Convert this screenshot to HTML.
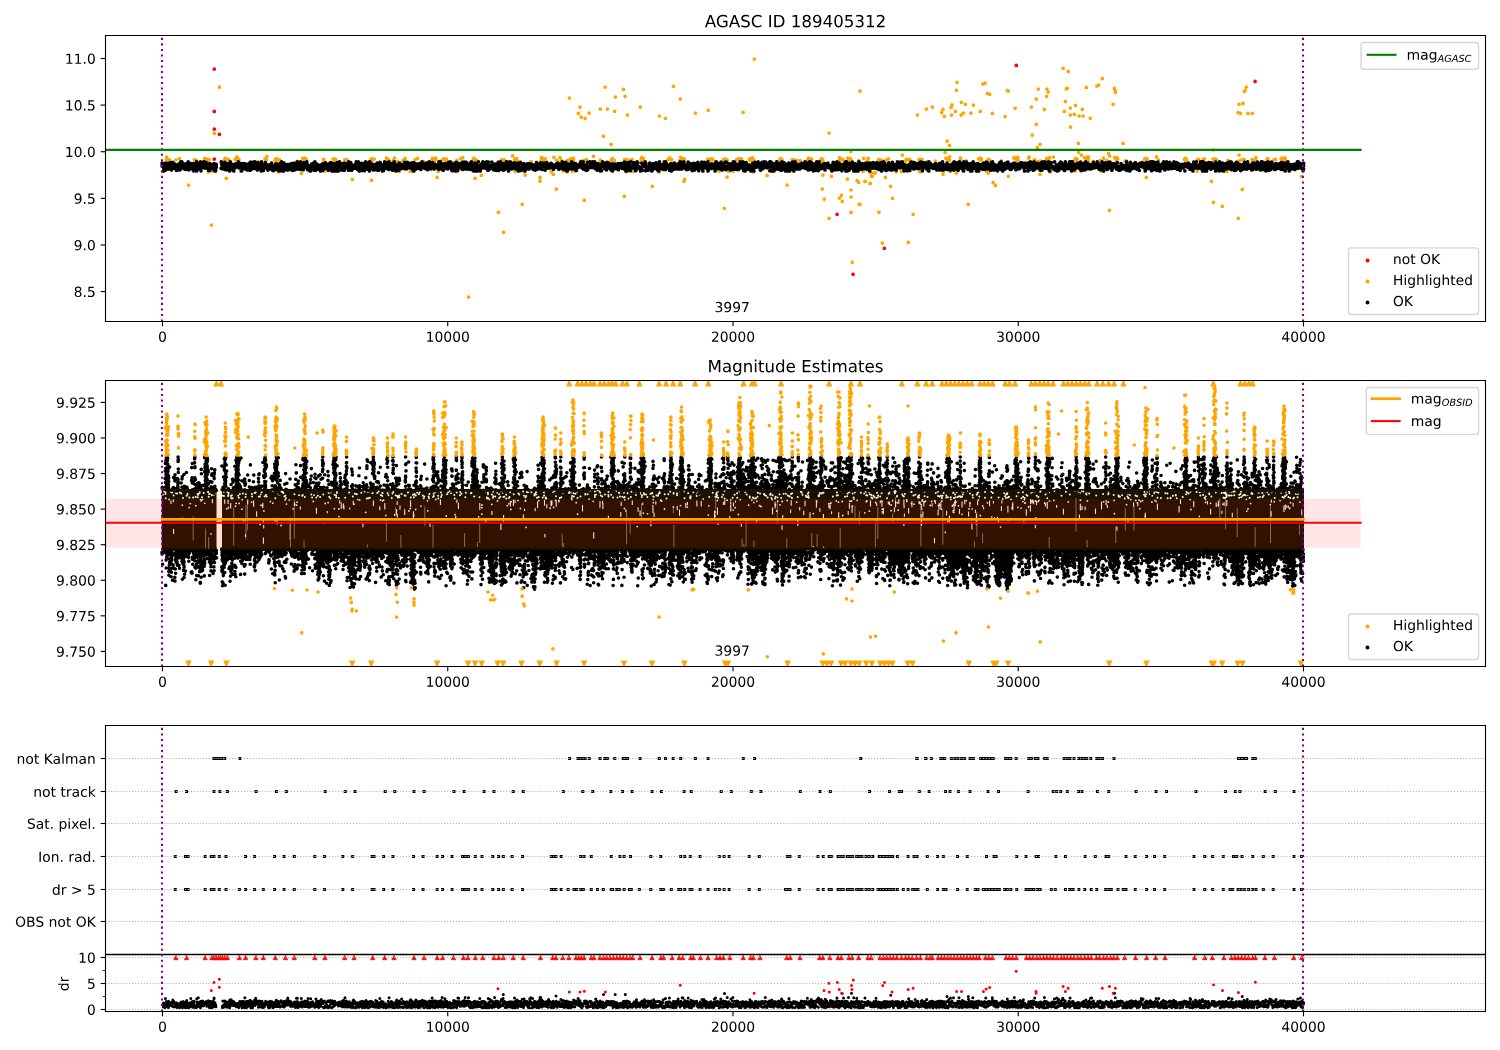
<!DOCTYPE html><html><head><meta charset="utf-8"><style>html,body{margin:0;padding:0;background:#fff}#w{position:relative;width:1500px;height:1050px;overflow:hidden;background:#fff}#w>svg{position:absolute;left:0;top:0}</style></head><body><div id="w"><svg width="1500" height="1050" viewBox="0 0 1500 1050"><path d="M163.2 171.4h0m3.2-11.9h0m0.1 0h0m0.1-2.4h0m0 1.3h0m0.1 1.1h0m0.1-0.4h0m1 0.3h0m1.4 2h0m0.5-1.2h0m6.2-0.2h0m3.5-1.5h0m9.2 26.6h0m5.8-25.3h0m1.8 0.2h0m8.5-1.3h0m0.5 1.1h0m0.3-0.1h0m0.2-0.8h0m1.2 0.8h0m0 0.4h0m1.3 11.8h0m0.4-11.7h0m0.5-0.6h0m2.3 65.5h0m1.8-53.9h0m1 0.3h0m0.1-38.1h0m5.1-46.3h0m4.8 73.1h0m1-1.9h0m0.3 1.2h0m0.3-0.6h0m0.5 19.4h0m2.4-18.8h0m6.5-0.1h0m1.5-2.4h0m0.3 1.9h0m0.1-1.9h0m0.2 2.6h0m0.2 0.5h0m1-0.9h0m0.4 0.1h0m19.3 2.6h0m6.8-2.9h0m0.8-0.2h0m0.3 1.4h0m0.2 0h0m0.5-3.5h0m8.3 3.9h0m0.5-0.5h0m0.2 0.1h0m0.3-1.6h0m0.5 1.6h0m0.1-0.6h0m0.4-0.6h0m1.1 13h0m1.4-12.1h0m17.6 1.4h0m4.2 12.1h0m1.3-14.8h0m0.8-0.3h0m0.3 0.7h0m0.7-0.2h0m0.9-0.5h0m0.3 2.1h0m0.2-1.2h0m0.3 0.5h0m4 11.4h0m13.2-11.8h0m0.3 0.1h0m0.5 2h0m0 9.8h0m8.9-12.1h0m0.7-0.2h0m0.4 1h0m0.6-0.1h0m0.2-0.2h0m0.5 0.7h0m0.2-1h0m0 0.8h0m9.1-0.4h0m2.2 0.2h0m5.3 19.5h0m18.7-20.3h0m0.4 21.2h0m0.8-21.5h0m0.4 1.7h0m0.2-1.2h0m1.4-0.3h0m12.2-0.8h0m1.9 1.2h0m4.8 1.1h0m1.4-2.5h0m2.7 3.3h0m2 10.1h0m3.7-10.9h0m2.2-2.1h0m0.1 3.6h0m5 9.2h0m2 0h0m3.1-11.6h0m2.3-1.2h0m5.6 3h0m8.7-1.2h0m0.6-1.8h0m0.4 2h0m1.3 1.4h0m1.4-3.7h0m0.1 1.5h0m1.4 17.8h0m1.1-6h0m4.1-11.4h0m0.5-0.4h0m0.8-0.7h0m0.4 0.7h0m0.9 0.2h0m0.2 0.2h0m1.4-0.8h0m0.1 0.9h0m10 0.5h0m0.3-0.1h0m0.3 11.1h0m3.4-12.8h0m2.1-1.1h0m5.9 139.4h0m4.6-137.9h0m0.2 1.3h0m0 0.1h0m0.5-2.3h0m0.1 1.2h0m0.4 0.2h0m0.5 0.4h0m0.2 18.2h0m1.2-18.2h0m5.1 15.3h0m16.8-13.4h0m0.1 50.3h0m0.3 0h0m3-52.4h0m1 0.6h0m0.3-0.1h0m0.5 71.9h0m0.6-72.7h0m0.1 0.6h0m4.1 1.6h0m4.3-5.9h0m2.2 4.2h0m0.3-1.2h0m0.1 0.1h0m0.1 12.4h0m1.6-12.7h0m0.4 2.2h0m3 0.7h0m2.1 42.7h0m1.9-32.8h0m0.9 3.6h0m6.1-13.5h0m8.8 15.8h0m0 3.7h0m1.3-20.5h0m0.1-2.9h0m0.2 1.2h0m0.9 1.2h0m0.2-1.8h0m0 1.6h0m1.9 0h0m0.6-1h0m1 2.8h0m5 10.2h0m2.2 2.4h0m0.5-16.9h0m2.4 31.7h0m0.5-28.8h0m3.2-2.8h0m1.2 2.9h0m2 10.6h0m4-10.4h0m0 11.4h0m2.2-74h0m0.1 61.9h0m1.2-0.8h0m0.6 1.2h0m0.9-0.2h0m0 11.1h0m0.3-12.8h0m0.2 1.4h0m0.5 1.6h0m0.2-1.8h0m0.2-1.3h0m4.7-44.9h0m1.7-6.3h0m1.1 10h0m0.1 44.1h0m2.7-0.7h0m0.4 39.8h0m0.8-82h0m0.1 42.5h0m1.2-1.3h0m2.7-46.4h0m4.3 43.2h0m6.9-47.2h0m0.1 51.1h0m0 0.2h0m3-24.1h0m1.7-49.2h0m2.3 22h0m3.7 35.2h0m0.2 16h0m0.4-0.4h0m0.2-0.8h0m0.2-0.6h0m0.3 0.2h0m0.7 1.5h0m0.7-0.1h0m0.4 0.3h0m0.4-49h0m0.8-14.3h0m8-7.7h0m0.9 106.9h0m0.3-36.6h0m0.5-63.4h0m1.1 75.5h0m0.5-12.2h0m0.7-44.5h0m2.6 45.4h0m2-1.2h0m1.2 11.9h0m7.1-64.1h0m0.8 52.5h0m0.4-1.4h0m0 1.4h0m0.2-0.9h0m0.3-1.1h0m1 1.4h0m0.1 0.5h0m0.2-1.1h0m9 27.9h0m6.8-14.3h0m0.3-56h0m6 2.3h0m2.6 41.3h0m1.1-0.4h0m0.5-1.3h0m2 2.1h0m0.2-0.2h0m1.6-73.5h0m6.7 74h0m0.1 0.7h0m0.1-61.9h0m0.2 61.3h0m0.1-3.1h0m1 2.6h0m1.1-0.6h0m0.2 0.1h0m0.5-0.5h0m0.6 22.5h0m0.2-22.2h0m0.4 20.2h0m10.8-66.3h0m12.5 46h0m0.4-48.8h0m0 49.8h0m0.5 0.2h0m1.3 0h0m0.2-0.5h0m0.8-0.5h0m0.2-0.4h0m1.5 0.3h0m2.4 2.6h0m4 9.4h0m4.2-11.6h0m0.9 48.7h0m0.6-49.2h0m0.4-0.2h0m1.8 18.2h0m0.1-16.8h0m1 10.7h0m1 0.2h0m4 0.1h0m3.5-11.8h0m1.8-0.5h0m0.1-0.1h0m1.1 0.1h0m0.3 0.1h0m0.1 1.2h0m0.6-0.5h0m0.7-1h0m1.7-46.5h0m6.2 47h0m0.8 1.2h0m0.7-1.9h0m0.4 0.5h0m0.4-1.1h0m0.2 2.3h0m0.9-2.4h0m0.5 14h0m0.6-11.8h0m0.5-101h0m12.8 116.3h0m7.1-4.3h0m5.6-11.3h0m0.3 0.4h0m0.2 0h0m0.2-1.5h0m0.1 1.4h0m0.4-0.7h0m0.2 1.2h0m0.1-0.3h0m0.7-0.8h0m5.1 25.6h0m5.1-25.2h0m1.4-0.1h0m3.1 0.5h0m3.4 0.3h0m7.7-0.8h0m0.8-0.3h0m0 0.4h0m0.1-1.7h0m1 1.3h0m1.2 0.9h0m0.2 0h0m0.5-1.2h0m9 0.8h0m0.5-0.6h0m0.8-0.7h0m0 1.6h0m0.4 28.8h0m0.3-29.6h0m0.3 15.6h0m0.3-13.1h0m1.1 37.1h0m4.8-66h0m0 85.2h0m2.3-42h0m8-16.5h0m0 38.2h0m0.1-40.5h0m0.4 0.4h0m0.3 2.3h0m0.4-0.6h0m0.2 0.2h0m0.1-0.6h0m0.5 36.2h0m0.9 6h0m0.5-41.7h0m2.4 2h0m2.2 17.4h0m0.5-20.9h0m0.6 2.2h0m0.3-1.4h0m0.3 0.4h0m0.5 0.6h0m0.6-1.5h0m0.3 1.3h0m0.4-8.4h0m0.1 8.4h0m0.1 30.2h0m0 7.1h0m0 15.2h0m1.2 50h0m4.8-81.7h0m1.5 1.7h0m0.1-21.8h0m0.4 43.8h0m0.9-113.2h0m0 113.2h0m3.2-32.9h0m0.4-13h0m1.3 23h0m0.5 0h0m1.8-20.4h0m0.7-2h0m0.3-0.8h0m1.8 25.2h0m0.3 0h0m0.6-10.5h0m0.5 3.4h0m0.9 0h0m2-3.4h0m1.1 0h0m3.1-13.3h0m0.4 52.7h0m0.2 0h0m0.7-52.3h0m0.1 0.3h0m0.1-0.2h0m1.4 0h0m0.9 83h0m3.1-65.7h0m0.4-17.2h0m2.6-1.3h0m2.2 27.4h0m2 12h0m3.6-26.5h0m5-0.5h0m1.1-16.2h0m2.9 6.5h0m1.1-2.2h0m0.5 0.8h0m0.5-0.2h0m1 82.3h0m0.6-83.2h0m1.5 1.4h0m2.7 53.8h0m4.3-99.2h0m1.7 44.5h0m0.1 11.4h0m0.8-12h0m0.2 12.8h0m0.2-11.3h0m0.2-0.1h0m1.3-0.7h0m4.4-50.6h0m0.9 52.4h0m5.1-54.4h0m2.9 54h0m6.5-48.5h0m1.2-3.2h0m0.2 64.9h0m0.1-3.2h0m1.1-54.8h0m0.8 36h0m0.9 5.9h0m1.1-17.1h0m0.4 18h0m0.7 0.9h0m0.3-1h0m0.5 1.2h0m0.4-14.8h0m0.2 14.7h0m0.1-3.3h0m0 3.5h0m0.5 11.1h0m0.9-64h0m0.3 7.7h0m0.6-10.2h0m3.4 6.5h0m0.9-21.1h0m0 82.8h0m0.8-90.8h0m3.3 75.7h0m0.3 1.5h0m0.4-44.4h0m0.3-12.8h0m2 10.8h0m2-8.8h0m0.8 56.6h0m2.1 43.4h0m2.6-91.2h0m2.5-8h0m5.1 53.7h0m1.1-0.3h0m0.7-47.1h0m0.2 48.5h0m0.4-1.9h0m0.5 1.2h0m1.5-75.2h0m2.2-0.9h0m1.1 88.1h0m1.2-77.8h0m0.6 66h0m0.3 13.7h0m1.1-13.5h0m0.3-65.3h0m2.6 19.1h0m0.8 69.2h0m2.3 2.8h0m5.8-24.5h0m3.9-44.3h0m2.3-26h0m0.9 0.5h0m0 85.2h0m5.4-18.4h0m1.4-49.6h0m0.3 49.5h0m0.5 0.7h0m0 0.5h0m1.1 1.5h0m0.2-1.2h0m0.6-2h0m0.3 2.5h0m10.6-1.7h0m0.5-0.9h0m2.2-50.1h0m0.9 28h0m2.1 24.5h0m0.5 1h0m1.4-61.5h0m0 25.2h0m0.9 37.2h0m0.2-13.8h0m0.9-58.6h0m1.7 55.2h0m0 30h0m0.2-13.2h0m4.1-51.7h0m2.3-13.1h0m0 62.5h0m0.3-69.7h0m0.5 69.2h0m0 2.2h0m0.5-0.8h0m0.3-0.4h0m0.1-67.3h0m0.3 68.5h0m0.3-0.9h0m0.5-1.9h0m0.8 4.3h0m0 9.9h0m3.2-14.8h0m9.7-88.8h0m1.2 43.1h0m1.1-10h0m0.9-12.5h0m1.1-0.6h0m0.9-16.9h0m2 36.6h0m0 7.1h0m0.3 12h0m0.6 44.4h0m3.1-57.2h0m0.7 45.5h0m0.2 11.3h0m0.1-12.4h0m0.1-53.3h0m0 53.3h0m0.6 1.9h0m1.2-1.6h0m1.1-15.6h0m0.3 8.9h0m0.5-36.3h0m2.3 39.1h0m0.9-45.7h0m0.8 6.6h0m1.5 41.6h0m1.7-70.2h0m0.1 71.8h0m0.1 0.4h0m0.2-2.5h0m0 3.3h0m0.5-0.8h0m1-0.4h0m0 2h0m0.5-4.1h0m1.6-38.8h0m2.9 43.1h0m3.7-75.4h0m1.7-0.9h0m1.6 75.6h0m1 10.3h0m1.1-92.4h0m1.2 79.6h0m3.1 2.3h0m2-7.1h0m0.8 56.9h0m0.3-54.3h0m3.4-51.7h0m1.2-16h0m0.4 69.4h0m0.4-67.1h0m0.3 1.7h0m0.2 66.1h0m0.6 1.6h0m0 0.2h0m0.5-2.6h0m0.9 1.3h0m0.1 0h0m0.1 0h0m5.3-15.5h0m2.1 17.6h0m1-0.1h0m18.4-1.7h0m0.9 0.1h0m0.3-0.9h0m0.2 2.1h0m0.2-0.5h0m0.1 17.4h0m0.4-17h0m0.2-1.5h0m0.7 1.6h0m2.6 1.4h0m6.3-5h0m2 3.1h0m25.8-0.4h0m0.5 0h0m0.7-1.6h0m0.3 2.5h0m0.2-1.3h0m0 0.5h0m0 0.9h0m0.3-1.2h0m10.9 0.5h0m0 11.2h0m1.4-11.8h0m4.7 0h0m1.1-0.4h0m7 22.5h0m1.8-22.4h0m0.2-9h0m0 52.3h0m0.3-42.6h0m0 0.2h0m0.1 0.3h0m0.3-0.3h0m1-0.3h0m0.7-0.4h0m0.5 0.8h0m6 46.3h0m2.9-35.1h0m2-0.1h0m0.8-10.5h0m0.3-0.1h0m9.7-47.9h0m0.2 48.6h0m0.1 57.1h0m0.8-114h0m0 50.8h0m1.5-41.7h0m0.7 46.6h0m1 29.4h0m0.8-86h0m0.9 56h0m0.3-68h0m0.8-0.8h0m1.2-3.5h0m1.7 26.3h0m4.1 46.1h0m0.1 0.9h0m0.1-47h0m3.1 46.6h0m0.1 0.2h0m0.4-2.7h0m11.1 1.5h0m0.8-0.5h0m6.2 1.3h0m1.6-0.5h0m5.5-0.5h0m0.7-0.7h0m2.9 2.2h0m0.1-0.2h0m0.1-2.2h0m0 1.8h0m0.1 0.5h0m0.2-1.2h0m16.2 17.3h0" stroke="#ffa500" stroke-width="3.7" style="stroke-linecap:round" fill="none"/><path d="M162.1 163.2h0m0 2.9h0m0.2-1.7h0m0.4-1.1h0m0.7 3.8h0m0 3.8h0m0.1-6.3h0m0.2 3.4h0m0.4-2.7h0m0.2 3.9h0m0.1-1.6h0m0.2 0.7h0m0.5-5h0m0.4 6.8h0m0.2-4.1h0m0.6 2h0m0.1-3.8h0m0.1-1h0m0.3 0.4h0m0.3 3.4h0m0.3 1h0m0.3-1.8h0m0 0.4h0m0.4 2.5h0m0.2-1.8h0m0 0.2h0m0.4-1.1h0m0.5 0.6h0m0.2-0.1h0m0 0.8h0m0.6-5h0m0 2.7h0m0 0.7h0m0.7-1.8h0m0 3.4h0m0.1 0.1h0m0.7 2.1h0m0.4-3.6h0m0.1-2.3h0m0.3 1.8h0m0.3-1.3h0m0.1-2.2h0m0.4 5.6h0m0.4-3.9h0m0.2 1h0m0.3 1.1h0m0.1 0.9h0m0.5 1.3h0m0.2-2.5h0m0.1-1.6h0m0.5 1.3h0m0.2 0.5h0m0.1-0.3h0m0 0.3h0m0.7 0.7h0m0.2 3.7h0m0.4-4.3h0m0.1 0.4h0m0.5 3h0m0.1-2.3h0m0.4-2.7h0m0 1.9h0m0.1 2.4h0m0.5-2.4h0m0.3-2.6h0m0.4 1.6h0m0.2 4.5h0m0.1-4.2h0m0.2 1.2h0m0.5-2.3h0m0.3-2.7h0m0.2 6.9h0m0.1-2.1h0m0 2.3h0m0.8-5.8h0m0.1-1.3h0m0.2 5.7h0m0.4-0.8h0m0.2-2.4h0m0.5-0.8h0m0.2 2.8h0m0.1-0.3h0m0.5-1.9h0m0.1 2h0m0.5 2.6h0m0.1-2.7h0m0.2-1.3h0m0.4 4.2h0m0.1-2.1h0m0.3 0.3h0m0.2 2.2h0m0.2-0.1h0m0.4-1.6h0m0.2-4h0m0.2 3.4h0m0.4-1.1h0m0.4-2.1h0m0 2.9h0m0 0h0m0.5-4.9h0m0 7.1h0m0.2-4.8h0m0.6 3.7h0m0 1.9h0m0.5-3.7h0m0.4 2.2h0m0.2-3.5h0m0.4-1.2h0m0.2 1.5h0m0.3 0.3h0m0 3.1h0m0.7-4.8h0m0.4 0.7h0m0.1 2.7h0m0.1-2.7h0m0.3-0.4h0m0.3 0.3h0m0.3 5.7h0m0.3-6.3h0m0 7.1h0m0.5-2.6h0m0.5-2.8h0m0 2.3h0m0.5-3.2h0m0.1 3.5h0m0.2-1.3h0m0.4 2.1h0m0.1-3.2h0m0.1 1.9h0m0.6 3.4h0m0.1-9h0m0.2 1.9h0m0.6 2.5h0m0.2-2.3h0m0.2 0.6h0m0.1 2.1h0m0.2-1.2h0m0.3 0h0m0.5 3.5h0m0.2-3.9h0m0.3 3.9h0m0.1-5.6h0m0.1 5h0m0.5-0.6h0m0.3-5.9h0m0.6 6.2h0m0 2.7h0m0.2-6.7h0m0.4 0.8h0m0.2 1.7h0m0.3-1.4h0m0.4-2.5h0m0.1 3.3h0m0.3 0.7h0m0.3 0.4h0m0.1-0.3h0m0.4-4.9h0m0 3.2h0m0.1-0.3h0m0.4-2.3h0m0.2 5.4h0m0.1-3.1h0m0.7 2.2h0m0.1-3.3h0m0 0.7h0m0.7-2h0m0 4.9h0m0.4-0.8h0m0.3 1.6h0m0.3-3.2h0m0.2 1.5h0m0.3-1.3h0m0.3-0.8h0m0.4 3.3h0m0 0.1h0m0.1-0.5h0m0.5 3.3h0m0.8-6.9h0m0 2h0m0.1 2.9h0m0.1 1.2h0m0.1 0.8h0m0.2-1.6h0m0.8-3.1h0m0.3 1.6h0m0.1-0.3h0m0.2-0.8h0m0.1-1.6h0m0.6 2.1h0m0.1 1.1h0m0.2-2.6h0m0.5-0.6h0m0.2-0.6h0m0.1 2.4h0m0.1-2.5h0m0.7 6.1h0m0.1-6.5h0m0.2 1.5h0m0.3 2.4h0m0.3-2h0m0.1 2.1h0m0.4 3.3h0m0.2-0.7h0m0.2-4.4h0m0.4-1.5h0m0 0.9h0m0 2h0m4.8 1.1h0m0.1-6.4h0m0.5 2h0m0.3 1.4h0m0.3 1.9h0m0.2-3.4h0m0.8 2.5h0m0 0.2h0m0 2.5h0m0.4-3.5h0m0.1 1.8h0m0.1 0.1h0m0.6-1.7h0m0.3-3.4h0m0.1 6.8h0m0.4-2.6h0m0.3 2.8h0m0 0.3h0m0.5-0.1h0m0.4-2.7h0m0.1 1.5h0m0.1 0.7h0m0.1-2.4h0m0.5-2.9h0m0.3 5h0m0 1h0m0.2-5.2h0m0.7 1h0m0.1 1h0m0.3 2.2h0m0.5-2.1h0m0.1 3.1h0m0.1 1.2h0m0.6-8.7h0m0.1-0.3h0m0.2 4.8h0m0.1-1h0m0.5-0.2h0m0.1 2h0m0.3-3.3h0m0.1 5.3h0m0.4-1.6h0m0.7 1.3h0m0.2-4.7h0m0 2.4h0m0.2-0.8h0m0.4 0.2h0m0.3 1h0m0 3.6h0m0.3-5.5h0m0.1 3.4h0m0.7-2.3h0m0.3 0.2h0m0 0.8h0m0.3-3.7h0m0.2 1.7h0m0.3-1.5h0m0.6 1h0m0.1 0.7h0m0.1 1h0m0.4 0.1h0m0.1-1.3h0m0.1-1.1h0m0.8 0.7h0m0.1-3.2h0m0 2.8h0m0.5 3.1h0m0.4-1.5h0m0.1-0.4h0m0.5 1.1h0m0.1-1.2h0m0.3-2.5h0m0.2 1.6h0m0.2 1.5h0m0.2-1.1h0m0.3 0.3h0m0.1 5.3h0m0.4 0h0m0.2-3.4h0m0.1-2.4h0m0.5 0.3h0m0.2-0.6h0m0.3-0.9h0m0.3-0.4h0m0.4 2.3h0m0 0.7h0m0 2.1h0m0.8-1.8h0m0.2-3h0m0.3 4.5h0m0.2-0.8h0m0.4-0.4h0m0.2 1.9h0m0.5-4.7h0m0 3.7h0m0.1 1h0m0.3-2.9h0m0.1 1.4h0m0.3 2.3h0m0.9-4.3h0m0.1 0.4h0m0 4.1h0m0.4-1.7h0m0.3-2.7h0m0.3 3.5h0m0.1-5.8h0m0.2 5.7h0m0.4-5h0m0.2 2.3h0m0.1 0.1h0m0.1 3.8h0m0.6-4.2h0m0.1-3.8h0m0.5 3.1h0m0.6 3.8h0m0.1-3.1h0m0.1 0.6h0m0.3 0.4h0m0.3-4.1h0m0.3 2.5h0m0.1 0.1h0m0.1 1.7h0m0.2 0.9h0m0.7-6.2h0m0.4 3.1h0m0 0.7h0m0.3-3.8h0m0.2 6.5h0m0.3-3.3h0m0.2 0h0m0.3 1h0m0.1-0.2h0m0.4 1.8h0m0.2 1h0m0.5 0.7h0m0.3 0.7h0m0.4-7.5h0m0 2.3h0m0.2 1.2h0m0.1-0.3h0m0.3-0.8h0m0.4-1.3h0m0.3 4.8h0m0.3-1.3h0m0.3-1.3h0m0.4-0.5h0m0 2.3h0m0.3-0.3h0m0.3-1.9h0m0 3.6h0m0.6-5.1h0m0 6.9h0m0.3-9h0m0.3 3h0m0.1 3.1h0m0.7-1.4h0m0.2-1h0m0.5 0.6h0m0 4.2h0m0.6-5.5h0m0.2 0.6h0m0 0.2h0m0.2-0.8h0m0 3.2h0m0.4-0.3h0m0.4-4.5h0m0.3-0.6h0m0 4h0m0.4-2.4h0m0.5 0.5h0m0 3.1h0m0.7-0.8h0m0.1-2.3h0m0.1 3.5h0m0.3-0.5h0m0.4 2.3h0m0.3-2.1h0m0.3 1.3h0m0.2-2.1h0m0.1-0.8h0m0.5-0.5h0m0.1 0.6h0m0.2-0.5h0m0.2 0.7h0m0.2-2h0m0.6 0.7h0m0.3 2.3h0m0.1-1.7h0m0.4 2.2h0m0.1 1h0m0.1-6.1h0m0.3 2.6h0m0.5 4.3h0m0.2-3.9h0m0.4 0.3h0m0.3-0.3h0m0.2 0.4h0m0 4.1h0m0.8-3.7h0m0 0.4h0m0.2-1.8h0m0.1 0h0m0.1 1.4h0m0.4 0.1h0m0.5 0.9h0m0.1-3.9h0m0 2.6h0m0.6 0.6h0m0.2 2.1h0m0.2-5.5h0m0.7 0.9h0m0.2 0.1h0m0.2 4.1h0m0.2-3.6h0m0 4.7h0m0.4-4.5h0m0.3 1.7h0m0.6-1.7h0m0.1 5.4h0m0.2-7.1h0m0.1 4h0m0.2-1h0m0.3 1h0m0.3-1.6h0m0.4-0.3h0m0.4 2h0m0.3-6h0m0.1 5.1h0m0.3-3.9h0m0 4.2h0m0.2 3.6h0m0.5-6.5h0m0.3-0.1h0m0.1 2.2h0m0.7 2h0m0 2.4h0m0.2-7.7h0m0.3 3.5h0m0 0.7h0m0.1 0.2h0m0.6 0h0m0.5-1.6h0m0.3 1.1h0m0.1 1.9h0m0.2-2.8h0m0.5-1.1h0m0 1.9h0m0.1-2.1h0m0.5 1h0m0.2-1.3h0m0.3 4.9h0m0 0.6h0m0.6-4.7h0m0.4 1.2h0m0.2 2.3h0m0.2-1.6h0m0.2-2.9h0m0.3 0.5h0m0.3 1.3h0m0.3 0.3h0m0.1-0.8h0m0.5 3.9h0m0.1-2.4h0m0.3-2.1h0m0.5-1.5h0m0 4.9h0m0.1-0.6h0m0.4-1.7h0m0.5 4.2h0m0.2-4.6h0m0.4-1.5h0m0.1 0.9h0m0.2-1.9h0m0.6 0.1h0m0.2 3.1h0m0.2 1.1h0m0 2.2h0m0.2-5.2h0m0.2 0h0m0.6 2.3h0m0.2-1.7h0m0.3-1.9h0m0.2 2.2h0m0.6 2.3h0m0 1.3h0m0.4-7.2h0m0 4.6h0m0.1 1h0m0.5-0.8h0m0.1-1.6h0m0.6 2.5h0m0.3 0.4h0m0 0.1h0m0.4 1h0m0.1-2.2h0m0.3-1.1h0m0.2-0.9h0m0.6-3h0m0.2 3.9h0m0.3 3.2h0m0 0.3h0m0.3-1.7h0m0.1 1.4h0m0.5-1.3h0m0 1.8h0m0.1-1.4h0m1.2-4.3h0m0 1.5h0m0 4.4h0m0.5-7h0m0.2 2.3h0m0.1 0.2h0m0.2 2.8h0m0.2-3.9h0m0.3 1.7h0m0.4 1.6h0m0.1-0.1h0m0.3-1.9h0m0.3 0.9h0m0.6-2h0m0 0.8h0m0.4 1.6h0m0.1-4.8h0m0.4 2.8h0m0.4 3.5h0m0 1.4h0m0.1-2.8h0m0.5 3h0m0.2-1.3h0m0.4-0.4h0m0.3 0.2h0m0.1-2.2h0m0.4-0.2h0m0.4 3.1h0m0.1-3h0m0.2 4.9h0m0.4-1.8h0m0.1-2.4h0m0.4 1.8h0m0.3-4.3h0m0.2 1.9h0m0.1 1.2h0m0.8-2.7h0m0 2h0m0.1-2.3h0m0.2-1h0m0.4 3h0m0.3-0.2h0m0.2 0.3h0m0.1 3.8h0m0.6-0.9h0m0.3-7.4h0m0.2 4.1h0m0.2 0.8h0m0.3 0.9h0m0 2.6h0m0.4-1.9h0m0.4 0.8h0m0.3-5h0m0.3 3.1h0m0.3-2.5h0m0 3.3h0m0.1 0.7h0m0.4-2.2h0m0.6 0.9h0m0 1.6h0m0.5-3.4h0m0.2 0.3h0m0.3 1.8h0m0.2-1.6h0m0 1.2h0m0.2-2h0m0.7 5.5h0m0.3-4.4h0m0.2-1.6h0m0 0.2h0m0.1 2.3h0m0.3-0.7h0m0.6 0h0m0.4-0.3h0m0 4h0m0.5-4.6h0m0.1-2.2h0m0.1 4.1h0m0.4-0.5h0m0 1.3h0m0.7-4.1h0m0.1 4.6h0m0.3-4.3h0m0.1 1.7h0m0.7 1h0m0.2-4.5h0m0.1 2h0m0.2 1.1h0m0.1-1.8h0m0.3 3.5h0m0.3 0.2h0m0.1 0.4h0m0.2-3.1h0m0.7 0.9h0m0.3 1.8h0m0.2-2.4h0m0.1 4.8h0m0.2-1.9h0m0.4-4.3h0m0.5 0.6h0m0 2.1h0m0.3-1.5h0m0.4 2.6h0m0.3 1.3h0m0.2-6.5h0m0.2 3.8h0m0.1-1.2h0m0.2-0.7h0m0.8 2.5h0m0.1 3.8h0m0.2-6.5h0m0.5 5.2h0m0.3-6.2h0m0.1 3.1h0m0.1 1.6h0m0.3-2.1h0m0.3 2.3h0m0.3-2.2h0m0 0.7h0m0.3 4.1h0m0.4-5.8h0m0.4-1.2h0m0.2 2.2h0m0.1-1.2h0m0.4 6h0m0.3-2.8h0m0.1-2.3h0m0.4 4h0m0.2-3.1h0m0.4-4h0m0.5 2.2h0m0 1.1h0m0.2 0.9h0m0.3 4h0m0.1-7.9h0m0.4 4.1h0m0.1 0.5h0m0.4-2.8h0m0.2 2.5h0m0.1-5.4h0m0.3 3.2h0m0.6 0.7h0m0.3 1h0m0.3-0.8h0m0.3-1.5h0m0.3 5.6h0m0.1-6.2h0m0.3 3h0m0.4 2.2h0m0.1-4.3h0m0.1 4.3h0m0.3-4h0m0 3.9h0m0.6-2.4h0m0.3-2.1h0m0.3 2.5h0m0.1-3.8h0m0 7.1h0m0.2-4.4h0m1 1.7h0m0.1-3.2h0m0.2 1.7h0m0.2 1.5h0m0.5-3.7h0m0.1 3.9h0m0.1-0.9h0m0.2 0.8h0m0.5-0.2h0m0.2-0.3h0m0.1-2.3h0m0.4-0.2h0m0.3-0.2h0m0.1 5.7h0m0.3-8.3h0m0.5 0.9h0m0.2 4.7h0m0.3-1.5h0m0.3-1.2h0m0.4 3.6h0m0.2-5.9h0m0.1 7.5h0m0.2-5.2h0m0.3-0.7h0m0.4 6.1h0m0.3-5.4h0m0.1 0.8h0m0.4 1.3h0m0.1-0.4h0m0.1 0.3h0m0.6 1.9h0m0.2-1.5h0m0.2-1.4h0m0.2 1.2h0m0.7 0.6h0m0.1-2h0m0.1-0.1h0m0.4 1.4h0m0.1-2.2h0m0.3 1.1h0m0.3 2.4h0m0.3-1h0m0.1-5.3h0m0.1 6.1h0m0.5-4.9h0m0.7-0.2h0m0.1-0.6h0m0.1 7.2h0m0.3-0.4h0m0.2-0.2h0m0.1-7h0m0.4 6.8h0m0.3-2.6h0m0.3 4.8h0m0.3-5.7h0m0.2 4.2h0m0.2 0.8h0m0.4-4.2h0m0.1 3.7h0m0.4-4.6h0m0.3 0.9h0m0.2-2.7h0m0.3 3h0m0.4 0.2h0m0 3.9h0m0.2-2.5h0m0.7-1.2h0m0.2-2.3h0m0 1.2h0m0.5 4h0m0.2-4h0m0 1.3h0m0.4-3.6h0m0.1 2h0m0.1 5.3h0m0.8-3.4h0m0.3-5.3h0m0 7.2h0m0.4-2.6h0m0.5 0h0m0.1-2.4h0m0.4 2.1h0m0.1 0.7h0m0.3 0.2h0m0.3-1.3h0m0.4 1.2h0m0 2.3h0m0.5-3h0m0.1-2.4h0m0 1.2h0m0.4-2.9h0m0.4 8.7h0m0.1-0.1h0m0.3-8.9h0m0 5.3h0m0.1 1.9h0m0.6-5h0m0.6 2h0m0.2 0h0m0.2 1h0m0.5-2.9h0m0 4.2h0m0.1-0.3h0m0.4-0.4h0m0.3-1.8h0m0.2-0.7h0m0.1 0.2h0m0.3 4.6h0m0.5-3.5h0m0.4 0.9h0m0.2 0.4h0m0.1-1.3h0m0 3.2h0m0.1-5.1h0m0.6 4.4h0m0.3-1.7h0m0.5 1.8h0m0.4-1.6h0m0.1 2.2h0m0.1-2.7h0m0.3-3.8h0m0.2 1.6h0m0.2 5.3h0m0.9-4.9h0m0 5.1h0m0.2-3.3h0m0.3-2.2h0m0.3 1.2h0m0.1 2.4h0m0.5 0.6h0m0.1-6.7h0m0.1 5.1h0m0.5-4h0m0 1.3h0m0.3 2.4h0m0.4-0.8h0m0.1-0.8h0m0.5 1.6h0m0.1-2.4h0m0.4 1.7h0m0.2 4.5h0m0.5-4.9h0m0.2 2.5h0m0.2 2.2h0m0.1-3h0m0.3-2h0m0 0h0m0.8-3.8h0m0 3.1h0m0.2 3.3h0m0.7-3.8h0m0 3.8h0m0.1-1.7h0m0.2 1.4h0m0.2-2h0m0.1-3h0m0.9-0.4h0m0.1 3.7h0m0.2-2.1h0m0.6 3.1h0m0.1 0h0m0.2 1.9h0m0.3-0.6h0m0.2-1.2h0m0.2-0.9h0m0.2-4.6h0m0.1 7.6h0m0.5-4.8h0m0.2 0h0m0.5-0.5h0m0.1 2.6h0m0.2-1h0m0.2 0.1h0m0 0.7h0m0.8-2.2h0m0.1 2.6h0m0.3-3.4h0m0.5 6.6h0m0.3-3.3h0m0.1 2.5h0m0.2-2h0m0.2-1.7h0m0 1h0m0.6-2.5h0m0.3-2.3h0m0.2 6h0m0.5-3.2h0m0.2 0.2h0m0.1-0.5h0m0.4 4.9h0m0.2 1.6h0m0.2-3.7h0m0.2 1.6h0m0.3-0.6h0m0.2 0.2h0m0.2 0.9h0m0.5-1h0m0.1-1.3h0m0.7-2.3h0m0 1.3h0m0.2 1.7h0m0.2 2.6h0m0.4-3.2h0m0.1-3.9h0m0.4 2.4h0m0.2-2.6h0m0.3 2.5h0m0.2-0.4h0m0.2 2.1h0m0.3 1.5h0m0.6-2.8h0m0.1-0.8h0m0.2 0.8h0m0.4-1.1h0m0.3 2.1h0m0.2-0.7h0m0.2 1h0m0.1-2h0m0.4-0.4h0m0.1 3.1h0m0.4-0.7h0m0.4-0.9h0m0.1 0.5h0m0.2-4.5h0m0 6.3h0m0.7-1.5h0m0.5-2.9h0m0.1-0.6h0m0.3 3.3h0m0.1-0.8h0m0.3 2.7h0m0.5-5.9h0m0 3.1h0m0.2-3.6h0m0.4 4.6h0m0.2-0.2h0m0.4-2.1h0m0.6 0.2h0m0.1 0.1h0m0 0.6h0m0.2-2.3h0m0.3 3.3h0m0.2-0.2h0m0.3 1.5h0m0.1-0.7h0m0.3-2.6h0m0.7-0.8h0m0.1 0.4h0m0.3-1h0m0.2 2.2h0m0.1 2.8h0m0 0.1h0m0.6-3.1h0m0 2h0m0.5-1.5h0m0.3 4.5h0m0.2-7.5h0m0.5 8.2h0m0.3-1.1h0m0.1-5.4h0m0.4 0.5h0m0.1 0.7h0m0.1-2.2h0m0.1 2.2h0m0.6 1.3h0m0 2.4h0m0.6-3.5h0m0.2 2.1h0m0.1-0.6h0m0.3-3.2h0m0.3 1.7h0m0.6 1.8h0m0.1 0.5h0m0.2-2.8h0m0.1 0.5h0m0.6 1.3h0m0.5-0.1h0m0.2-2.4h0m0 3.9h0m0.1-5h0m0.5 3.7h0m0.3 1.7h0m0.5-1.7h0m0.1 1.6h0m0.2 0.5h0m0.2-5.3h0m0.1 2.4h0m0.1 1h0m0.6-5.5h0m0.3 5.3h0m0.2-0.8h0m0.3-1.1h0m0.1 1h0m0.5-0.3h0m0 0.5h0m0.1 0.4h0m0.1-2.5h0m1 0.1h0m0.2 1.1h0m0.1 2.8h0m0.5-5h0m0.1 3.9h0m0.1-0.1h0m0.7-3.2h0m0 0.8h0m0 0h0m0.7 3.6h0m0.3-5.5h0m0 6.2h0m0.2 0.6h0m0.1-4.4h0m0.5 3h0m0.3-2.9h0m0.1 0.9h0m0.5-2.2h0m0.3-2.2h0m0.2 3.7h0m0.2-0.9h0m0.2 0.3h0m0.5 3.6h0m0.2-3.8h0m0.1 3.7h0m0 0.5h0m0.2-2.3h0m0.7-2.9h0m0.1 2.5h0m0.4-0.5h0m0.5-3.3h0m0.2 4.9h0m0.1 0.5h0m0.3-4.3h0m0.2 0.9h0m0.2 1.7h0m0.5 1h0m0.1 1.7h0m0.2-4.8h0m0.4 0.3h0m0.2 2.6h0m0.2-1.3h0m0.4 1.9h0m0.4-0.1h0m0.1-0.9h0m0.1-0.1h0m0.2-1.3h0m0.5 0.3h0m0.2 1.3h0m0 0.1h0m0 0.4h0m0.9-2.7h0m0.1 3.8h0m0.4 0.9h0m0.4-7.4h0m0.1 0.4h0m0.1 3.3h0m0.3 3.3h0m0.2-6h0m0.3 5.3h0m0.4-6.3h0m0.1 0.5h0m0.1 4.5h0m0.6 1h0m0.1-3.7h0m0 1.7h0m0.9 1.5h0m0.4-2h0m0 4.4h0m0.6-3.3h0m0.1-2.4h0m0.2 6.1h0m0.3-6.4h0m0.3 1h0m0 1.2h0m0.5-0.3h0m0.3-0.2h0m0.2-0.1h0m0.1 0.2h0m0.5 0.5h0m0.1-2.4h0m0.2 3.4h0m0.2 0.8h0m0.3-1.9h0m0.4-0.2h0m0.5-0.5h0m0 3.4h0m0.6 0.1h0m0.1-2.8h0m0.1 0.2h0m0.2-2.2h0m0.2 0.7h0m0.1-2.3h0m0.6 4.6h0m0.2-3h0m0.3 2h0m0.6-4.1h0m0.1 0.7h0m0 5.2h0m0.5-2.2h0m0.1-3.2h0m0.3 4.9h0m0.4 2.7h0m0.4-5.9h0m0 6.6h0m0.3-3.9h0m0.2-0.1h0m0.4-2h0m0 1.8h0m0.5-1.9h0m0 2.5h0m0.4-1.5h0m0.2 3h0m0.5-3.5h0m0.3-2.1h0m0.1 7.7h0m0.2 0.2h0m0.3-3.6h0m0.1-1.2h0m0.3 2.3h0m0.5-1.1h0m0.1-4.9h0m0.2 2.7h0m0.6 2.4h0m0.4 3h0m0.1-3.3h0m0 0h0m0.2-0.2h0m0.4-0.8h0m0.4 1.1h0m0.1-3.6h0m0.3 1.8h0m0.4 1.3h0m0.4-0.5h0m0.1 0h0m0.4-1.9h0m0.2 3.5h0m0.2-1.2h0m0.2-1.2h0m0.4-2.4h0m0.2 3.3h0m0.4-3h0m0.3 6.1h0m0.2-5.1h0m0.2-2.3h0m0.1 5h0m0.2-3.9h0m1 2.6h0m0 0.6h0m0.1 0.8h0m0.1 0.7h0m0.5-2.4h0m0 0.5h0m0.2-3.9h0m0.4 6.8h0m0.2-3.9h0m0.6-2.7h0m0 6h0m0.2-1.3h0m0.3-3.5h0m0 2.5h0m0.2-1.4h0m0.7 4.4h0m0.3-4.1h0m0 0h0m0.3 0h0m0.1 2.3h0m0.1-0.5h0m1.1-2.8h0m0 5.3h0m0.2-3.6h0m0.2 0.3h0m0.3-2.8h0m0.1 5.1h0m0.6 0h0m0.4-6.3h0m0.1 2.9h0m0 2.9h0m0.1 0.6h0m0.6-2.1h0m0.1 2.5h0m0 1h0m0.3-3.4h0m0.8 1.9h0m0.4-3.2h0m0.1 5.9h0m0.1-2.5h0m0.2-0.6h0m0.3 1.5h0m0.4-6.1h0m0.2 5.7h0m0.3 2h0m0.4-5.4h0m0 2.2h0m0.4-1.2h0m0.5-3h0m0.3 6.7h0m0.1-4.1h0m0.2 4.8h0m0.1-3.2h0m0.2-0.5h0m0.6-0.6h0m0.3-4.7h0m0.2 4.1h0m0 1.4h0m0.6 2.2h0m0.1-2.6h0m0.6-1.4h0m0.2 4.1h0m0.1-4h0m0 5.2h0m0.2-5.4h0m0 2h0m0.8-2.1h0m0.4 2.5h0m0.2-4.1h0m0.1 1.8h0m0.3 0h0m0.4 2.2h0m0.2-5.9h0m0.5 0.3h0m0 5.3h0m0.2-3.8h0m0.1 4.2h0m0.3-2.2h0m0.8 1.1h0m0.1 0.4h0m0.1-4h0m0.7 1.4h0m0.1 0.9h0m0 1.6h0m0.5-0.7h0m0.4-0.2h0m0 2.2h0m0.2-6.5h0m0.3 6.4h0m0.3-4.3h0m0.2 2.4h0m0.3-1.8h0m0 5.6h0m0.5-8.2h0m0.1 4.3h0m0.2 0.6h0m0.7 0.1h0m0 2.3h0m0.1-0.5h0m0.4-3.1h0m0.1 2.9h0m0.3-1.2h0m0.7-0.4h0m0.1-0.9h0m0.1 1h0m0.4-1.5h0m0.2-3.5h0m0.3 0.8h0m0.5 4.1h0m0.2-3.2h0m0 2.3h0m0.2 2.5h0m0.6 1.1h0m0.2-3.1h0m0.6-0.4h0m0 2.3h0m0.1-1.7h0m0.2-0.7h0m0 0.3h0m0 1.5h0m0.7-3.9h0m0.2 6.2h0m0.3 0h0m0.5-3.4h0m0.1-2.2h0m0.3-0.7h0m0.6 3.7h0m0.1 2.9h0m0.1-4.6h0m0.7 1.1h0m0.1-4.6h0m0.1 0.1h0m0.1 3.6h0m0.2 4.4h0m0.5-5.2h0m0.2-0.7h0m0.2 1.3h0m0.2-1.8h0m0.4 1.5h0m0.2-3.7h0m0.4 7.2h0m0.6-0.7h0m0.1-4.9h0m0.1 0.6h0m0.1 4.6h0m0.1-5.1h0m0.3 2.3h0m0.9-2.2h0m0.2 1.8h0m0.1 4.7h0m0.2-5.7h0m0.2 4.3h0m0.2-4.1h0m0.6 4.2h0m0.1-3.7h0m0.2 4h0m0.1-5.1h0m0.3 3.6h0m0.4-2.1h0m0.1 0.5h0m0.3-0.1h0m0.2-4.1h0m0.4 0h0m0.1 3.8h0m0.3 2.9h0m0.8-3.9h0m0.1 3.3h0m0.1 0.9h0m0.4-4.5h0m0 6.5h0m0.2-5.4h0m0.3-0.6h0m0.6 3.1h0m0.1-2.6h0m0.4 2.3h0m0.1-5.8h0m0.3 3.7h0m0.2 1.4h0m0.3-3.4h0m0.1-1.1h0m0.6 6.4h0m0.1-2.6h0m0.1 0.5h0m0.3-3.1h0m0.3 1.5h0m0.4 1.7h0m0.3-2.8h0m0 0.5h0m0.2 2.6h0m0.4 0.8h0m0.7-3.4h0m0.1-1.7h0m0.1 2.4h0m0.3 3.1h0m0.3-2.5h0m0.2-1.2h0m0.5 0h0m0.1 4.2h0m0.2-3.6h0m0.1 0.6h0m0.1 3.2h0m0.7-3.3h0m0.4-1.2h0m0.1 2.2h0m0.2-3.8h0m0.6 7.9h0m0.1-4.3h0m0.1 1h0m0.3-3.8h0m0.4 1.8h0m0.2 3.7h0m0.3-1.9h0m0.1 1.4h0m0.3-0.6h0m0.2-5.5h0m0.1 2.7h0m0.5 2.7h0m0 2.4h0m0.6-6.3h0m0.3 0.9h0m0 0.6h0m0 1.9h0m0.7-3.1h0m0.1 1.8h0m0.1-1.3h0m0.6 1.3h0m0.4-2.8h0m0.1 5.4h0m0.4-4.2h0m0.1 0.1h0m0.5 6.1h0m0.1-4.1h0m0 3.6h0m0.7-2.8h0m0.6-2.6h0m0 1.1h0m0.1 2.6h0m0.4-4.2h0m0.1 3.7h0m0.1-1h0m0.3 0.4h0m0.1-3.7h0m0.3 2.4h0m0.4 2.4h0m0.3-0.8h0m0.3-0.7h0m0.3 1.8h0m0.1-5.3h0m0.1 2.5h0m0.6-0.8h0m0.3 1.6h0m0.4 0.7h0m0.2-3h0m0.1 0.8h0m0.2-1.4h0m0.4 2h0m0.1-0.5h0m0.2 2h0m1-2.4h0m0 2.4h0m0.2-1.7h0m0.1-1.1h0m0.2 4.7h0m0.4-2.8h0m0.2 0.2h0m0.1-0.8h0m0.5 0.5h0m0.3 0.3h0m0.5 0.6h0m0 2.6h0m0.5-5.3h0m0 3.4h0m0.2-1.5h0m0.5-4h0m0.2 0.2h0m0.2 5.4h0m0.4-2h0m0.2-0.5h0m0 1.6h0m0.6 0.1h0m0.2 1.4h0m0.3-4.5h0m0.1 1.6h0m0.1-1.8h0m0.4 4.2h0m0.3-3.2h0m0.2-0.8h0m0.1 4.1h0m0.8-5.7h0m0.2 2.3h0m0.2 1.8h0m0.1-0.2h0m0.1 0.1h0m0.1-1.5h0m0.5 2.3h0m0.3 1.9h0m0.2-3.1h0m0.9 0.2h0m0.1-3.4h0m0 0.3h0m0.4 2.2h0m0.5-0.2h0m0 0.9h0m0.2-3.4h0m0.4 1.7h0m0 0.5h0m0.4 4.9h0m0.2-5.4h0m0.2 1.5h0m0.4 2.4h0m0.1-4.8h0m0.2 2.4h0m0.3-3.3h0m0 5.1h0m0.4-5.2h0m0.6 4.7h0m0.1-0.1h0m0.3-3.2h0m0.6 0.7h0m0 1.7h0m0.1-1.1h0m0.6 2.6h0m0.1-2.5h0m0.4-0.5h0m0.2 0.6h0m0.2 1.3h0m0.1 0.6h0m0.5-4.1h0m0.4-0.2h0m0.1 1.9h0m0.2-1.1h0m0.2 0.7h0m0.4-0.4h0m0.6 1.7h0m0.1 0.7h0m0 0.1h0m0.4 1.3h0m0.2 1.1h0m0.3-3.5h0m0.2-0.5h0m0 0.3h0m0.2 2.3h0m0.6-0.9h0m0.5-1.4h0m0.2 1.5h0m0.7-3.1h0m0 1.2h0m0 0h0m0.3 1.7h0m0.1-0.1h0m0.1 0.3h0m1-1.7h0m0.2-2.4h0m0 4.2h0m0.2-1.5h0m0.1-0.6h0m0.2 1.7h0m0.5 2.4h0m0.2-2.9h0m0.1-1.7h0m0.4 2h0m0.2-2.5h0m0.5 2h0m0 0.9h0m0 1h0m0.4-1.2h0m0.5-1.1h0m0.2 2.1h0m0.3-2.5h0m0.6 1h0m0.1-4.4h0m0.3 3.8h0m0.1 3.1h0m0.2-2.5h0m0.1-0.9h0m0.7 3.9h0m0.2-4.8h0m0.3-1.4h0m0 5.1h0m0.2-3.8h0m0.6-1h0m0.1 1.7h0m0.1 0h0m0.4 1.9h0m0.2-4.7h0m0.4 8.1h0m0.3-0.4h0m0.5-0.2h0m0.1 1.1h0m0.2-2.1h0m0.2-1.1h0m0.3-2.3h0m0.3-0.2h0m0.1-0.7h0m0.7-0.3h0m0.1 4.9h0m0.1-2.2h0m0 1.3h0m0.2-0.3h0m0.8-2.5h0m0 2h0m0.4-2.6h0m0.1 1.1h0m0.3 1.4h0m0.4 1.3h0m0.4-6.7h0m0.1 5.2h0m0.3 1.9h0m0.3-5.1h0m0.3 0.5h0m0 0.6h0m0.5 2.5h0m0 0.5h0m0.4-4.7h0m0.6 5.1h0m0.2-3.8h0m0.2 2.5h0m0.3 1.6h0m0.2-0.7h0m0.3-2.4h0m0.1-2h0m0.4 7h0m0.2-3.8h0m0.3 3.5h0m0.4-1.9h0m0.1-2.6h0m0.4 1.1h0m0.1-1.4h0m0.2 1.4h0m0.4-1.6h0m0.3-0.5h0m0 2h0m0.4-2h0m0.4 0.7h0m0.2 0.8h0m0.3-2.2h0m0.1 2.1h0m0.4 0.8h0m0.6-5.1h0m0 2.7h0m0.3 1.5h0m0.2 0.2h0m0.2-1.5h0m0 0.1h0m0.5-0.7h0m0 1.8h0m0.3 2.1h0m0.6-3.4h0m0.4-2.8h0m0 2.5h0m0.3 4.5h0m0.2-1.2h0m0.2 0.5h0m0.4-2.6h0m0.2-0.2h0m0.1-0.5h0m0.6 4.7h0m0.2-2.9h0m0.3 3.3h0m0.4-5h0m0.1 2.3h0m0.3 3h0m0.3-5.1h0m0 2.3h0m0.5 0.6h0m0.4-5.7h0m0 7.3h0m0.4-3h0m0.4-4.2h0m0.2 4.2h0m0.3 0.9h0m0.3-5.4h0m0 5h0m0.5-5.3h0m0.2 0h0m0.2 5.6h0m0.3-1.1h0m0.3-1.4h0m0 1h0m0.4 1h0m0.3-4h0m0.2 4.1h0m0.4-2.4h0m0.2 1.6h0m0 1.1h0m0.3-5.5h0m0.4 2.8h0m0.1 2.4h0m0.3-1.7h0m0.5-0.9h0m0.5 1.6h0m0.1 1.4h0m0.2-5.6h0m0.5 3.1h0m0.1-0.8h0m0.1 4.5h0m0.1-1.3h0m0.1-3.6h0m1.2 1.2h0m0 2.2h0m0.1 1.3h0m0.2-4.1h0m0.2 5.8h0m0.4-6.6h0m0.4 4.7h0m0.3-0.6h0m0.1-0.2h0m0.1-3.1h0m0.3 1.3h0m0.4 1.7h0m0.1-2.4h0m0.7-0.6h0m0.1 5.1h0m0.2-0.4h0m0.1 1.8h0m0.1-0.7h0m0.7-4.7h0m0.3 5.1h0m0.1-3.8h0m0.3-0.5h0m0.2-2.3h0m0.2 1.6h0m0.2-3.7h0m0.3 3.2h0m0.4 0.8h0m0.5-2.2h0m0 2.6h0m0.1-1h0m0.4-2h0m0.3 4.9h0m0.2-1.6h0m0.4-1.6h0m0 2.5h0m0 0.3h0m0.9 1.2h0m0.1-1.8h0m0.2 2.7h0m0.5-7.5h0m0.2 3.6h0m0.2-2.1h0m0.5 1.2h0m0.1-0.5h0m0.2-2.1h0m0.3 3.6h0m0.1-2.6h0m0 3.1h0m0.5 1.5h0m0.3-3.5h0m0.2-0.1h0m0.4 3.4h0m0.2-1.8h0m0.4-0.1h0m0.4 3.8h0m0.3 0.3h0m0.2-6.1h0m0.1-0.2h0m0.4 1.9h0m0.1-0.1h0m0.5 5.3h0m0.2-3h0m0.3 0.5h0m0.1-1.5h0m0 1.7h0m0.7-4.4h0m0 0.8h0m0.7 3h0m0.1-3.3h0m0.3 1.4h0m0.3-2h0m0 1.4h0m0.2-1.1h0m0.3 4.3h0m0.3-3.7h0m0.3-0.6h0m0 3.5h0m0.4-2.6h0m0.6 3.4h0m0.3-2.9h0m0.1 1.5h0m0.3-3.5h0m0.2 0.7h0m0.2 5.2h0m0.3-5.7h0m0.3 1.9h0m0.3 1.1h0m0.6-1.7h0m0.2 0h0m0.1-1.2h0m0.1-0.4h0m0.2 2.7h0m0.2-1.3h0m0.8-1.4h0m0 0.2h0m0.3 0.8h0m0.1-1h0m0.1 4.6h0m0.6-2.7h0m0 2.7h0m0.2-2.6h0m0.4-1.6h0m0.5-0.6h0m0 5h0m0.3 0.3h0m0.4-6.8h0m0.5 0.5h0m0 3.8h0m0.4-0.7h0m0 2.9h0m0.5-2.2h0m0 2.5h0m0.2 2.1h0m0.3-5.3h0m0.6 5.3h0m0.2-4.8h0m0 3.2h0m0.6-3.3h0m0 1.7h0m0.3-5.1h0m0.3 3.1h0m0.2-2.1h0m0.5 2.2h0m0 0.5h0m0.1-2.3h0m0.3 3.9h0m0.5-1.2h0m0.4 1.3h0m0.1 2.7h0m0.4-8.8h0m0.1 4.8h0m0 0.7h0m0.9 0.6h0m0.2-2.1h0m0.1 0.8h0m0.1-0.7h0m0.3-0.4h0m0.5 2.1h0m0.2-2.2h0m0.1 0.1h0m0.3-2.9h0m0.2 5.1h0m0.3-4.8h0m0.2 2.3h0m0.5 2.9h0m0.5 1.2h0m0.1-1h0m0.2 2.3h0m0.2-5.8h0m0.1 5.4h0m0.7-1.2h0m0.1-1.2h0m0.1-2.3h0m0.3-3.7h0m0 5.7h0m0.5 0.1h0m0.3-4.8h0m0.4 4.7h0m0.2-1.1h0m0.8 1.3h0m0.1-1h0m0 0h0m0.4 1.4h0m0.1-0.3h0m0.1 0.2h0m0.4 0.8h0m0.1 2h0m0.4-3.1h0m0.5 1.3h0m0.3-6h0m0 5h0m0.3-1h0m0.4 3.2h0m0.1-6.2h0m0.3-0.4h0m0.2 1.7h0m0.1 0h0m0.4-1.8h0m0.3 2.4h0m0.1-0.2h0m0.7-2h0m0.2-0.3h0m0.2 0.5h0m0.2-2.1h0m0.3 4.9h0m0.2 3.9h0m0.2-7.1h0m0.4 5.1h0m0.1-1.4h0m0.3 1.6h0m0.5-2.2h0m0 1.4h0m0.3 0.3h0m0.3 1.8h0m0.1-2h0m0.3 0.7h0m0.5-2.4h0m0.1-0.3h0m0.4-0.1h0m0 0.8h0m0.5-3.7h0m0.5 3.1h0m0.1-1.5h0m0.2 2h0m0.1-0.5h0m0 3.5h0m0.3-3.7h0m0.9 4.8h0m0.2-2.6h0m0.1 0h0m0.3-4.5h0m0 3.2h0m0 3.1h0m0.9-2.5h0m0.1 1.1h0m0.3-3.8h0m0.4 0.5h0m0.1-0.4h0m0.1-1.2h0m0.5 4.6h0m0.1-1.4h0m0.3-3h0m0.4 1.4h0m0.4 3.2h0m0.1-5.7h0m0.1 3h0m0 0.4h0m0.2-0.5h0m0.7 0.1h0m0 0.7h0m0.5 3.4h0m0.3-2.1h0m0.3-0.3h0m0.1 0.2h0m0.4-3.6h0m0 6.7h0m0.3-1.9h0m0.5-7.1h0m0 4.8h0m0.1-2.1h0m0.6 4.2h0m0.4-2.3h0m0.3 0.5h0m0.2-1.3h0m0.2 1.4h0m0.5-1.5h0m0.4 0.4h0m0.3-1.4h0m0 2.2h0m0.4 2.2h0m0.1-4.4h0m0.4 0.4h0m0.1 4.4h0m0.1-2.7h0m0.2-2.5h0m0.5-2.3h0m0.3 4.6h0m0.3 0.6h0m0.7-5.2h0m0 7.5h0m0.1-4.9h0m0.3 3.1h0m0.1-1.1h0m0.2-0.6h0m0.4 0.4h0m0.1-2.1h0m0.2 3.9h0m0.5-0.2h0m0.1-1.6h0m0.5-0.1h0m0.2 1.2h0m0.1-1.8h0m0.3 0.1h0m0.6 2h0m0.4-1.9h0m0 4.5h0m0.3-3.1h0m0.4 0.3h0m0.1-3.7h0m0.5 2.8h0m0.2-0.2h0m0.2 4.5h0m0.1-3.4h0m0.4-3.6h0m0.2 0.9h0m0.6 0.5h0m0 4.1h0m0.1-3.9h0m0.4 1.9h0m0.1 2h0m0.2-3h0m0.7-0.3h0m0.3-3h0m0.1 2.3h0m0.3 1.8h0m0.1 1.4h0m0.1-1.4h0m0.4-2.2h0m0 1h0m0.2 0.8h0m0.9-1.3h0m0.1 2.6h0m0.1 0.7h0m0.3-4.4h0m0 3.8h0m0.1-0.6h0m0.7 1.3h0m0.1-3.6h0m0.2-1h0m0.7 2.5h0m0.3 2.1h0m0.1-5.5h0m0.6 4.5h0m0.1 0.7h0m0.1-6.7h0m0.4 4.7h0m0.2-0.8h0m0.2-3.4h0m0.1 5.1h0m0.2 1.1h0m0.6 0.3h0m0.2-6.3h0m0.3 0.3h0m0.3 1.8h0m0 3h0m0.2 0h0m0.6-2h0m0.1 0.2h0m0.3-3.2h0m0.1-0.8h0m0.4 5.6h0m0.5-2.4h0m0 2.2h0m0.7-1.7h0m0.2 0.6h0m0.1 0.1h0m0 2.1h0m0.5-0.4h0m0 1.6h0m0.4-3h0m0.6-1.5h0m0 0.6h0m0.3 3.8h0m0.2-6h0m0.3-1.4h0m0.3 2.1h0m0.1 1.4h0m0.3 1.7h0m0.4-2.6h0m0.1-0.9h0m0.3 2.5h0m0.6 2h0m0.1-4.7h0m0.2 1.8h0m0.4-0.8h0m0.2 0.9h0m0 3.8h0m0.4-4.8h0m0.1 0.2h0m0.1 2.5h0m0.6 3.4h0m0.2-3.5h0m0.1 1.8h0m0.8-5.6h0m0.2 4.1h0m0 1.9h0m0.6-2.9h0m0.2-0.6h0m0.1 4.1h0m0.2-3.7h0m0.3 1.3h0m0.4-3.8h0m0.4 0.5h0m0.1 2.9h0m0.1 1.7h0m0.2-1.9h0m0.3 0.4h0m0.5-2.2h0m0.1 0.8h0m0.3-0.9h0m0.3 0.5h0m0.2-3.1h0m0.1 4.2h0m0.5-1.2h0m0.2-1.1h0m0.1 6.4h0m0.5-3.5h0m0.2-1.8h0m0 3.1h0m0.6-2h0m0.4-1h0m0.2-0.8h0m0 3.2h0m0.5-3h0m0.4 3.2h0m0.1-5.9h0m0.6 5h0m0.1-3.2h0m0 4.8h0m0.4-3.6h0m0.1 5.7h0m0.3-4.3h0m0.3 1.1h0m0.2-2.7h0m0.5 0.5h0m0.2-3.1h0m0 2.7h0m0.5-1.2h0m0.4 3.8h0m0.3-2.1h0m0.1-0.8h0m0.2 1h0m0.1 1.6h0m0.1 0.4h0m0.5 0.3h0m0.1-1.9h0m0.5 1.9h0m0.7-6.2h0m0 4h0m0.1 5h0m0.4-4h0m0.1-1.4h0m0.4 0.4h0m0.3 2.8h0m0.1-3.8h0m0.2 1.7h0m0.8-2h0m0.1 3h0m0.1-2.4h0m0.1 2.7h0m0.1 0.6h0m0.6 0h0m0.4-4.7h0m0.1 1.8h0m0.1 1h0m0.3-1.5h0m0.4-0.8h0m0 3.6h0m0.5-3.3h0m0.1 2.7h0m0.2-0.2h0m0.4-1.2h0m0.2 2.1h0m0.6-1.4h0m0.1-2.5h0m0.4 6.8h0m0.2-7.3h0m0.6 3.9h0m0.2-2.2h0m0.1-3.4h0m0.1 0.8h0m0.1 3.7h0m0.5-1h0m0.1 2.8h0m0.1 0.4h0m0.3-3.7h0m0.6 1.7h0m0.5-2.3h0m0.1-0.8h0m0.2 2.8h0m0.1-1h0m0 1.4h0m0.6-0.5h0m0.1 2.5h0m0.6-2.7h0m0 0.6h0m0.5-3.7h0m0 4.2h0m0.3-5h0m0.5 4.3h0m0.1 2.9h0m0.4-0.2h0m0.2 0.8h0m0.1-2.1h0m0.7-2h0m0.1 0.3h0m0 0.3h0m0.4 0.1h0m0 1.1h0m0.6-3.6h0m0.5 4.2h0m0.1-5.6h0m0.2 4.4h0m0.1 0.1h0m0.6-4.9h0m0.1 7.4h0m0.6-7.4h0m0 4.4h0m0.2 2.3h0m0.3-0.8h0m0.1-0.6h0m0.4-1.5h0m0.4 0.7h0m0 0.5h0m0.4-0.9h0m0.2-2.8h0m0 1.8h0m0 0.4h0m1 2.8h0m0.3-4.4h0m0 3.6h0m0.5-2.6h0m0 3.5h0m0.1 1.1h0m0.6-5.5h0m0.1 0h0m0.3 2.2h0m0.2 2.7h0m0.1 0.5h0m0.3-4.8h0m0.5 0.2h0m0.5 1.4h0m0.1 1.5h0m0.1-2.2h0m0.3-3.8h0m0.5 5.1h0m0.5-3h0m0 5.2h0m0.2-5.1h0m0.2-1.9h0m0.4 1.6h0m0.1 1.8h0m0.5 1.6h0m0.3-1h0m0.1 0.8h0m0.6-0.3h0m0.1 2.7h0m0.2-3.5h0m0.5-1.5h0m0.1 1.4h0m0.2-0.7h0m0 3.9h0m0.3-0.9h0m0.2-2.7h0m0.3 4.2h0m0.2-1.9h0m0.3-2.2h0m0.7-0.5h0m0.2 0.2h0m0.1-3.3h0m0.2 3.6h0m0 1.6h0m0.1-2.4h0m0.9 3.2h0m0.1-1.5h0m0.2-0.9h0m0.6 0h0m0.1-0.9h0m0.3-0.2h0m0.2-2.5h0m0 3.5h0m0.5 2.6h0m0.4 2.7h0m0.1-2.3h0m0.1-1.9h0m0.6 0.4h0m0.1-0.9h0m0.2-2.8h0m0.2 1.8h0m0.1 5.9h0m0.4-3.3h0m0.6 1.2h0m0.1-6.1h0m0.4 4.2h0m0.5-2h0m0 3.3h0m0.3-1.4h0m0.3-0.5h0m0.1 1.8h0m0.2-3.3h0m0.4 2.6h0m0.4 1.5h0m0 0.5h0m0.2-1.1h0m0.4-3.2h0m0.1-0.1h0m0.6 2.5h0m0.1-1.2h0m0 1.4h0m0.5-0.4h0m0.3 3.6h0m0.3-3.5h0m0.3-1.8h0m0.1-0.4h0m0.5 0.6h0m0 3.2h0m0.5-5.6h0m0 3.5h0m0.4 1.5h0m0.4-1.9h0m0.1-2h0m0.3 6.4h0m0.5-5.1h0m0.1 1.8h0m0.3-5.2h0m0.4 4.3h0m0.1 0.1h0m0.3-1.5h0m0.1 2.2h0m0.1-2.6h0m0.7 2.1h0m0.1-1.6h0m0.4-0.6h0m0.2-1.9h0m0 1.6h0m0.2 2h0m0.7-4.6h0m0.1 2.9h0m0.1 1.2h0m0.7-1.6h0m0.1 1.2h0m0 1.1h0m0.5-3.2h0m0.2 4.2h0m0.3-2.4h0m0.2 4.4h0m0.3-5.8h0m0 6.3h0m0.4-5.2h0m0.2 0.7h0m0 1.9h0m0.8-5.2h0m0.1 5.4h0m0.2-0.8h0m0.4 1.7h0m0.3-3.4h0m0.2 2.9h0m0.4-2.9h0m0.1 2.3h0m0.2-3.5h0m0.3-2.2h0m0 1.8h0m0.8 2.2h0m0 0.6h0m0.4-1.8h0m0.2 0.9h0m0.2-3.6h0m0.4 4h0m0.3-2.2h0m0.5 4h0m0.1-1.5h0m0.1 0.5h0m0.3-3h0m0.1 2.5h0m0.3-0.6h0m0.4-0.9h0m0.2 2.1h0m0.1-1h0m0.7-1.4h0m0.5-2.6h0m0 3.3h0m0 5.5h0m0.1-6.6h0m0.3 0.5h0m0.7-2.7h0m0 5.2h0m0.3 3.8h0m0.2-2.1h0m0.3 0h0m0.3-0.2h0m0.7-0.9h0m0.2-1.1h0m0 3.1h0m0.4-3.6h0m0.1 4.8h0m0.3-7.3h0m0.3 1h0m0 2.6h0m0 0.9h0m0.6-1.5h0m0.5 3.1h0m0.2-1.4h0m0.4-1.5h0m0.3 0.6h0m0.2 1.2h0m0.2-2.9h0m0.3-3.8h0m0.1 0h0m0.5 5.2h0m0.2 1.5h0m0.1-3.1h0m0.3 0h0m0.4 1.5h0m0.1-2.7h0m0.8 3.4h0m0.1 1.8h0m0.1-1.8h0m0.1 1h0m0.5-3.8h0m0.1-1.5h0m0.3 2.4h0m0.4-1.1h0m0.1 3.5h0m0.3 2.1h0m0.3-2.2h0m0.1-4.1h0m0.2 1.7h0m0 1.1h0m0.3-4.9h0m0.8 7.5h0m0.1-4.1h0m0.3 1.5h0m0.3-4h0m0.1 4.6h0m0.3-0.5h0m0.4 2h0m0.1-5.7h0m0.2 1.3h0m0.3 2.9h0m0 2.7h0m0.6 0.8h0m0.3-4.8h0m0 3.3h0m0.5-3.6h0m0.5 3.9h0m0.2-3.8h0m0.1 5h0m0.2-6.8h0m0.7 0.3h0m0.1 1.9h0m0.1 1.2h0m0.1 0.7h0m0.3-5.2h0m0.3 3.1h0m0.6 0.8h0m0.1 4h0m0.3-4.1h0m0.4 2.3h0m0.2-3.7h0m0.2-0.8h0m0.2 1.7h0m0 0h0m0.4-3.2h0m0.2 4.4h0m0.5-0.2h0m0.1 0h0m0.4-5.3h0m0.2 5h0m0.4 2.6h0m0.2-5.1h0m0.4 6.4h0m0.1-2.1h0m0 0.4h0m0.3-0.8h0m0.5-5h0m0.3-1.5h0m0.1 2.5h0m0.8 2.8h0m0.1-1.4h0m0.1-1.1h0m0.2-0.5h0m0 2.2h0m0.4-0.6h0m0.3 3.1h0m0.3-0.5h0m0.2-0.5h0m0.4-0.3h0m0.3-1.6h0m0.2 1.8h0m0.3-3.4h0m0.2 0.3h0m0.1 0.5h0m0.6 3.1h0m0.1 0.7h0m0.3-2.5h0m0.4 1h0m0.1-3.3h0m0.1 3.9h0m0.9-1.2h0m0.2-3.6h0m0 1.9h0m0.2-1.9h0m0.1 4.2h0m0.6-1.9h0m0.2 0.9h0m0 0.5h0m0.1-2.4h0m0.5 0h0m0.2-0.9h0m0.5-0.1h0m0.2 2.4h0m0.3 2h0m0.4-6.1h0m0.1 4.3h0m0.1-3.6h0m0.3 2.4h0m0.5-2.6h0m0.5 6.2h0m0.1-0.6h0m0.2-2.6h0m0.1 2.6h0m0.3-4.1h0m0.4 2.5h0m0.5-1.6h0m0 1.7h0m0.3-0.3h0m0 3.7h0m0.2-2.6h0m1.1-5.4h0m0 4.9h0m0.1-4.2h0m0.1 3.3h0m0.4-4h0m0.2 4.3h0m0.2-1.4h0m0.3 0h0m0.1-2.2h0m0.4 2.8h0m0 4.1h0m0.5-4.8h0m0.4 1.4h0m0 1h0m0.3-3.5h0m0.4 6.5h0m0.3 0.7h0m0.2-4.8h0m0.3 3.5h0m0.3-5h0m0.1 1.8h0m0.6-1.9h0m0 2.6h0m0.1-2h0m0.5-1.1h0m0.3-0.2h0m0.2 6.6h0m0.5-3.8h0m0.2-4.6h0m0 5.4h0m0.7 2.6h0m0 0.4h0m0.1-3.9h0m0.5 1.2h0m0.4 3h0m0.2-3h0m0.2 2h0m0.3-7.7h0m0.2 2.1h0m0.3 2.3h0m0.1-0.4h0m0.3 3.1h0m0.5-3h0m0.3 0.1h0m0 0.1h0m0.5 1.1h0m0.4-0.4h0m0 1.2h0m0.1 0.2h0m0.2-2.5h0m0.1-0.7h0m0.8 1h0m0.1 0.7h0m0.2-2.7h0m0.3 2h0m0.3 1.5h0m0.2-1.1h0m0.5-3h0m0.2 0.8h0m0 2h0m0.3 3.6h0m0.3-3.2h0m0.3-1.7h0m0.5-0.7h0m0.3 2.6h0m0.1-0.5h0m0.4-0.9h0m0.2-0.3h0m0.2 1.6h0m0.2 0.3h0m0.1-2.2h0m0.4-1.8h0m0.4 2.1h0m0.1 1.1h0m0.3 0.8h0m0.3 0.7h0m0.5-1.6h0m0.1 0h0m0.2 1.8h0m0.2-2.2h0m0.2 0.9h0m0.4 0.1h0m0.5 1.5h0m0.2 1.3h0m0.4-1.3h0m0.1-3.3h0m0 5.9h0m0.7-3.2h0m0.1-1.6h0m0.2-2h0m0.2 4.6h0m0.1-6.4h0m0.5 2h0m0.2 1.7h0m0.1 0h0m0 1.2h0m0.7 2.1h0m0.1-3.4h0m0.4 3.9h0m0.6-3.3h0m0 1.8h0m0.1-5.5h0m0.3 2.7h0m0.3 1.5h0m0.3 1.2h0m0.2-6.3h0m0.2 5.8h0m0.5 1.9h0m0.1-3.4h0m0.4-0.4h0m0.2 0h0m0.2-1.4h0m0.4-0.6h0m0.1-0.6h0m0.4 3.2h0m0.1-0.1h0m0 2.4h0m0.8-3.6h0m0.2 4.5h0m0.2-0.7h0m0.3-1.8h0m0.4-1h0m0.1 3.7h0m0.3-3.3h0m0 4.2h0m0.5-6.1h0m0.4 2.7h0m0.5-2.4h0m0 0.5h0m0.2-1.2h0m0 0.4h0m0.6 2.1h0m0.3 1.5h0m0.1-1.6h0m0.5 1.2h0m0.3-5.6h0m0 1.6h0m0.4-1.8h0m0.2 8.9h0m0.2-6.9h0m0.3-2.1h0m0.5 4.3h0m0.1 0.7h0m0.3 4h0m0.1-4.9h0m0.4-1.3h0m0.2-0.7h0m0.3 2.1h0m0.5 1h0m0.1-2.1h0m0.1 1h0m0.1 4.1h0m0.1-6.7h0m0.7 0.6h0m0.4-0.3h0m0 1.2h0m0.4 0.9h0m0.7 0h0m0 1.4h0m0.1-1.6h0m0 2.6h0m0.2-1h0m0.5-1h0m0.2-4h0m0.4 4h0m0.6-2h0m0 1.2h0m0.4 5.5h0m0.2-3.5h0m0.2-1.9h0m0.4 2h0m0 0.3h0m0.6-3.9h0m0.1 1.7h0m0.1 5.3h0m0.6-6.9h0m0 0.6h0m0.5 1.9h0m0.1 2.5h0m0.2-0.4h0m0.3 0.7h0m0.3-2.8h0m0.1-0.6h0m0.6 5h0m0.1-0.5h0m0.2-1.8h0m0.5-6.7h0m0.1 6.1h0m0.1 0.7h0m0.3-4.6h0m0.2 5h0m0.4-4.5h0m0.6 3.4h0m0.3 0.9h0m0.1-4.8h0m0.2 0.7h0m0 1.8h0m0.6-0.1h0m0 2.8h0m0.1-3.2h0m0.1-2.5h0m0.7 2.5h0m0.3-0.8h0m0.4 0.7h0m0.1 0.8h0m0.1 1.5h0m0.2-1.1h0m0.6-0.6h0m0.2-3.1h0m0 5.1h0m0.7-3.5h0m0.2 1h0m0.2-1.7h0m0.2 2.7h0m0 0.7h0m0.6-4.8h0m0.3 6.1h0m0.2 0.2h0m0.2-1.7h0m0.4 1h0m0.1-4.1h0m0.4-0.7h0m0.2 2.7h0m0.5-0.8h0m0.1 1.7h0m0.2-4.4h0m0.2 3.6h0m0.4 4.3h0m0.7-7.7h0m0 1.5h0m0.2 1h0m0.2-1.4h0m0.3 1.3h0m0.2 0.8h0m0.4-1.8h0m0.2 0.7h0m0.2-0.9h0m0.2 3.8h0m0.1-3.3h0m0 2.5h0m0.8-4.7h0m0.2 4.9h0m0.1-2.8h0m0.9 1.1h0m0.1-1.2h0m0.1-0.3h0m0.4 0.9h0m0.3 2.9h0m0.1-0.7h0m0.1-0.6h0m0.3-2.6h0m0.1 1.7h0m0.5 1.3h0m0.3 1.1h0m0.1-5.8h0m0.2 3.3h0m0.1-0.2h0m0.2 2.8h0m0.8-2.7h0m0.1 3h0m0.4 0.5h0m0.1-0.3h0m0.2-5.6h0m0.2 0.9h0m0.5 1.8h0m0.1 3.3h0m0.5-6.2h0m0 3.5h0m0.1 1.6h0m0.3-1.6h0m0.7-4.2h0m0.1 2.3h0m0.3 6.1h0m0.1-6.7h0m0.2 4.4h0m0.2-1.9h0m0.6 0.4h0m0.2 1.7h0m0.2-4.3h0m0.3-2.6h0m0.1 3.4h0m0.1 0.1h0m0.6 1.1h0m0 2h0m0.4-4.9h0m0.4 3.4h0m0.3-2.4h0m0.3 1.3h0m0.1-1h0m0.2 5.6h0m0.4-4.2h0m0.4 2h0m0 0.3h0m0.3-0.2h0m0.6-0.4h0m0.1-1.4h0m0 0.2h0m0.5 2.4h0m0.1 0.2h0m0.3-6.6h0m0.4 2.7h0m0.3-0.3h0m0.4-0.6h0m0.4 1.5h0m0 1.1h0m0 2.4h0m0.5-3.2h0m0.3 1.6h0m0.2 1.9h0m0.6-3.5h0m0.1 3.5h0m0.1 0h0m0.3-7.6h0m0.4 3.6h0m0.1-1.4h0m0.4-0.2h0m0 2.6h0m0.4 2.1h0m0.4-3.9h0m0.4-0.6h0m0.2 2h0m0 0.3h0m0.4-1.5h0m0.2 4.2h0m0.3-2.8h0m0.2 2.2h0m0.3-1.6h0m0.2 2.8h0m0.3-3h0m0.3-2.1h0m0.3-1.4h0m0 3.5h0m0.3-5.2h0m0.7 3.3h0m0.2-0.7h0m0.1-0.3h0m0.3 0.7h0m0.1 2.6h0m0.6-0.7h0m0.1-1.8h0m0.5-0.7h0m0.1 3.5h0m0.3-5.7h0m0 3.6h0m0.4-0.3h0m0.7 0.3h0m0 1.2h0m0.1-0.7h0m0.5 0.5h0m0.2-4.8h0m0.1 3.1h0m0.3 2h0m0.1-3h0m0.6 3.9h0m0.2-1.3h0m0.2-0.2h0m0.3 4.4h0m0.1-3.4h0m0.4-0.6h0m0.1-2h0m0.4 2.1h0m0.2-1.9h0m0 2.5h0m0.6-1h0m0.3 0.8h0m0.1 0.4h0m0.8 0.7h0m0 2.4h0m0.2-0.3h0m0.4-2.7h0m0.1-2.2h0m0.2 1.4h0m0.2-0.7h0m0.2 0.1h0m0.6-1.8h0m0.3 3.6h0m0.3-3.4h0m0.2 5.6h0m0.1-4.3h0m0.3 1.7h0m0.3-1.9h0m0.1-1.2h0m0.3-2.4h0m0.1-0.1h0m0.4 4.7h0m0 0.2h0m0.5-1.2h0m0.9-0.1h0m0.1 2.4h0m0.1-0.3h0m0.2-5.5h0m0.1 1.1h0m0.2 3.1h0m0.4 2.3h0m0.2-5.5h0m0.2 3.4h0m0.3-3.9h0m0.2-0.1h0m0.2 0.8h0m0.6 4.1h0m0.3-1.4h0m0.1-2.1h0m0.2 2.9h0m0.1-0.7h0m0 1.9h0m1.1-0.8h0m0.2-2.4h0m0 1.9h0m0.3-2.4h0m0.2 2.2h0m0.2-3.4h0m0.8 5.1h0m0.1-4.5h0m0 2.6h0m0.5 0.6h0m0.1-0.1h0m0.4-4.8h0m0.5-0.2h0m0.2-0.1h0m0 3.7h0m0.1-1.8h0m0.4 3h0m0.4-1h0m0 1.7h0m0.6 3.2h0m0.1-2.3h0m0.5-3.7h0m0.1-2.1h0m0 2.3h0m0.6 3h0m0.4-2.8h0m0 1.7h0m0.2-3.5h0m0.1 1.5h0m0.2 0.1h0m0.6 2.1h0m0.2-0.9h0m0.3-3.4h0m0.4 4.9h0m0.2-1.7h0m0.3-0.2h0m0.2-0.5h0m0.1 2.4h0m0.2 1.5h0m0.4-3h0m0.3 3.8h0m0.4-1.1h0m0.7-7h0m0 3h0m0 6h0m0.3-5.1h0m0.2-0.9h0m0.1 1.2h0m0.5-2.9h0m0.2 4.2h0m0.3-3.9h0m0.5 2.3h0m0.1-0.5h0m0.1 0.9h0m0.4 0.1h0m0.2-1.2h0m0.3 0.3h0m0.2 2.1h0m0.4-2h0m0 1.9h0m0.6 1h0m0.4-2.1h0m0.1-1.5h0m0.2 1.6h0m0.1 1.2h0m0.4 0.4h0m0.3-2.2h0m0.5-0.9h0m0 1h0m0.2 0.2h0m0.1-2.4h0m0.1 1.5h0m0.8 3.3h0m0.4-0.2h0m0 1.6h0m0.2-3.8h0m0.2 1.6h0m0.4-2.5h0m0.2 0.8h0m0.1 0.3h0m0.4 1.8h0m0.6-0.3h0m0.2-2.9h0m0.1 3.1h0m0.1-4.5h0m0.3 6.3h0m0.1-0.2h0m0.8-1.9h0m0.1-1.6h0m0 3.5h0m0.4-1.4h0m0.3-5.1h0m0.1 6.7h0m0.9-2.9h0m0.1-5h0m0 5.1h0m0.5-0.6h0m0.1 3.5h0m0.1-1.1h0m0.2-0.6h0m0.1-3.7h0m0.5 2.9h0m0.5 0.9h0m0 0.1h0m0.3-2.7h0m0.5 0.2h0m0 1.4h0m0.2-0.2h0m0.4 2h0m0.4-4.1h0m0.2 3.3h0m0.4-1.7h0m0 2.8h0m0.1-6.4h0m0.5 5.9h0m0.2-4.6h0m0 5.1h0m0.8-3.6h0m0.3 1.4h0m0 0.2h0m0.3-0.9h0m0.1 1.4h0m0.3 0.8h0m0.5-2.3h0m0.4-1.2h0m0 4.9h0m0.4-1.4h0m0.1-3h0m0.2 3.6h0m0.7-1.7h0m0.3-3.5h0m0.1 4h0m0.4-3.2h0m0 2.7h0m0.2-0.9h0m0.4 1.8h0m0.4-3.9h0m0.1 5.5h0m0.4-8.2h0m0.1 3.7h0m0.2 1.8h0m0.4-3.9h0m0.2-1h0m0.4 0.2h0m0.1 4.8h0m0 0.3h0m0.2-2.2h0m0.8 1.1h0m0.3 2.6h0m0.1-6.4h0m0.3 3.9h0m0.2-2.4h0m0.2 1.5h0m0.4-3h0m0.1 7.4h0m0.2-3.5h0m0.3-1.4h0m0.4 0.9h0m0.4-4.4h0m0.2 4.6h0m0.1-2.7h0m0.1 4.1h0m0.6-1.2h0m0.2-1.2h0m0 2h0m0.5-3.4h0m0.5-0.4h0m0.2 2.6h0m0.1-0.5h0m0.1-2.3h0m0.6 5.7h0m0.3-6.3h0m0.2 4.3h0m0.1-0.3h0m0.4 4h0m0.3-9h0m0 5.1h0m0.5-0.7h0m0.3-1.7h0m0.2 0h0m0.2 2.2h0m0.3 0.6h0m0.2-1.5h0m0.3 1.9h0m0.2-3.8h0m0.4-1.8h0m0.1 2.4h0m0.3-0.1h0m0 0.3h0m1-1.2h0m0 4.9h0m0.1 0.8h0m0.6-3.8h0m0 0.1h0m0.1 2.6h0m0.8-3.9h0m0 4.2h0m0.2-0.7h0m0.4-0.2h0m0.5 0.1h0m0 3.2h0m0.3-7.3h0m0.2 3.1h0m0.2 0.8h0m0.5 3.4h0m0.1 0h0m0.1-2h0m0.6-3.1h0m0.4-0.7h0m0 2.5h0m0.2-5.7h0m0.1 2.2h0m0.2 0h0m0.9 1.5h0m0.1 1.2h0m0 1.4h0m0.7-1.7h0m0.2 1.3h0m0 0.2h0m0.1-3.7h0m0.1 0.8h0m0.5 2.8h0m0.3-3.7h0m0 6.7h0m0.1-5.2h0m0.5-1h0m0.3 1.6h0m0.1 1.7h0m0.5-4.4h0m0.2 6h0m0.1-1h0m0.6 2.3h0m0.4-5h0m0 1.3h0m0.5-0.4h0m0.3-0.3h0m0.1 0.4h0m0.7 1.2h0m0.1-3.6h0m0 1.7h0m0.3 0.5h0m0.1-0.7h0m0.4 0.9h0m0.2 1.2h0m0.3-3.3h0m0.2-0.3h0m0.3 4.8h0m0.5-0.1h0m0.2-6.2h0m0 3.8h0m0.1-0.8h0m0.5-0.8h0m0.3 0.5h0m0.3 3.5h0m0.2-3.4h0m0.5 0.5h0m0.2-0.6h0m0.2 0.3h0m0.1 2.8h0m0.2-5h0m0.2-1.7h0m0.7 4.7h0m0 0.2h0m0.3-4.4h0m0.4 6.2h0m0.3-2.8h0m0.3 2.8h0m0.1-1.8h0m0.1 0.6h0m0.1-0.4h0m0.6-2.3h0m0 2.6h0m0.5 1.3h0m0.7-2.6h0m0.1 0.2h0m0.1 3.8h0m0.4-6.7h0m0.3 1.5h0m0.1 0.3h0m0.2-3h0m0.1 3.5h0m0 3.5h0m0.9-7.4h0m0.1 0.2h0m0.3 3.1h0m0.2 4.6h0m0.2-2.1h0m0.3-0.9h0m0.6 3.2h0m0.1-5.4h0m0 3.2h0m0.4 0.5h0m0.6-2.9h0m0 2.4h0m0.6-1.6h0m0.3-0.9h0m0 0.2h0m0 3.6h0m0.2-2.1h0m0.3-0.6h0m0.4-0.9h0m0.4 5.3h0m0.2-1.2h0m0.7-3.3h0m0.1 1.5h0m0 1.5h0m0.8-5.9h0m0 3.5h0m0.1-0.4h0m0.1-1.7h0m0 1.5h0m0.4-3.7h0m0.8 6.5h0m0.1-2.8h0m0.1-2.8h0m0.2-1.6h0m0.4 4.9h0m0.3 1.8h0m0.2-4.8h0m0 2.2h0m0.1 0.7h0m0.6 1.2h0m0 3h0m0.6-4.4h0m0.3-1.3h0m0.3 1.5h0m0.2-1h0m0.1 3.6h0m0.5-5.8h0m0 2.9h0m0.5 0.7h0m0.2-2.3h0m0 3.9h0m0.6-4.9h0m0 4.1h0m0.3-4.8h0m0.6 3.1h0m0.1-1.3h0m0.3 1.8h0m0.6-4.6h0m0 1.9h0m0.2 2.9h0m0.2-0.9h0m0.7 0.3h0m0 1.9h0m0.2-3.9h0m0.1 4.1h0m0.4-2h0m0.3 1.4h0m0.2-3.2h0m0.2 4.8h0m0.3-4.9h0m0.2 2.3h0m0.2 2h0m0.4 0.1h0m0.4-2.4h0m0.2 1.2h0m0.2-2.9h0m0.3 1h0m0.2-2h0m0.4 2.5h0m0.4-0.8h0m0.2 1.8h0m0.3-2.7h0m0.1-1.6h0m0.2 2.5h0m0.5 1.9h0m0.3-3.4h0m0.1 3.7h0m0.2-1.2h0m0.4 0.4h0m0 2.8h0m0.6-5.4h0m0.3 1.6h0m0.2-1.8h0m0.6 4.8h0m0.1-1.4h0m0 1.3h0m0.3-1h0m0.1 0.1h0m0.1-3.6h0m0.8 2.2h0m0.1 1.7h0m0.3-3.8h0m0.2 1.8h0m0.1 2.4h0m0.5-5.1h0m0 3.7h0m0.3-3.8h0m0.1 3.5h0m0.4-4.3h0m0.5 3.8h0m0.3-0.7h0m0.2-1h0m0.2 2.3h0m0.3-2.4h0m0.2-1.4h0m0.2 1.1h0m0.2 1.8h0m0.6-1.7h0m0.1 3.5h0m0.4-3.1h0m0.1 1.6h0m0 1.3h0m0.2 3.2h0m0.7-4h0m0.1-3.7h0m0.4 0.8h0m0.2 1.3h0m0.1 2h0m0.3 0h0m1-1.2h0m0 0.1h0m0 1.6h0m0.5-0.7h0m0.2 0h0m0 3.8h0m0.4-1.7h0m0.1-6.3h0m0.2 5.6h0m0.3-2.3h0m0.4-2.2h0m0.3 4.2h0m0.2 1.1h0m0.5-7.4h0m0.2 6.7h0m0.1-1h0m0.4 0.5h0m0.1-2.7h0m0.7 0.8h0m0.1 0.7h0m0.1 0.8h0m0.5-3.7h0m0.1 4.7h0m0.3-2.6h0m0.3 4.1h0m0.2-3.2h0m0.3-0.7h0m0.1-4.4h0m0.1 4.3h0m0.2-2.2h0m0.6 0.4h0m0.1 2.8h0m0 1.9h0m1.1-4.2h0m0.1-1.5h0m0.1 4.5h0m0.3-2h0m0 0.7h0m0.3-3.3h0m0.2 2.3h0m0 0.5h0m0.2 1.8h0m0.7-1.9h0m0.3-2.5h0m0 0.9h0m1.1 3.8h0m0.1-4.1h0m0 0.9h0m0.3 2.5h0m0.3-3.4h0m0.1 6h0m0.4-3.1h0m0 2.6h0m0.1-5.4h0m0.6 2.7h0m0.2-4.2h0m0.4 7.5h0m0.1-7.7h0m0.2 4.9h0m0.3-0.7h0m0.3-4.8h0m0.5 5.6h0m0.2-0.2h0m0.1-3.6h0m0.5 2.8h0m0 0.3h0m0.6 0.1h0m0.2-5h0m0 3.3h0m0.2 2.7h0m0 0.4h0m0.5-4.7h0m0.4 3.2h0m0.4-0.5h0m0 1.9h0m0.7-2.1h0m0 1.1h0m0.2-1.3h0m0.4-0.1h0m0.4 0.4h0m0 0.3h0m0.4-4.6h0m0 5.4h0m0.3 1.9h0m0.4 0.9h0m0.6-4.8h0m0 5.6h0m0.1-5.9h0m0.1-0.9h0m0.2-0.3h0m1.1 1.6h0m0.1-2.9h0m0 3.6h0m0.1 0.3h0m0.2 0.6h0m0.2-0.1h0m0.5-0.6h0m0.3 0.1h0m0.1 1.2h0m0.4 1.2h0m0.2-1.1h0m0.4 0.8h0m0.2-1.2h0m0.6 0.8h0m0.1-6.2h0m0.5 8.1h0m0.2-3h0m0 0.2h0m0.1 0.7h0m0.6-0.8h0m0.2-2.3h0m0.1 2.1h0m0.2-1.2h0m0 1.9h0m0.7 3.3h0m0.3-1.8h0m0.2-2.5h0m0.8 2.6h0m0.1-3.6h0m0 4.9h0m0.3-3h0m0.2 1.1h0m0.2-3.9h0m0.1-1.1h0m0.2 3.8h0m0.3-3.3h0m0.5 3.6h0m0.2-5.5h0m0.3 4.7h0m0.3 1.5h0m0.4-2.7h0m0.1-2.9h0m0.3 3.6h0m0.1-1.2h0m0.4 2.7h0m0.1-0.8h0m0.3 0.1h0m0.2-0.1h0m0.5 1h0m0.3 1.7h0m0.3-5.3h0m0.4 6h0m0.4-5.1h0m0 0.9h0m0.1 1.1h0m0.3-5.5h0m0.4 2.9h0m0.2 0.9h0m0.4 2.4h0m0.1 0.1h0m0.4-0.4h0m0.1-0.4h0m0.1 1.2h0m0.5-4.1h0m0.1 2.1h0m0.2 0.3h0m0.3-0.3h0m0 0.3h0m0.6-2.8h0m0.3 4.3h0m0.1 0.2h0m0.5-6.7h0m0.3 4h0m0.3-2.6h0m0 0.1h0m0.7-1.5h0m0 6.6h0m0.2-1.7h0m0.3 2.2h0m0.3 1.7h0m0.3-5.9h0m0.2 1.7h0m0.1-4.6h0m0.6 5.4h0m0.1-0.6h0m0 0.4h0m0.1 2.1h0m0.8-5h0m0 5.5h0m0.1-3.5h0m0.7 2.3h0m0.2-0.8h0m0.2 1h0m0.8-4.4h0m0.2 1.7h0m0 1.3h0m0.4-0.9h0m0.2-1.7h0m0.1 2.9h0m0.2-2.4h0m0.1-1.4h0m0.5 3.2h0m0.4-3.9h0m0.2 3.5h0m0.2-1.7h0m0.2-1h0m0.1 0.3h0m0.1 2.4h0m0.6 1.9h0m0.3-3.6h0m0 1.9h0m0.8-4.6h0m0.1 2h0m0.3 6.4h0m0.1-0.3h0m0.1-3.6h0m0.4 2.5h0m0.3-1.8h0m0.1-2.1h0m0.5 4.8h0m0.4-4.6h0m0.3 3h0m0.1-1.9h0m0.4 1.1h0m0.1 0.9h0m0.1-5.2h0m0.7 3.2h0m0.1 0.4h0m0.3 2.8h0m0.2-1.6h0m0.4-2.7h0m0.1-3.6h0m0.3 2.5h0m0 4.1h0m0.5-4.1h0m0.2 2.1h0m0 0.2h0m0.3-1.8h0m0.7 2.1h0m0.1-3.7h0m0 5.4h0m0.8-3h0m0.1-1.4h0m0 2.8h0m0.4-1.2h0m0.3 1.6h0m0.2 0.2h0m0.9-0.2h0m0 0.8h0m0.1 0.6h0m0.1-2.6h0m0.1-1.7h0m0.2 3.2h0m1.1-2.4h0m0 1.8h0m0 1.1h0m0.4-1.7h0m0.3-1.7h0m0 2.7h0m0.3-2h0m0.2 1.2h0m0.1-4.5h0m0.4 2.1h0m0.5 2.8h0m0 0.6h0m0.5-0.7h0m0.2-1.5h0m0.1 0.7h0m0.3-1.7h0m0.4 1h0m0.3-0.6h0m0.1 2.3h0m0.4-0.6h0m0 0.4h0m0.6-5.2h0m0 4.5h0m0.3-0.2h0m0.6-2.9h0m0.3 2.4h0m0.1 1.6h0m0.6-1.7h0m0 2.4h0m0 1.1h0m0.5 0.4h0m0.3-2.6h0m0.3-1h0m0.4 3.8h0m0.2-4.2h0m0.1 1.4h0m0.2 0.4h0m0.4-1.3h0m0.2 0.2h0m0.1-3.6h0m0.3-0.7h0m0.5 4.5h0m0.1 2.4h0m0.3-2.2h0m0.2 1h0m0.4 3.3h0m0.2-6.1h0m0.4 2.1h0m0.1-1.7h0m0.3 0.5h0m0.1-0.8h0m0.4 2.4h0m0.2-4.4h0m0 0h0m0.6 2.6h0m0.5 0.4h0m0.1 1.3h0m0.4-3.1h0m0.1 5.4h0m0.4-5.5h0m0.4 1.5h0m0 3.6h0m0.2-2.6h0m0.2-0.1h0m0.1-2.4h0m0.2-1.7h0m0.5 4.9h0m0 0.3h0m0.1-1.9h0m0.9-3.4h0m0.2 2.2h0m0.2 2.9h0m0.3 0.5h0m0.6-0.9h0m0.1 1h0m0.2-0.7h0m0.3 3h0m0.2-2h0m0.1-4.4h0m0.2 4.9h0m0.3-2.9h0m0.5-1.8h0m0.3 1.7h0m0.3 0.4h0m0.1-0.3h0m0.1 1.1h0m0.2-3h0m1 1.5h0m0 1.5h0m0.1-1.2h0m0.1-1.2h0m0 0.6h0m0.2-0.1h0m0.9 1.9h0m0.1-2.4h0m0 4.6h0m0.7-6.6h0m0 3.9h0m0.3 2h0m0.8 0h0m0.1 1.3h0m0.1 0.4h0m0.3-2.5h0m0.4 0.2h0m0.1-1.2h0m0.3-0.2h0m0 3.8h0m0.3-3.2h0m0.5 0.7h0m0 1.3h0m0.4-0.4h0m0.1-5h0m0.2 5.8h0m0.4-3.1h0m0.3-1.3h0m0 2.1h0m0.4 0.1h0m0.3-0.7h0m0.3 0.1h0m0.1 1.7h0m0.4-3h0m0.2 2.6h0m0.6-2.1h0m0.2 0.5h0m0.2 1.5h0m0.2 1.3h0m0.5-1.8h0m0.1-1.5h0m0.3-0.1h0m0.1 0.7h0m0.1 0h0m0.6 3h0m0.1-7.5h0m0.2 8.5h0m0.1-6.8h0m0.6 1.7h0m0 0.4h0m0.6 3.1h0m0.2-2.8h0m0 0.8h0m0 2.2h0m0.9 0h0m0.4 1.2h0m0.2 0.7h0m0.6-8.6h0m0 0.3h0m0 3.3h0m0.2 3.6h0m0.2-2h0m0.5-3h0m0.3 1.1h0m0.5-0.1h0m0.1 0.8h0m0.3-1.3h0m0.3 1.8h0m0.1-0.9h0m0.1 2.5h0m0.4-3.6h0m0.1-0.7h0m0.5 2.6h0m0.1-1.8h0m0.4 2.9h0m0.4-2.1h0m0.1 2.3h0m0.1-1.9h0m0.3-3.4h0m0.1 5.2h0m0.1-2.2h0m0.6 2.3h0m0.5-0.5h0m0.1-1.6h0m0.2 3.4h0m0.2-3.5h0m0.4-1h0m0.3 1.4h0m0.4 1.5h0m0.1-3.3h0m0.4 1.1h0m0.1-1.2h0m0.1 0.3h0m0.4 5.9h0m0.5-7.2h0m0.3 1.1h0m0.1-0.4h0m0 2.5h0m0 0h0m0.8-0.4h0m0.2 0.5h0m0.4-0.5h0m0.5-3.5h0m0.2 2.8h0m0 1.2h0m0.3-3.5h0m0 1.7h0m0.4-0.2h0m0.9 3.1h0m0.2-1.4h0m0 1.7h0m0.4-2.5h0m0.1-1.8h0m0.1 0.4h0m0.3 4.5h0m0.1 2.3h0m0.2-7.2h0m0.4 5.7h0m0.4-2.2h0m0.3 1.1h0m0.2-5.6h0m0.4 0.4h0m0.2 3.6h0m0.2-3.5h0m0.3 3.7h0m0.3-2.4h0m0.8-1.5h0m0 5.5h0m0.1-0.4h0m0.4-3.8h0m0.3 2.3h0m0 0.2h0m0.1-2.6h0m0.3 1.7h0m0.2 1.6h0m0.3-5.6h0m0.2 5.8h0m0.4-3.1h0m0.3 6.1h0m0.2-6.8h0m0.2-2h0m0.7 5.3h0m0.1-5.3h0m0 4.5h0m0.7-0.1h0m0.1-0.5h0m0.1-3.5h0m0.3 7.3h0m0.1-2.9h0m0.2-4.4h0m0.4 0.9h0m0 4h0m0.7 0.1h0m0.1-4.8h0m0.5 6.5h0m0.3-3.3h0m0.2-0.5h0m0 4.6h0m0.5 0.5h0m0.3-0.3h0m0.2-4.5h0m0 0.2h0m0.5-3.7h0m0.5 2.6h0m0 4.4h0m0.5-2.8h0m0.3 2.9h0m0.2-2.4h0m0.4-1.5h0m0.1 5.7h0m0.1-6.1h0m0.7 2.2h0m0 1.8h0m0.2-3.3h0m0.1 1.3h0m0.4-0.2h0m0.4-0.4h0m0.5-2.3h0m0.1 3.9h0m0.1-1.1h0m0.2-1.4h0m0 0.8h0m0.4-0.6h0m0.5-3.6h0m0.4 2h0m0 4.6h0m0.3-3.4h0m0.4-1.8h0m0.1 6.6h0m0.3-6.9h0m0.2 3.4h0m0.2-2.1h0m0.8 2.8h0m0.1-0.8h0m0 2.4h0m0.2-6.8h0m0 3.7h0m0.2 0.7h0m1 0h0m0.1-0.5h0m0 0.9h0m0.7-2.8h0m0 5.1h0m0.3-3.3h0m0.4-1.4h0m0.3 2.2h0m0.2-4.2h0m0.1 2.9h0m0.4-1h0m0 1.4h0m0.3 0.2h0m0.6 1.2h0m0.1-1.6h0m0.1 1.9h0m0.4-2.1h0m0 3.4h0m0.5-1.3h0m0.3-1.6h0m0.1-1.1h0m0.5 2.5h0m0.1-1.2h0m0.4-2.9h0m0.3-1.1h0m0.3 4.4h0m0.2-2.1h0m0.2 2.4h0m0 1.6h0m0.6-4.6h0m0.1 1.4h0m0.3 1.2h0m0.2-1.4h0m0.6 1.8h0m0.1-4.1h0m0 4.1h0m0.7 2.6h0m0.2-2.1h0m0.1 1h0m0.2-2.1h0m0.4-2.5h0m0 3.4h0m0.7-0.4h0m0.1-0.5h0m0.2-1.5h0m0.6 3.7h0m0.1-2.6h0m0.2 4.7h0m0.4-4.9h0m0 3.3h0m0.2 0.4h0m0.5-2h0m0.2-1.7h0m0.3-1.1h0m0.1 1.7h0m0 0.2h0m0.5 1.2h0m0.4-0.2h0m0.3-0.9h0m0 1.4h0m0.5-0.6h0m0.1 0.1h0m0.1-2.5h0m0.7 2.1h0m0.4-2.9h0m0.1 6.9h0m0.1-4.6h0m0.3-0.6h0m0.5-0.2h0m0.6-1h0m0.2-0.2h0m0 1.3h0m0.1-0.5h0m0 0.3h0m0.7 1.7h0m0.1-1h0m0.6 0.4h0m0 0.9h0m0.2-2.9h0m0.1-1.4h0m0.2 0.6h0m0.4 3h0m0.2-0.5h0m0.4-1.3h0m0.2 4.3h0m0.2 0h0m0.2-3.7h0m0.6 1.5h0m0.2-2h0m0.4 4.6h0m0.1-3h0m0.1-0.3h0m0.4-0.5h0m0.4 2.2h0m0.4-0.5h0m0.1 3.5h0m0.5-4.5h0m0.3-4.3h0m0.1 5.9h0m0.2-3.7h0m0.3 3.1h0m0.1-1.1h0m0.3 0.8h0m0.2 0h0m0.2 0h0m0.4-0.5h0m0 1.2h0m0.7-2.7h0m0 1.2h0m0.1-4.4h0m0.3 4.4h0m0.8-0.1h0m0.1 0.2h0m0.2-0.1h0m0.2-0.3h0m0.1 1.5h0m0.2 0.7h0m0.6-2.1h0m0.2 1.9h0m0.3-1.2h0m0.1 0.5h0m0.1-2.5h0m0.3-0.4h0m0.7-2.5h0m0.1 4.7h0m0 1.1h0m0.6-1.2h0m0.2 2.1h0m0.4-6.7h0m0.1 6.2h0m0.1-5.1h0m0.5 7.9h0m0.3-9h0m0.3 0h0m0.1 6.7h0m0.5-2.5h0m0.1 0.1h0m0 2.6h0m0.5-4h0m0.5 4.1h0m0.2 2h0m0.3-7.9h0m0.2 1.9h0m0 4.6h0m0.5-0.8h0m0.2-3.8h0m0.4 3.8h0m0 2.2h0m0.4-5.1h0m0.2-2.3h0m0.2 3h0m0.4-0.3h0m0.1-1.1h0m0.3 1.4h0m0.1 1.5h0m0.1-5.3h0m0.7 4.4h0m0.4-4.4h0m0.1 3.9h0m0.2-2.1h0m0.1-1.1h0m0 2.3h0m0.9 1.1h0m0.1-0.1h0m0 2.5h0m0.6-5h0m0.1 0.5h0m0.3-1.5h0m0.5 0.7h0m0.1 2.6h0m0.1-1.9h0m0.8 2.5h0m0.2 0.8h0m0.1 0h0m0.4-1.7h0m0.4 0.3h0m0.1-1.3h0m0.2 2.2h0m0.2-0.3h0m0.2 0.5h0m0.4 3.3h0m0.1-8.7h0m0.4 7.8h0m0.4-4.3h0m0 1.2h0m0.4-2.3h0m0.2-0.7h0m0.3 4.4h0m0.3-1.6h0m0.5 0.7h0m0.1-3.4h0m0.3 0.6h0m0.5 1.9h0m0 4.3h0m0.2-5h0m0.2 0.3h0m0.1-4.2h0m0.1 7.2h0m0.6 1.5h0m0.3-5.6h0m0.3-1.3h0m0.1 0.9h0m0.3 2.9h0m0.1-2.8h0m0.6 0.6h0m0.2-2.1h0m0.3 6.2h0m0.8-1h0m0 2.5h0m0.1-2.7h0m0.2-1.2h0m0.2-1.3h0m0.2-1.9h0m0.3 0.3h0m0.1 1.4h0m0.3-0.3h0m0.4-0.6h0m0.1-0.7h0m0.4 2.5h0m0.3-1.4h0m0.1 2h0m0.3 1.9h0m0.5-2.8h0m0.2-1.7h0m0.1 0.8h0m0.5 3h0m0.1-3.3h0m0.2-2.4h0m0.5 2.4h0m0 1.6h0m0.2 1.5h0m0.5-1.4h0m0.5-2.8h0m0 1.5h0m0.3-3.4h0m0.4 6.8h0m0.1-3.8h0m0.7 0h0m0 3.6h0m0.2-6.4h0m0.2 7.5h0m0.3-2h0m0 0.9h0m0.5 0.1h0m0.1-4.6h0m0.6 0.9h0m0.1 0.8h0m0.5-0.7h0m0.1 1.1h0m0.2-1.5h0m0.5-0.4h0m0.1 6.3h0m0.2-1.9h0m0.2-4.6h0m0.5 2.4h0m0.1-1.3h0m0.3-1.6h0m0.3 6.4h0m0.2-7.5h0m0.1 3.7h0m0.2 1.1h0m0.6-2.4h0m0.5-1.8h0m0 5.4h0m0.2-4.3h0m0.2 4.5h0m0.4-1.2h0m0.5 0h0m0.1-1.7h0m0.1 1.4h0m0.3-0.3h0m0.5-1.2h0m0.1-1h0m0.2 1.4h0m0.4 1.7h0m0 2.9h0m0.5-1.7h0m0.1-1.5h0m0.4-2.1h0m0.3-0.1h0m0.2 4.3h0m0.2-1.6h0m0.5-1.7h0m0 2.1h0m0.1-3.5h0m0.6-0.5h0m0.3 4h0m0.1-0.4h0m0.5-5.5h0m0.1 3.6h0m0.2 2.7h0m0.2-2.3h0m0.3 2.4h0m0.2-2h0m0.5-1.4h0m0.1 3.5h0m0.2-4.9h0m0.3 3.6h0m0.4-2h0m0 3.5h0m0.6-7.2h0m0 6.5h0m0.2-1.6h0m0.5-1.9h0m0.2 2.3h0m0.3-1.2h0m0.8-0.4h0m0.1 2h0m0.1 0.5h0m0.1-1.5h0m0.3-1.6h0m0.2 1.1h0m0.4 0.4h0m0.5-1h0m0 0.7h0m0.3 0.3h0m0 3.5h0m0.2-4.3h0m0.7-2h0m0.3 3.8h0m0 2.1h0m0.3-6.4h0m0.2 3.5h0m0.3-1.5h0m0.5-2.2h0m0.1 1h0m0.3 4.1h0m0.6-1h0m0.1-0.5h0m0.1 1.9h0m0.6-3.2h0m0.2-0.4h0m0.1-0.9h0m0 2.8h0m0.1-2.6h0m0.2 5h0m0.5-2.6h0m0.3-0.5h0m0.2-4h0m0.4 3.6h0m0.1 2.3h0m0.6-2.5h0m0.4 1.4h0m0.2 0.9h0m0.1-1.4h0m0.6 0.4h0m0.1-3h0m0.1-0.2h0m0.1 6.2h0m0.6-4.8h0m0.1 3.1h0m0.3-0.2h0m0.2-0.6h0m0.1-5.4h0m0.4 7.8h0m0.2-3.7h0m0.1-4.1h0m0.8 6.1h0m0.1-3.8h0m0 1.5h0m0.7-2.2h0m0 1.8h0m0 3.2h0m0.5-1.8h0m0.7-2.4h0m0 2.2h0m0 3.3h0m0.6-7.1h0m0 3.8h0m0.3 4.3h0m0.1-2.3h0m0.2-1.7h0m0.4 0.6h0m0.1-0.3h0m0.5 1.7h0m0.3-2.6h0m0.2-3.1h0m0.1 5.1h0m0.4-6.3h0m0.5 8.4h0m0.2-7h0m0.2 1.5h0m0 3.7h0m0.3 0.5h0m0.5-2.6h0m0.1-1.6h0m0.6 4.8h0m0.5-6.6h0m0.2 4.2h0m0 0.2h0m0.3-5.4h0m0.2 4.8h0m0.4-2.3h0m0 0.2h0m0 0.8h0m0 0.4h0m1-0.8h0m0.4 1.3h0m0.1-2h0m0.3 3.6h0m0.3 1.3h0m0.2-1.7h0m0.5-2.8h0m0.3 0.7h0m0.1 4h0m0.4-5.9h0m0.1 3.7h0m0.1-1.8h0m0.3 1.1h0m0.1-1.6h0m0.4 0.9h0m0.3-0.2h0m0.6 2.5h0m0.1-0.5h0m0.4-1.5h0m0.4-0.8h0m0 1.7h0m0.4-3.3h0m0 1.6h0m0.2 1.9h0m0.2-3.4h0m0.1 4.3h0m0.6 0.5h0m0.7-1.2h0m0.1-4.3h0m0 1.7h0m0.6 4.5h0m0.2-7.1h0m0.1 4.7h0m0.3-3.5h0m0.3 4.5h0m0.2 0.6h0m0.3 0.8h0m0.3-3.4h0m0.1-1.8h0m0.2 2.7h0m0.1-1.8h0m0.1-1.1h0m0.8-1h0m0 1.9h0m0.1 2.1h0m0.6 3.9h0m0.2-4.9h0m0.3-1.3h0m0.6 1.1h0m0.1 0.7h0m0.1 0.1h0m0.6-1.4h0m0 2.8h0m0.1-3.2h0m0.3-2.2h0m0.4-0.7h0m0.2 1.9h0m0.2 0.3h0m0.3 1.9h0m0.1 3h0m0.4-4.3h0m0.1 6.2h0m0.6-4.5h0m0.2 0.3h0m0.5-1.4h0m0 3.9h0m0.4-2.7h0m0 0.2h0m0.2-1.7h0m0.4-0.3h0m0.3 0.7h0m0.2 0.6h0m0.6-0.6h0m0 3.1h0m0.4 0.2h0m0.3-0.8h0m0.4-3.3h0m0 4h0m0.5-0.3h0m0.2-3.1h0m0.1-0.6h0m0.1-0.4h0m0.1 0.5h0m0.3 4.7h0m0.6-1.9h0m0.1-1.7h0m0.4 0.6h0m0.1-0.1h0m0.6-0.1h0m0.1 1h0m0.5-5.3h0m0 5.9h0m0.4-3.6h0m0 0.1h0m0.5-2.4h0m0.1 6.3h0m0.2-3.3h0m0.3 1.9h0m0.2-4.1h0m0.3 4.7h0m0.3-0.2h0m0.1-2.2h0m0.4 0.7h0m0.2-2.1h0m0 4h0m0.8-1.3h0m0.1-0.1h0m0 1.6h0m0.8-1.3h0m0.2 2.1h0m0.3-0.1h0m0.2-4.6h0m0.3 6.8h0m0.2-4.5h0m0.3-0.5h0m0 2.8h0m0.1-5.1h0" stroke="#000" stroke-width="3.7" style="stroke-linecap:round" fill="none"/><path d="M214.3 69.1h0m0 42.3h0m0 17.7h0m0 30h0m5.1-24.8h0m617.7 80h0m16 60h0m31.2-26h0m132-182.9h0m238.8 16h0" stroke="#f00" stroke-width="3.7" style="stroke-linecap:round" fill="none"/><rect x="161.7" y="489" width="1142.3" height="61.5" fill="#000"/><path d="M169.2 499.5h0m13.1 5.6h0m0.2 13.2h0m6.6-10.7h0m1.2-4h0m5.5 2.1h0m4.6-6.1h0m0.7 1.2h0m1.3-1.1h0m2.3 3.6h0m6.3 30.5h0m15.8-25h0m1.6-1.1h0m7.1-1.5h0m0.7-2.9h0m3 0.1h0m2.7 5.8h0m0.4-9.5h0m1.4 20.8h0m7.9-18.3h0m8.5 22.3h0m0.8-19.2h0m1.5 0h0m1.5 5.6h0m6.5-9.2h0m2.4 1.5h0m2.5 17.5h0m5.8 4.8h0m4-25.6h0m1.4 4.2h0m2.8-4h0m3.8 8.7h0m1.5-4h0m1.9 0.4h0m0.5-3h0m16.3-0.8h0m10.6 21.6h0m1.3-19.5h0m2.9-0.8h0m6.3 6.1h0m4.4 0.2h0m0.1 7.6h0m15.1-12.4h0m3.9-4.6h0m1.8 0.5h0m6 12.3h0m14.8-12.4h0m2 0.8h0m1.1-0.6h0m2.2 15.2h0m23.1-4.4h0m1.3-2.3h0m3.7 6.6h0m1.8-5.8h0m5.3-3.4h0m6.5-5.3h0m0.3 10h0m8.1-11.4h0m10.4 16.6h0m8.8-1.3h0m0.6 2.3h0m23-0.2h0m3.1-9.1h0m0 6.5h0m0.2-9.2h0m7.4-5.6h0m2.4 5h0m5.7-3.4h0m9.8 4.7h0m1.6-1.9h0m2 5.6h0m0.2-7.7h0m6.9-1.1h0m2.4 7.9h0m4.9-7.5h0m0.3-0.3h0m0.4 26.7h0m12.9-26.8h0m11.2 7.6h0m3.5-0.8h0m1.9-7h0m3.3 0h0m0.1 1.2h0m13-2.1h0m4.3 3.2h0m1.4 11.5h0m11.5-15.1h0m4.1 2.2h0m31.2 7.2h0m0.4-8.7h0m12.5 26.8h0m6.1-13.4h0m4.2 0.6h0m5.7-14.2h0m0 3.2h0m7.3-2.7h0m1 1.1h0m2.9 7.8h0m8.9-2h0m7-1.4h0m7 1.5h0m15.8-8h0m5.1 16h0m0.5-9.3h0m6.3 10.2h0m2.3-15.5h0m0.6 23.4h0m9.1-23.7h0m3.7-0.4h0m2.3 10.3h0m2.1-2.4h0m3.2 6.8h0m1.9-14.8h0m8.3 5.5h0m3.3-5.2h0m2 2.6h0m3-1.5h0m2.6 4.6h0m0.5 0.1h0m1.2 0.8h0m10.9-6.9h0m3.3 5.3h0m1.4 6h0m1-9.8h0m2.2 3.6h0m2.1-3.3h0m5.1-1h0m9.4 1.7h0m16.7 11.4h0m3.1-12.8h0m0.3 1.1h0m6.7 45.4h0m5.6-43.7h0m1.8-0.2h0m0.1-0.5h0m5.4-2h0m2.2 1.3h0m3.7-0.7h0m0.5 14h0m7.1-14.3h0m1.7-0.2h0m0.9 4.9h0m1.6-6.7h0m3.1 1.1h0m7.7 12.5h0m1.4-11.1h0m0.7-0.7h0m2.5 10.2h0m6.2-8.7h0m6-1.4h0m0.5 0.5h0m0.2 7.6h0m8.8 1.5h0m0.1-5.7h0m5.9-2.3h0m1 7.5h0m5.8 14.9h0m2.7-25.1h0m0.3 1.3h0m4.5 2.3h0m2.6 0.6h0m7.8 4.9h0m0.3-8.1h0m0.4-1.2h0m1.9 2.2h0m1-0.8h0m4.8 4.2h0m1.4-3.9h0m3-0.5h0m3.8 4.6h0m1.6-0.5h0m1.4 4.1h0m0.5-8.2h0m3.4 31.3h0m2.6-10.9h0m2.9-21.9h0m1.6 6.5h0m1-1.4h0m0.4 7.8h0m2.2-10.4h0m2.4 3.8h0m3.6 8.5h0m4.2-13.6h0m2.9 8.2h0m0.9-6h0m8.4-3h0m1.9 15.6h0m2.4-9.6h0m4.7-3.1h0m7.3 15.4h0m5.8 8.9h0m2.3-28.1h0m5.6 20.8h0m2.6-20.5h0m6.9 8h0m3.2 0.8h0m1.9-6.5h0m1.5-2.1h0m0.5 3.6h0m3.5 3.9h0m3.5-5.6h0m0.3-1.1h0m3.2 0.5h0m0.3 0.4h0m0 16.7h0m2.4-16.3h0m0.7-1.3h0m10.6 0.8h0m4.4-0.7h0m14.4 1.5h0m12.1-1.7h0m7 0.7h0m16.2 0.9h0m4.7 0.2h0m5.8-1.6h0m0.3 13.3h0m12.2-9h0m1.5 17.1h0m2.8-22.2h0m4.9 0.8h0m1.5 2.4h0m1.7-2.6h0m0.8 8.5h0m0.9-7.2h0m1.8-0.9h0m2.7 15.5h0m6.7-14.1h0m4.2-0.7h0m31.7 17.8h0m2.4-19.5h0m0.7 9.9h0m8.4 6.8h0m6.2-14h0m0.1-2.9h0m4.9 3.9h0m7.8 1.8h0m4.6-0.9h0m23.5-4.9h0m0.4 11.8h0m1.2-2.2h0m2.6-5.3h0m19.7 1h0m3.9-2.9h0m5.9-1.1h0m5.4 4.8h0m1.2 1.3h0m2.9 1.9h0m0.1-0.5h0m0.8-5.3h0m9.4-0.7h0" stroke="#fff" stroke-width="1.8" style="stroke-linecap:round" fill="none"/><path d="M162.9 494.7h0m1.4-3.1h0m1.2 2.4h0m0.1-1.8h0m0.1 6h0m2.6-4.6h0m2.5-1.5h0m1.3 0.4h0m1.5 2.9h0m2.5-2.2h0m1.1 0.3h0m2.7-1.1h0m1.4 1.1h0m1.7 4.4h0m3.6-2.1h0m0.8-1.5h0m0.1-0.3h0m1.9 3.6h0m3.7-0.2h0m2.5-0.4h0m2-2.9h0m0.1 0.2h0m0 3h0m0.3-2.2h0m1.4-1.9h0m0.4-1.9h0m0.5 0.2h0m1.7 5.7h0m1.7-4.2h0m4.3-1h0m0.2 0.1h0m0.5 4.7h0m0.4-2.8h0m1.8-0.5h0m0.9 1.8h0m1.8-0.5h0m0.3-1.9h0m0.9 0.7h0m8 2.1h0m1.2-3.8h0m0 4.1h0m3.1-3.7h0m1 3.7h0m0.3-1.1h0m0.3-2h0m2.2 3.1h0m0.4 2.1h0m0.4 0.3h0m0.2-3.1h0m0.8 3h0m5.6-2.5h0m0.5 2h0m1.1-3.8h0m3-0.6h0m2.7 3.5h0m0.2-2.7h0m6.1-0.2h0m0.2 2.6h0m2.6-3.6h0m1-0.6h0m3 4.2h0m1.1 0.1h0m0.7-2.2h0m1.1-2.3h0m3 4.2h0m1.3-1.3h0m0.8 1.5h0m6-5.5h0m2.6 7.2h0m3.2-4.2h0m0.4 0.4h0m0.7 0.2h0m1.4-2.9h0m1.5 0.2h0m0.8 0.9h0m0.3-1.6h0m0.8 5.3h0m1-0.8h0m0.5 2.5h0m8.5-4.1h0m4.7 1h0m3 0.6h0m0.7-0.8h0m1.9 2h0m6.6-2.4h0m0.8 3h0m2-2.5h0m2.1 2.3h0m0.5-4.1h0m1.2 2.4h0m2.2 1.4h0m3.2-2.6h0m5.3-1.6h0m0.6 3.9h0m1.2 1.4h0m0.5-5.7h0m3.7 2.2h0m1.5 0.7h0m0.1 1.8h0m0.7-4.1h0m0.1-1.5h0m1.7 6.5h0m6.5-0.4h0m3.9-5.1h0m3.7 4h0m2.1-2.8h0m1.6 0.2h0m0.3 0.3h0m4.5-1.6h0m3.3-1.2h0m2.1 6.9h0m1-6.3h0m0.6 6.1h0m0.5-6.3h0m1 5.8h0m2.6-4.4h0m0.3-1.2h0m4.5 0.9h0m1.5-1.4h0m2.1 3.5h0m1.4 0.9h0m0.1-3.3h0m0.3 0.3h0m4.9 0.2h0m1 2h0m1-4h0m0.4 0.4h0m0.2-0.4h0m1.7 6.9h0m0.7-4.6h0m0.8-1.5h0m2.4 3.2h0m1.1-2.9h0m0.2 3.7h0m0.9 1.4h0m0.5-0.7h0m0.7-1.3h0m0.3 1.9h0m2.1-3.4h0m3.1 1.6h0m0.9 0.3h0m2.5-3.4h0m2.8 5h0m2.1-2.6h0m0.7-3.5h0m0.2 5.9h0m0.7-2.5h0m0.1-0.6h0m1.2 1.3h0m1.4-2.7h0m1.7 1.5h0m0.7-1.6h0m3.2 2.9h0m0.9 2.8h0m0.6-1.8h0m4.3-0.1h0m0.4 1.9h0m0.4-4.4h0m3.7 3h0m0.6-3.1h0m0.1 2.2h0m1.5-3.7h0m2.8 3.5h0m0.2 2.7h0m2.7-6.1h0m0.1 4.7h0m0.6-2.1h0m5.3-0.7h0m1.1-1.8h0m1.7-1.3h0m1.3 2.1h0m0.7-1.3h0m2.5 3h0m0.4 3.4h0m2-5.8h0m3.3 2.6h0m0.2-3.2h0m1.3 1.8h0m3.8 3.5h0m0.6-4.5h0m5 0.4h0m0.5-0.2h0m2.8 3.6h0m2.5-2.1h0m2.8 2.7h0m5.9-5.5h0m1.4 5.9h0m0.3 0.9h0m0.8-6.1h0m0.1 1.8h0m0.2 4.1h0m3.7-3.9h0m1.1-2.6h0m0 5.9h0m0.3-1.4h0m1.9 0.2h0m2-3.7h0m1.9 5.5h0m0.1-4h0m1.2 2.4h0m0.4-5.5h0m2 1.5h0m0.7 4.4h0m0.8-0.4h0m1.9-1.9h0m0.1 3.6h0m2.6-0.3h0m0.6-1.1h0m0.5-4.8h0m3.7 2.1h0m4.8-1h0m0.7 1.2h0m3.9-2.9h0m0.9 4.2h0m1.4 1.7h0m0.8-1.5h0m0.6-4h0m1.1 0.2h0m3.5 0h0m3 3.2h0m0.1-1.1h0m0.8-0.2h0m0.7-1.9h0m0 2.2h0m1 3.4h0m1.7-0.8h0m4.1 0.5h0m0.8-5.5h0m0.4 0.4h0m0.1 3.2h0m1.5 2.8h0m0.2-0.9h0m0.5 1h0m7-6.6h0m1.3-0.8h0m1.4 5.2h0m3.7 1.7h0m1.6-0.7h0m1.6-4.3h0m6.1 0h0m0.4-1h0m1.7 0.4h0m0.5 5.7h0m0.5-2.2h0m0.1-4.1h0m1.5 1.5h0m0.2 3.1h0m1.6-2.7h0m1.5-1.9h0m0.5 6.1h0m3-1.4h0m4.8-2.4h0m0 0.5h0m2.3-0.3h0m2.1-3.2h0m5.2 0.4h0m0 3.6h0m0 2h0m1.4-2.5h0m0.9-3.3h0m0.6-0.2h0m1.2 0.3h0m1.2 1.2h0m0.6 2.8h0m1.4 1.2h0m2-5.5h0m0.7 3.5h0m3.4 0.5h0m0.1-3h0m0.1 4.5h0m2.7-1.9h0m1.8 2.8h0m3.3-6.4h0m1.2 6.3h0m1.4-4.9h0m0.3 0.5h0m0.7 3.5h0m2.4 0.2h0m1.6-4h0m0.2 4.7h0m0.6-0.3h0m2.9-3.9h0m0.9 5.2h0m2.4-1.3h0m0.6-5.3h0m1.9-0.5h0m2.5 3.6h0m1.3-2.8h0m2.9 1.7h0m0.3-1.3h0m1.4 4.6h0m0.2-1.9h0m1.9-1.9h0m0.3 1.2h0m1.9-0.1h0m1.3 2.7h0m3.1-3.3h0m1.3-0.2h0m0.5-0.7h0m1 3.7h0m0.4 0.1h0m2.7-1.2h0m1.6 0.3h0m0.5-1.9h0m0.9-1.9h0m0.4 1.1h0m4.9 1.2h0m1.8 4.1h0m1.8-4.2h0m1.9-2.4h0m3.4 1.3h0m0 0.6h0m3.4-0.1h0m0.1 1.7h0m3.5-3.9h0m0.7 2.7h0m3-2.7h0m0.3 6.8h0m3.6-5h0m1.8 4.5h0m0.3-0.6h0m0.2 1.1h0m0.2-2h0m2.6-3.9h0m3.3 3.8h0m0.7-2.5h0m0.8-1.3h0m1.2 2.4h0m10 2.4h0m3.4-4.4h0m2.8 4h0m0.6-2.2h0m0.4 2.5h0m0.1-4h0m0.6 2.5h0m0.5-3.9h0m0.5 6.2h0m3.7-0.7h0m1.2-2.4h0m1.5 3.7h0m0.1-7.1h0m7.9 6.5h0m2-3h0m2.5-1.5h0m0.1 4.4h0m2.2-6.3h0m5.8 0.9h0m1.5 2.1h0m3 2.1h0m0.1 1.2h0m3.1-0.3h0m1.5 1h0m1.6-0.2h0m1.5-1.4h0m0.3-4h0m1.8-0.3h0m0.5 1h0m3.8 0.7h0m0.3-0.2h0m0.9 1.3h0m0.9 0.4h0m1.6 1.8h0m2.4-2.9h0m0.5 0.1h0m0.2-1.1h0m0.8 4.5h0m1.1-2.9h0m2.4 3.2h0m0.5-1.6h0m2 0.7h0m2.1-3.3h0m1.6 3.7h0m1.1-5.1h0m1.2 0.9h0m2.3 0h0m2 1.8h0m1.1 0.4h0m0.8 0.6h0m1.3-2.5h0m0.7 3.8h0m0.3 0.3h0m0.1-4.8h0m5.6 3.6h0m3-5.2h0m1 0.7h0m0.8 2.4h0m3.4 0.9h0m0.3 1h0m1.4 0.3h0m0.3-3.3h0m0.5 2.3h0m0.1-3.6h0m0.3 5.3h0m9.7-1.9h0m0.4 0.5h0m0.6-2.1h0m0.5-1.7h0m1.5 0.5h0m0.2 0.4h0m0.9-1.3h0m0.9 0.6h0m9.4 3.9h0m3.8-1.2h0m0.3-2.9h0m0.9 2.8h0m2.8-2.7h0m1.2 0.4h0m3.2 3.8h0m2.1-0.5h0m0.4-2.8h0m1.6-1.2h0m0.2 0h0m3.3 1.2h0m0.9 4.1h0m1.2-5h0m6.1 0.1h0m3.4 0.7h0m1.5-1.6h0m0.5-0.2h0m0 3.7h0m1 0.1h0m1.8-3.6h0m0.3 0.2h0m0.4 2.2h0m1.6 0.7h0m0 2.6h0m1 1h0m1.1-2.8h0m0.9 1.4h0m2 0.9h0m0.6-5.2h0m0.7 4.5h0m0.4-1.7h0m2.1 0.9h0m1.5-3.2h0m5.4 5h0m1.6-4.6h0m0.7-1.1h0m5-0.9h0m0.5 1.6h0m0.4-2.2h0m0.5 0.3h0m1.2 5.2h0m0.1-0.6h0m5.1-1.4h0m1.1 1.5h0m0.6 0.3h0m1-2.4h0m6.3-1.9h0m0.4-0.2h0m1.8 3.6h0m1.9-0.8h0m2.7 1.9h0m0 1h0m1.1-2.3h0m0 2.3h0m3.5-6h0m2 0.1h0m0 4.5h0m3 0.7h0m8.2-3.9h0m2-1.3h0m0.2 4.3h0m1.5 0.5h0m1.5-0.7h0m0.7 1.9h0m0.2 0.5h0m0.7-2.5h0m1.1-2.6h0m2.6 2.3h0m0 2h0m1.7-0.2h0m2.8 0h0m2.4-4.2h0m0.6-1.2h0m0.2 6.3h0m1-3.7h0m0.6 2.8h0m1.2-5h0m1 4.9h0m1.3-0.8h0m1.1 0h0m0.6 0.6h0m1.1-5.5h0m0.2 5.3h0m0.7-2.3h0m1-2.3h0m4.1-1h0m2 2.5h0m2.7 1.3h0m0.2 2.7h0m3.9-2.8h0m0.7-1.5h0m1.1-1.1h0m0.8 4.2h0m5.7 1.4h0m0.1-5.9h0m6.3-0.1h0m0 5.8h0m1.4-4.6h0m0.3-0.3h0m1.3-1.5h0m4.2 6.3h0m5.7-4.2h0m0.8 3h0m0.9 1.6h0m0.2-3.5h0m1-0.9h0m0 0.5h0m0.2-1.9h0m0.1-0.1h0m0.4 5.5h0m1.1-0.8h0m7.6-0.4h0m1.9-3.9h0m0.4-0.8h0m2.5 6.6h0m1.5-5.9h0m0.2 4.4h0m1.5 1.4h0m1.8-3.4h0m1.1 1h0m0.9-2.6h0m2.5-0.1h0m1-0.7h0m2.2-0.9h0m2.6 4.4h0m1.7 1.1h0m1.7-5.2h0m0.4-0.2h0m5 2.9h0m1.7-1.8h0m0.1 5.6h0m2.2-5.9h0m5.1-1.2h0m6.9 4.7h0m4.3-4h0m4-0.7h0m0 3.4h0m5-3.4h0m3.8 0.6h0m1.6 0.8h0m1.1-1.4h0m2 0.4h0m2.8 1.9h0m0.4 1.2h0m0.4-2.5h0m2.3 1.5h0m7 1.8h0m6.9-1.3h0m5.1-2.1h0m0 2.2h0m0.5-0.7h0m5 1.6h0m4.9 0.3h0m0.1 1.1h0m1.2 0.2h0m2.2-1.4h0m2.6 3.1h0m2.7-2h0m0.9 1.5h0m0.1-3.8h0m0.2 4.1h0m1.3-3.3h0m5.6 0.6h0m1.7 0.8h0m6.9-1.5h0m0.4-2.9h0m0.7 4.5h0m0.4-0.1h0m0.3-2h0m1.4-2.6h0m2.4 2.3h0m0.1-2.8h0m2.4 4.5h0m1.7-3.1h0m0 0.7h0m1.7-1.9h0m1.2 0.5h0m0.7 5.9h0m0.9-5.1h0m2.5 5.3h0m4.5-4.8h0m2 0.2h0m0.2 4.9h0m2.9-0.1h0m0.1-0.4h0m2.3-2h0m2-4.7h0m0.8 4.5h0m0.1-0.7h0m0.9 3.4h0m6-1.2h0m3.5-2.8h0m0.4-2.6h0m1.3 0.7h0m0.6 1h0m1.8-1.3h0m6.3-0.1h0m3.1 0.3h0m0.6 3.1h0m2.8-0.3h0m0.4-3.7h0m1.1 6.5h0m1-1.4h0m3.5-3.4h0m0.2 1.1h0m2.1 2.4h0m4.6-4h0m2.5 1h0m3.2-0.5h0m1.8 4.7h0m0.3-5h0m0 5h0m1 0.3h0m0.3-4.7h0m0.4-0.8h0m0.8 2.9h0m0.1 1.5h0m0.1-2.8h0m1.9 1.2h0m1.4 0.2h0m0.1-4.4h0m1.6 0.5h0m0.2 3.8h0m1.9-3.8h0m0.7 3.6h0m0.5-4h0m4.3 6.4h0m0.2-2.9h0m1.2-0.8h0m0.6-2.2h0m0.1 5.4h0m1.5-1.4h0m1.4-1.1h0m1.2 0.6h0m1.7-3.8h0m0.7 3.4h0m0.1-3.1h0m1.8 6.3h0m1.8-4.5h0m0.3-1.8h0m0.7 2.3h0m5.5 3.4h0m0.7-4.7h0m1.4 4.1h0m2.3-4h0m0.4 4.2h0m1-1.5h0m1.7-4.1h0m1.9 0.7h0m1.5 2.3h0m3.4-2.1h0m2.5 5.7h0m0.2-5h0m6.4-0.2h0m1.2 4.1h0m1.3 0.7h0m1-1.5h0m0.5 0.1h0m0.4-4.1h0m0.9 2.6h0m1.9 2.3h0m0.6-5.4h0m0.3 1.5h0m0.8 4.7h0m3.1 0.5h0m0.7-0.7h0m2-3.8h0m1.5 3.3h0m0.5-3.1h0" stroke="#fff" stroke-width="2.0" style="stroke-linecap:round" fill="none"/><path d="M171 500.6v3.5M173.3 499.2v3M173.6 528.9v5.1M212.4 499.1v4.1M224.7 499.4v4.4M228.1 499.7v4.3M230.7 502.9v5.5M245.5 534.1v3M247.7 499.6v4.9M253.6 500.4v6.3M256.6 511.2v5.5M263.4 519v4.2M262.8 502.8v5.1M263.4 537.4v6.4M263.7 525v3.6M277.1 517.8v6.8M294.6 502.2v3.3M300.3 506.6v3M316.4 507.7v6.1M327.3 510.9v2.4M339.7 500.2v3.3M341.2 502.5v6.4M343.3 503.5v4.5M343.9 505.2v4.4M349.7 507.4v2.2M353.3 500.7v4.1M362.9 522.3v4.9M373.4 500.6v5.5M379.8 506.2v4.1M384.8 503.1v6.5M394.5 514v2.1M396.6 509.1v6M397.2 501.2v3.8M397.3 514.1v3.3M400 505.5v4.3M404.7 509.2v5.9M410.6 500.3v6.9M413.4 511.3v7M430 522v5M440.4 499.3v5.8M456.9 499.5v3.5M458.4 502.8v6.3M479.8 503.1v6.9M485.7 519.8v3M491.9 511v4M500.9 523.6v6.3M503.6 515v6.8M510.4 500.9v5.7M513.4 499.6v6.3M515 499.7v3.6M523.4 514.5v5.8M524.5 508.6v2.4M535.2 508.1v3.2M537.6 501.3v6.8M544.5 499.9v5.8M544.9 534v3.4M546.8 504.3v3.9M551 500.5v5.7M551.9 500.5v5.1M556.2 500.2v6.5M582.5 504.9v6.6M593.7 532.2v6.2M600 501.2v4.3M599.9 505.6v2.2M602.5 501v2.4M602.9 503v6M608.4 515.7v3.5M621.2 501.7v4.3M620.8 511.9v4.8M625.7 509.4v2.3M632.3 500.5v4.5M638.1 507.2v4.5M640.1 510.4v5.6M642.7 502.4v2.5M650.9 520.8v5.8M652.9 505v4.7M653 509v3.9M654.1 512.8v4.3M655.8 501.6v2.9M677.2 506.1v4.1M679.5 509.6v6.1M685.8 503.1v4.9M687.4 502.1v3.2M696.9 500.4v6M701.2 500.9v5.5M714.6 510.6v6.1M714.7 515.6v3.3M715.2 511.1v2.1M717.4 507.6v4.5M717.4 508.2v6.8M723.4 501.8v3.1M724.8 499.8v5.2M729.8 516v2.1M730.7 501.4v2.9M730.8 504.5v6.9M733.5 502.4v4M735.5 500.4v2.2M741.3 523.8v2.9M756.7 518.9v3M772.5 507.5v6.9M775.1 501.7v6.9M782 525.5v4.2M782.7 515.1v5.1M790.6 509.4v3.7M791.2 500.3v5.5M797.8 519.4v6.7M799.7 507v3.5M803.7 510.8v4.4M805 500.8v5.4M805 501.8v3.7M810 512.2v6.9M813.3 546v4.7M816.4 502.4v5.3M819.8 508.1v3.7M823.4 514.1v5.4M828.9 503.5v4.4M830.1 504.8v4.8M831.6 511.3v3M838.7 512.2v7M848.2 510.9v4M849.4 503.1v5.6M852.1 506v5.3M852.1 509.5v3.5M870.5 500.3v6.2M876.7 503v2.9M880.3 500.6v2.7M881.9 502.4v4.3M882.2 511.1v2.5M883.4 507.9v6.4M888.3 501.6v2.6M889.5 501.6v3.6M892.7 499.6v2.4M894.4 507.6v4.7M895.6 500.8v6.8M898.8 499.3v4.8M904.4 513.5v3.2M904.1 504.9v3.4M903.9 499.4v6M908.6 507.9v5.5M911.9 501.2v6M919.1 501v3M920.2 501.8v2.9M921.5 519.6v6.2M921.1 514v3.8M921.3 503.7v4.3M922.9 511.5v6M923.8 501.1v5.5M932.1 503.2v3.4M934.5 538v5.3M935.4 500.6v3.3M938.1 510v5.5M939 503.7v6.3M939.2 502.9v3.2M940.9 501.5v2M940.9 503.8v5.4M946.6 510.7v4.9M949.4 515.7v7M953 510.1v2.6M954.4 501.7v2.4M954.1 504.3v6.9M955.3 499.8v6.2M959.5 509.1v4.8M962 501.5v6M964.7 499.7v4.6M968.6 511.5v5M969.9 502.6v4.5M971.9 523.2v6.3M972.1 507.9v2.1M975.5 509.8v3.2M976.4 513.8v6.6M976.2 518.1v6.7M977.6 500.6v4.7M983.6 506.9v2.4M989.6 500.4v3.5M989.6 500.8v5.4M991.8 516.1v3.3M993.4 501v2.6M997.5 517v2.8M998.4 518.9v4M1001.4 506.1v4.9M1001.9 500.2v3.4M1007.9 506.1v6.4M1012.5 503.9v3.3M1011.9 506.9v2.4M1012.8 504.5v5.8M1012.8 502.3v6.7M1023.9 521.1v2.2M1025.1 501.9v2.2M1026.3 509.2v6.5M1030.4 504.9v6.5M1030.6 499v5.1M1032.1 500.6v2.9M1033.6 500.6v3.7M1035.4 525.1v3.2M1036.5 500.9v4M1044.5 502.1v2.2M1045.5 503v3.6M1047.3 502v6.7M1056.6 505.1v2.6M1063.4 508.7v5.8M1079.5 514.5v5.6M1080.3 503.8v6.8M1082 506v4M1085.1 506.5v3.8M1095.5 508.4v5.5M1101.5 503.2v6.3M1101.5 501.5v6.7M1106.1 500v5.2M1107.4 504.7v3.2M1116.9 526.5v4.3M1133.6 502.2v4.5M1137.8 502.7v3.6M1145.3 512.8v7M1154.9 499.4v2.2M1157.4 503.5v6.3M1179.1 506.1v6.3M1180.5 499.2v4.7M1193.7 500.9v6.3M1207.4 500.9v3.5M1210.6 508.8v5.8M1216.2 502.4v4.7M1218.4 500.4v6.3M1221.9 510.7v3.1M1224.1 502.2v3.5M1226.8 499.9v6.2M1232.3 512.8v4.5M1271.3 499.4v3.4M1271.1 511.3v5.1M1283.9 507.3v4.7M1284 505.4v2.9M1285.4 506.7v3.1M1288.3 505.4v2.7M1293.1 502.7v3.8M1301.8 509.2v6.1" stroke="#fff" stroke-width="1.1"/><path d="M400.9 534.9v14.1M743.9 544.1v4.9M942.8 509.4v35.2M1225.6 497.2v32.2M673.9 525v24M245.9 505v34.7M742.1 538.6v8.2M895.4 497.1v7.1M1087.1 540v9M811.8 533.2v15.8M786.8 538.4v10.6M220.8 533.4v9.6M753.9 540.6v8.4M892.7 513.3v8.5M976.9 512.2v24.6M367.4 544.4v4.6M424.8 506.4v19.5M1237.2 507.8v29.4M294.3 499.5v39.3M859.4 511.3v13.7M1133.9 506.2v24.4M855 505.8v11.9M817.1 534v15M193.2 516.4v24M982.6 533.4v9.7M479.7 521.9v21M641.6 503.6v16M840.2 527.9v21.1M920.9 506.6v39.7M626.6 509.7v34.5M974.4 541.5v7.5M1125.3 508v22.4M746.1 517.8v28.7M673.3 507.8v5.6M630.2 517.6v16.2M715.7 497.7v11.5M386.4 520.2v21.7M1270.5 504.2v38.8M205.6 528.5v20.5M290.5 517.6v31.4M1219.9 497.8v21.3M477.4 541.8v7.2M877.8 507v32.2M233.7 507.4v38.1M563.6 542.9v6.1M777.3 500.6v23.7M247.4 500.5v30.1M1049.2 536.9v12.1M1299.4 524.6v10.4M289.8 522v17.8M464.6 533.1v15.9M208.7 537.2v11.8M562.2 533.8v15.2M433 524.7v24.3M1076 498.2v33.3M1255.1 527.2v21.8M1115.8 526.3v16.8M875.4 520.1v28.9M304 540.5v8.5M395.7 507.2v8.9" stroke="#fff" stroke-width="0.9" stroke-opacity="0.5"/><rect x="216.5" y="486" width="5.5" height="66" fill="#fff"/><path d="M162 552.4h0m0.1 1.5h0m0.1-65.6h0m0.1-0.9h0m0.4 76.8h0m0.4-15.1h0m0.6 3.4h0m1.2-0.7h0m0.2-73.3h0m0.1-7.4h0m0.2-7.6h0m0.1 18.8h0m0.1 0.5h0m0.1 4.1h0m0 98.5h0m0.1-117.1h0m0 20.9h0m0 60.5h0m0 3h0m0.1-92.2h0m0 1.4h0m0.1 12.7h0m0.1 85.5h0m0.1-90h0m0 97.9h0m0.1-110.4h0m0 17.7h0m0 0.8h0m0 0.4h0m0 13.5h0m0 60.7h0m0.1-89.8h0m0 9.7h0m0 15.6h0m0.1-26.9h0m0 99.3h0m0.1-7.9h0m0 0.5h0m0 2.4h0m0.1-93h0m0.1 3.5h0m0 6.7h0m0 2.4h0m0 0.7h0m0 1h0m0 9.9h0m0.1-27.8h0m0 15.1h0m0 4h0m0 2.9h0m0 1.6h0m0 5.4h0m0 63.5h0m0 7h0m0.1-75.3h0m0 5.1h0m0.1-28.4h0m0 2.1h0m0 22.2h0m0.1-24.9h0m0 10.4h0m0 0.9h0m0 4.8h0m0 4.4h0m0 10.6h0m0 60.2h0m0 5.6h0m0 0.4h0m0.1-93.5h0m0 13.2h0m0 10.2h0m0 4.7h0m0 0.8h0m0 60.2h0m0.1-75.9h0m0 9.2h0m0 4.5h0m0.1-7.7h0m0 75.1h0m0.1-2.4h0m0.1-94.4h0m0.1 5.7h0m0 10.6h0m0 3.4h0m0 10.2h0m0.2-17h0m0 3.7h0m0 2.3h0m0 2.1h0m0 3.1h0m0 4.9h0m0.1-4.6h0m0.2 2.5h0m0.1-9.7h0m0 11.7h0m0.1-2.9h0m0 6.1h0m0 2.4h0m0.1-24.9h0m0.1 9.7h0m0 3.7h0m0.1 73.1h0m0 16.9h0m0.1 3.6h0m0.2-24.3h0m0.1-2h0m0 1.7h0m0 17.4h0m0.1-19.3h0m0 16.2h0m0.1-74.6h0m0 68.7h0m0.1 11.3h0m0.1-103.3h0m0 95.2h0m0.1-13.3h0m0.2 1.4h0m0.2 20h0m0.2-17.3h0m0.4 8.1h0m0.1 0.9h0m0.3 1.6h0m0 13.2h0m0.2-86.6h0m0 59.3h0m0.1 1.5h0m0 7.5h0m0 13.8h0m0.1-15.3h0m0 0.3h0m0 2h0m0.1-9.9h0m0 4.9h0m0 3.8h0m0 1.2h0m0 1h0m0.2-0.6h0m0 8.5h0m0.1-12.3h0m0.3-66.9h0m0.1 60.5h0m0 3.4h0m0.1 1.9h0m0.1 25.5h0m0.6-15.3h0m0.3-77.4h0m0.1-10h0m0.2 90.5h0m1-13.1h0m0.1 22.4h0m0.1-97h0m0.1-5.7h0m0 6.3h0m0 100.1h0m0.2-90.8h0m0.1 58.5h0m0 20.2h0m0.1-90.7h0m0.1 70.2h0m0 0.7h0m0.1-60.3h0m0 71.2h0m0 13.1h0m0.1-24.6h0m0 4.6h0m0.1 6.2h0m0.1-7.2h0m0 4.8h0m0.3-66.2h0m0 71.4h0m0.4-9.8h0m0 4.7h0m0 1.9h0m0.1-70.5h0m0 62.3h0m0 9h0m0.2-78.8h0m0.1 80.8h0m0.1 1.8h0m0.1-9.2h0m0.1-75.8h0m0.1 11.6h0m0 63.6h0m0 11.5h0m0.2-10.6h0m0.2-68.6h0m0 2.7h0m0.1-5.3h0m0 2.5h0m0 64.1h0m0.1-70.4h0m0 69.9h0m0.1-92.6h0m0 4.4h0m0 26.9h0m0 1.6h0m0.1-30.3h0m0 22.7h0m0.1-22.2h0m0 9h0m0 3.4h0m0.3 76.6h0m0.1 2h0m0.1-0.5h0m0.2 15h0m0.1-14.8h0m0.1 3h0m0 4h0m0.3 10.4h0m0.8-16.4h0m0.4 4.1h0m0.1-6h0m0.1 0.9h0m0.2-1.7h0m0.1-66.1h0m0 70.2h0m0.1 1.1h0m0.3-2.2h0m0.1-2.6h0m0 0.5h0m0 0.7h0m0.1-1.7h0m0.1-61.7h0m0.1-8.3h0m0 70.6h0m0 4.7h0m0 7.3h0m0.1-4.8h0m0.1-80.1h0m0 72.1h0m0 1.7h0m0 9.3h0m0.1-8.5h0m0 0.1h0m0 0.1h0m0.1 1.4h0m0 5.6h0m0 20.8h0m0.1-24.9h0m0.1 8.8h0m0.1-14.3h0m0 7.6h0m0.1 3.4h0m0.2 1.8h0m0.2-10.3h0m0 4.6h0m0.2 3.8h0m0.2-71.6h0m0 1h0m0 60.8h0m0 20.4h0m0.1-12.4h0m0.1 3.1h0m0.1-11.9h0m0 16h0m0.1-90.7h0m0.1 77.5h0m0 10.3h0m0 4.9h0m0 10.3h0m0.1-91.3h0m0 70.7h0m0.3-8h0m0 7.9h0m0.1-2.6h0m0 20h0m0.3-18.5h0m0.2-65.9h0m0.2 62.6h0m0.2-62.5h0m0 81.2h0m0.5-81.9h0m0.1 60.8h0m0.3-77.5h0m0 80.6h0m0.1-66h0m0.1 2.9h0m0.1 59.3h0m0 4h0m0 3.1h0m0.1-6.6h0m0.2-62.4h0m0.1 67.1h0m0.1-65.6h0m0.3 62.4h0m0.3-0.3h0m0.2 1.7h0m0.1-2.5h0m0.3 6.8h0m0.1-2.8h0m0.1 3.2h0m0.2 3.8h0m0.5-11.9h0m0.1 3.6h0m0.1-1.6h0m0.6-2.5h0m0.8 0.5h0m0.1 0.9h0m0.3 21.8h0m0.1 0.8h0m0.2-92.4h0m0.1-12.8h0m0.1 104.1h0m0 1h0m0.2-94.9h0m0 95.5h0m0.1-91.5h0m0.2-18.3h0m0 19.5h0m0 67.4h0m0.1-0.1h0m0 6.9h0m0 2h0m0.1-69.5h0m0 61.2h0m0.2-1.9h0m0 15.3h0m0.3-14.5h0m0 9.6h0m0.1-76.3h0m0.5 69.4h0m0 1h0m0.1-4.4h0m0.2-0.2h0m0.4 5.9h0m0.1 0.9h0m0 2.3h0m0.1-95.1h0m0 17.7h0m0.1-21.6h0m0 3.8h0m0 86.2h0m0.1-90.9h0m0.1 9.7h0m0 10h0m0 10.9h0m0 62.9h0m0.1-94.6h0m0 93h0m0 3.3h0m0 13.8h0m0.1-100.4h0m0 0.3h0m0 17.5h0m0 64.1h0m0 12.4h0m0.2-10.6h0m0 1.1h0m0.1-0.3h0m0.1-71.5h0m0.2 68.9h0m0.1 2.9h0m0 0.8h0m0.1-1.8h0m0 17.7h0m0 11.5h0m0.1-27.8h0m0 4.2h0m0.1-66.8h0m0.3 61.5h0m0 14.2h0m0.2-0.6h0m0.1 11.2h0m0.3-91.2h0m0 2.1h0m0.4 70.9h0m0.3-73.8h0m0.1 71.4h0m0.1-2.4h0m0 0.7h0m0.1 9.4h0m0.1-12.1h0m0 3.8h0m0.2-66.7h0m0 2.5h0m0.1 70.6h0m0.1 0.6h0m0 14.3h0m0.1-23.9h0m0 15.3h0m0.1-84.3h0m0 5.2h0m0 69h0m0.3-4.2h0m0.2-69.8h0m0 68.1h0m0.2-1.2h0m0.1 1.2h0m0.2-2h0m0 22.6h0m0.2-82.5h0m0 67.6h0m0.1-71.8h0m0 64.3h0m0.1 21.8h0m0.1-22.2h0m0 5.8h0m0.1-5.7h0m0 19.7h0m0 13.6h0m0.1 0.9h0m0.1-32.6h0m0.1 15h0m0 17.4h0m0.1-34h0m0.1 10.7h0m0.1-72h0m0 0.1h0m0.2 70.4h0m0.1-69h0m0 68h0m0 4.6h0m0 1.2h0m0 14.3h0m0.1-107.9h0m0 101.9h0m0.1-20.6h0m0.1-76.9h0m0 76h0m0.1-59.7h0m0 71.7h0m0.1-10.6h0m0.2-60.6h0m0 63.1h0m0.1-2.6h0m0 14.2h0m0 0.1h0m0.2-4.4h0m0.1 5.7h0m0.1-17.7h0m0 19.4h0m0.1-4.2h0m0.1 0.7h0m0 4.7h0m0 0.9h0m0.4-85.2h0m0 64.7h0m0.3-0.6h0m0.3-63.9h0m0.2 63.1h0m0 7.4h0m0.6 10.3h0m0 9.6h0m0.1-90.6h0m0.1 75.6h0m0 2.1h0m0.1-73.3h0m0 64.9h0m0 4.4h0m0 1.3h0m0.1-102.5h0m0 105.7h0m0.1-106.4h0m0 14h0m0 81.6h0m0.1-85.1h0m0 4.7h0m0.2-7.9h0m0 86.1h0m0 3.3h0m0.2-76.6h0m0 78.1h0m0.1-75h0m0 0.7h0m0.1-12.1h0m0 6.8h0m0 8.6h0m0.1-27.1h0m0.1 16.7h0m0 6.8h0m0.1-13.7h0m0 7.4h0m0 13.6h0m0.1-2.6h0m0 66h0m0.1-75h0m0.1-19.3h0m0 4.3h0m0 11.5h0m0 13.9h0m0.1-29.8h0m0 3.8h0m0 24.1h0m0.1-22.3h0m0 20.5h0m0 0.9h0m0 3.5h0m0 62.9h0m0.1-72.7h0m0 1.8h0m0.1-14.7h0m0 5.6h0m0 81.4h0m0.1-87.6h0m0 16h0m0.1 6.5h0m0 0.3h0m0.1-20.7h0m0 19h0m0.1-17h0m0 11.7h0m0 4h0m0.1-13.6h0m0.1-11.7h0m0 3.2h0m0 88.8h0m0.1-90.9h0m0 6.3h0m0 1.6h0m0 7h0m0 4.9h0m0 0.4h0m0 70.1h0m0.1-92.1h0m0 25.2h0m0 4.9h0m0 63h0m0 3.1h0m0.1-65.1h0m0 69.3h0m0.1-98h0m0.2 9.5h0m0.3 0.3h0m0.1 13.6h0m0 70.6h0m0.2-82.3h0m0 82.4h0m0.2-70.5h0m0.7 67.3h0m0 3.9h0m0.1 3.6h0m0.1 3.3h0m0.1-73h0m0.1 86.4h0m0.2-23h0m0 2.5h0m0.1 6.5h0m0.1-8.6h0m0.3-71.4h0m0.1 9h0m0 70.8h0m0.1-5.6h0m0.2-0.2h0m0 2.3h0m0 6.2h0m0.2-74.3h0m0 77.1h0m0.1-16.6h0m0 12.9h0m0 7.8h0m0.1-17.7h0m0.1 2.9h0m0.1-69.3h0m0.1 67.6h0m0 2.5h0m0.2-88.1h0m0 22.4h0m0 71.7h0m0.1-87.8h0m0 0.1h0m0 15.4h0m0.1-8.4h0m0 10.1h0m0.1-10.3h0m0 6.2h0m0.1 65.9h0m0.1-80.2h0m0 84.9h0m0.1-7.2h0m0.1-60.8h0m0.1 65.1h0m0 2h0m0.6-6.6h0m0.1 22.1h0m0.2-83.4h0m0.2 59.6h0m0.1 6.1h0m0.2 6.2h0m0.1-85.3h0m0 16.6h0m0 55.9h0m0 17.8h0m0.2-8.3h0m0 12.2h0m0.1-92.2h0m0.1-5.8h0m0 1h0m0.1 76.8h0m0 0.4h0m0.1 11.6h0m0.1-74.9h0m0.1 69.3h0m0 1.6h0m0.1-88.7h0m0 16.5h0m0 68.5h0m0.1-5.7h0m0.4-0.3h0m0.2 3.5h0m0.2-62.9h0m0.2 64.1h0m0.2-63.2h0m0.1 63.2h0m0.1-1.2h0m0.1-61.9h0m0.1 60.1h0m0 7.3h0m5.2-8.8h0m0 17.8h0m0.1 3.9h0m0.1-104.8h0m0 83.3h0m0 1.3h0m0 20h0m0.1-15.4h0m0 11.9h0m0 0.7h0m0.1-78h0m0 62.9h0m0 2.3h0m0.1 4.6h0m0 12.1h0m0 10.1h0m0.1-27.9h0m0.1 2h0m0 4.8h0m0 7.2h0m0.1-17.6h0m0 0.6h0m0 18.9h0m0 15.9h0m0.2-28.1h0m0.1-9h0m0 17.6h0m0.2-79h0m0 66.5h0m0 29.4h0m0.2-33.8h0m0 2.7h0m0 0.8h0m0 14.2h0m0 6.1h0m0.1 2.5h0m0.1-25.3h0m0 2.6h0m0 13.1h0m0.1-15.3h0m0 3h0m0.1-76.7h0m0 75.4h0m0.1-62.3h0m0 58.9h0m0 0.1h0m0.1 10.1h0m0 3.7h0m0.1-3.8h0m0.2 8.3h0m0.1-99.3h0m0 81.4h0m0 7.5h0m0.1-98.3h0m0 93h0m0 8.7h0m0 1.1h0m0.1-91.2h0m0 80.2h0m0.1-0.1h0m0 14.3h0m0.1-81.1h0m0.1-3.5h0m0.1 69.7h0m0 10.5h0m0 12.3h0m0.1-112.3h0m0 2.8h0m0 1.8h0m0 24.8h0m0 62.9h0m0.1-72.3h0m0 5h0m0 63.8h0m0.1-71.2h0m0 75.8h0m0.1-95.5h0m0 0.5h0m0 17.5h0m0 109.1h0m0.1-128.3h0m0 2.2h0m0 12.3h0m0 6.8h0m0 70.5h0m0.1-67.6h0m0 70.7h0m0 2.3h0m0 8.7h0m0.1-105.4h0m0 21.1h0m0 3.4h0m0 1.7h0m0.1-2.7h0m0 1.3h0m0 8.7h0m0 57.9h0m0 9.6h0m0.2-100.9h0m0 7.1h0m0 9.3h0m0 12.3h0m0.4-21.4h0m0.1 12.1h0m0 76.3h0m0.4-82.2h0m0 87h0m0.4-9.4h0m0 11.5h0m0.2-9.3h0m0.1-2.4h0m0 2.7h0m0.1-2.7h0m0.2 8h0m0.7-67.8h0m0.1 65.5h0m0 4.1h0m0.1-8.9h0m0 8.2h0m0.1-8.2h0m0.3 19.1h0m0.2-17.6h0m0.1 1.4h0m0.3-1.7h0m0.1 0.7h0m0.1 15.6h0m0.1-9.2h0m0.1 23.5h0m0.1-29.7h0m0 6.4h0m0.1-1.7h0m0.2-1h0m0 1.2h0m0.1 2h0m0 17.7h0m0.4-23.3h0m0 18.6h0m0.1-20.2h0m0.1-66.7h0m0 65.4h0m0.1 2.3h0m0 20.1h0m0.5-15.3h0m0.1 6.4h0m0 4.2h0m0.1-10h0m0 11.8h0m0.1-2.8h0m0 1.5h0m0.3-8.2h0m0.2-80.5h0m0 70.1h0m0 25h0m0.3-95.2h0m0 75.1h0m0.1-3.3h0m0.1-69.3h0m0 67.3h0m0.1-67.1h0m0 70.5h0m0.3-64.7h0m1.4-21.6h0m0 84.1h0m0.1 7.9h0m0 7.2h0m0 1.3h0m0 4.9h0m0.2-84.6h0m0 68.1h0m0 19.3h0m0.3-24.9h0m0 1.7h0m0.1 5.6h0m0.3 20h0m0.1-96.9h0m0 87.5h0m0.1-107.2h0m0 96.4h0m0.1-87h0m0 4.8h0m0 2.3h0m0.1 77.4h0m0.1-93.3h0m0 9.4h0m0 15.2h0m0.2-15.8h0m0 5.4h0m0 4.9h0m0 3.8h0m0 70.1h0m0.1-96.6h0m0 5.5h0m0 9.4h0m0 17.6h0m0.1 58.8h0m0.1-85.7h0m0 18.6h0m0 2.1h0m0.1 66.9h0m0.1-83.2h0m0 1.8h0m0 15.2h0m0.1-23.5h0m0 5.3h0m0.1-2.8h0m0 10.8h0m0.1-15h0m0 17.2h0m0 10.3h0m0.1-28.9h0m0 3.5h0m0 6.5h0m0 1.4h0m0 8h0m0.1-11.9h0m0 12.1h0m0 0.3h0m0 6.8h0m0 72.2h0m0.1-99.5h0m0 14.7h0m0.1-13.6h0m0.1 15.3h0m0 9h0m0 0.4h0m0 1.9h0m0.1-23.1h0m0 6.8h0m0 4.6h0m0 81.6h0m0.1-95.7h0m0 5.1h0m0 16.6h0m0 77.5h0m0.1-82.5h0m0 9.6h0m0.1-19.3h0m0 3.5h0m0 3.1h0m0.1-11.3h0m0 1.4h0m0 17.3h0m0 5h0m0 66.3h0m0.1-90.8h0m0 96.5h0m0.1-82.8h0m0 79.5h0m0.1-90.3h0m0.1 88.3h0m0.1-61.9h0m0.2-2.5h0m0.1-12.2h0m0 9.2h0m0 66.3h0m0.1-89.8h0m0 87.9h0m0.3-59h0m0.2 61.8h0m0.3-65.4h0m0.2 4.3h0m0.1-3.7h0m0 68.8h0m0.1-3.8h0m0.1-2.4h0m0 8.1h0m0.1-68.2h0m0 85.3h0m0.1-85.9h0m0 72.7h0m0.3-103.1h0m0.4 31.7h0m0 65.7h0m0.2-5.1h0m0 3.2h0m0.1-3.5h0m0 4.1h0m0.1-73.5h0m0.1 82.8h0m0.4-12.3h0m0 9.2h0m0.5-1.9h0m0.7-6.5h0m0.3 2.6h0m0.1 1.6h0m0.3-73.6h0m0 72.6h0m0.1 11h0m0.2-16.4h0m0.1 3.9h0m0.1-74.7h0m0 95.1h0m0.1-84.2h0m0 65.4h0m0 10.1h0m0.1-15.1h0m0.1-68.6h0m0 3.5h0m0.1 79.4h0m0.2-15.5h0m0.2-65.3h0m0.2 70.6h0m0 4.8h0m0.1 0.2h0m0.1-5.6h0m0.1-2.2h0m0.1-1h0m0.1 0.2h0m0 7.6h0m1-7.5h0m0.1-59.9h0m0.1 60.5h0m0.3-76.5h0m0.4 84.4h0m0.1-10.8h0m0 7.9h0m0.8-65.9h0m0 60.9h0m0 1.1h0m0.3-72.1h0m0 75.6h0m0.1-69h0m0.2 3.7h0m0.2 63h0m0 5.6h0m0.1-2.1h0m0.1-5.9h0m0 0.1h0m0.2-0.1h0m0 0.8h0m0 12.1h0m0.1-14.9h0m0 0.5h0m0.1-85h0m0 91h0m0.2-6h0m0.1 4.5h0m0.7-64.7h0m0.2-2.2h0m0.3 61.7h0m0.1-0.7h0m0.1 1.9h0m0.1-62.5h0m0.1 66.4h0m0.9-1.4h0m0.1-3.8h0m0.1-67.3h0m0.2 68.4h0m0.2-75.1h0m0 77.3h0m0.4 13.8h0m0.2-15.6h0m0 9.6h0m0 6.8h0m0.3-1.2h0m0.1-7h0m0.1 5h0m0.1-76.4h0m0 62.4h0m0.2 1.2h0m0 2.2h0m0 2.7h0m0 14.7h0m0.2-20.3h0m0.2 12h0m0.6-9.7h0m0.4 1.3h0m0.2-64.2h0m0.3 72.3h0m0.3-74.9h0m0.2 61.5h0m0 2.1h0m0 6.6h0m0.6-67.3h0m0 60.4h0m0.3-72h0m0 70.6h0m0.1-67.1h0m0 11.9h0m0.1-6.3h0m0.2-13.1h0m0.1 11.3h0m0 73.9h0m0.2-85.7h0m0 15.7h0m0 1.2h0m0 60.3h0m0 1h0m0.2 4.3h0m0.2-7.1h0m0.1-0.7h0m0 1.8h0m0.1 0.9h0m0.2 6.3h0m0.2-3.8h0m0 1h0m0.3-65.1h0m0.1 66.6h0m0.5-69.6h0m0.1 65.8h0m0.1-66.3h0m0.2 63.9h0m0.2 4.6h0m0.3-68.3h0m0.9-23.9h0m0.7 13.2h0m0.4-13.8h0m0.1 15.5h0m0.1-6h0m0 77.9h0m0.3-90.1h0m0 10.1h0m0 19.9h0m0.1 0.3h0m0.1-7.9h0m0.1 4.4h0m0.1-24.3h0m0 22.4h0m0.1-26.3h0m0 5.1h0m0 2.9h0m0 10.6h0m0.1-1.1h0m0 6.5h0m0.1-24.8h0m0.1 3.9h0m0 12.9h0m0 16h0m0 63.8h0m0.1-88.4h0m0.1 3.3h0m0 0.5h0m0 6.7h0m0 6.4h0m0 3.1h0m0 2.4h0m0.1-27.5h0m0 93.2h0m0.1-71.7h0m0.2-15.2h0m0 82.2h0m0.4 3.4h0m0.1-87.1h0m0 1.9h0m0.1 84.8h0m0.6-3h0m0.3-58h0m1.4 72.3h0m0.2-3h0m0.1 1.2h0m0.1-8.8h0m0.4-1.7h0m0 0.7h0m1 4h0m0.4-77.2h0m0.2 77.8h0m0.2 13.1h0m0.3-20.4h0m0.2-72.2h0m0.2 9.4h0m0 3.9h0m0.5-8.9h0m0.1-4.2h0m0 97.2h0m0.6-20h0m0.4-3.8h0m0.1 8.8h0m0.2-72.7h0m0.1-7.7h0m0 73.7h0m0.1-62.4h0m0.2-16.5h0m0 85h0m0.1 5.2h0m0 9.3h0m0.1-10.8h0m0.1-97.8h0m0 22.8h0m0.1-20h0m0 108h0m0.1-99.1h0m0 11.2h0m0 66.7h0m0 1.1h0m0.1-0.2h0m0 2.7h0m0.1-82.1h0m0 10.9h0m0 64h0m0 20.3h0m0.1-101.6h0m0 93.5h0m0 3.8h0m0 16.7h0m0.2-105.4h0m0 8.6h0m0 66.6h0m0 5h0m0.1-93.4h0m0 13h0m0 72.1h0m0.1 4.6h0m0 3.9h0m0.1-89.1h0m0 5.8h0m0.1-5.9h0m0 1.4h0m0 0.8h0m0 2.7h0m0 5.8h0m0 7.6h0m0 62.8h0m0.1-88.7h0m0 16.6h0m0 10.1h0m0 0.2h0m0 61.2h0m0.2-83h0m0 21h0m0 1.3h0m0 64.3h0m0.1-82.5h0m0 79.7h0m0.1-80.1h0m0 9h0m0 1.2h0m0.1-23h0m0 4.6h0m0 1.8h0m0 8h0m0 2.8h0m0 4.3h0m0.1-9.3h0m0.1-1.7h0m0 4.5h0m0.1-10.3h0m0 1.4h0m0 10.2h0m0 3.6h0m0 72.5h0m0.1-90.7h0m0 12.6h0m0 8.3h0m0 8.1h0m0.1-12.8h0m0 2.4h0m0 10.6h0m0 2.5h0m0.1-29.2h0m0.1 1h0m0 1.2h0m0.1 14.6h0m0.1-3.8h0m0 14.5h0m0.1-31.3h0m0 7.2h0m0.1 87.8h0m0 9.9h0m0.1-79.4h0m0.1 6.7h0m0.3 1.3h0m0.1 66.2h0m0.1-6.9h0m0 1.7h0m0 2.4h0m0.1-96.5h0m0 15.2h0m0 0h0m0.2 3h0m0.4 78.1h0m0.1 7.3h0m0.2 1.7h0m0.1 16.9h0m0.2-89.7h0m0.1-5.3h0m0 8.6h0m0.1 62.3h0m0.1 9.7h0m0.2-78.2h0m0.2-7h0m0 71.6h0m0.5-3h0m0 3.2h0m0.2-1.8h0m0.1-62.1h0m0 63.3h0m0.2 1h0m0.2 1.5h0m0.4 12.1h0m0.1-15.2h0m0 2h0m0 3.5h0m0.9-1.5h0m0 13.8h0m0.2-17.7h0m0.1 1.3h0m0.1-3.6h0m0 4.1h0m0.2-0.4h0m0.4-2.3h0m0.2 21h0m0.3-8.9h0m0.2-10.5h0m0.1 0.7h0m0.1-68.2h0m0 67.3h0m0.1-61.1h0m0 58.1h0m0.2 12.6h0m0.1-6.5h0m0 7.3h0m0.1 14.6h0m0.4-103h0m0 75.5h0m0 1.7h0m0 27.3h0m0.1-25.1h0m0.1 9.4h0m0.2-73h0m0 59.2h0m0 3.8h0m0.1-3.2h0m0.1 3.9h0m0.3-63.5h0m0.4-6.4h0m0 76h0m0.1-69.1h0m0.2 59.4h0m0.9-58.6h0m1.1 57.8h0m0 0.3h0m0.5 1.6h0m0.3-71.6h0m0 69.9h0m0.8-58.2h0m0 61.9h0m0.5-1.2h0m0 12.6h0m0.3-9.3h0m0.1 0.7h0m0.2 0.7h0m0.6-4.6h0m0.2-1.5h0m1.1 1.9h0m0 0.3h0m0.1-0.2h0m0 4.4h0m0 10.1h0m0.2 4.7h0m0.1-17.8h0m0 3.8h0m0.4-2h0m0 14.8h0m0.1-79.9h0m0.2 74.5h0m0.1 4.7h0m0.3-84.4h0m0 72.4h0m0 8h0m0.1-12.9h0m0.1 0.4h0m0.2-73.6h0m0 70.2h0m0.1-0.7h0m0.1-83.9h0m0 85.4h0m0.3 2h0m0.1-79.3h0m0 82.2h0m0.1-69.9h0m0.1 5.4h0m0.2 58.2h0m0 0.6h0m0.2-61.1h0m0 80.7h0m0.2-1h0m0.2-14.4h0m0 0.6h0m0.1-65.8h0m0 67.9h0m0.1-2.9h0m0.6-70.1h0m0.2-2.3h0m0.1 84h0m0.1-77.1h0m0.2 71.2h0m0.5-9.4h0m0 3.8h0m0.9-63.6h0m0.1-0.7h0m0.3-23.6h0m0.1 11.6h0m0 77.2h0m0.2-0.9h0m0 3.7h0m0.4-8.2h0m0.1 9.6h0m0.1-5.8h0m0.1-2.1h0m0 6.7h0m0 16.2h0m0.2-20.7h0m0 12.7h0m0.2-16h0m0.1 20.6h0m0.1-21.7h0m0.1-59.7h0m0 60.4h0m0 5.5h0m0.1 11.9h0m0.1-15.3h0m0 6.1h0m0.3-70h0m0 72.7h0m0.1-74.3h0m0.1-26.2h0m0 18.8h0m0 83.2h0m0.1-72h0m0 73.4h0m0.1-79h0m0 4h0m0 68.3h0m0 0h0m0.1-98.3h0m0 21.9h0m0.1-4.7h0m0 3.1h0m0 79.9h0m0.1-71.7h0m0 65.7h0m0.1-76.3h0m0.1 79.4h0m0 1.4h0m0 7.3h0m0.1-86.1h0m0.1-8.1h0m0.1-5.3h0m0 18.4h0m0 3.6h0m0 74.9h0m0.2-11.5h0m0 1.4h0m0 15.1h0m0.1-106.3h0m0 6.7h0m0 87.4h0m0 2.1h0m0 13.4h0m0 3.8h0m0.1-113h0m0 4.3h0m0 4.9h0m0 16.3h0m0.1-14h0m0 7h0m0 73.2h0m0 7.4h0m0 8.3h0m0.1-110.9h0m0 11.5h0m0 18.6h0m0 70.5h0m0.1-99.8h0m0 6.5h0m0.1-4.3h0m0.1-1h0m0 0.8h0m0 5h0m0 13.8h0m0 7.9h0m0 3.5h0m0 62h0m0.1-88.1h0m0 8.7h0m0 8.8h0m0 69.1h0m0.1-76.6h0m0 3.3h0m0 5.9h0m0 3h0m0 66.6h0m0.1-91.9h0m0 94.3h0m0.1-84.8h0m0 7.3h0m0 2.6h0m0 2.9h0m0.1 7.1h0m0.1-20.4h0m0 10.7h0m0 71.5h0m0.1-94.5h0m0 5.7h0m0 88.3h0m0.1 0.5h0m0.1-85.5h0m0 93.9h0m0.1-96.2h0m0 18.3h0m0 4h0m0.1 67h0m0.1-93.2h0m0 12.8h0m0 7.2h0m0 7.2h0m0 76h0m0.1-96.4h0m0 0.6h0m0.1 5.3h0m0.1 7.5h0m0.1 76.1h0m0.1-73.7h0m0 3.9h0m0.1 72.4h0m0.2-97.6h0m0.1 28.8h0m0 58.3h0m0.2 1.8h0m0.4-0.4h0m0.2-1.5h0m0.1 0.1h0m0.1 0.7h0m0.5-63.9h0m0.1 63.6h0m0 10h0m0.4-10.4h0m0 0.8h0m0.2-63h0m0.2 62.4h0m0.3 18.8h0m0.7-79.9h0m0.1-4.9h0m0.2-3.4h0m0.7-3.5h0m0.1-7.4h0m0.4 80.1h0m0.1 5.5h0m0.1-1.2h0m0.1-4.3h0m0.4 0.4h0m0 0.8h0m0 20.8h0m0.7-20.6h0m0.1-0.9h0m0.1-66.6h0m0 67.7h0m0.6 4.3h0m0.7 4h0m0.1-80.8h0m0 10.7h0m0 60.1h0m0.2-74.3h0m0.1 90.6h0m0.2 3.3h0m0.1-81.8h0m0.5 79.8h0m0.1-87.6h0m0 9.2h0m0 5.9h0m0.3 55.4h0m0.1 6.4h0m0.1-0.7h0m0.1-71.4h0m0.1 7.5h0m0.1 68.3h0m0.2-5.4h0m0.1-3.5h0m0.3 1.7h0m0 10.8h0m0.3-4.2h0m0.1-8h0m0 24h0m0.1-23.5h0m0.1-65.5h0m0 65.3h0m0 3.4h0m0 13.9h0m0 3.5h0m0.1-22.9h0m0 2.1h0m0 29.2h0m0.1-95.6h0m0 68.3h0m0 1.5h0m0.1-5.7h0m0.1-72.5h0m0 77.1h0m0 7.2h0m0.1-8.2h0m0.1-62.6h0m0 59.5h0m0 7.2h0m0.1-5.2h0m0 4.2h0m0.1-6.4h0m0 1h0m0 2.7h0m0 0.2h0m0 2.3h0m0 4.1h0m0 1.3h0m0 5.6h0m0.1-83h0m0 66.8h0m0 10.4h0m0 18.1h0m0.1-87.9h0m0 63.6h0m0 7.9h0m0 13.6h0m0.1-26.5h0m0.1 6.7h0m0 0h0m0.1-6.1h0m0 10h0m0 0.5h0m0.1 2.6h0m0.1-10.3h0m0 1.6h0m0 8.4h0m0 7.2h0m0.1-18.3h0m0 12.5h0m0 3.6h0m0 6.1h0m0.1-14.9h0m0 2.1h0m0.2 0.7h0m0 1.4h0m0.1-10.2h0m0.1 12.7h0m0 0.7h0m0.1-91.2h0m0 90.2h0m0.1-12.5h0m0 6.9h0m0 12.6h0m0.1-21h0m0 4.4h0m0 5.7h0m0 3.2h0m0.1-12.1h0m0 0.2h0m0.1 5h0m0.1-69.9h0m0.1 65.9h0m0.2-74.2h0m0 74.4h0m0 11.6h0m0.1-16.2h0m0.2 2.2h0m0 2.2h0m0 9.1h0m0.2-10.6h0m0.1 12.1h0m0.1-75.5h0m0 60.8h0m0.2 5h0m0.2-5.5h0m0.1 2h0m0.2-90.7h0m0.1 11.4h0m0 84.6h0m0.1-90.7h0m0 12.8h0m0.2-21.3h0m0 4.8h0m0 1.8h0m0 5.8h0m0.1-3.5h0m0 3.5h0m0 19h0m0 71.4h0m0.1-10.1h0m0 6.3h0m0 7.4h0m0 2h0m0.1-10.4h0m0.2-91.2h0m0 86.5h0m0 5.1h0m0.1-0.4h0m0 20.7h0m0.1-23.4h0m0 4.1h0m0.1-69.1h0m0 61.9h0m0 17.5h0m0.2-1.8h0m0.3-14.7h0m0 7.4h0m0.1-6.4h0m0.2-1.3h0m0 31.2h0m0.1-23.8h0m0.2-82.6h0m0 85.2h0m0.5-5.9h0m0.2-63.5h0m0 68.6h0m0.3-10h0m0 9.5h0m0.1-1.7h0m0.3 4.4h0m0.3-0.7h0m0.2 22.6h0m0.1-27.4h0m0 1.3h0m0 3.1h0m0 7.2h0m0.1-12.1h0m0.2-67.5h0m0 72h0m0 3h0m0.1-13.3h0m0.1 1.4h0m0 5.6h0m0.1 1.5h0m0.1-6.3h0m0.1-3h0m0.1 3.8h0m0 10.7h0m0.3-91.6h0m0.1 8.8h0m0 71h0m0.3-75.6h0m0.1 14.8h0m0 58h0m0.1 3.8h0m0.1 19.5h0m0.1-18.6h0m0 14.9h0m0.1-12.3h0m0 23.3h0m0.1-94.8h0m0 65.2h0m0 2.3h0m0 15.5h0m0 7.6h0m0 1.3h0m0.2-15h0m0 5h0m0.1-17.3h0m0.1 2.6h0m0 33.8h0m0.1-27.8h0m0 10.9h0m0 3.4h0m0.1-10.4h0m0 7.4h0m0 8h0m0.1-18.4h0m0.1-6.1h0m0 6h0m0 14.5h0m0.1 1.7h0m0.1-22.2h0m0.1-1.3h0m0 6.8h0m0.2-0.7h0m0.2-2.3h0m0 15.4h0m0.1-19.4h0m0 31.6h0m0.1-91.6h0m0.2 69.5h0m0.1-8.4h0m0.2 28.7h0m0.1-22.7h0m0.1-75.7h0m0.2 66.6h0m0 0.3h0m0.1 10.8h0m0.5-9.2h0m0.1-65.7h0m0 65.2h0m0.3-1.6h0m0.3 0.6h0m0 3.1h0m0.1-87.9h0m0.6-3.1h0m0 23.1h0m0.1-11.8h0m0 76.5h0m0.1-81.3h0m0.1 80.8h0m0.1 1.7h0m0.1-92.1h0m0 9.3h0m0.1-10h0m0 1.8h0m0 7.3h0m0 3.5h0m0.1-8.1h0m0 93.9h0m0.1-97.1h0m0 22.4h0m0 0.3h0m0 8.8h0m0 58.3h0m0 6.9h0m0.1-73.7h0m0 0.3h0m0 6.5h0m0 69.8h0m0 6.8h0m0.1-92.9h0m0 2h0m0 11.8h0m0.1-17.7h0m0 3.9h0m0 13.5h0m0 2.2h0m0.1-9.6h0m0 3.7h0m0.1-25.2h0m0 17h0m0 5.2h0m0 4.4h0m0 1.7h0m0 74.3h0m0.1-92.8h0m0 2.8h0m0 9.3h0m0 1.7h0m0 6.8h0m0 0.6h0m0.1-27.9h0m0 23.1h0m0.1-19.5h0m0 0.9h0m0 2.8h0m0 10.6h0m0 0.8h0m0 6.5h0m0 4.4h0m0 62.9h0m0.1-88h0m0 12.4h0m0.1 6.1h0m0 67.3h0m0.1-64.9h0m0 64.5h0m0 3.4h0m0.1-93.5h0m0 7.4h0m0.1 5.8h0m0 15.9h0m0 63.8h0m0.1-94.9h0m0 92.4h0m0 18.5h0m0.1-109.7h0m0.1 23.8h0m0.1-7.7h0m0 89.8h0m0.1-107.9h0m0 29.1h0m0 69.3h0m0.2-67.4h0m0.1 71.9h0m0.2-76.5h0m0.2 67.8h0m0.2 7.3h0m0.1-92.8h0m0.1 85.6h0m0.2 5.7h0m0.2-68.6h0m0.1 1.3h0m0 59.5h0m0 14.3h0m0.1-9.6h0m0.8 2.7h0m0.4-7.8h0m0.3-59.8h0m0.6-2.3h0m0.1-13.3h0m0 12.1h0m0.2 65.1h0m0.1-69.3h0m0.2-3.5h0m0 75.5h0m0.1-3.4h0m0.1-61.4h0m0.1 64.8h0m0.1-62.7h0m0 66.2h0m0.1-71.8h0m0 65h0m0.1-65.5h0m0 5.6h0m0.1 70.8h0m0.1-70.9h0m0.1 60.2h0m0 7.6h0m0.2-67.4h0m0.1-6.5h0m0 65.2h0m1-58.5h0m0.2 63.9h0m0.1 14.9h0m0.1-9.6h0m0.1-9.9h0m0.1 4.3h0m0 1.3h0m0.1-6h0m0.2 8.4h0m0 7.5h0m0.3-75.4h0m0 71.6h0m0.2-5.9h0m0.1-74.3h0m0.2 10.8h0m0 58.6h0m0.2-69.1h0m0 67.9h0m0.1 4.8h0m0.1-2.9h0m0.1-73.9h0m0.2 6.6h0m0 5h0m0.1-13.9h0m0 74.7h0m0.2-58.5h0m0.2 0.7h0m0.1 71.9h0m0.1-7.5h0m0.1-5.1h0m0.1-71h0m0.2 69.3h0m0 3.1h0m0.1-79.1h0m0 8.5h0m0.1-19.5h0m0 3.6h0m0 4.4h0m0.2-13.9h0m0 5.6h0m0.1 87.4h0m0 4.1h0m0.1-70.9h0m0 67.7h0m0.1-83h0m0 20.1h0m0.2-1.9h0m0 94.7h0m0.2-23.5h0m0 20.2h0m0.1-24h0m0.1-70.6h0m0.1 79.6h0m0.5-9.2h0m0.2-3.2h0m0.1 10.2h0m0 3.4h0m0 4.1h0m0.2-0.1h0m0.2-13.9h0m0.3 17.4h0m0.1-22.3h0m0.1 16.7h0m0 11.7h0m0.5-17.3h0m0.1-2.1h0m0.1-8.9h0m0 4.1h0m0.1 34.4h0m0.1-36.5h0m0.2 11.9h0m0.2-10.8h0m0 17.5h0m0.1 4.7h0m0.1-8.8h0m0 14.9h0m0.1-16.3h0m0 8.8h0m0.1-22.7h0m0 28.9h0m0.1-26.6h0m0 6.4h0m0.1 10.6h0m0.1 0.1h0m0 4h0m0.1-22.5h0m0.1-64.7h0m0 4.3h0m0 62.7h0m0.1-2.4h0m0 0h0m0 1h0m0 3.6h0m0 3.7h0m0 1.8h0m0 6.6h0m0.1-98.7h0m0 80.4h0m0 3h0m0 15.1h0m0 0.3h0m0 1.1h0m0.1-15.4h0m0.1 30.9h0m0.1-94.3h0m0 2.2h0m0 61.5h0m0 4.9h0m0.1-71.5h0m0 95.7h0m0.1-111.2h0m0 84h0m0 29.2h0m0.1-29.3h0m0 0.2h0m0.1-80.9h0m0 14.2h0m0 69.1h0m0 5.9h0m0 7.6h0m0.2-86.8h0m0 75.1h0m0 18.3h0m0.1-29h0m0.1 5.9h0m0 9.3h0m0 7.7h0m0.2-9.6h0m0.1-12.2h0m0 35.4h0m0.1-23.2h0m0 2.3h0m0.1-12.7h0m0 4.2h0m0.2 30.7h0m0.1-35.9h0m0 33.4h0m0.1-30.6h0m0 9.8h0m0 1h0m0 13h0m0.1-8.7h0m0 6.3h0m0.3-11.4h0m0.2-13.3h0m0.2-0.6h0m0 24.7h0m0 9h0m0.1-24.1h0m0.1 2.4h0m0.1-12.9h0m0 27.6h0m0.1-22.8h0m0 0.4h0m0 4h0m0.1-7.6h0m0 3.8h0m0.1 2.2h0m0 8.4h0m0 6.7h0m0.1 4.4h0m0.1-86.3h0m0 63.4h0m0.2 17.7h0m0 1.6h0m0.1-0.4h0m0.2-18.7h0m0 25.2h0m0.1-92.9h0m0 67.5h0m0.2 25.5h0m0.1-29.6h0m0.6 5.7h0m0 0.3h0m0.5-6.4h0m0.2 0.7h0m0 5.3h0m0.1-5h0m0.1 19.7h0m0.1-15.3h0m0.1-67.8h0m0 69.8h0m0.1-5.5h0m0 11.4h0m0.1-72.2h0m0.1 76.2h0m0.7-90.4h0m0 81.9h0m0 11.8h0m0.1-10h0m0 19.7h0m0.1-15.8h0m0.1-9.6h0m0.1-65.4h0m0 63.9h0m0 15.2h0m0 11.5h0m0.1-90.7h0m0 61.9h0m0.1-82.2h0m0 89.7h0m0.1-71.8h0m0 66.2h0m0 9.6h0m0.1-11.2h0m0 14.7h0m0.1-1.1h0m0.1-9.8h0m0 1.5h0m0 4.7h0m0.1 7.6h0m0 2.1h0m0.1-83.5h0m0 67.9h0m0 5.9h0m0 7.6h0m0.1-19.5h0m0 15.4h0m0.2 3h0m0.1-13.7h0m0 12.9h0m0.1 10.3h0m0.1-10.3h0m0.6-14.7h0m0.5-1h0m0.4-64h0m0.1 69.9h0m0.6-5.3h0m0.3-68.3h0m0 78.6h0m0.1-10.3h0m0.1 1.7h0m0.1-2h0m0.3-2.1h0m0 5h0m0.1-65.3h0m0 60.2h0m0 9.7h0m0.2-9.5h0m0.3-63h0m0.1 78.6h0m0.2 2.9h0m0.1-13.4h0m0.1-4.4h0m0.1 2.8h0m0.1 12.2h0m0.3-7.2h0m0.2-67.6h0m0.2-11.9h0m0 83.8h0m0.1-10.3h0m0.1 6.8h0m0.1 21h0m0.2-24.8h0m0 0.7h0m0.1-3h0m0.1 6.2h0m0 6.1h0m0.1-79.5h0m0 65.7h0m0.2 4.7h0m0.1-89.3h0m0 0.5h0m0 2.1h0m0.2-8.7h0m0 91h0m0.1-63.6h0m0 65.7h0m0.1 24.9h0m0.1-28.5h0m0.1 27.5h0m0.2-115.4h0m0.4 95.1h0m0.1 18h0m0.1-83.8h0m0 58.6h0m0.2-0.5h0m0.1 7.6h0m0 1.4h0m0.2 15.4h0m0.2-19.5h0m0 14.3h0m0.2 12.6h0m0.1-5.8h0m0.1-8.8h0m0.2-10.8h0m0.1 17.9h0m0.1-23.8h0m0.1 19.2h0m0 1.3h0m0.2-78.8h0m0 78.2h0m0.1-15.7h0m0.1-0.5h0m0.1-0.9h0m0.1-69h0m0 68.9h0m0.1 4.2h0m0.2-93.5h0m0 28.3h0m0.1-2h0m0.1-1.6h0m0.2-1.6h0m0 66.3h0m0 1.2h0m0.1-3.4h0m0.2-60.5h0m0.1 60.5h0m0 10.2h0m0.1-0.4h0m0.2-9.8h0m0.3-62.1h0m0 0.4h0m0.1 1.3h0m0 65.3h0m0.2-81.3h0m0 82h0m0.1-90.9h0m0 98.9h0m0.1-78.4h0m0 67.2h0m0.1-64.7h0m0.1-17.9h0m0 20.8h0m0.2-6.2h0m0.1-23.2h0m0 6h0m0 6.6h0m0 0.3h0m0.1-17h0m0 2.5h0m0.1 1.1h0m0 8.5h0m0 3.8h0m0.1-12.1h0m0 0h0m0 5.5h0m0 20.8h0m0 62.5h0m0 8.6h0m0.1-70h0m0.1-15.7h0m0 2.1h0m0 12.4h0m0 0.6h0m0.2-22h0m0 5.6h0m0.2-2.7h0m0.1-3.6h0m0 23.6h0m0 70.7h0m0.1-96h0m0 13.3h0m0.1-13.7h0m0 91h0m0.3-75.3h0m0 79.3h0m0.1-6.5h0m0.1-74.7h0m0 81.7h0m0.1-5.5h0m0.1-3.7h0m0 5.3h0m0.4 0.2h0m0.1 27.8h0m0.1-32.9h0m0.4 7h0m0.1-67.7h0m0.1 73.3h0m0.2-0.8h0m0.1-79.6h0m0 85.9h0m0.1-13.5h0m0 17.1h0m0.1-19.1h0m0.2-64.9h0m0.1 64.5h0m0 7.5h0m0.1-5.2h0m0 2.8h0m0.2-5.9h0m0 4.6h0m0.1-2.4h0m0.2-3.9h0m0.2 0.9h0m0 4.5h0m0.1-73h0m0 68.4h0m0.2 12h0m0.2-13.5h0m0.1-75.8h0m0 10.1h0m0.1 68.7h0m0.4-63h0m0 60.2h0m0 1.8h0m0 5.2h0m0.2-5.7h0m0 1.1h0m0.1 13.6h0m0.1 1.9h0m0.2-15.5h0m0.3 1h0m0.3-2.2h0m0.1-82.6h0m0 18.7h0m0.5 68.9h0m0.2-5.6h0m0 0.1h0m0 2.4h0m0.2-1h0m0 26.3h0m0.1-20.1h0m0.2-7h0m0 1.7h0m0.2 6.8h0m0.1-7.9h0m0.1 0.4h0m0 1.3h0m0.1-2.6h0m0 17.4h0m0.2-13.3h0m0.1-4.1h0m0.1 1.7h0m0 1.3h0m0 18.2h0m0.1-80.8h0m0.1 64.9h0m0.2-4.3h0m0.1-1.1h0m0.1-1h0m0.2 0.7h0m0.1 25.5h0m0.2-17.9h0m0.6-71.8h0m0 64.9h0m0.1 0.2h0m0.8-60h0m0.2 61h0m0.1 1.4h0m0.3-75.9h0m0 14h0m0.1 90.1h0m0.1-32.2h0m0 13h0m0.3-87h0m0.5 75.5h0m0.2-59.8h0m0.1-30.9h0m0 112.2h0m0.1-108.1h0m0 23.6h0m0.1 2.5h0m0 60.8h0m0.1-73.1h0m0.1 8.1h0m0.1-28.4h0m0 112.6h0m0.1-82.6h0m0.1-25.9h0m0 25h0m0.1-24.9h0m0 6h0m0 13.5h0m0 72.8h0m0 4.5h0m0 3.8h0m0 0.8h0m0.1-3.4h0m0.1-5.9h0m0.1 30.4h0m0.2-95.3h0m0 61.7h0m0 7.7h0m0 11.7h0m0.2 13h0m0.1-3.2h0m0.3-25.3h0m0 0.1h0m0 15.4h0m0 7.3h0m0.2-27.8h0m0 2.7h0m0.1 10h0m0 20.1h0m0.1-19.4h0m0.1-9.4h0m0.1-3.3h0m0 3.3h0m0 0.6h0m0 1.9h0m0 5.9h0m0 19h0m0 4.4h0m0.1-36.1h0m0.3 5.7h0m0 2.2h0m0.2-66h0m0 66.9h0m0 7.6h0m0.1-16.3h0m0 6.7h0m0 5.5h0m0.2-6.1h0m0 10h0m0.1-80.3h0m0.1 66.3h0m0 1.7h0m0.1 1.6h0m0 4.2h0m0.1-5.8h0m0 24.2h0m0.1-27.6h0m0.1 2.8h0m0.2-3.1h0m0.1 20.9h0m0.2-18.6h0m0 14.6h0m0.2-14.4h0m0 12.6h0m0.1 3.1h0m0.2-77.6h0m0.1 59.9h0m0.2 1.4h0m0.1 9.1h0m0.1 8.5h0m0.1-107.6h0m0 93.7h0m0 14.1h0m0.1-81.2h0m0 61.3h0m0 1.1h0m0 2.2h0m0 9.2h0m0 4.1h0m0 10.4h0m0.2-103h0m0 11.1h0m0 74.8h0m0 6.5h0m0.1-104.5h0m0 92.6h0m0 1.7h0m0 12.1h0m0.1-110h0m0 93.4h0m0 4h0m0 1.1h0m0 9.1h0m0 4.6h0m0 3.6h0m0.1-111.5h0m0 87.3h0m0.1-83.8h0m0 5.3h0m0.1-1.9h0m0.1 5.3h0m0 12.6h0m0 79.4h0m0.1-13.7h0m0 22.6h0m0.2-22.7h0m0.1 27h0m0.1-22.4h0m0.1 8.3h0m0.2-13.6h0m0 0.3h0m0.2-0.1h0m0.1-62.5h0m0.4 62.2h0m0.6 3.1h0m0 19.6h0m0.1-95.3h0m0 80h0m0.1-7.5h0m0 0.8h0m0.3 5.4h0m0 1.4h0m0 3.4h0m0 19.6h0m0.2-26.2h0m0.1-65.6h0m0 1.2h0m0 69.2h0m0.1-94.4h0m0 20.2h0m0 4h0m0 3h0m0 57.9h0m0 19.8h0m0 14.7h0m0.2-103.8h0m0 70.5h0m0 17.6h0m0.1-91.2h0m0 1.6h0m0 103h0m0 0.5h0m0.1-100.7h0m0 7.4h0m0.2-5.9h0m0 99h0m0.1-18.4h0m0.1 0.9h0m0.3 8.6h0m0 7.7h0m0.1-26.2h0m0.1-3.4h0m0 18.4h0m0.1-80.3h0m0.2 67.5h0m0.1 25.5h0m0.2-34.2h0m0 10.7h0m0.3-8.3h0m0.1-67.7h0m0 64.6h0m0.2-58.4h0m0.3-11.9h0m0 100.8h0m0.1-15.6h0m0.1-14.5h0m0.1-68.6h0m0.4 71.7h0m0.2 13h0m0.3-14h0m0.1 0.5h0m0 1.1h0m0 15.2h0m1.2-14.1h0m0.1-1.7h0m0 3h0m0.1 6.2h0m0.1-7h0m0.1-4.3h0m0.4-1h0m0.1 11.1h0m0.2 5.4h0m0.1-11.9h0m0 1.3h0m0.2 11.4h0m0.1-15.9h0m0 4.1h0m0.2-2h0m0.1-1.4h0m0.1 0.1h0m0 14.9h0m0.1-17.1h0m0.1-58.4h0m0.2 72.6h0m0.1-11.6h0m0 12.4h0m0.3-11.8h0m0.1-0.8h0m0.1 9.1h0m0.1-2.6h0m0.1-0.9h0m0 2.5h0m0.2 0h0m0.2-8.3h0m0 10h0m0.1-80.9h0m0 1.5h0m0.1 0.1h0m0.1 0h0m0.1-24.9h0m0 7.6h0m0 11.5h0m0 1.5h0m0 8.7h0m0 94.3h0m0.1-30.6h0m0.1-60.1h0m0 68.4h0m0.1-6.3h0m0 22.2h0m0.1-103.3h0m0 82h0m0 28.9h0m0.1-118h0m0 87.4h0m0 3.9h0m0 6.6h0m0.5-10.7h0m0.1-1.1h0m0 4.3h0m0 5.1h0m0.2-7.8h0m0.1-2.7h0m0 3.3h0m0.1-2.6h0m0.1 5.7h0m0 10.9h0m0.1-14.9h0m0.1 2.5h0m0.1 1.2h0m0.1-6.1h0m0 2.3h0m0.5 1.1h0m0.3-66.9h0m0.2-23.3h0m0.2 87.1h0m0.1-60.2h0m0.4-3.3h0m0.8 69.3h0m0 4.4h0m0.2-9.6h0m0 23.6h0m0.2-84.1h0m0.1 62.1h0m0 0.6h0m0 30.5h0m0.2-33.9h0m0 33.2h0m0.1-6.4h0m0.1-22.7h0m0.1-2.2h0m0 10.5h0m0 4.5h0m0.1 3.1h0m0.2-3.5h0m0.1-7.1h0m0.1-5.6h0m0 4.8h0m0.1-2.6h0m0 6.5h0m0 14h0m0 6.5h0m0.1-32.2h0m0 1.5h0m0 5.8h0m0 3.2h0m0 2.1h0m0.1-12.7h0m0 4.4h0m0.1-2.8h0m0 1.9h0m0 5.5h0m0 18.6h0m0.1-14.2h0m0 8.5h0m0 0.3h0m0 1.7h0m0 6.3h0m0.1-24.7h0m0 10.9h0m0 7.6h0m0.1-23.4h0m0 5.3h0m0 5h0m0 12.5h0m0.2-22.9h0m0 5.1h0m0 1.3h0m0.1-1h0m0 17.1h0m0.1-21.4h0m0 32h0m0 0.5h0m0.2-19.1h0m0 1.8h0m0.1-10.8h0m0 1.5h0m0 14.6h0m0 9.1h0m0.1 3.7h0m0.1-15.5h0m0.1-18.6h0m0 26.7h0m0 5.3h0m0.2-1.8h0m0.1-26h0m0 29.1h0m0.1-92.6h0m0 0.3h0m0 76.2h0m0.1 12.3h0m0.1-16.4h0m0 1.8h0m0 15.6h0m0.1-95.2h0m0 64.8h0m0 37.7h0m0.1-26.7h0m0 5.8h0m0.1 14.2h0m0.1-23.9h0m0.1 31.9h0m0.1-18.9h0m0.1 4h0m0.1 6.4h0m0.3-25.6h0m0 8.1h0m0.1 20.2h0m0.1 4.6h0m0.5-106.2h0m0 1.4h0m0.3 67.1h0m0.1-87.5h0m0 5.4h0m0.1 14.9h0m0 6.2h0m0.1-32.2h0m0 0.4h0m0 13.7h0m0 0.7h0m0 4.6h0m0 4.7h0m0.1 6.4h0m0.1-15.3h0m0 100.1h0m0.1-85.9h0m0.1-23.4h0m0.4 86.3h0m0.3-61h0m0.1-0.4h0m0.4 62.9h0m0.3 1.4h0m0.3-1.3h0m0.2 9.6h0m0.1-8.8h0m0.1-1.5h0m0.3-0.9h0m0.1 2.8h0m0.2-3h0m0.4 11.4h0m0.2-10.8h0m0 0.8h0m0.1 2.1h0m0.1-63h0m0 63.1h0m0 4.6h0m0 0.5h0m0.1-72h0m0.1 81.4h0m0.2 5h0m0 0.1h0m0.1-92.9h0m0 7.1h0m0 69.7h0m0 17.9h0m0.2-24.5h0m0.2-1.1h0m0 3.7h0m0 0.3h0m0 3h0m0.1-79.2h0m0 81.2h0m0.1 1.2h0m0.1-70h0m0.1 64.5h0m0 6.5h0m0.4-2.2h0m0.7-5.7h0m0.1 0.7h0m0.1-0.1h0m0.1 6.7h0m0.3-10h0m0.3 1.5h0m0 2.4h0m0 8.9h0m0.1-12.8h0m0.1 12.7h0m0.3-9.9h0m0.2-62.8h0m0.2 66.5h0m0.1-91.5h0m0.7 87.1h0m0 1.4h0m0.1 0.1h0m0.3-0.6h0m0 20.5h0m0.2-17.1h0m0.1 0.5h0m0 7.4h0m0.2-13.1h0m0.3 1.8h0m0.1-3h0m0.1 9h0m0.1-8.7h0m0 0.4h0m0.1-70.8h0m0 9.1h0m0 62h0m0.1-0.1h0m0 21.6h0m0.1-11.2h0m0.2-3.8h0m0 10h0m0.2-13.7h0m0 18h0m0.2-18.8h0m0 6.7h0m0 13.6h0m0.2-18.9h0m0.1 10.3h0m0 2.4h0m0.1-13.2h0m0 7.2h0m0 13.5h0m0.1-19.1h0m0.1-5.7h0m0 15.1h0m0 0.7h0m0.1-12.2h0m0.1-1h0m0 0.9h0m0 1.6h0m0 12.6h0m0.1-14.6h0m0 16.1h0m0.1-17.2h0m0 4.6h0m0 3.5h0m0 22.9h0m0.1-28.7h0m0 8.7h0m0.1-6h0m0.3-5.7h0m0 9.4h0m0.2 0.5h0m0.2-4.7h0m0.6-5h0m0.1 16h0m0.7-78.5h0m0 62.1h0m0.4 3.2h0m0.3-2.2h0m0 4.4h0m0.9-75.7h0m0.3-10.9h0m0.1-9.4h0m0 7.7h0m0 22.2h0m0.1-8.7h0m0 5.8h0m0 64.4h0m0.1-93.4h0m0 1.2h0m0 9.2h0m0 10.8h0m0 11.4h0m0.1-30.3h0m0 8.8h0m0 7.2h0m0 12.4h0m0.2-25.3h0m0 2.7h0m0 2.5h0m0 9.2h0m0.1-17.2h0m0 5.5h0m0 16.3h0m0.1-24.8h0m0 94.5h0m0.1-84.6h0m0 3.1h0m0 86.9h0m0.1-88.5h0m0 3.5h0m0.1 16h0m0 75.5h0m0 3.3h0m0.2-102.4h0m0 84.5h0m0.1-84.6h0m0.2 107.7h0m0.1-22h0m0 1.3h0m0 24.9h0m0.1-19.2h0m0 13.1h0m0.3-98.1h0m0.2 3.6h0m0 97.1h0m0.1-86.3h0m0 4.3h0m0 80.9h0m0.2 0.5h0m0.1-22.1h0m0.1 2.4h0m0.1-65.6h0m0.2 66.2h0m0 1.2h0m0.2-79h0m0 9h0m0.3-10.9h0m0 80.2h0m0 10h0m0.3-14.9h0m0.5 1h0m0.1 7.2h0m0.2-0.4h0m0.1-80.8h0m0 1.3h0m0.1-5h0m0 88.3h0m0.1-72.2h0m0 62.1h0m0.1-72.1h0m0 4.7h0m0 94.4h0m0.2-84.1h0m0 55.9h0m0.2-68h0m0.4 73.2h0m0 7.3h0m0 5h0m0.1-15.2h0m0 16h0m0.3-16.7h0m0 10.9h0m0.1-6.9h0m0 9h0m0.1-8.8h0m0 5.5h0m0.1-8.8h0m0.3-1.9h0m0 11h0m0 5.2h0m0.1 12.8h0m0.2-29.8h0m0 4.1h0m0.1 16.5h0m0.2-88.8h0m0 74.8h0m0.1-0.4h0m0.2 0h0m0 4.3h0m0.1 0.8h0m0.1 1.3h0m0.1-8.3h0m0.1-66.9h0m0 65.8h0m0 13.5h0m0.2-15h0m0.1 25h0m0.3-23.2h0m0.2-3h0m0.1 3.9h0m0 10.7h0m0.2-15.1h0m0.3-77.5h0m0 10.1h0m0.1-6.3h0m0 75h0m0.1-74.2h0m0 1.8h0m0 74.9h0m0.1-63.7h0m0 76.4h0m0.1-93.2h0m0 3.3h0m0 14.6h0m0 61.6h0m0.4-70.2h0m0.2-16.6h0m0 0.3h0m0 22.5h0m0 66.8h0m0.1 8.2h0m0.1-100.6h0m0 104.7h0m0.1-107.1h0m0 1.5h0m0 8.8h0m0 2.1h0m0 83.6h0m0 13.1h0m0.1-88.5h0m0 68.8h0m0 8.4h0m0 7.4h0m0.1-104.8h0m0 9.3h0m0 13.2h0m0 8.6h0m0 58.7h0m0 6.1h0m0.1-81.8h0m0 14.1h0m0 1.7h0m0 66.4h0m0 5.1h0m0.1-98.3h0m0 8.5h0m0 84.1h0m0.1-93h0m0 5.1h0m0 4.3h0m0 2.2h0m0 2.9h0m0 78.4h0m0.1-98.4h0m0 4h0m0 9.2h0m0 15h0m0.1-20.8h0m0 14.5h0m0 3.4h0m0 2.3h0m0 2.3h0m0.1 66.4h0m0 2.4h0m0.1-87h0m0 5.7h0m0 9.1h0m0.1-8.7h0m0 7.4h0m0 7.6h0m0 73.8h0m0.1-99.9h0m0 5.7h0m0 20.5h0m0 60.3h0m0 10.6h0m0.1-88.2h0m0 4h0m0.1 8.5h0m0 68.3h0m0 13h0m0.1-77.2h0m0.1 59.8h0m0.1-72.1h0m0 7h0m0 69.1h0m0.1-89.7h0m0 0.2h0m0 1.2h0m0 1.3h0m0 2.9h0m0.1 8.9h0m0 3.4h0m0.1 2.3h0m0 66.9h0m0 6.9h0m0 6.2h0m0.1-80.2h0m0.1 71.9h0m0 13.1h0m0.1-98.6h0m0 3h0m0.1-12.1h0m0 91.6h0m0 11.8h0m0 21.8h0m0.1-28.8h0m0.1 2.6h0m0.1-9.6h0m0 3.5h0m0.1-0.3h0m0.2 2.8h0m0.1 16.4h0m0.1-17.2h0m0.2-4.8h0m0 0.5h0m0 4.7h0m0.1-6.9h0m0 2.3h0m0.1-0.4h0m0.3 22.9h0m0.3-15.9h0m0.1-4h0m0.1-3.1h0m0.2 1.9h0m0 4.6h0m0.2 1.7h0m0.2-10.2h0m0.7 4.5h0m0.3-0.6h0m0 1h0m0.1-2.9h0m0 4h0m0 23h0m0.1-20.4h0m0 2.2h0m0.1-8.7h0m0 2.6h0m0 24.5h0m0.3-25.3h0m0 11.3h0m0.2-10.8h0m0 5.2h0m0.1-9.6h0m0 1.6h0m0 6.6h0m0 5.7h0m0 14h0m0 3.9h0m0.1-91.7h0m0 61.1h0m0 16.5h0m0.1-11.8h0m0 22.3h0m0.1 2.4h0m0.1-30.2h0m0.2 14.7h0m0.2-2.2h0m0.2-92.3h0m0 85.6h0m0.1 1.5h0m0.1-80.1h0m0.1-7.1h0m0 99.7h0m0.1-77.4h0m0.1-20.3h0m0 5.2h0m0 72.9h0m0 12h0m0.1-2.1h0m0 8.3h0m0.2-83.2h0m0.1 5.8h0m0 65.2h0m0.4-70.6h0m0.1 1.9h0m0.3 65.4h0m0 1.9h0m0.2-5.1h0m0.2-64h0m0 2.8h0m0 66.5h0m0.1 10.2h0m0.1-14.8h0m0 33.8h0m0.2-28.7h0m0.1 9.6h0m1.7-85.5h0m0.1 1.2h0m0 73.6h0m0.1-69.7h0m0.1-23.8h0m0 10.2h0m0 6.3h0m0 77h0m0.1-96.3h0m0 2.3h0m0 11.2h0m0 18.5h0m0.1 0.8h0m0.1-29.2h0m0 93.4h0m0.2-5.2h0m0.1 2.3h0m0.2-0.4h0m0.8-1.2h0m0.1 0.6h0m0.2-76.1h0m0 4.4h0m0 76.8h0m0.3-72.7h0m0.1 68.5h0m0.2 1.1h0m0.6 1.1h0m0.1-3.8h0m0.9 4.2h0m0.5 5.6h0m0.2 3.4h0m0.1-11.3h0m0 0.9h0m0 15.6h0m0.1-7.7h0m0.3-79.9h0m0 68.5h0m0 0.7h0m0 0.3h0m0.2-89h0m0 18.4h0m0 80.4h0m0 3.2h0m0.1-13.3h0m0.1-92.4h0m0 19.9h0m0 5.6h0m0 68h0m0 4h0m0.1-96.4h0m0 6.3h0m0 9.4h0m0.1-6.4h0m0 88.5h0m0.1-93.2h0m0 13.9h0m0.1 9.2h0m0 3.5h0m0 70h0m0.1-84.4h0m0 13.5h0m0 61.9h0m0.1 0.9h0m0.1-79.3h0m0 3h0m0 4.3h0m0 75.5h0m0 9.2h0m0.2-84h0m0 76.3h0m0.1 13.2h0m0.2-84.3h0m0 70h0m0.1 0h0m0.1 17.9h0m0.1-11.2h0m0.2-9.5h0m0.1 3.3h0m0 6.9h0m0.2-10.2h0m0 4.2h0m0.1-5.3h0m0.7 18.5h0m0.2-21.2h0m0.1 3.2h0m0.1-0.3h0m0 11h0m0.1 10.2h0m0.1-21.1h0m0 9.4h0m0.2-12h0m0 5.4h0m0 0.9h0m0.2-6.2h0m0 5.5h0m0 11.5h0m0.1-16.4h0m0.8-64.4h0m0 66h0m0.1 5.1h0m0.1-6.5h0m0 3.2h0m0 0.6h0m0 0.1h0m0 18.9h0m0.1-21.6h0m0 4.2h0m0 3.1h0m0.2 15.7h0m0.1-22.8h0m0.1 6.5h0m0 7.9h0m0 18.6h0m0.1-35.7h0m0 4.7h0m0 8.4h0m0 1.6h0m0.3-11.2h0m0 1.4h0m0 0.1h0m0 17.4h0m0 9.6h0m0.2-30.6h0m0.3-67.9h0m0.3 79.1h0m0.2 5.8h0m0.1-12.9h0m0 0.2h0m0.1 1.8h0m0.1 10.6h0m0 9.8h0m0.4-9.1h0m0.3-13.2h0m0 6.2h0m0.2-4.7h0m0.2-5h0m0.1 1.8h0m0.3-3.7h0m0.3 1.5h0m0 2.6h0m0.1 8.6h0m0 10.7h0m0.1-22h0m0.3-0.7h0m0.3 3.9h0m0 0.9h0m0.2-68.7h0m0 2.3h0m0 70.6h0m0.1-95.5h0m0 3h0m0 113h0m0.2-118h0m0.2 26.6h0m0 1.8h0m0.1-23.1h0m0 9.2h0m0.1 76h0m0.1-93.3h0m0.1 23.8h0m0 4.7h0m0 85.4h0m0.1-108.9h0m0 10.6h0m0 5.4h0m0.1-13.4h0m0.2-7.5h0m0 98.1h0m0.1-78.2h0m0.1-20.3h0m0 8.4h0m0 8.8h0m0 0.8h0m0 79.7h0m0.1-95.2h0m0 2.7h0m0 12h0m0 6.7h0m0.1-20.7h0m0 3.4h0m0 7h0m0 0h0m0 0.7h0m0 82.1h0m0.1-92.8h0m0 13h0m0 1h0m0 6.3h0m0 71.1h0m0.1-95.8h0m0 3.1h0m0 27.2h0m0.1 69.5h0m0.1-74.1h0m0.1-20h0m0 5.5h0m0 18.6h0m0.1-7.7h0m0 2.3h0m0 3.4h0m0 2.3h0m0 0.8h0m0 65.2h0m0.1-89.9h0m0 2h0m0.1 11.3h0m0 13.1h0m0.1-25.1h0m0 5.3h0m0 10.7h0m0.1 68.5h0m0.1-83.1h0m0 1.5h0m0 81.6h0m0.1-65.9h0m0.1-21.7h0m0 0.1h0m0 27.9h0m0.1-31.4h0m0 0.3h0m0 12.6h0m0 5h0m0 79.4h0m0.2-76.1h0m0 71.1h0m0 4h0m0.4-69.7h0m0.5 5.6h0m0 2.8h0m0.1 55.6h0m0.2-73h0m0 2.2h0m0.1 8.7h0m0.1 4.2h0m0.2-10.5h0m0.1 13.7h0m0 55h0m0.2-79.1h0m0 14.2h0m0.1-11.2h0m0 79.9h0m0.1-70.1h0m0.2-1.4h0m0.6 7.5h0m0 60.3h0m0.8 3.5h0m0.5-61.9h0m0.4-4.5h0m0.2 71.1h0m0.1 2.2h0m0.4-69.2h0m0.1 62.1h0m0 11.6h0m0.3-9.3h0m0.1-6.1h0m0 1.5h0m0 0.8h0m0 19.2h0m0.1-15.8h0m0 3.9h0m0 6.2h0m0 5.2h0m0 15.1h0m0.1-8.8h0m0.1-25.6h0m0.1 4.2h0m0 2.2h0m0 2.4h0m0.1-8.6h0m0 0.8h0m0 12.6h0m0.1-14.5h0m0 1.2h0m0 7.5h0m0.1-7.4h0m0 9.5h0m0 4.4h0m0.1-2.3h0m0.1-13.3h0m0 10.6h0m0.1-8.4h0m0 9.3h0m0 7.3h0m0.1-85.5h0m0 89.6h0m0.3-21h0m0 11.4h0m0 1.6h0m0.2 15.4h0m0.1-23.7h0m0 17.3h0m0.4-22.4h0m0 3.6h0m0.1-0.3h0m0.2-89h0m0 1.7h0m0.2 23.8h0m0 3.2h0m0 0.5h0m0 55.4h0m0.1-82.2h0m0.1 23.7h0m0 2.9h0m0.1-28.3h0m0 11.9h0m0 90.2h0m0.1-92.6h0m0 3.9h0m0.1 72.2h0m0 7h0m0.1-76.3h0m0.1-14.9h0m0.2 88.4h0m0.2-73.9h0m0.6 67.5h0m0 1.8h0m0.1 0.5h0m0.2 7.1h0m0.2-67.4h0m0.2-16.9h0m0 5.7h0m0 74h0m0.2-84.4h0m0.1 10.1h0m0.1-12h0m0 12.9h0m0.1-9.5h0m0 10h0m0 1.1h0m0.1 5.7h0m0.1 62h0m0 0.1h0m0.4-0.2h0m0.1 1.7h0m0.1-0.8h0m0.2-60h0m0 60h0m0.1-1.7h0m0.3 0.4h0m0.1 3.6h0m0.3-4h0m0 9.2h0m0 1.2h0m0.3-70.3h0m0.1 68h0m0.1-6.3h0m0.1 20.5h0m0.1-21.4h0m0 28.8h0m0.2-24.3h0m0.1-4.9h0m0.1 7h0m0.1 26.1h0m0.1-19.7h0m0.1 0.8h0m0.1-11.8h0m0 8.4h0m0.1-11.3h0m0.1 0h0m0 32.1h0m0.1-90.2h0m0 64.4h0m0 10.8h0m0.1 4.1h0m0.1-79.6h0m0 73.9h0m0.1 7.8h0m0.1-23h0m0 4.8h0m0 15.3h0m0.1-20.4h0m0.1-57.9h0m0 62.2h0m0 12.8h0m0.2-10.1h0m0.1-5.3h0m0 12.6h0m0.1-74.9h0m0 69.4h0m0.1-4.3h0m0.3-2.1h0m0.1-1.1h0m0 1.7h0m0.1-2.5h0m0 2.6h0m0.1-3.1h0m0 0.5h0m0 1.6h0m0 19.8h0m0 5.1h0m0 5.8h0m0.1-14.4h0m0 14.9h0m0.1-0.8h0m0.1-2.6h0m0.1-28.3h0m0 5.2h0m0 12.4h0m0 5.8h0m0.1-9.1h0m0.1-14.1h0m0 2.1h0m0 5.9h0m0.1 2.1h0m0.1 13h0m0.1-22.4h0m0.1-61.4h0m0 67.8h0m0.1 3.6h0m0 8.4h0m0.1-21h0m0.2 8.7h0m0 10.9h0m0 0.6h0m0.1-14.4h0m0 4.1h0m0.1 14.3h0m0.1-20h0m0.1 18.3h0m0.1 5.5h0m0.1-8.2h0m0 1.7h0m0 4.6h0m0.3 6.5h0m0.1 0.1h0m0.1-30.4h0m0.1 14.9h0m0 14.2h0m0.2-25.3h0m0 28.9h0m0.1-31.9h0m0.2-68.9h0m0 66.5h0m0.1 15.3h0m0.1-86.6h0m0 77.3h0m0 24.8h0m0.2-25.3h0m0.3 0.4h0m0.1-91.9h0m0 18h0m0 9h0m0 58.6h0m0 15.8h0m0.1-80.9h0m0 68h0m0 14.5h0m0 1h0m0.1-96h0m0 3.3h0m0 15.4h0m0.1 59.6h0m0 5.7h0m0 1.1h0m0 17.5h0m0 8.6h0m0.1-103.4h0m0 2.4h0m0 9.2h0m0 62.4h0m0 9.7h0m0 0.1h0m0.1 3.8h0m0.1 9h0m0 5.6h0m0.1-27.6h0m0 0.8h0m0 26.4h0m0.1-24.8h0m0.1-5.7h0m0 3.8h0m0 5.1h0m0.1 3.9h0m0 1.7h0m0.1-11.6h0m0.1-1.5h0m0.7-3.1h0m0 0.4h0m0.8-58.3h0m0.5 59h0m0.3-65.7h0m0 64.6h0m0.6-64.8h0m0.1 97.5h0m0.1-25.8h0m0 5h0m0.2 15.1h0m0.1-11.7h0m0.1-4.7h0m0.1-3h0m0.4-3h0m0 10h0m0.1-73.1h0m0.1 68.4h0m0.2-4.3h0m0 12.8h0m0.1-15.2h0m0 17.5h0m0.1-83h0m0 98.8h0m0.1-121.3h0m0 86.9h0m0 20.8h0m0.2-93.5h0m0.1 7h0m0.1-17h0m0 16.3h0m0.1-21.2h0m0 18.8h0m0 4.7h0m0.1 0.4h0m0 0.5h0m0 65.8h0m0.1-81.6h0m0 16.1h0m0 1.5h0m0 61.7h0m0 3.3h0m0 2.9h0m0 0.4h0m0 9.1h0m0 0.3h0m0 8.3h0m0 5.1h0m0.1-120.3h0m0 5.6h0m0 12.8h0m0 0.1h0m0 8.2h0m0 66.8h0m0 18.2h0m0.1-114.8h0m0 3.3h0m0 10.9h0m0 16.1h0m0 80.6h0m0 5.4h0m0 10.2h0m0.1-123.6h0m0 88.7h0m0 0.7h0m0 5.6h0m0 8.9h0m0.1-90.7h0m0 0.7h0m0 15.5h0m0 70.9h0m0.1-88.2h0m0 11.3h0m0 86h0m0.1-88h0m0.1 97.8h0m0.1-99.3h0m0 73.5h0m0.1-74.1h0m0 7h0m0 71.8h0m0 3.1h0m0.1-7.3h0m0.1-71.8h0m0 73.4h0m0.2-0.3h0m0 6.8h0m0 9.2h0m0.1-12h0m0 5.8h0m0.2-73.4h0m0 62.1h0m0 10h0m0 5.8h0m0.1-104.3h0m0 84.4h0m0.1-88.4h0m0 7.2h0m0 1.7h0m0 100.5h0m0.1-88.6h0m0 85.9h0m0.1-89.5h0m0 72.9h0m0 13.1h0m0.1-75.6h0m0.1-11.5h0m0 72.7h0m0.1 0.6h0m0 18.6h0m0.1-93.5h0m0.2 76.1h0m0 9.8h0m0 13.1h0m0.1 5.9h0m0.2-27.1h0m0 13.2h0m0.1-13.9h0m0 29.6h0m0.2-21.3h0m0.2-10.6h0m0 5.9h0m0 13.3h0m0.3-11.6h0m0 14.4h0m0 9.3h0m0.2-28.1h0m0.5 18.9h0m0.4-24h0m0.3 2.7h0m0.4-69.3h0m0.1 70.6h0m0.4-67h0m0.2 5.3h0m0 65.5h0m0.1-5.5h0m0 10.4h0m0.1-0.9h0m0 1.4h0m0.1-10.7h0m0 4.4h0m0 2.9h0m0.3 9.7h0m0.1-15.4h0m0.2-2.8h0m0 17.4h0m0.3-17.4h0m0.1 3.3h0m0.2 13.3h0m0.1 3.2h0m0.3-21h0m0 2.5h0m0.2-0.7h0m0.2 3h0m0.1 5.6h0m0 5.7h0m0.2-11.8h0m0 13.6h0m0.1-15.7h0m0 13.8h0m0 11.7h0m0.1-23.1h0m0 14.1h0m0.1-17.8h0m0 15h0m0.1-9.2h0m0 8.3h0m0 3.5h0m0.1-13.5h0m0 7.3h0m0 7.6h0m0.1-9.3h0m0.1 15.3h0m0.1-21.3h0m0.1 12h0m0 0.5h0m0.2 1.4h0m0.1 4.5h0m0 0.8h0m0.1-10.8h0m0 1.6h0m0.1 1.1h0m0.1-0.5h0m0 4.7h0m0.1-17.4h0m0 22.7h0m0.1-22.9h0m0.4 0.9h0m0.1-69.3h0m0 77.8h0m0.1-101.3h0m0.2 102.6h0m0.1-101.1h0m0.1-1.7h0m0 106.5h0m0.1-87.9h0m0 1.9h0m0.1-12.9h0m0.1-3.3h0m0 24.5h0m0 1.6h0m0 0.7h0m0 59.1h0m0.2-88.8h0m0 2.8h0m0 88.1h0m0.1-93.5h0m0 23.2h0m0 9.1h0m0.1-32.9h0m0 14.5h0m0 86.1h0m0 7h0m0.1-102.2h0m0 4.4h0m0 4.9h0m0 6.2h0m0 0.4h0m0 1.9h0m0.1 4.4h0m0.1-12.7h0m0 7.1h0m0 5.2h0m0 4.4h0m0 71.7h0m0.1-89.7h0m0 78.6h0m0.1-64.7h0m0 70.6h0m0.1-80.3h0m0 76.5h0m0.2-82h0m0 20.4h0m0 64.4h0m0.2-94.4h0m0 5.6h0m0 23h0m0 60.4h0m0 14.9h0m0 10.1h0m0.1-85.1h0m0.6-4.2h0m0.1-12.4h0m0 10.9h0m0.5 78.7h0m0 9.2h0m0.1-21h0m0 3.5h0m0.1 29.6h0m0.2-30h0m0 9.5h0m0.1-1.6h0m0.2-79.1h0m0.1 74h0m0.1-5.2h0m0.1-64.5h0m0.2 67.2h0m0 0.2h0m0.2-4h0m0.4 0.7h0m0.1-1.6h0m0.4 5.3h0m0.2 11h0m0.1-74h0m0 68.4h0m0.1 6.3h0m0.2-1.1h0m0.1-86.6h0m0 72.1h0m0 0.6h0m0.3 9.6h0m0 14.6h0m0.4-101.3h0m0.1 76.4h0m0.2 6h0m0.3-2.4h0m0.1 28.8h0m0.1-31.6h0m0.3-74.4h0m0.1-4h0m0.1 1.1h0m0 75.8h0m0 0.3h0m0 3.4h0m0.1 28h0m0.1-103.6h0m0.1 88.8h0m0.2-13h0m0 17.1h0m0.3-20.2h0m0.3 0.4h0m0.2 7.4h0m0.1-6.9h0m0 26.1h0m0.1-25.2h0m0.1 1.5h0m0.1-2.2h0m0 22h0m0.2-2.1h0m0 1.6h0m0 15.3h0m0.1-32h0m0 15.7h0m0.4-86.3h0m0 89.6h0m0.1-7.6h0m0.2-0.1h0m0 1.7h0m0.1-19.2h0m0.1 3.2h0m0 11.4h0m0.1 18.3h0m0.1-29.2h0m0.2-2.8h0m0 2.7h0m0.3-64.3h0m0 71.8h0m0.1-70.7h0m0 81.8h0m0.4-84.9h0m0.2 66.5h0m0.2-64h0m0.4-2.8h0m0 0.5h0m0.1 87h0m0.3-25.4h0m0.1-77.1h0m0 84.7h0m0 4.7h0m0.1 24.4h0m0.3-35.2h0m0 10.8h0m0.6-71.4h0m0.1 59.4h0m0 16.5h0m0.2-7.2h0m0.4-8.5h0m0 6.3h0m0.1 14.4h0m0.7-21.8h0m0.1 1.8h0m0.3 3h0m0.2 2.4h0m0.3-6.6h0m0.1 0.6h0m0.1 9.6h0m0.3 19.1h0m0.1-22.3h0m0.1-1.8h0m0.1 2.3h0m0.2-7h0m0 3.1h0m0.3-2.9h0m0 32.1h0m0.1-21.2h0m0 15.2h0m0.1-23.5h0m0 2.2h0m0.3-2.7h0m0 22.5h0m0.3-25h0m0.2 8.9h0m0 6h0m0.1-13.4h0m0.2 17.9h0m0.1-78.9h0m0.2 60.7h0m0 2.3h0m0 2.3h0m0 31.5h0m0.2-37.5h0m0.1 11.4h0m0 5.5h0m0 3.4h0m0 10h0m0.1-29.3h0m0 14.8h0m0.1-13.2h0m0 6.3h0m0.1-5.8h0m0 25h0m0.1-3.9h0m0.1-17.5h0m0.2 1.5h0m0.1 24.5h0m0.1-93.8h0m0 100.9h0m0.2-33.9h0m0.1-4.7h0m0 36.3h0m0.1-22.4h0m0 5.9h0m0.1 8.6h0m0.1-27.1h0m0.1 10h0m0 1.7h0m0 10.9h0m0.4-8.4h0m0.1 6.5h0m0.1-23.6h0m0 17.6h0m0.3-8.1h0m0 9.9h0m0.2-17.5h0m0 1.1h0m0.1 16.8h0m0.2-17.7h0m0.1-2h0m0.2 4h0m0 7.1h0m0.1 3.2h0m0.4-10.8h0m0 2.3h0m0.3-66h0m0.2-23.7h0m0 11h0m0 5.5h0m0.1 67h0m0.1-67.9h0m0.2 7h0m0.1-10.3h0m0 8.1h0m0.1-16.2h0m0.1 16.5h0m0.1 0.4h0m0 2.4h0m0 63.3h0m0.3-61.2h0m0.5 60.8h0m0.1 16.6h0m0.4-80.1h0m0.1 62.4h0m0.1-61.9h0m0 62.9h0m0 7h0m0 10.4h0m0.2-81.7h0m0 62.6h0m0.1-86.4h0m0 18h0m0 1.5h0m0 72.3h0m0.1-63.5h0m0.1-27.8h0m0 89.3h0m0.1-4.3h0m0 2.5h0m0 11.2h0m0.1-7.4h0m0.1-77.6h0m0 6.2h0m0.1 65.5h0m0 16.6h0m0.1-5.7h0m0.1-74.8h0m0 81.4h0m0.1-11.7h0m0.2-4.5h0m0.1 17.8h0m0.1-84h0m0 67.4h0m0.1-88.1h0m0 11.5h0m0 3.5h0m0 71.2h0m0 9.3h0m0.1-101.8h0m0 2.6h0m0.1 21h0m0 75.3h0m0 11.7h0m0.1-94.4h0m0 86.1h0m0.1-94.3h0m0 0.3h0m0.1-4.1h0m0 89.3h0m0.1-1.1h0m0 3.2h0m0.1-90.3h0m0 14.4h0m0 7.7h0m0 69.9h0m0.1-96.8h0m0 25.5h0m0 1.7h0m0.1-22.2h0m0 1.9h0m0 19.2h0m0 66.3h0m0 8.7h0m0.1-96.1h0m0 2.3h0m0 12h0m0 78.5h0m0.1-98.7h0m0 22.9h0m0.1-22.7h0m0 2.6h0m0 5.4h0m0 6.2h0m0 16.2h0m0 2.7h0m0.1 65.3h0m0.1-91.7h0m0 6.2h0m0 4.1h0m0 4.4h0m0 0.5h0m0 7.2h0m0 64.1h0m0.1-89.5h0m0 2.7h0m0 1.8h0m0 3.7h0m0 87h0m0.1-81.8h0m0 1.1h0m0 1.2h0m0 85.1h0m0 6.2h0m0 0.3h0m0.1-91.3h0m0 81.6h0m0.1-94.7h0m0 10.1h0m0.1-1h0m0.1 16.4h0m0 79.1h0m0.1-107.9h0m0 17.6h0m0 2.2h0m0 6.7h0m0 62.3h0m0 15h0m0.1-101.3h0m0.1 23h0m0 80.2h0m0.1-97.5h0m0 20.7h0m0 62.6h0m0 30.2h0m0.1-109.4h0m0.1 75.9h0m0.1 1.2h0m0 12.3h0m0 0.9h0m0 12h0m0.2-24.8h0m0 0.5h0m0.2 7h0m0.1-6.4h0m0 21.2h0m0.1-16.2h0m0 1h0m0 4.7h0m0 13.8h0m0.3-27.2h0m0 0.1h0m0 3.3h0m0.1 0.9h0m0 2.7h0m0 7.6h0m0.2-13.4h0m0 6.5h0m0.2 10.8h0m0.4 4.8h0m0.1-23h0m0.2 5.5h0m0 2.4h0m0 2.8h0m0.1-5.4h0m0 3.5h0m0 2.3h0m0.2-2.2h0m0 12.1h0m0.1-14.9h0m0 18.9h0m0.1-7.9h0m0 16.1h0m0.1-92.5h0m0 62.7h0m0.1-3h0m0 14.8h0m0 1.1h0m0 6.4h0m0 2.2h0m0 4.3h0m0.1-29.3h0m0 3.8h0m0 17.4h0m0.1-19.4h0m0 21.9h0m0.1-21.5h0m0 0.8h0m0 3.1h0m0 3.6h0m0 9.3h0m0 12.6h0m0.1-29.4h0m0 1.3h0m0 3h0m0 2.9h0m0 4.5h0m0.1-12.9h0m0 6.3h0m0 8.6h0m0 2.5h0m0 1.6h0m0.1-13.1h0m0 2h0m0 4.6h0m0.1-7.3h0m0 1h0m0 3.7h0m0.1-9.7h0m0 5.5h0m0 1.8h0m0.1-7.7h0m0 4.9h0m0 3.7h0m0 1.2h0m0 0.9h0m0 2.4h0m0 5.4h0m0 1.2h0m0.1-16.3h0m0 5.6h0m0.1-8.7h0m0 6h0m0 7.5h0m0 3.6h0m0 2.5h0m0.1-20.1h0m0 18.9h0m0.4-18.6h0m0 0.1h0m0.2-1.1h0m0 9.5h0m0.3-8.5h0m0.2-69.9h0m0.4 69.2h0m0.1 3.4h0m0.2 3.5h0m0.1 3.4h0m0.1-3.3h0m0.1 8.5h0m0.3-3.2h0m0 4.4h0m0.2-12.2h0m0.3-1.1h0m0.1 1.6h0m0 3.6h0m0.1-79.7h0m0 10h0m0 68.6h0m0.1-3.8h0m0.1 3.7h0m0.1-7h0m0 7.1h0m0 6.9h0m0 4.5h0m0.3 15.2h0m0.1-34.4h0m0 1.2h0m0 1.5h0m0 4.2h0m0.1 1.7h0m0 3.7h0m0 3.6h0m0.1-15.4h0m0.2-60h0m0.1-11.7h0m0 76.5h0m0.1-64.4h0m0 90h0m0.2-28.6h0m0.2-1.5h0m0 26.2h0m0.2-100.3h0m0 76.8h0m0.1 1.9h0m0.3-67.7h0m0.3 64.9h0m0 3.8h0m0 2h0m0.1-70.3h0m0.3 63.9h0m0.1-67h0m0.1 93.3h0m0.1-105.7h0m0 84.8h0m0 20.8h0m0.1-120h0m0 0.8h0m0 15.7h0m0 14.1h0m0 65h0m0 2.7h0m0 2h0m0 2.9h0m0 18h0m0.1-115.9h0m0 22h0m0 86.2h0m0.2-112.5h0m0 18.7h0m0 0.4h0m0 77.3h0m0 2.4h0m0 8.7h0m0 2.5h0m0.1-101.5h0m0 91.7h0m0 2.5h0m0.2-77.4h0m0.1-18h0m0.1 6.8h0m0 12.4h0m0 4.4h0m0.1-15h0m0 11.8h0m0 63h0m0.1-66.2h0m0.1-10.6h0m0.1-3h0m0 1.2h0m0 14.5h0m0 2.6h0m0.1-16.4h0m0.6 78.3h0m1.1-58.1h0m0 63.7h0m0.2-2.5h0m0 12.6h0m0.6-16.1h0m0 5h0m0 17h0m0.1-4.4h0m0.1-17h0m0.4 14.8h0m0.1-11.4h0m0.1 20.7h0m0.2-90.2h0m0 5.1h0m0 62.3h0m0.1 12.2h0m0.1-8.4h0m0.2-93.3h0m0 6.3h0m0 83.5h0m0 32h0m0.2-34.2h0m0.1-71h0m0 11.2h0m0 0.5h0m0 60h0m0 6.5h0m0.1-98.9h0m0.1 15.1h0m0 2.3h0m0 4.4h0m0 4.6h0m0 2.1h0m0.1-17.6h0m0.2 12.9h0m0.4-1.1h0m0 69.3h0m0.1-59h0m0 59.9h0m0.3 8.8h0m0.1-8.3h0m0 2.8h0m0.1 1.9h0m0 3.4h0m0.1-2.9h0m0.1 4.9h0m0 0.3h0m0.1 1.7h0m0.1-13.7h0m0 16.4h0m0 11.6h0m0.2-94.4h0m0 0.6h0m0.1 8.8h0m0.1-2.3h0m0.2 69.8h0m0.1-8.1h0m0 1h0m0 2.3h0m0 5.3h0m0.1-81.5h0m0 82h0m0.1-11.1h0m0 3.9h0m0.1 9.3h0m0.1-12h0m0 15.8h0m0 0.4h0m0.1-14.7h0m0.3 13.3h0m0.1 13.6h0m0.1-30.1h0m0 23h0m0.2-19.4h0m0 21.6h0m0.1-6.6h0m0.2-13.8h0m0.1-3h0m0.1-59.9h0m0 60.8h0m0 0.8h0m0.5-75.2h0m0 11.7h0m0 0.1h0m0 90.5h0m0.1-89.4h0m0 63h0m0 25.8h0m0.2-27.9h0m0.4-74.2h0m0.4 85.1h0m0.3-89h0m0.4 17.3h0m0.1 67.3h0m0.2-4h0m0.1-4.6h0m0.4-59.1h0m0.1 59.6h0m0.4-60.4h0m0.4 64.4h0m0 1.8h0m0.7-5.1h0m0 0.6h0m0 1.9h0m0.5-71.1h0m0.2-0.3h0m0.1-10.9h0m0 79.1h0m0.1-86.3h0m0.1 21.6h0m0.2 5.4h0m0.2-8.4h0m0.4-4.9h0m0.1 91h0m0.2-79.3h0m0 68.8h0m0.1-83.8h0m0 3.9h0m0 4.9h0m0 4.9h0m0.1-24.6h0m0 28.5h0m0.1-16.3h0m0.1-2.1h0m0 12.8h0m0 65.9h0m0.1-75.3h0m0 10.3h0m0.1-17.6h0m0 0.4h0m0 0.3h0m0 21.5h0m0.2-11.3h0m0 8.4h0m0.1-20.8h0m0 3.2h0m0 1.1h0m0 6.7h0m0 2.4h0m0 3.3h0m0.1-9.4h0m0 0.2h0m0 10.8h0m0 1.5h0m0.1-29.9h0m0 0.7h0m0 12.9h0m0 12.2h0m0 86.7h0m0.1-104.5h0m0 5.9h0m0 10.2h0m0 1h0m0 8.4h0m0.1-29.6h0m0 4.4h0m0 1.9h0m0 0.2h0m0 1.8h0m0 1.3h0m0 9.9h0m0 73.7h0m0.1-92.2h0m0 9h0m0 15.9h0m0 0.7h0m0 3h0m0 0h0m0.1-27.3h0m0 8.3h0m0 11.5h0m0 68.3h0m0 1.7h0m0.1-75.4h0m0 72.5h0m0 0.7h0m0.1-76.4h0m0 4.7h0m0 7.6h0m0 63.6h0m0.1-83.3h0m0 9.7h0m0.1-16.8h0m0 28.2h0m0.1-27.4h0m0 23.5h0m0 1.7h0m0.2-26.5h0m0 0.4h0m0 29.1h0m0.1-26.8h0m0.1 4.3h0m0 82.2h0m0.5-76.2h0m0.1 18h0m0.1-1.2h0m0.2-5h0m0.1 5.9h0m0.3-2h0m0.2 61.5h0m0 2.6h0m0.8-61.7h0m0.1 60.1h0m0.3 0h0m0.2 17.8h0m0.3-19.1h0m0.2 5.7h0m0.1-4.9h0m0.3-1.5h0m0.3 4.9h0m0.9 2.2h0m0.1 4h0m0.1-74.6h0m0.2 75.7h0m0.1-10.8h0m0 6.3h0m0 0.4h0m0.1-7.9h0m0 3.6h0m0 1.7h0m0 1.8h0m0 3.8h0m0 16h0m0.1-21.7h0m0 9.7h0m0 3.8h0m0.2-17.1h0m0.1 2h0m0 27h0m0.1-25.6h0m0 5h0m0.1 8.8h0m0.1-18.2h0m0 4.5h0m0 2.6h0m0 18.5h0m0.1-23.1h0m0 8.1h0m0 2.9h0m0 8.9h0m0.1-17.4h0m0 1h0m0.1 11.1h0m0.5-75.8h0m0.1 62.3h0m0.1-63.3h0m0.4 59.2h0m0 2.1h0m1.1-0.9h0m0.1 4.5h0m0.3-65.8h0m0.4-21h0m0 7h0m0 0.7h0m0 15.5h0m0.3-34h0m0 2.1h0m0 100.8h0m0.1-102.1h0m0 15.6h0m0.1-0.3h0m0 3.9h0m0 1.7h0m0.1-11.2h0m0 96.9h0m0.1 2.7h0m0.4-2.3h0m0.2-5.8h0m0.6-9.6h0m0 4.5h0m0 1.4h0m0.2-65.5h0m0 60.1h0m0.1-0.5h0m0.9 1.6h0m0.2-60.3h0m0.1-3.6h0m0 97.1h0m0.1-35h0m0 10.3h0m0.2-74.4h0m0 67.7h0m0 0.1h0m0.2-4.4h0m0.1 31.1h0m0.1-19.8h0m0.2-4.7h0m0.1 17.9h0m0 2.2h0m0.1-11.7h0m0.1-73.6h0m0 82.7h0m0.1-1h0m0.1-7.8h0m0.1-0.4h0m0.1-73.3h0m0.4-1.7h0m0.1 68.3h0m0.1-88.2h0m0.4 83.3h0m0.1-3h0m0 0.1h0m0.2 5.7h0m0.1 31h0m0.2-35.6h0m0.1-0.7h0m0 6.7h0m0.1 2.5h0m0.2-7.5h0m0.1 0.3h0m0 2.3h0m0 1.2h0m0.5-6h0m0.1 26.2h0m0.1-23.6h0m0 19.1h0m0.1-21.5h0m0.1 1.7h0m0.1 6.7h0m0 12.1h0m0.2-21h0m0 26.8h0m0.2 0.4h0m0.4-7.1h0m0.1-16.8h0m0.6 7.1h0m0.1-1.7h0m0 13.4h0m0.1-20.7h0m0.1 0.2h0m0 32.7h0m0.1-5.9h0m0.1-20.6h0m0.3-4.7h0m0 7.2h0m0 4.5h0m0.1-3.4h0m0 3.9h0m0 1.4h0m0.1-78.3h0m0.2-16.8h0m0 11.2h0m0.1-4.3h0m0 73.4h0m0 4.5h0m0.1-80.7h0m0.3 74.8h0m0.4 7.5h0m1.2-4.9h0m0.2 22h0m0.1-106.6h0m0.1 94.7h0m0.1-81.1h0m0 69.1h0m0.3-71.4h0m0 14.4h0m0.1-26.8h0m0 8.2h0m0.1 100.3h0m0.1-90.7h0m0.1 65.1h0m0 8.9h0m0 7.4h0m0.3-87.3h0m0 106.5h0m0.1-102.5h0m0 67.4h0m0.1 10.9h0m0 13.8h0m0.1-16.8h0m0.1-69.9h0m0 97.8h0m0.1-31.1h0m0 22h0m0.1-23.9h0m0 0.1h0m0 11.1h0m0.2 5.8h0m0.2-13.3h0m0.1-6.5h0m0 2h0m0.1 18.1h0m0.1-6.8h0m0.2-3.8h0m0.1-6.4h0m0.1-1.3h0m0 3.2h0m0.1 6.4h0m0 8.4h0m0.1-20.2h0m0 19.6h0m0.1-9.4h0m0.2 0.1h0m0 8.2h0m0.1-16.1h0m0.2 17.4h0m0.1-8.6h0m0.2-0.9h0m0 0.1h0m0.1-79.9h0m0 72.5h0m0 4.1h0m0.1-2.9h0m0 0.6h0m0.1-86.3h0m0 83h0m0 5.6h0m0.1-88.2h0m0 11.2h0m0 75.2h0m0.1-97.1h0m0 21.9h0m0 1h0m0 95.9h0m0.1-24.7h0m0 5.8h0m0.1-6h0m0 6.3h0m0.1-85.6h0m0 16.9h0m0 71h0m0 2.8h0m0 3.6h0m0 1.6h0m0.1-87.4h0m0 3.8h0m0 66.4h0m0 3.4h0m0 0.2h0m0 12.4h0m0 6.3h0m0.1-88.9h0m0 66.2h0m0 4.8h0m0.1 6.8h0m0 0.1h0m0.1-2.6h0m0 0.3h0m0 2.5h0m0.1-12.1h0m0 14h0m0.1-14.6h0m0 24h0m0.1-24.5h0m0 30.1h0m0.1-27.7h0m0 7.7h0m0 3.8h0m0.1-9h0m0 7.2h0m0.1-5.5h0m0.2 0.7h0m0 17h0m0.2-21.7h0m0 10.8h0m0 2.7h0m0.1-14.8h0m0 9.9h0m0.3 2h0m0.2-1.3h0m0.1-69.9h0m0 70.3h0m0 3.2h0m0.3-12.2h0m0.2 5h0m0 8.8h0m0 2.2h0m0.1-15.3h0m0 3.4h0m0 3.5h0m0.1-78.1h0m0 68.8h0m0.5-66.3h0m0 3.4h0m0.4 61.4h0m0.1-63.2h0m0 4.4h0m0 61.1h0m0.3-64h0m0.1 81.7h0m0.3-10.8h0m0.1-6.7h0m0 4h0m0 8.8h0m0.2-84.7h0m0 71.3h0m0.3-0.1h0m0.2-74.4h0m0.1 74.7h0m0.2-1.7h0m0.1-72.8h0m0 80.7h0m0.4-6h0m0 1h0m0 3.7h0m0.1-4.9h0m0 0.6h0m0.4-65.1h0m0 72.6h0m0 9.9h0m0.3-81.2h0m0 68h0m0 4h0m0.3-5.7h0m0.5 0.8h0m0.1 4.2h0m0.5 0.4h0m0.2 2.5h0m0.4-12.3h0m0 1.7h0m0 4.3h0m0.1-98.4h0m0 94.6h0m0.4-81.5h0m0 2.5h0m0 79.9h0m0 7.7h0m0.1-11.2h0m0 5.8h0m0.2-92.4h0m0 12.6h0m0.1 9h0m0.2-22.4h0m0 1.8h0m0 7.6h0m0 78h0m0.1-85h0m0 4.6h0m0 5.1h0m0 13.2h0m0.1-26.6h0m0 15h0m0 0.8h0m0.1-14h0m0 2.5h0m0 1.9h0m0.1 17.9h0m0.1-19.5h0m0 18.1h0m0.1 3.3h0m0.1-0.4h0m0 2h0m0 63.7h0m0.1-93.5h0m0 26.9h0m0 4.8h0m0.2-32.9h0m0 17.4h0m0.1 79.1h0m0.1-81.6h0m0 7h0m0 3.8h0m0 4.8h0m0.1-28.5h0m0 93.5h0m0 7.9h0m0 2.9h0m0 22.2h0m0.1-121.8h0m0 6.1h0m0 17.5h0m0 62h0m0.1-88.4h0m0 2.9h0m0 0.2h0m0 2h0m0 2.1h0m0 10.6h0m0 0.6h0m0 6.3h0m0 65.2h0m0.1-83.2h0m0 2.7h0m0 15.2h0m0 3.8h0m0 64.2h0m0 9.4h0m0 6h0m0 10.5h0m0.1-112.7h0m0 16.8h0m0.1 66.2h0m0 7.1h0m0 8.3h0m0.1-4.8h0m0.1-91h0m0.1-3.4h0m0 4.4h0m0 20.7h0m0 57.8h0m0.1 7h0m0.1-98h0m0 13.9h0m0.2 14.3h0m0 70.3h0m0.1-85.8h0m0 80.7h0m0.1-0.2h0m0.1-65h0m0.3 68.7h0m0.1-73h0m0 67.8h0m0.1-61.1h0m0.3 62.2h0m0.5-1.5h0m0.1 1.6h0m0.1 13.3h0m0.1 6.2h0m0.6-20.8h0m0 4.7h0m0.1-4.5h0m0.1 18.3h0m0.1-19.4h0m0 9.9h0m0 4.4h0m0.1-13.6h0m0 2.7h0m0 2.7h0m0.1 18.8h0m0.1-91h0m0.1-0.8h0m0 0.6h0m0.1 70.2h0m0 4.2h0m0 2.1h0m0.2-69h0m0 60.6h0m0.3-64.9h0m0.1 1.3h0m0.1-15.8h0m0 12h0m0.1 4.4h0m0 2.9h0m0.1 71.8h0m0 1.3h0m0 14.7h0m0.1-95h0m0.9 65.6h0m0.3 0.6h0m0.4-0.6h0m0 14h0m0.1-77.7h0m0 70.7h0m0.4-67.3h0m0.3 0.3h0m0.2 61.8h0m0.2 1.1h0m0.1-0.2h0m0 8.9h0m0.3-2.5h0m0 3.8h0m0.1 23.9h0m0.1-22.6h0m0.1-100.4h0m0 93.5h0m0 13.7h0m0.1-13.2h0m0.1-7.2h0m0 3.5h0m0.4-66h0m0 3.5h0m0 71h0m0.2-70.3h0m0.2-24h0m0.2 86.6h0m0.1-63.6h0m0.1-15.1h0m0 7h0m0 0.4h0m0 3.3h0m0.4 68.5h0m0 5.4h0m0.1-9.1h0m0 27h0m0.2-114.1h0m0 22.6h0m0 2h0m0 63.4h0m0 10h0m0.1-85.5h0m0.2 0.7h0m0 3.5h0m0 70.6h0m0.1-71.4h0m0 72.7h0m0 0.3h0m0 1.2h0m0.1-79.6h0m0 2.6h0m0 9.3h0m0 63h0m0.1-91.6h0m0.1 23.1h0m0 7.9h0m0 61.4h0m0.2-68.7h0m0.2 68.9h0m0 3.5h0m0 0.3h0m0.1-1.4h0m0.1-2.1h0m0 1.7h0m0 4.1h0m0.1-2.9h0m0.1-3.6h0m0.7 0h0m0.8 7.3h0m0.1-68.6h0m0 74.7h0m0.2-13.8h0m0.1-64.4h0m1.7 64.3h0m0 2.3h0m0.4-68.8h0m0.1 4.2h0m0 64.4h0m0.3-92.8h0m0.1 11.1h0m0 84.2h0m0.1-80.7h0m0 14.3h0m0 62.5h0m0.1-92.4h0m0 6.3h0m0 1.7h0m0 6.8h0m0.1 6h0m0 0.5h0m0.1-1.2h0m0 78.1h0m0 5.3h0m0.1-102.1h0m0 106h0m0.2-78.1h0m0 68.4h0m0.1-86.8h0m0.2 80.7h0m0 10.6h0m0 8.1h0m0.2-88h0m0.1 92h0m0.2-21h0m0.1 2.9h0m0 14.7h0m0.1-17.7h0m0 5h0m0 5.4h0m0 3.8h0m0 5.2h0m0.1-11.5h0m0 14.1h0m0.1-83.3h0m0.1 64.7h0m0 18.2h0m0.1-19h0m0 11.6h0m0.2-10.3h0m0 1.4h0m0 3.7h0m0.1-5.4h0m0 0.5h0m0.1 2.1h0m0.1-69.8h0m0.2 77.8h0m0 0.9h0m0.2-10.9h0m0.2-4.2h0m0.1-59.7h0m0 64.6h0m0.1-67.2h0m0 61.5h0m0.1 0h0m0 2.9h0m0.3-1.2h0m0.2-61.8h0m0 70.9h0m0.1-10h0m0.1 8.2h0m0.2-73.4h0m0 68.1h0m0 2.2h0m0.1 3.3h0m0.2-90.2h0m0.2 82.3h0m0.2-60h0m0.1 57.9h0m0.1 8.3h0m0.3-5.1h0m0.3-1h0m0 15.5h0m0.1-78.4h0m0 69h0m0.3-4.2h0m0.1-69.9h0m0 71h0m0.1 7.5h0m0.5-10.2h0m0 1.3h0m0.2 11.7h0m0.1-15.3h0m0.2 0.8h0m0 36.2h0m0.2-101.9h0m0 0.8h0m0 69.2h0m0 8.4h0m0.1-91.4h0m0 18.4h0m0.1 1.6h0m0 1.3h0m0 59.6h0m0 4.3h0m0.1-6h0m0 12.2h0m0.1-83.1h0m0 98.9h0m0.1-106.2h0m0 82.6h0m0 1.7h0m0.1-62.3h0m0.1 58h0m0.5-1.3h0m0.1 3.2h0m0 1.5h0m0.2-72.9h0m0.4 8h0m0.2-7.4h0m0.1-19.4h0m0.1 87h0m0.1-2.1h0m0.3-86.3h0m0 11h0m0.2 81.6h0m0.1-85.2h0m0.1 79.9h0m0.1-91.4h0m0.1 32.5h0m0 0h0m0.1-4.9h0m0 65h0m0 0.5h0m0.1-92.5h0m0 4.3h0m0 21.8h0m0.1-12.3h0m0 8.7h0m0 1.3h0m0 4.5h0m0.1-21.9h0m0 0.5h0m0 0.6h0m0.1 6.6h0m0 7.8h0m0 0.2h0m0 68.8h0m0 4.9h0m0.1-72.6h0m0.1-6.4h0m0 4.9h0m0 6.6h0m0 0.4h0m0.1-21.6h0m0 12.1h0m0 1.6h0m0 1.2h0m0 89.2h0m0.1-81.1h0m0.1-31.8h0m0 30.6h0m0 87.2h0m0.1-108.5h0m0.1-8h0m0 91.9h0m0.1-93h0m0 2.7h0m0 4.1h0m0 15h0m0 79.9h0m0 12.8h0m0.1-106.7h0m0 3.8h0m0 5h0m0 5h0m0 1.8h0m0 2.7h0m0 0.9h0m0.1 2.1h0m0 92.3h0m0.1-23.4h0m0.1-93.7h0m0 3.9h0m0 4.8h0m0 11.7h0m0.1 6.1h0m0.1-3h0m0 0.8h0m0.2-21h0m0 1.9h0m0 14.7h0m0 6.1h0m0 90.5h0m0.1-109.8h0m0 84h0m0 16.4h0m0.1-110.3h0m0 5.3h0m0 3.9h0m0 5.3h0m0 14.2h0m0.1-14.7h0m0 13.8h0m0 3h0m0.1-30.7h0m0 90.4h0m0 1.8h0m0.1-83.1h0m0 84.1h0m0 2.2h0m0.1-84.2h0m0 1.6h0m0 7.1h0m0.1-0.7h0m0.2-8.8h0m0.2 86.3h0m0.1 9.9h0m0.1-103.2h0m0 95.2h0m0.4-5.6h0m0 0.3h0m0.1-85.5h0m0 88.9h0m0.1-6.1h0m0.2 10.1h0m0.1-10h0m0 2.1h0m0.6-2.5h0m0 2.7h0m0.2 0h0m0.1-2.7h0m0 9.8h0m0.2-68.7h0m0.4 59.5h0m0.3 5.6h0m0.3 2.7h0m0.2-7.9h0m0 11.5h0m0 7.2h0m0.2-78.9h0m0.1 62.6h0m0.2-2.8h0m0.3 5.3h0m0.3 9.6h0m0.2-15.2h0m0 12.3h0m0.3-11.6h0m0.1 1.2h0m0.1 0.6h0m0.1 6.1h0m0.1-70.6h0m0 66.5h0m0.1-3.1h0m0.1 10.2h0m0.1-10.8h0m0 6.4h0m0 14.6h0m0.1-9.6h0m0.1-11.9h0m0 2.2h0m0 14.1h0m0 3.4h0m0.1 4.3h0m0.1-18.9h0m0.1-2.4h0m0 5h0m0.1-7.3h0m0 4.8h0m0 15.9h0m0 1h0m0 1.5h0m0.1-19.4h0m0 2.7h0m0.1-6.7h0m0 4.9h0m0.1 1h0m0 0.2h0m0 15.4h0m0.1-19.7h0m0.1-0.2h0m0 8h0m0 0.4h0m0 26.5h0m0.1-28.6h0m0 15h0m0 0.6h0m0.1-13h0m0 5.2h0m0.1-5.3h0m0 12.5h0m0.1-23.1h0m0.2 6.7h0m0 7h0m0.1-13.2h0m0 5.8h0m0.1 2.5h0m0.2-73.9h0m0 70.5h0m0.3 2h0m0 19.1h0m0.1-2.5h0m0.1-86.4h0m0 67.5h0m0.3-93h0m0 7h0m0 80.9h0m0 0.1h0m0.1-61.5h0m0 62.3h0m0 1.6h0m0.1 8.5h0m0.1-80.5h0m0 82.1h0m0.1-96.7h0m0 88.8h0m0 19.3h0m0 0.8h0m0.1-89.8h0m0.1-6h0m0.1 77h0m0 0h0m0.2 4.8h0m0.1-9h0m0 7.3h0m0 4.1h0m0.1-86.4h0m0 11.7h0m0 61h0m0 13.9h0m0 12h0m0 9.7h0m0.2-34.2h0m0 0.6h0m0 23.3h0m0.1-1.4h0m0.1-22.4h0m0 19.1h0m0.1-16.2h0m0 4.5h0m0.2-79.4h0m0 75.2h0m0.1-3.4h0m0 0.9h0m0 8.2h0m0.1-8.6h0m0.1-0.8h0m0 2.3h0m0 0.9h0m0 10.6h0m0 11.6h0m0.1-15.5h0m0.1 4.6h0m0.1-10h0m0.2 3.4h0m0.3-71.9h0m0.2 96.2h0m0.2-22h0m0.2-11.4h0m0 30.6h0m0.2-29.6h0m0.3 5.3h0m0 3.7h0m0.1-79.3h0m0.3 70h0m0 7.4h0m0.2-66.2h0m0.3 65.9h0m0.2 14.4h0m0.1-19.7h0m0.1 0.5h0m0.1-69.2h0m0.1 67h0m0.3 26h0m0.1-26.9h0m0.1 1.4h0m0.1-72.6h0m0.4 80.8h0m0.1-8.4h0m0 16.7h0m0.2-17.1h0m0.2 3h0m0.3-3.1h0m0.3 0.9h0m0.2 7.1h0m0 18.2h0m0.1-25.5h0m0.4 16.8h0m0 0.4h0m0.3-11.6h0m0.1-5.4h0m0.1 0.4h0m0.1 26.3h0m0.3-28h0m0.2 19h0m0.1 1.2h0m0.1-90.6h0m0.2 85h0m0.1-13.1h0m0 1.9h0m0 5.3h0m0.2-2.4h0m0.1 18.2h0m0.2-23.2h0m0.1-59.5h0m0.1 58.9h0m0.2 18.1h0m0.1-88.4h0m0 1.5h0m0 72.8h0m0 3h0m0.1-5.6h0m0 25.4h0m0.1-117.6h0m0 17.5h0m0 12.1h0m0 60.8h0m0 9.2h0m0 4.9h0m0.1-102.7h0m0 88.6h0m0 25.9h0m0.1-88.3h0m0.1-3.7h0m0 73.1h0m0.1-82.2h0m0 15.6h0m0.1-8.3h0m0 69.3h0m0.1-1.5h0m0 6.5h0m0.1-2.9h0m0 12.5h0m0.1-13.2h0m0 17.3h0m0.2-20.3h0m0 4.1h0m0 2.2h0m0.1 8.5h0m0 1.5h0m0 7h0m0.1-82.8h0m0 70.5h0m0 5.1h0m0.2 4.9h0m0.1-18.7h0m0 16h0m0.1-18.6h0m0 1.2h0m0.1 15.8h0m0.1-16.8h0m0.3 1.2h0m0.3-61.8h0m0.7 2.3h0m0.1-4.2h0m0.6 72.3h0m0.2-70.9h0m0.4-5.4h0m0.1 0h0m0.2 76.3h0m0 9.7h0m0.1 16.2h0m0.2-34.6h0m0.1 9.3h0m0.1 3.6h0m0.1-80.2h0m0.1 73.9h0m0.1-77.5h0m0.1 76h0m0.1 9.8h0m0 0.1h0m0 8.3h0m0.2-97.3h0m0.1 11.2h0m0.1-8.3h0m0 74.2h0m0 6.9h0m0 25.2h0m0.1-112.9h0m0.1-11.5h0m0 13.7h0m0 98.2h0m0.1-8.2h0m0.2-99.4h0m0 2.1h0m0 0.8h0m0 102.5h0m0.1-110.7h0m0 90.4h0m0.1-93.1h0m0 18.6h0m0 80.9h0m0 22.4h0m0.1-115.8h0m0 2.1h0m0.1-3.1h0m0 7.5h0m0 11.9h0m0.1-3.1h0m0.1-18.9h0m0 19.9h0m0 9.8h0m0 59.5h0m0 1h0m0.1-78.9h0m0 4.7h0m0 75.5h0m0 19.1h0m0.1-102.6h0m0 0.7h0m0 6h0m0 12.6h0m0 1.3h0m0 0.2h0m0.1 72.1h0m0.1-97.2h0m0 11.5h0m0 8.5h0m0 80.8h0m0.1-77.8h0m0 78.2h0m0.1-97.3h0m0 16.5h0m0 67.5h0m0 30.6h0m0.1-100.6h0m0 76.1h0m0.1-0.5h0m0.1-82.1h0m0 90.8h0m0 6.7h0m0.2-83.6h0m0 71h0m0.1-94.9h0m0 85.5h0m0 2.8h0m0.1-1.5h0m0 2.6h0m0 20.9h0m0.1-22.9h0m0 14.8h0m0.1-6.5h0m0 6.6h0m0.1-15.8h0m0.2 19h0m0.1-21.6h0m0 22.4h0m0.1-11.3h0m0.1-71.7h0m0 61.7h0m0 3.1h0m0 1.4h0m0 2.7h0m0.2-5.8h0m0 4.3h0m0 19.7h0m0.1-17.4h0m0.3-7.6h0m0.6-65.9h0m0.2 65.7h0m0.2-0.6h0m0.2 1.4h0m0.2 9.7h0m0.9-6.1h0m0.1-2h0m0.2-73.7h0m0.1 71.3h0m0.2 1.6h0m0.2 2.2h0m0.1-3.4h0m0.1-60h0m0 76h0m0.2-15.2h0m0.3 2.9h0m0.1 0.6h0m0 21.3h0m0.1-8.1h0m0.1-6.7h0m0 0.1h0m0.1-4.7h0m0 2h0m0 6.1h0m0.3-13.6h0m0.2 2.7h0m0 4.2h0m0 11.2h0m0.1-18.2h0m0 11.7h0m0 12.6h0m0.2-87.8h0m0 86.3h0m0.1-14.6h0m0.1-2.1h0m0.1 8.7h0m0.1-15h0m0 0.8h0m0.2-2.4h0m0 27h0m0.1-20.3h0m0 22.6h0m0.1-90.1h0m0 1.1h0m0 59.4h0m0 7.8h0m0 3.3h0m0.1-90.6h0m0 13.4h0m0 66.6h0m0 25.4h0m0.1-99.9h0m0 4.4h0m0 69.4h0m0 5.3h0m0 5.3h0m0 2.1h0m0.1-79h0m0 73.3h0m0.1-74.9h0m0 68h0m0 17.5h0m0.1-99h0m0 16.2h0m0 5.6h0m0 81.5h0m0.2-8h0m0.1-101.6h0m0.1-0.1h0m0 2.6h0m0 4.7h0m0 91.1h0m0.1-97.3h0m0 87.2h0m0 1.9h0m0 10.9h0m0.1-87.5h0m0.1-16.8h0m0 13.3h0m0 11.1h0m0 67.2h0m0 8.7h0m0 1.5h0m0.1-83h0m0 12h0m0.1-22.4h0m0 0.9h0m0 11.2h0m0 2.9h0m0 70.4h0m0.1-71.5h0m0 1.3h0m0 2.2h0m0.1-8.1h0m0 7.6h0m0 6h0m0 62.7h0m0 3.1h0m0 5.1h0m0.1-84.9h0m0 4.1h0m0 9.6h0m0.1-31.5h0m0 0.2h0m0 4.1h0m0 14.7h0m0 4.3h0m0 10.8h0m0 81.1h0m0.1-104.6h0m0 1.4h0m0 0.4h0m0 0.1h0m0 2.7h0m0 0.2h0m0 20.1h0m0 1.2h0m0 60h0m0.1-80.9h0m0 14.1h0m0.1-16.5h0m0 3.2h0m0 13.3h0m0.1-28.9h0m0 2.8h0m0 5h0m0 5.5h0m0 14.5h0m0.1 82h0m0.1-106.4h0m0 5.2h0m0 19.7h0m0.1-23.4h0m0 15.2h0m0 8.9h0m0 70.5h0m0.1-97.2h0m0 15.6h0m0 4.6h0m0.1 4.4h0m0 75.7h0m0.1-89.2h0m0 15.3h0m0 1.9h0m0.1-19.5h0m0 16.4h0m0 81.2h0m0 10.1h0m0.2-22.9h0m0.1-73h0m0 4.1h0m0.1 77.1h0m0.1-82.7h0m0 1.1h0m0 72.2h0m0.1 29.3h0m0.1-28.1h0m0.2-82.5h0m0.5 98.1h0m0 4.7h0m0.1-92.1h0m0.5 67.6h0m0 22.7h0m0.1-20.9h0m0 27.8h0m0.5-6h0m0 6.1h0m0.3-27.6h0m0.4-61.2h0m0 60.8h0m0.1-2.6h0m0.2 1.9h0m0.5-0.3h0m0 7.6h0m0.1 3.6h0m0.1-12.8h0m0.1 2.7h0m0.2-0.9h0m0.1-1.1h0m0.1 0.9h0m0 2.5h0m0.2 3.2h0m0.2-70.9h0m0.2 72.5h0m0 10.5h0m0.2-15h0m0.1-83.5h0m0.1 82h0m0 2.1h0m0 2.8h0m0 14.6h0m0.1-95.5h0m0 13.1h0m0.1-22.9h0m0 13.3h0m0 3.7h0m0.2 66.5h0m0 2.2h0m0 3.7h0m0.1-76.1h0m0.1-9.2h0m0 10.6h0m0 4.7h0m0.1 64.5h0m0.1-69.3h0m0 68.2h0m0.1-74.1h0m0 73.9h0m0 3.4h0m0.1-64.7h0m0.2 3.6h0m0 68.7h0m0.4-68.8h0m0.2-0.4h0m0.1-2.2h0m0.1-1.4h0m0 84.7h0m0.2-12.2h0m0.4-70.1h0m0.1 68.8h0m0.1 13.8h0m0.2-4.8h0m0 6h0m0.1-4.9h0m0 11.2h0m0.1-16.3h0m0.1-9.3h0m0 5.9h0m0.2-69.4h0m0.1-1.7h0m0 93.8h0m0.2-107.7h0m0 100.8h0m0.1-8h0m0.2-12.5h0m0 0.6h0m0 19h0m0.1-87.3h0m0 68.1h0m0 5h0m0.1 0.1h0m0.1 17h0m0.1-26.4h0m0.2 1h0m0 0.5h0m0 3.3h0m0.2-5.3h0m0.1-1.5h0m0 0.5h0m0 29.4h0m0.1-23.3h0m0 15.5h0m0.1-17.3h0m0.1 22h0m0.1-25.6h0m0.2 4.6h0m0.4-64.7h0m0.1 72.2h0m0.4-72.5h0m0 59.4h0m0.2-66.9h0m0 68h0m0.1-1.2h0m0 0.6h0m0.1-0.3h0m0.1 2.9h0m0.3 18.3h0m0.2-10.3h0m0.2 8.6h0m0.4-14.3h0m0.1-1.2h0m0 3.9h0m0.2-8.6h0m0 14.2h0m0.2-10.3h0m0.1-2.9h0m0 1.6h0m0.3-1.9h0m0.1-62.7h0m0.7 62.3h0m0.3-69.5h0m0 14.4h0m0.1 57.7h0m0.3-61.3h0m0 61.6h0m0.1-67.1h0m0.1-10.3h0m0.1 1.3h0m0 77.7h0m0.2-66.2h0m0.1 61.8h0m0 1.5h0m0.2 9.2h0m0.5-1.7h0m0.1-0.2h0m0.5-82.3h0m0 14.3h0m0.2 59.4h0m0.2 2h0m0.4 6.8h0m0.5-70.9h0m0.2 64.8h0m0.7-61.5h0m0.4 61.3h0m0.6-1.6h0m0.6-0.7h0m0.1 1.5h0m0.2 0.7h0m0 13.4h0m0.2 10.3h0m0.1-26.6h0m0.1-67.7h0m0 84.5h0m0.1-14.5h0m0.9 12.1h0m0.3-8.2h0m0.1-65.3h0m0 76.7h0m0.1-6.7h0m0 5.7h0m0 8.8h0m0 8.2h0m0.2-102.3h0m0.1 80.5h0m0.1-2.7h0m0.1-66.8h0m0 86.6h0m0 5.9h0m0.1-6.3h0m0.2-87h0m0 66.9h0m0.1 20.3h0m0.1-98.1h0m0 76.3h0m0.2 20.7h0m0.1-113.1h0m0 96h0m0 7.7h0m0 11.2h0m0.1-106.2h0m0 107.9h0m0.1-119.9h0m0 89h0m0.2 5.2h0m0 11.8h0m0.2-106.7h0m0 9.1h0m0 7.9h0m0 13.9h0m0.2-16.7h0m0.1 82.3h0m0.1-95.6h0m0 109.2h0m0.1-98.5h0m0 86.2h0m0.1-95.4h0m0 88.6h0m0.1-72.6h0m0 71.2h0m0.2 0.2h0m0.1-72.4h0m0 9.1h0m0.1-18h0m0 4.6h0m0 0.1h0m0 2h0m0 0.9h0m0 1h0m0 10.6h0m0 65.6h0m0.1-94.8h0m0 19.3h0m0 1.8h0m0 3.3h0m0 66.5h0m0.1-90.8h0m0 2.4h0m0 9.4h0m0 2.8h0m0 3.5h0m0 74.8h0m0 5.3h0m0.1-99h0m0 3.9h0m0 17.9h0m0 5.6h0m0.1-9.5h0m0 16h0m0.1-32.7h0m0 1.7h0m0 2.1h0m0 0.1h0m0 12.2h0m0 11.2h0m0.1-20.2h0m0.1 2h0m0 2.5h0m0 17.3h0m0.1-9.8h0m0 4.9h0m0 0.3h0m0 6.4h0m0.1-30.2h0m0 26h0m0 1.8h0m0 64.3h0m0.1-92h0m0 14.5h0m0.1 1h0m0 7h0m0.1-22.9h0m0 6.2h0m0 4.6h0m0 14.7h0m0.1 4.6h0m0 66.3h0m0.1-90.8h0m0 7.4h0m0 0.5h0m0.1-12.8h0m0 7.5h0m0 4h0m0 9.4h0m0.1 3h0m0 66.1h0m0 1.2h0m0.1 9h0m0.1-8.4h0m0 25.7h0m0.1-117.4h0m0 110.7h0m0.3-12.2h0m0.1-3h0m0.1 3.1h0m0.3 9h0m0.1-3h0m0.1-14.5h0m0.1 0.6h0m0.3 6.7h0m0.6-2.6h0m0.4 1.7h0m0 14.7h0m0.1-18.7h0m0 1.9h0m0.1 0.8h0m0.1-2h0m0 5.5h0m0.4-73.8h0m0 69.7h0m0.1-66.5h0m0.1 65.7h0m0.1-69.8h0m0.2 67h0m0.1-1.4h0m0 0.3h0m0 22.2h0m0.3-11.3h0m0.1-82.2h0m0.1-3.7h0m0 11.4h0m0 65.3h0m0 1.2h0m0 2.2h0m0.1-2.6h0m0 13h0m0 2.1h0m0.3 11.5h0m0.1-94.5h0m0.2 67.8h0m0 7.5h0m0.1-9.5h0m0 4.7h0m0 2.1h0m0.1-7.3h0m0 1.9h0m0 5.9h0m0 6.2h0m0.1-7.6h0m0.1-6h0m0 12.9h0m0 16.5h0m0.1-22.5h0m0 1.1h0m0 0.6h0m0.1-2.7h0m0 7.6h0m0 17.7h0m0.1-19.9h0m0 17.2h0m0.1-24.6h0m0 0h0m0 7h0m0.1 17.4h0m0.2-26.4h0m0 6.8h0m0.1-68.4h0m0 74.4h0m0.2-3.3h0m0.2-9.5h0m0 21.7h0m0.1-86.2h0m0 1.2h0m0 0.3h0m0 63.9h0m0 6.6h0m0.1 14.3h0m0.1-15.7h0m0 1.4h0m0.1-7.7h0m0.1 14.1h0m0.1 0.8h0m0.2-76.8h0m0 69.6h0m0.1-75.3h0m0 65.8h0m0 1.1h0m0 20.6h0m0.2-84.6h0m0.2 62.2h0m0.2 4.2h0m0 11.6h0m0.3-13.9h0m0.2-66.9h0m0.1-6.8h0m0 84h0m0.3-11.9h0m0.2 16.8h0m0.5-75.4h0m0.3-1.4h0m0.1-6.6h0m0.1-7.4h0m0.2 78h0m0.3-94.3h0m0.2 10.6h0m0.1 79.6h0m0 16h0m0 11.6h0m0.2-27.1h0m0.1 10.4h0m0.1 15.2h0m0.2-101.1h0m0 75.6h0m0 12.6h0m0.1-73.1h0m0 79.6h0m0.1-8.2h0m0.1-101h0m0 0.2h0m0 3.3h0m0 11.6h0m0.1-17.4h0m0.1 12.2h0m0.1 12.2h0m0 2.2h0m0.1-9.4h0m0 12.6h0m0.1-19.5h0m0.2 19.2h0m0.5 62.6h0m0.1-60.5h0m0.5 61.8h0m0.3-0.8h0m0.5-71.8h0m0 15.1h0m0.4 57.2h0m0.1-1.4h0m0.2-64.5h0m0.2 66.1h0m0.3 4.6h0m0.2-82.1h0m0.1-14h0m0 0.9h0m0.1 91.7h0m0.1-94.4h0m0 6.9h0m0 9.8h0m0.2-13h0m0 3.4h0m0 4.1h0m0 17.2h0m0.3 0.4h0m0.1-11.2h0m0.6 75.7h0m0.2-1.7h0m0.5-73.6h0m0 3.3h0m0.2-12.8h0m0.1 20.3h0m0 72.5h0m0.4-71.6h0m0 63.6h0m0.3 0.9h0m0.2-64.5h0m0 62.8h0m0 9.2h0m0.1-85.9h0m0 4.9h0m0 4h0m0 79.3h0m0.1-9.6h0m0.1-64.6h0m0 65.4h0m0.1-72.6h0m0.1 70.3h0m0 2.6h0m0.1-2.9h0m0 4.8h0m0.1 2.7h0m0.2-73.3h0m0 2.3h0m0 4.1h0m0.1-27.3h0m0.2 11.5h0m0 75.8h0m0.2-1.4h0m0.2 5.9h0m0 4.9h0m0.1-72h0m0 70.3h0m0.1-0.9h0m0.1-6.9h0m0 1.2h0m0 5h0m0.1 4.9h0m0.2-11.3h0m0 11.8h0m0.1-73.2h0m0 61.9h0m0 1.5h0m0 3.1h0m0.1 5.7h0m0 2.1h0m0.1-91.6h0m0 84.4h0m0 13.2h0m0.1-81.9h0m0 69.7h0m0 2.8h0m0.4-94.3h0m0 16h0m0.2-7.7h0m0 76.2h0m0.2 0.6h0m0.1-1h0m0.1-60.7h0m1.6 1.6h0m0.4-4.3h0m0.3 74.1h0m0.1-11.4h0m0.2 1.8h0m0 0.2h0m0.1-74.5h0m0 81.6h0m0.1-85.7h0m0 11.2h0m0.2-15.9h0m0 8.8h0m0 74.4h0m0 6h0m0 2.8h0m0.2-80.4h0m0 74.2h0m0 1.1h0m0 23.8h0m0.2-104.3h0m0 4.1h0m0 75.3h0m0.1-0.5h0m0.1-76.2h0m0 10.5h0m0.1-1.6h0m0.1-17.7h0m0 2.8h0m0 15.1h0m0.1-19.6h0m0 10.4h0m0.1-12.6h0m0 93.8h0m0.1-73.6h0m0 65.6h0m0.1-88.8h0m0 27.1h0m0 72.1h0m0 15.2h0m0.1-115.2h0m0 3.4h0m0 0.1h0m0 4.3h0m0 3.5h0m0 8.4h0m0 0.9h0m0 70h0m0 6.7h0m0.1-96.6h0m0 12.1h0m0 2.6h0m0.2-16.7h0m0 17h0m0 7.5h0m0 77.4h0m0.1-99.2h0m0 18.3h0m0 2.6h0m0 2.9h0m0 88.5h0m0.1-100.5h0m0 4.6h0m0 11.2h0m0 64.2h0m0.1-0.4h0m0.1-93h0m0 2.8h0m0 2.6h0m0 2.2h0m0 2.3h0m0 0.8h0m0 13.9h0m0 66.2h0m0.1-91.9h0m0 5.8h0m0 22.1h0m0 75.1h0m0.1-104.5h0m0.1 15.2h0m0 13.1h0m0.1-8.7h0m0 0.9h0m0 6.8h0m0 0.3h0m0 65.9h0m0 13.1h0m0.1-104.3h0m0.1 3.7h0m0 3.6h0m0 3.3h0m0 11.1h0m0 1h0m0 1.5h0m0 4.1h0m0 0.4h0m0 70.6h0m0.1-74.2h0m0 3.4h0m0.1-30h0m0 6.6h0m0 0.1h0m0 23h0m0.1-16.4h0m0.1 4.8h0m0 5.3h0m0 4.7h0m0 2.4h0m0 1.6h0m0 81.9h0m0.1-98.4h0m0 16.9h0m0.1 64h0m0 17.9h0m0.1-99.8h0m0 12.3h0m0 70h0m0 0.8h0m0 8.9h0m0.1-87.7h0m0 5.1h0m0 6.8h0m0 66.9h0m0.1-64.6h0m0.1-12.1h0m0.1 8.5h0m0 2.6h0m0.1 58.8h0m0 5.4h0m0 13.2h0m0.1-96.9h0m0 83h0m0.2 5.5h0m0.1-80.2h0m0 11.9h0m0.1-27.3h0m0 1.1h0m0 21h0m0.1 4h0m0.3 61.3h0m0.1-1.8h0m0.1 1.1h0m0.1-71.3h0m0 8.8h0m0.1 2h0m0.1-26.9h0m0 24.6h0m0 3h0m0.1-1h0m0.1-19.4h0m0 15.5h0m0 5.7h0m0.1-7.1h0m0 6.3h0m0 58.4h0m0.1-74.6h0m0 11.7h0m0.2-9.8h0m0.4 6.1h0m0 5.5h0m0.1 63.7h0m0.1-60.7h0m0.2 59.8h0m0.1-73h0m0 5.8h0m0.7 4.1h0m0 2.7h0m0.8-10.6h0m0.1-8.3h0m0.1 16.5h0m0.3-5.9h0m0.1-12.9h0m0.3-1.4h0m0.3 82.9h0m0.2 6.3h0m0.2-7.4h0m0.1-60.5h0m0.3-17.6h0m0.1 16h0m0 62.6h0m0 24.1h0m0.1 10.5h0m0.1-33h0m0 0.7h0m0.1 15h0m0.1-92h0m0 6.6h0m0 68.2h0m0.1 2.4h0m0 7.5h0m0 9.9h0m0 10h0m0.1-93.6h0m0 73.1h0m0.1-73.2h0m0.1-12.5h0m0 83.7h0m0 3.7h0m0 1.1h0m0.1-100.8h0m0.2 16.7h0m0 80.2h0m0 15.2h0m0.1-87.6h0m0 2.8h0m0 79.6h0m0.3-18.3h0m0 18.8h0m0.1-14.6h0m0.1-80.6h0m0 75.5h0m0.1-80.9h0m0.2 9.7h0m0.1-5.9h0m0 17.8h0m0.1-22.1h0m0.1 85.3h0m0.2-83.2h0m0 0h0m0 79.2h0m0 9.6h0m0.2-85.8h0m0 79.7h0m0.1-70.8h0m0.1-14.5h0m0 90h0m0.1-91.4h0m0 84.3h0m0.1-62h0m0 63.2h0m0 12.7h0m0.1-90.8h0m0 90.2h0m0 0.4h0m0.2-88.6h0m0 10.5h0m0.1-19.4h0m0 5.2h0m0 13.7h0m0 0.9h0m0 4.2h0m0 62.8h0m0 6.5h0m0.1-78.6h0m0 9.4h0m0 62.2h0m0 18.3h0m0.1-110.7h0m0 15.6h0m0 10.3h0m0 98.4h0m0.1-116.7h0m0 15.5h0m0 1.9h0m0 1h0m0 87.1h0m0.1-112.3h0m0 0.8h0m0 14h0m0.1-18.4h0m0 16.2h0m0 4.7h0m0 78.2h0m0.2-92.6h0m0 11.7h0m0 1.4h0m0 2.4h0m0 8.6h0m0 61.9h0m0 2.9h0m0.1-92.4h0m0 7.6h0m0 2.9h0m0 0.8h0m0 85.7h0m0 17.9h0m0.1-114.1h0m0 12.8h0m0 2.7h0m0 4h0m0 3.5h0m0 3.5h0m0 85.3h0m0 5.3h0m0.1-115.8h0m0 5.3h0m0 8.9h0m0 7.6h0m0 91.8h0m0.1-118.5h0m0 9h0m0 90.1h0m0 3.4h0m0.1-101.7h0m0 1.5h0m0 6.1h0m0 7.1h0m0 8.8h0m0 4h0m0 97.6h0m0.1-100.4h0m0 74.6h0m0.2-88.8h0m0 7.4h0m0 13.3h0m0.1-13.4h0m0.1-10.6h0m0 87.1h0m0 2.6h0m0 25.6h0m0.1-117.1h0m0 12.3h0m0.1-16.7h0m0 28.8h0m0 61h0m0 23.7h0m0.1-115h0m0.1 2.2h0m0 22.8h0m0.1 70h0m0 3.8h0m0 8.2h0m0.1-8h0m0 14.1h0m0 6.6h0m0.1-24.8h0m0 5.7h0m0 4.9h0m0 0.6h0m0.3-95.1h0m0.1 1.3h0m0 14.7h0m0 2.4h0m0 90.6h0m0.1-28.6h0m0 24.5h0m0 3.6h0m0.1-18.8h0m0.1-71.3h0m0 0.5h0m0 64.3h0m0.2-78.7h0m0 89h0m0.1-12.9h0m0.1-63.8h0m0 64.1h0m0.2-72.8h0m0 85.8h0m0.1-95.2h0m0 18.1h0m0 78.7h0m0.1-88.8h0m0.1 83.2h0m0 24h0m0.1-105.2h0m0 74.4h0m0.3-91.4h0m0.1 14.6h0m0 97.1h0m0 2.8h0m0.1-84.5h0m0 64.3h0m0 9.4h0m0.1-11.3h0m0 5.8h0m0 3.5h0m0 21.3h0m0.1-27.1h0m0.1-68.5h0m0 70.6h0m0.1 0.2h0m0.1-76.2h0m0 5.9h0m0 60.9h0m0 19.9h0m0 1.6h0m0.1-16.5h0m0 1.8h0m0 3.7h0m0.1-2.5h0m0 10.7h0m0.1-15.7h0m0.1 2.2h0m0.1-5.6h0m0 6.7h0m0 0.3h0m0.1-7h0m0.1 11.6h0m0.1-6.9h0m0 0.7h0m0.1-4.6h0m0 3.6h0m0 13.1h0m0.1-6.3h0m0.1-70.2h0m0 81.4h0m0.1-95.8h0m0 74.1h0m0 7.5h0m0.1-98.5h0m0.1 28.7h0m0.1 74.9h0m0.2-11.1h0m0.2-64.1h0m0 1h0m0.2 63.6h0m0.2-1.5h0m0 17.6h0m0.3-77.5h0m0.1 62.3h0m0 11.4h0m0.1-85.5h0m0.1 79.3h0m0.1-4.9h0m0 6.2h0m0.4-67.8h0m0.3-0.1h0m0.2-1.4h0m0 59.8h0m0.1-65.4h0m0 68.2h0m0.3 2h0m0 7.3h0m0.1-74h0m0 68.9h0m0.1 6.6h0m0.1-97.3h0m0 24.4h0m0.1 80.4h0m0.2-79.4h0m0.2-32.1h0m0 99.5h0m0.2-76.7h0m0.1-21.2h0m0 102.1h0m0 3.8h0m0 2.4h0m0.1-85.1h0m0.1 68h0m0.1-83h0m0.1 6.9h0m0 78.6h0m0 6.7h0m0.2-96h0m0 21.5h0m0 63.2h0m0 0.5h0m0 3.6h0m0 6.5h0m0.1-82.1h0m0 70.8h0m0.1-87.5h0m0 105.5h0m0 14.9h0m0.1-32h0m0 4.6h0m0 0.8h0m0 1.7h0m0 17.9h0m0.1-88.1h0m0 75.6h0m0.1-9.4h0m0 0.1h0m0 0.2h0m0 7.6h0m0 2.6h0m0 5h0m0 15.5h0m0.1-33h0m0 14.7h0m0 5.1h0m0.1-7.3h0m0.1-13.6h0m0 19.5h0m0 1.1h0m0.1-21.3h0m0 4.7h0m0 0.4h0m0 4.5h0m0 4h0m0.1-8.9h0m0 1.3h0m0 9.6h0m0 0.2h0m0 2.1h0m0.1-10.9h0m0 3.9h0m0 7.8h0m0 2.3h0m0 4.7h0m0.1-24.7h0m0 14.3h0m0.1-8.9h0m0 11.9h0m0.1-12.8h0m0 6.5h0m0.1-9h0m0.1-65.3h0m0 3.8h0m0 62.6h0m0 8.6h0m0 3.3h0m0 5.7h0m0.1-110.3h0m0 91.8h0m0.1-67.2h0m0 6h0m0 65.9h0m0 2.4h0m0.2 1.8h0m0 1.5h0m0.1 10.4h0m0.2-93.2h0m0 71.4h0m0 4.1h0m0 7.9h0m0 3.9h0m0 17.7h0m0.1-110.4h0m0 14.1h0m0 66.3h0m0 24.1h0m0.1-13.6h0m0 12.9h0m0 5.7h0m0.1-23h0m0.2-7.7h0m0 11.4h0m0.1-102.4h0m0 21.1h0m0 2.7h0m0.2-2.2h0m0 85.5h0m0.1-88.6h0m0 76.3h0m0.2-4.9h0m0 3.1h0m0 1.9h0m0.1-7.6h0m0.1 6.6h0m0.5 1.9h0m0.2-91.4h0m0 13.6h0m0 9.2h0m0 72.7h0m0.1-10.4h0m0 8.5h0m0.1-74h0m0.1 70.1h0m0.2-6.8h0m0.1-66.9h0m0.2 72.1h0m0 0.8h0m0 2.6h0m0.2-98h0m0 10.6h0m0.1 81.1h0m0.3-82.9h0m0.3 5.8h0m0.1-5h0m0 18.1h0m0.1-3.3h0m0.1 2.3h0m0.1-14.1h0m0 16.5h0m0.1 1h0m0 58.4h0m0.4-63.1h0m0.7 64.7h0m0.2-1.2h0m0.2 0.9h0m0.6-58.9h0m0.2-2.4h0m0 63.8h0m0.1-77h0m0 3.4h0m0 1h0m0 9h0m0 66.5h0m0 2.9h0m0.1-77.9h0m0 8.9h0m0 59.8h0m0.1-0.1h0m0.3-59.7h0m0.6 61.7h0m0.2 19h0m0.1-85.2h0m0 68.2h0m0.2-68.2h0m0 65.1h0m0.1-89.6h0m0 89.2h0m0 1.2h0m0.2-78.9h0m0 15.9h0m0.2 72.1h0m0.1-8.1h0m0.1 4.7h0m0.1-5.6h0m0.1-64.2h0m0.2 68.5h0m0.1-73.8h0m0.2 68.2h0m0.2 0.5h0m0.1 9.5h0m0.2-74.4h0m0 73.2h0m0 8.8h0m0.2-14.9h0m0 2.3h0m0.1-65.6h0m0.1 83.3h0m0.1-20.5h0m0 1.7h0m0 8.8h0m0.1-11.5h0m0 11.7h0m0 8.5h0m0.1-82.5h0m0.1-27.2h0m0.2 28.7h0m0 77.3h0m0.1-5.1h0m0.1-80.6h0m0.4 5.1h0m0 63h0m0.1-69h0m0 72.2h0m0.2-91.3h0m0 94.5h0m0.1-69h0m0.1 63.6h0m0 6.2h0m0.1-72.5h0m0 2.5h0m0 64.3h0m0 2.2h0m0 7.1h0m0 9.2h0m0 1.4h0m0.1-98.9h0m0 95.2h0m0 12.1h0m0.1-29.9h0m0 14.6h0m0 2.1h0m0.1-79.5h0m0 64h0m0 2.7h0m0 3.9h0m0.1 23.8h0m0.1-100.4h0m0 70.3h0m0 0.9h0m0.1-2.6h0m0 10h0m0 6.4h0m0.1 0.4h0m0.2-83.6h0m0 7.6h0m0.2 64.6h0m0.1-68.2h0m0 64.1h0m0.1 6.3h0m0 1.5h0m0.1-9h0m0.1-91.3h0m0.1 94.4h0m0.1-80.8h0m0 5.6h0m0.1-17.5h0m0.1 97.7h0m0.1-8.4h0m0 3.8h0m0.1-94.4h0m0 23.6h0m0 1h0m0 69.2h0m0 1.7h0m0.1-92.1h0m0 4.5h0m0 6.6h0m0.2-6.3h0m0.1-9.3h0m0 10.7h0m0.1 4.3h0m0.1-12.8h0m0 19.5h0m0 69.8h0m0 4.8h0m0.1-96.6h0m0 16.2h0m0 16.3h0m0.1-25.9h0m0 1.4h0m0 23h0m0.1-28.5h0m0 30.3h0m0.1-28.6h0m0 19.6h0m0 3.1h0m0 2.6h0m0.1-11.3h0m0.1 14.3h0m0 0.6h0m0 61.5h0m0.1-90.9h0m0 4.4h0m0 20.2h0m0 3.4h0m0 60.2h0m0.1-91.9h0m0 9.4h0m0 5.2h0m0 10.1h0m0.1-23.5h0m0 8.8h0m0 7.7h0m0 8.9h0m0 5.4h0m0.1-29h0m0 28.8h0m0 1.6h0m0.1-26.7h0m0 2.5h0m0 5.7h0m0 5.7h0m0 8.9h0m0 2.4h0m0.1-11h0m0 1.4h0m0 8h0m0 66.8h0m0.1-78.4h0m0 77.5h0m0.2-87.9h0m0 1.8h0m0 7.6h0m0 5.4h0m0 72.1h0m0 10.1h0m0 3.6h0m0.1-104.5h0m0 25.3h0m0.1 1.5h0m0 4.4h0m0 68.2h0m0.1-80.3h0m0.1 8.8h0m0 2h0m0 73.6h0m0.1-92.8h0m0 16.9h0m0 61h0m0 14.3h0m0 17h0m0.1-122h0m0 3.7h0m0 22.3h0m0 63.5h0m0.1-71.1h0m0 7.3h0m0 5.3h0m0.1 61.9h0m0 21.5h0m0.1-95.8h0m0 2.7h0m0 1.5h0m0 4.9h0m0 3.6h0m0 62.1h0m0 1h0m0 21.7h0m0 0.8h0m0 2.4h0m0.1-92.7h0m0.1 76h0m0.1-4h0m0 27h0m0.1-32.6h0m0.1-86.8h0m0 85.9h0m0 4.9h0m0.1-65.4h0m0 62h0m0 15.6h0m0 1h0m0.1-16.6h0m0 5.2h0m0 6.9h0m0 3.4h0m0.2-1.2h0m0.1-16.6h0m0 0.9h0m0 12.5h0m0 11.7h0m0.1 0.3h0m0.1-99.9h0m0 15.1h0m0 59.4h0m0 9.3h0m0 0.6h0m0 12h0m0.1-85.4h0m0 69.9h0m0.1 7.7h0m0 2h0m0.1-77.6h0m0 62.8h0m0 6.9h0m0.1-8.9h0m0 3.3h0m0 28.1h0m0.1-111.3h0m0 90.5h0m0.1-83.9h0m0 1.6h0m0 4.7h0m0 78.3h0m0.1-86.2h0m0 98.3h0m0.2-94.1h0m0 90.3h0m0.1-109.9h0m0 13.8h0m0 79.6h0m0 6.7h0m0.1-73.4h0m0 65.1h0m0 0.2h0m0.1-77.6h0m0.2 79.9h0m0 0h0m0 4.8h0m0.1-2h0m0.1 8h0m0.1-88.8h0m0 15h0m0.1 67.5h0m0.1-5.9h0m0.2-1.2h0m0 7.4h0m0 12.7h0m0.1-110.9h0m0 25.7h0m0.1 1.3h0m0 61.8h0m0 2.2h0m0.1-76.6h0m0 11.2h0m0 0.7h0m0.1-10.2h0m0.1 7.2h0m0.4 81.7h0m0.5-88h0m0 8.2h0m0 4.8h0m0 62.2h0m0 17.7h0m0.1-79.8h0m0.1 71.6h0m0.1-81.5h0m0 3.4h0m0.1-23.4h0m0.3 104.7h0m0.2-85.9h0m0 11.2h0m0.2 66.3h0m0.1-5.5h0m0.1-60.7h0m0.2 63.3h0m0.4-75.7h0m0 77.2h0m0 2.8h0m0.1-7.4h0m0 3.5h0m0 26.5h0m0.1-31.2h0m0 1.5h0m0 1.2h0m0 6h0m0.1 17.8h0m0.1-9.6h0m0.1-88.1h0m0 78.9h0m0.1-68.1h0m0.1 71h0m0.1-100.4h0m0 93.6h0m0 10.5h0m0.1-88h0m0 72.5h0m0.1 7.9h0m0.1-1.3h0m0.1-71.6h0m0.1 66.8h0m0 1.5h0m0 6h0m0.2-6.9h0m0 2.7h0m0.3-1.3h0m0 8.1h0m0.1-10.6h0m0.1-78.8h0m0.3 3.7h0m0 73.8h0m0.2 4.8h0m0.2-75.3h0m0 77.8h0m0.2-5h0m0.2-66.6h0m0.1-18h0m0 87.7h0m0.1-67.9h0m0.1-23h0m0 5.5h0m0.1-7h0m0 8h0m0 10.3h0m0 71.8h0m0.1-94.7h0m0 29.4h0m0 62.7h0m0.1 0.7h0m0.1-71.6h0m0 1h0m0.1-13.2h0m0.3 88.7h0m0.3 13h0m0.2-10.1h0m0.2-70.6h0m0.3 3.9h0m0 62h0m0.3-2.2h0m0.6-84.5h0m0 23h0m0 60.8h0m0.2 2.9h0m0.3-65.5h0m0.2 61.8h0m0 0.8h0m0.1-72.4h0m0.1 73h0m0.1 16.6h0m0.2-14h0m0 8.2h0m0.1-12.5h0m0.1 8.7h0m0.1 0.3h0m0 0.1h0m0.1-72.9h0m0.1 64.7h0m0 2.6h0m0 8.9h0m0.3-7.6h0m0 0h0m0.1-73.4h0m0 69.2h0m0.1 10.9h0m0.3-8.6h0m0.4 2.6h0m0 4.8h0m0.1-74.4h0m0 69.4h0m0 9.3h0m0.1-85.3h0m0.1-4.5h0m0 4.9h0m0 8.1h0m0 1h0m0 72.9h0m0.1-102.2h0m0 114.5h0m0.1-115.9h0m0 22.2h0m0 2.4h0m0 1.4h0m0 4.7h0m0 1.9h0m0.1 88h0m0.1-116.6h0m0 12h0m0 6.7h0m0 4.4h0m0 77.2h0m0 1.8h0m0 9.6h0m0.1-82.5h0m0 60.2h0m0 20.2h0m0.1-93.5h0m0 5.4h0m0.2 66.2h0m0 5h0m0.1-2.4h0m0.1 1.6h0m0 0.3h0m0.1-3.3h0m0.1-0.5h0m0 6.5h0m0.1-7.4h0m0.1 2.4h0m0.4 0.3h0m0.1 11h0m0.3-11.9h0m0 0.4h0m0 9.1h0m0.2-72.8h0m0.4 89.9h0m0.1-106.2h0m0.4 89.7h0m0.2-73h0m0 69.8h0m0.1 0.5h0m0.1-70.7h0m0.1-0.9h0m0 0.6h0m0.1 67.5h0m0 10.7h0m0.1-13.7h0m0.2-68.9h0m0.2 73.5h0m0.1-93.8h0m0 91.3h0m0.2 0.3h0m0.3 10.8h0m0.1-14.2h0m0 12.8h0m1.1 8.7h0m0.1 5h0m0.1-28h0m0.1 15.6h0m0.2-14.5h0m0 2.2h0m0.2 16.9h0m0.1-16.8h0m0.1 2.1h0m0.1-5.6h0m0 10.2h0m0 18.9h0m0.2-28.7h0m0 10.3h0m0 9h0m0.1-10.1h0m0.2-4.9h0m0 15.8h0m0.1-8.6h0m0.1-2.4h0m0.3-2.9h0m0 0.1h0m0.1 0.7h0m0 12.4h0m0 5.2h0m0.1-24.9h0m0.4-59.6h0m0.6-28.7h0m0.1 24.9h0m0.1 1.7h0m0.4-8.1h0m0.1 73.7h0m0.2-63.4h0m0.1-19.6h0m0.2 9.9h0m0 5.3h0m0 74.4h0m0.1-83.3h0m0.1 89.3h0m0.2-98.5h0m0 3.7h0m0 3.6h0m0 0.4h0m0.1-14.5h0m0 6.5h0m0.1 10.4h0m0 3.9h0m0.1-21h0m0 27.3h0m0.1-22.3h0m0 21.8h0m0 2.1h0m0 70.7h0m0.1-86.4h0m0.1-3.7h0m0 15.5h0m0 4.2h0m0.1-30.1h0m0 9.6h0m0 11.2h0m0 9.1h0m0.1-28.7h0m0 0.4h0m0 6.3h0m0 9.8h0m0 3.5h0m0 6.2h0m0.1-25.5h0m0 20h0m0 2.2h0m0.1-25.9h0m0 13.3h0m0 5.9h0m0 77.9h0m0 3.3h0m0.1-85.3h0m0 9.9h0m0 73.1h0m0.1-92.3h0m0 6.2h0m0 7h0m0 7h0m0 69.1h0m0 22.2h0m0.1-117.1h0m0 11.3h0m0 0.4h0m0.1-8.5h0m0 18.9h0m0 1.5h0m0 8.3h0m0.1-21.3h0m0 1.4h0m0 7.9h0m0 1.9h0m0.1-4.8h0m0 11h0m0.1-23.7h0m0.2 91.3h0m0 1.7h0m0 0.4h0m0.1-88.2h0m0 20.9h0m0 1.3h0m0 60.3h0m0.1-81.7h0m0 17.4h0m0.1-13.3h0m0 79.1h0m0.1-64.5h0m0 80.9h0m0.3-80.6h0m0.1 1.7h0m0 62.2h0m0.1-90.4h0m0 30.1h0m0 0.1h0m0 58.4h0m0.2-80.8h0m0 7.3h0m0.3-15h0m0.2 14.2h0m0 77.3h0m0.1-87.7h0m0.1 21.6h0m0 2.3h0m0 65.1h0m0.4-92.1h0m0.1 16.7h0m0 1.7h0m0 9.4h0m0.1-16.4h0m0 5.2h0m0.2-1.3h0m0 11.1h0m0 61.8h0m0.2-58.4h0m0 66.1h0m0.1-83.3h0m0 14.5h0m0.2-19.9h0m0 12.8h0m0 6.1h0m0 62.6h0m0.3-62.4h0m0.5 0h0m0 62.6h0m0.1-1.1h0m0.1-61.7h0m0 2.3h0m0.1 0.4h0m0 1h0m0.3-13.5h0m0.1 9.6h0m0.3-19.4h0m0.3-5h0m0 24.7h0m0.5 2h0m0.2 59.6h0m0.2-75.8h0m0.2 14.4h0m0.6 74.7h0m0.2-74.7h0m0.1-0.9h0m0 66.1h0m0.1-61.5h0m0.3 58.3h0m0.2 8.5h0m0.4-86.7h0m0 16.2h0m0.3 62.3h0m0.1-64.5h0m0 65h0m0.2-0.4h0m0.1 1.4h0m0 18.8h0m0.1-6.4h0m0.3-100.9h0m0 9.5h0m0 80.8h0m0 18.3h0m0.2-96.7h0m0 78.2h0m0 1.8h0m0.1-91.2h0m0 19.4h0m0.1-23.8h0m0 90.3h0m0 20.4h0m0 10h0m0.1-113.3h0m0 91.2h0m0 2h0m0.1-102h0m0 94.7h0m0.1-78.9h0m0 4.5h0m0 9.9h0m0.1-4.2h0m0 1.8h0m0 72.8h0m0 13h0m0.1-105h0m0 4.5h0m0.1-13.5h0m0 3.3h0m0 27.4h0m0.1-23.9h0m0 26.9h0m0.1-24.7h0m0 2.4h0m0 20.5h0m0 63.6h0m0.1-91.3h0m0 6.5h0m0 3.6h0m0.1-9.2h0m0 6.9h0m0 12.8h0m0.1 0.4h0m0.1-12h0m0 9.8h0m0.1-12h0m0 83.9h0m0.1-65.8h0m0.1 0.6h0m0 62.1h0m0 6.2h0m0.2-5.5h0m0.1-59.6h0m0 60.7h0m0 1h0m0.2-64h0m0.1-6h0m0.1-21.5h0m0.2 24.6h0m0.1 66.4h0m0.2-86h0m0 96.2h0m0.1-99.8h0m0.5 88.6h0m0.1 0.1h0m0 8.4h0m0.2-72.9h0m0 68h0m0.1-4.1h0m0.4 1.9h0m0.2-1.8h0m0.1-72.5h0m0.4 72.9h0m0.2-83h0m0 1.9h0m0 80.7h0m1 1.8h0m0.1-1.4h0m0.2-69.3h0m0 1h0m0.1 81.8h0m0.3-80.7h0m0 67.4h0m0.3-1.1h0m0.2 7.4h0m0.2-8.1h0m0.2-64.4h0m0 66h0m0.4-63.8h0m0.2 92.3h0m0.2-11.9h0m0.1-85.2h0m0 9.5h0m0.3 68.4h0m0.2-9.5h0m0 4h0m0.1-4h0m0 0.9h0m0 0.6h0m0 13.5h0m0.1-86h0m0 7.5h0m0 66.5h0m0.3-75.5h0m0.3 71.6h0m0.1 18.3h0m0.1-18.2h0m0.2-78.7h0m0.2 93h0m0.1-14.3h0m0.1-86.4h0m0 90.7h0m0.1 2.5h0m0.1-76h0m0 69.5h0m0.1-59.8h0m0.1 60.5h0m0.4-80.7h0m0 79.1h0m0 0.7h0m0 9.2h0m0.1-9.6h0m0.1-62h0m0.1 62.2h0m0 36.7h0m0.2-122.8h0m0 15.8h0m0 85.3h0m0 0.1h0m0.1-10.7h0m0.1-1.9h0m0 2h0m0 0.5h0m0.1-5.3h0m0 19.7h0m0.1-4.5h0m0 10.8h0m0.1-24.4h0m0 3.9h0m0 10.8h0m0.1-12.8h0m0 1.3h0m0 12h0m0.1 0.2h0m0.1-15.2h0m0 7.8h0m0 11.4h0m0.1-13.6h0m0 6.9h0m0 18h0m0.1-27.8h0m0 0.4h0m0 5.2h0m0 10.6h0m0.2-5.5h0m0.1-10.2h0m0.4-72.7h0m0 4.5h0m0 0.4h0m0 69.9h0m0.1-6h0m0.2 4.1h0m0 6.3h0m0 8.2h0m0.1-101.4h0m0 93.4h0m0.2-11.3h0m0.1-65.6h0m0.1-10.8h0m0 80.6h0m0 0.3h0m0.1-1.1h0m0.3 0h0m0 0.5h0m0.1-0.1h0m0 0.4h0m0.1 2.1h0m0.1-1.7h0m0 21.4h0m0.1-17.2h0m0.1-78.7h0m0 73.6h0m0.4-2h0m0.2 29.6h0m0.1-27.1h0m0.1-70.3h0m0 66.5h0m0 1.8h0m0 1.4h0m0.1-0.6h0m0.1-73.6h0m0.1 84.9h0m0.1-12.4h0m0 0.3h0m0 29.7h0m0.1-30.9h0m0.1 5.6h0m0 2.2h0m0.1-72.1h0m0 94.1h0m0.1-22.1h0m0 10.5h0m0 2.3h0m0.1-85.8h0m0 68.7h0m0 21.1h0m0.1-24.5h0m0 21.8h0m0.1-18.3h0m0.1-70h0m0 70h0m0.1-87.6h0m0 83.3h0m0 15.4h0m0.1-96.8h0m0 5.4h0m0.1-14.6h0m0 8.4h0m0 0.9h0m0 17.1h0m0 2.3h0m0 62.9h0m0.1-90.3h0m0 8.4h0m0 7.3h0m0 74.5h0m0.1-89.3h0m0 26.9h0m0.1-27.4h0m0 16.6h0m0 7.2h0m0 5h0m0 69.9h0m0 7.3h0m0.1-106.9h0m0 11h0m0 5.1h0m0 11.4h0m0 73.6h0m0.1-102.1h0m0 1.5h0m0 7.8h0m0 89.9h0m0.1-99.6h0m0 3.4h0m0 1.7h0m0.1-6.2h0m0 5.1h0m0 0.1h0m0 3.1h0m0 7.1h0m0.1-4.2h0m0 11.5h0m0 4.8h0m0 1.6h0m0 68.5h0m0.1-94.5h0m0 5h0m0.1-1.1h0m0 17h0m0 5h0m0 66.6h0m0 5.2h0m0.1-95.1h0m0 6h0m0 14.3h0m0 0.2h0m0.1-21.4h0m0 17.3h0m0.1-13.3h0m0 94.4h0m0.1-96.1h0m0 1.6h0m0 85.1h0m0.2-84.9h0m0 21.4h0m0 1.2h0m0 64.7h0m0.1-93.1h0m0 19.8h0m0 78.5h0m0.1-76.2h0m0 0.7h0m0.1-21.7h0m0 89.8h0m0 1.9h0m0 13.2h0m0 5.7h0m0.1-1h0m0.1-110.8h0m0 90.1h0m0 4h0m0 0.8h0m0.1-72.7h0m0 73.3h0m0 6.9h0m0 22.7h0m0.1-98.4h0m0 63.3h0m0 3.6h0m0.1-73.9h0m0.1 72.9h0m0.1-72.4h0m0 9.3h0m0.1-16.3h0m0 20.7h0m0.1-4.5h0m0 3.9h0m0 71.7h0m0.1-107.1h0m0.2 118.8h0m0.1-21.1h0m0 16.8h0m0.1-96.5h0m0 5.5h0m0 81.9h0m0.1-87.6h0m0.3 75.1h0m0.1-0.6h0m0.1-67.3h0m0 68.4h0m0 21.7h0m0.1-83.5h0m0 59.1h0m0 8.9h0m0.1-5.4h0m0.4-83.3h0m0 20.3h0m0 91.1h0m0.1-105.4h0m0 75.1h0m0.3 0.9h0m0.3-59.8h0m0 86.8h0m0.1-26.6h0m0.1-89.2h0m0.1 23.6h0m0 65.3h0m0 4.4h0m0 23.9h0m0.5-27.6h0m0 26.7h0m0.1-90.9h0m0.3 71.3h0m0 13.6h0m0.1-94.4h0m0 2.9h0m0 0.5h0m0 69.4h0m0.1 2.4h0m0.1 11.7h0m0.1-84.7h0m0.3 8.6h0m0 64.9h0m0.1-90.5h0m0 12.1h0m0.1 4.4h0m0 8.7h0m0.1 65.1h0m0.6-73.7h0m0 70.4h0m0.1-65.4h0m0.1-16.5h0m0.3 16.9h0m0 5.6h0m0 62.4h0m0.2-76.4h0m0.1-16.3h0m0.2 22h0m0.1-23.7h0m0 27.3h0m0.1-20.1h0m0.1 102.2h0m0.1-92.9h0m0.1 80.1h0m0.1-74.2h0m0.1 70.1h0m0.2-67.2h0m0.2 4.5h0m0.1-27.6h0m0.1 26.6h0m0.1-6.6h0m0.1-22.5h0m0 0.2h0m0 8.8h0m0 1.4h0m0.1 93.6h0m0 7.2h0m0.1-88.7h0m0 0.3h0m0.1 68.6h0m0.1-84.5h0m0 15.6h0m0.1 8.5h0m0.1-21.2h0m0.1-11.1h0m0 9h0m0 2.3h0m0 82.1h0m0.1-80.4h0m0 8.5h0m0 1.2h0m0 70.3h0m0 9.6h0m0 1.1h0m0.1-103.5h0m0 22.9h0m0 8.4h0m0 75.8h0m0.1-83h0m0 69.7h0m0 7.2h0m0 9.1h0m0.1-106h0m0 11.7h0m0 1.3h0m0.1-0.9h0m0 16.6h0m0 59.7h0m0 6.7h0m0 9.8h0m0.1-100.9h0m0 1.9h0m0 7.1h0m0 8.1h0m0.1-25.5h0m0 4.3h0m0 13.9h0m0 3.9h0m0 2.1h0m0 74.7h0m0.1-90.6h0m0 8.9h0m0 2.5h0m0 4.6h0m0 2.4h0m0.1-15.1h0m0 4.4h0m0 16.1h0m0.1-7h0m0 5.2h0m0.1-26.9h0m0 22.5h0m0 80.1h0m0.1-10.5h0m0 7.6h0m0.1-90.9h0m0 7.3h0m0 0.2h0m0 76.2h0m0.1 0.7h0m0.1-94.1h0m0 6.9h0m0 1.6h0m0 0.6h0m0 4h0m0 2.8h0m0 9.9h0m0 63.7h0m0 13.4h0m0.1-89.1h0m0 4h0m0 9.3h0m0 62.2h0m0 2.4h0m0 1h0m0.1-91.7h0m0 12.1h0m0 15.8h0m0.1-14h0m0 0.8h0m0 9.3h0m0 73.3h0m0 1.9h0m0 4.1h0m0 3.8h0m0.1-110.5h0m0 12.9h0m0 13.8h0m0 3.5h0m0 2.8h0m0 58.7h0m0.1-82h0m0 83.4h0m0 20.8h0m0.1-87h0m0 70.1h0m0.1-70.8h0m0.2-18.7h0m0.2 84.7h0m0.3-66.9h0m0 1.6h0m0 66.7h0m0.2-77.4h0m0 0.6h0m0 12.2h0m0.1-3.6h0m0 6.3h0m0.5 63.1h0m0 8.4h0m0.3-69.5h0m0 60.4h0m0.1-61.1h0m0.5 62.5h0m0.2-3.5h0m0.1 2.1h0m0.1-61.8h0m0 61.1h0m0.1-60.7h0m0.1 62.5h0m0.3-66.7h0m0.2 79.1h0m0.1-15h0m0 1.2h0m0 5.3h0m0 8.5h0m0.1-15.4h0m0 3.8h0m0.2-1.4h0m0 14.2h0m0.1-8.8h0m0.2-7.3h0m0.2-61.7h0m0 66.3h0m0.3-4h0m0.2-60.4h0m0.3 60.7h0m0 8.9h0m0.2-9.2h0m0 6.4h0m0.1 5h0m0.1 19.5h0m0.4-22.8h0m0.3-5.6h0m0 15.4h0m0.1-13.1h0m0.1-91.7h0m0.4 26.2h0m0 60h0m0.2 22.6h0m0 4.2h0m0.1-25h0m0.1-69.3h0m0 77.1h0m0 4.7h0m0.3-82.4h0m0 6h0m0 73.2h0m0.3-5.3h0m0 3.5h0m0.1-98.8h0m0 17h0m0 72.9h0m0 3.6h0m0 13.7h0m0 2.2h0m0.1 9.1h0m0.1-21.6h0m0 0.7h0m0.2 0h0m0.1-3h0m0 0.2h0m0.2-72.9h0m0 68.8h0m0 7.6h0m0 2.2h0m0 2.1h0m0.2-8.7h0m0 4.7h0m0 10.3h0m0.1-18.4h0m0.2-1h0m0.1 5.4h0m0.1-66.1h0m0.2 63.2h0m0.1-93.3h0m0 3.7h0m0 9.8h0m0 5.9h0m0.1-21.3h0m0 20h0m0 71.5h0m0 3.8h0m0.1-92.7h0m0 5.7h0m0 18.3h0m0.1-23.5h0m0 0.2h0m0 88.8h0m0.1 0.7h0m0.2-61.6h0m0 73.6h0m0.1-95.3h0m0.1 82.2h0m0.1-67.6h0m0.1-22.2h0m0 13.4h0m0 9.4h0m0 71.6h0m0 1.8h0m0 2.2h0m0.1-73.1h0m0.1-25.8h0m0.2 11.2h0m0 15.5h0m0.2-13.1h0m0.1-3.4h0m0.1-5.1h0m0.1 88.6h0m0.9-62.3h0m0.2 64.8h0m0.8-67.7h0m0.5-6.1h0m0.1-1h0m0.1 69h0m0.1-80.4h0m0.1 4.5h0m0.5 77.5h0m0.5-60.2h0m0.2 63.7h0m0.2-63.6h0m0.1-4.6h0m0 66.4h0m0.1 2.4h0m0.1-68.6h0m0 64h0m0.1-92h0m0 14.1h0m0 12.6h0m0 68.6h0m0.1-91.1h0m0.1 9.1h0m0 88.4h0m0.1-102.6h0m0 16.9h0m0.1-10.7h0m0 6.9h0m0 14.5h0m0 72.4h0m0.1-93h0m0.1 95.7h0m0.1-8.5h0m0.1 16.4h0m0 2.8h0m0.2-18.1h0m0 0.8h0m0 1.9h0m0 4.3h0m0.1-100.6h0m0 91.4h0m0 13.6h0m0.1-2.6h0m0 11.6h0m0.1-90.8h0m0 71.8h0m0 11h0m0 7.3h0m0.1-81.5h0m0 68.5h0m0.1-7.2h0m0.1-2.8h0m0 3.6h0m0 19.6h0m0.1-21.9h0m0.1 1.5h0m0 4.8h0m0 13h0m0.1-11h0m0.1-88.5h0m0 83.7h0m0 3.7h0m0.1-73.4h0m0 69.3h0m0.1 11.3h0m0 1.1h0m0.2-17.2h0m0 0.4h0m0.1-65h0m0.1 72.2h0m0 6.5h0m0.1-75.5h0m0 65.6h0m0.1-2h0m0.2 13.1h0m0.1-74.8h0m0 1.7h0m0 65.8h0m0.2-3.5h0m0.1-78.3h0m0 11h0m0 66.9h0m0.1 16.1h0m0.1-78.5h0m0 69.5h0m0.1-75.6h0m0 0.1h0m0 3.8h0m0.2 82.1h0m0.1-13h0m0 2.6h0m0.1-11.2h0m0 18.7h0m0.1-17.4h0m0 6.4h0m0 5.5h0m0 6.7h0m0.2-13.7h0m0.1-5.9h0m0 2.1h0m0 0.3h0m0 0.5h0m0 8.5h0m0.1-8.7h0m0 2.3h0m0 0.2h0m0 11.1h0m0.1-13.4h0m1-2.3h0m0.1 0.3h0m0.2-0.1h0m0.1-66.3h0m0 6.3h0m0 59h0m0 0.9h0m0 14.9h0m0.1-79.1h0m0 73.6h0m0.2-7.7h0m0.3-0.6h0m0.1-65.2h0m0 63.4h0m0.2-79.9h0m0.1 21.7h0m0.1 59.1h0m0.2-68.7h0m0 69h0m0 1.4h0m0.4-70.9h0m0.1 74.1h0m0.2 3.9h0m0.1-68.3h0m0 61.7h0m0.2 3.2h0m0.1-82.7h0m0 103.4h0m0.1-23.1h0m0 7.6h0m0 16.2h0m0.1-89.1h0m0 62.3h0m0 3h0m0 15.6h0m0 15.1h0m0.1-93.6h0m0 74.3h0m0.2-10.3h0m0.1 0.9h0m0.1-66.3h0m0 64.5h0m0 6.6h0m0 2.8h0m0.1-87.4h0m0.1 5.7h0m0 3.6h0m0.5-7.5h0m0.1 0.1h0m0 87.8h0m0.1-15.3h0m0 9h0m0.2-85.4h0m0 17.1h0m0 58.9h0m0.1-63.8h0m0 63.4h0m0 4h0m0.1-64.2h0m0 85.6h0m0.1-93.3h0m0 68.1h0m0 5h0m0 5.5h0m0.2-84h0m0 74h0m0 2.8h0m0 6.7h0m0 0.4h0m0.1-101.6h0m0 25.7h0m0 2.2h0m0.1-14.1h0m0 7.6h0m0 10.9h0m0.1-2.5h0m0 1.5h0m0.1-17.5h0m0 14.8h0m0.1-26.5h0m0 16.4h0m0 7.7h0m0 3h0m0.1-28.5h0m0 6.5h0m0 4.5h0m0.1-0.9h0m0 13.2h0m0 68.1h0m0.1-83.8h0m0 7.2h0m0 7.5h0m0.1-22.1h0m0 5.1h0m0 9.1h0m0 5.3h0m0 71.7h0m0 6.5h0m0.1-99.2h0m0 15.1h0m0 9.1h0m0.1-9.8h0m0 14.8h0m0.1-9.2h0m0.1-17h0m0 0.4h0m0 18.6h0m0 7.5h0m0.1 0.9h0m0 61.2h0m0.1-90h0m0 30.5h0m0.1-15.5h0m0 4.9h0m0.1 1.6h0m0 0.7h0m0.4 1.8h0m0 70.1h0m0 0.3h0m0.2-3.6h0m0 11.8h0m0.1-10.8h0m0 2.4h0m0.1 5.8h0m0.2-0.9h0m0.1-6.4h0m0.1-2.7h0m0.2 12h0m0 8.5h0m0.1-78.7h0m0.1-10.4h0m0 78.3h0m0.3-9.7h0m0 3.4h0m0.2-72h0m0 75.3h0m0 5h0m0.1-77.9h0m0 68.1h0m0.1 2.4h0m0.2 25.7h0m0.1-98.7h0m0 74.4h0m0.1-4.8h0m0 0.4h0m0.1 12.4h0m0.1-97h0m0 85h0m0 2.9h0m0.2 4.1h0m0.1 1.8h0m0.1-74.8h0m0 68.4h0m0.2-64.9h0m0.1 61.9h0m0 3.4h0m0.1-1.5h0m0.1-71.7h0m0 9h0m0 63.3h0m0.1-71.7h0m0.1 71.9h0m0 27.5h0m0.2-10.2h0m0.1-20.4h0m0 31.1h0m0.2-113.4h0m0 23.8h0m0.1 64.3h0m0 1h0m0.1 1h0m0 5.3h0m0.3-13.5h0m0 22.2h0m0.6-108.3h0m0 15.5h0m0.1 71.2h0m0.2-76.7h0m0.1 14.4h0m0.3-22.1h0m0.1-2h0m0 86.1h0m0 4.6h0m0.2-87h0m0 14.2h0m0 7h0m0 61.1h0m0.1-75.7h0m0 1.2h0m0 8h0m0.1 2.3h0m0 3.7h0m0.1-31.6h0m0 15.3h0m0 94.6h0m0.1-106.7h0m0 9.8h0m0.1-6.5h0m0.1 14.9h0m0.1 71.4h0m0.1-59.3h0m0 84.9h0m0.2-26.5h0m0.2 4.6h0m0 13.2h0m0.2-76.6h0m0.4-9.9h0m0.1 9.3h0m0 78.1h0m0.1-15.3h0m0.1 10.9h0m0.1-7.3h0m0.2-66.9h0m0 62.3h0m0 18.8h0m0.1-2.1h0m0.1-95.7h0m0.1 16.9h0m0.1 66h0m0 3.7h0m0 26.9h0m0.1-99.5h0m0 79.1h0m0.1 15h0m0.1-28.9h0m0.1 15.7h0m0.1-13h0m0 1h0m0 3.8h0m0 21.1h0m0.1-19h0m0.1-11.5h0m0 4.2h0m0 5h0m0 3.8h0m0.1-13.2h0m0 8.2h0m0 2.4h0m0 12.6h0m0.1-98.9h0m0 76.9h0m0 5.6h0m0.3-3h0m0.1-69.2h0m0 69.5h0m0.1 3.8h0m0 17.8h0m0.4-12.4h0m0.2-9.1h0m0 8.2h0m0.1-12.9h0m0 1.4h0m0.3 5.3h0m0.2 2.5h0m0.2-0.5h0m0.1-85.6h0m0.1-5.7h0m0 14.4h0m0.2 6.4h0m0 65.6h0m0.1-2.6h0m0 1.4h0m0 13.1h0m0.1-106.5h0m0.1 112.2h0m0.2-21.7h0m0.1 6.5h0m0 13.7h0m0 6.1h0m0.1-14.5h0m0 2.3h0m0.2-13.5h0m0 1h0m0 24.4h0m0.1-25.2h0m0 0.9h0m0.1 20.5h0m0.1-14.7h0m0 3.7h0m0.1 0.5h0m0 2.4h0m0 14.8h0m0.1-22.7h0m0 2.3h0m0.1-72.7h0m0 82.6h0m0.3-104.4h0m0 24.1h0m0 70.5h0m0.2-75.9h0m0.1 68.3h0m0.3-76.2h0m0 7.5h0m0.1 67.8h0m0 7.9h0m0.1-7.9h0m0 6.2h0m0.1 8.8h0m0.1-12.4h0m0.2 2.3h0m0.1-84.3h0m0 2.3h0m0 16.9h0m0.1-1.2h0m0.1 0.3h0m0 70.9h0m0.1-91.9h0m0 16.1h0m0.1-7.1h0m0.1-2.5h0m0 88h0m0.1-87.1h0m0.4 75h0m0.1 0.9h0m0 0.2h0m0.3 2.7h0m0.2-1.8h0m0.1-62.9h0m0.1 67.6h0m0.2 8.3h0m0.3-80.9h0m0 7.4h0m0.1 61.3h0m0 5.9h0m0.1-83h0m0 16.6h0m0.1-8.8h0m0 8.7h0m0 58.1h0m0 20.5h0m0.1-20.3h0m0 3.5h0m0 3.9h0m0 3.9h0m0 11.3h0m0.1-106.2h0m0 8.3h0m0 75.9h0m0 6.5h0m0 5.4h0m0 3h0m0.1-14.8h0m0 9h0m0 5.5h0m0 14.6h0m0 0.7h0m0.1-30.2h0m0 1.2h0m0.1-73h0m0 75.8h0m0.1 7.3h0m0.1-12h0m0 7.2h0m0 1.5h0m0 8h0m0.1-83.9h0m0 1.7h0m0 76.6h0m0 3.2h0m0 8.5h0m0.1-23h0m0 1.6h0m0 0.1h0m0 1.5h0m0 0.5h0m0 2h0m0 16.7h0m0.1-22.4h0m0 6.7h0m0 6.5h0m0.1-11.1h0m0 4.9h0m0 11.2h0m0.1-84.4h0m0 76h0m0 4h0m0 9.9h0m0.1-22.7h0m0 2.9h0m0 0.5h0m0 10.9h0m0.1-83.8h0m0 70h0m0 1.2h0m0 1.9h0m0 2.6h0m0.1-0.2h0m0.1 13.2h0m0.1-19.2h0m0 3.6h0m0 6.9h0m0.1-11h0m0 14.6h0m0.1-2.2h0m0 5.2h0m0.1-14.8h0m0 0.4h0m0 19.5h0m0.1-19.1h0m0.1-2.4h0m0.1-0.9h0m0 0.3h0m0 7h0m0 2.6h0m0.1-5.9h0m0.1-0.2h0m0.1-3.8h0m0 1.2h0m0 11.9h0m0 12.4h0m0.1-22.9h0m0 5.6h0m0.1-5.2h0m0 13.3h0m0 7.4h0m0 0.4h0m0.2-23.8h0m0.2 2.5h0m0 0.7h0m0.1-2.3h0m0 8.2h0m0.1-73h0m0.1 63.4h0m0.1 4.3h0m0.1 15.3h0m0.1-19.6h0m0 0.8h0m0 2.5h0m0 7.5h0m0.1-11.4h0m0 0.1h0m0 11.6h0m0 4.9h0m0.2-76.2h0m0 67.5h0m0.2 16.3h0m0.1 5.7h0m0.2-22.9h0m0.1-6.5h0m0 20.1h0m0.1-88.2h0m0 7.1h0m0 75.1h0m0.1-13.8h0m0 12.9h0m0.1 0.2h0m0 19.7h0m0.1-96.4h0m0.1-10.3h0m0 75.5h0m0 4.6h0m0 25.8h0m0.1-99.1h0m0 69.2h0m0 7.6h0m0.1-98.1h0m0 92.6h0m0.1-4h0m0.1-84.4h0m0 2.8h0m0 99.7h0m0 8.9h0m0.1-91.8h0m0 4.9h0m0.1-20h0m0 6.5h0m0 82.8h0m0.1-90h0m0 2.3h0m0.1-8.7h0m0 16.2h0m0 1.4h0m0.1 72.8h0m0.1-1.4h0m0 1.2h0m0 3.9h0m0.2 5.2h0m0 7.5h0m0.1-102.3h0m0 2.4h0m0 18.4h0m0 65.7h0m0.1 17.7h0m0.1-81.7h0m0.1-20h0m0 20.8h0m0.3-31.3h0m0 23.6h0m0 1.7h0m0.1 66.1h0m0 19.9h0m0.1-97.4h0m0 77.4h0m0.1-63.1h0m0.1 67.2h0m0.2-4.7h0m0 7h0m0.1 2.6h0m0.1-85.2h0m0.1 8.9h0m0 7.5h0m0 61.4h0m0.1-69.3h0m0 0.2h0m0 3.1h0m0 62.8h0m0 25.7h0m0.1-114.7h0m0 25.3h0m0 66.4h0m0.1 9.8h0m0.1-75.2h0m0.1-6.8h0m0.1-6.9h0m0.1-8.9h0m0 21.9h0m0 67h0m0 1.1h0m0 0.1h0m0 1h0m0.1-73.1h0m0 9.2h0m0 63.1h0m0 23.3h0m0.1-107.3h0m0 15.9h0m0 67.7h0m0 7.6h0m0 16.4h0m0.1-96.3h0m0 71.8h0m0 30.5h0m0.1-122.2h0m0.1-0.7h0m0 10.5h0m0 88.7h0m0.1-2.8h0m0.1-100.2h0m0 31.7h0m0.1-10.9h0m0 4.7h0m0 1h0m0.1-24.2h0m0 7.9h0m0 3.7h0m0 17.1h0m0 1.8h0m0 63.9h0m0 7.2h0m0.1-87.7h0m0 1.6h0m0 80.9h0m0.1-81.5h0m0 2h0m0.1 7.5h0m0 84.8h0m0.1-13.7h0m0 3.4h0m0 8.4h0m0.1-92.9h0m0.1-15h0m0 2h0m0 20.5h0m0.1 1.7h0m0 2.9h0m0 2.9h0m0 65.4h0m0.1-94.5h0m0.1 8.8h0m0 18.6h0m0 76.2h0m0.2-73.2h0m0.2 60.9h0m0.5-65.7h0m0.8 64.7h0m0.6 0.7h0m0.7 5.8h0m0.4-7.1h0m0.1 9.9h0m0.1-0.5h0m0 2.9h0m0.1-11.6h0m0 22.9h0m0.3 9.9h0m0.1-96.1h0m0 67.7h0m0 13.6h0m0.1-14.2h0m0 1.1h0m0.1 2.8h0m0.2-3h0m0.2 16.2h0m0.3-97.8h0m0 77.6h0m0.2 32.8h0m0.1-94.5h0m0 60.8h0m0 21.6h0m0.1-19.9h0m0.2 4.2h0m0.1 1.1h0m0 24.4h0m0.3-19h0m0.1-7.1h0m0.1 5.6h0m0.1 10.1h0m0.1-15.7h0m0 0.9h0m0.1 8.7h0m0.1-3.2h0m0.1 13.6h0m0.2-101.6h0m0 10.1h0m0 80.3h0m0.1-0.6h0m0 7.8h0m0.1-16.9h0m0.2-5.1h0m0.1 1.6h0m0.1-1.6h0m0.1 3.2h0m0 2.5h0m0.1-2.5h0m0 13.7h0m0.1-16.6h0m0 4.3h0m0 5.5h0m0 6.3h0m0.1-15h0m0 0.1h0m0 22.8h0m0.1-85.5h0m0 63.9h0m0.1 3.1h0m0.1-3.5h0m0 2h0m0.1 1.4h0m0 10.3h0m0 18.1h0m0.1-23.7h0m0.1-10.9h0m0.3 15.5h0m0.5 0.9h0m0.1-93.7h0m0.1-8.9h0m0.1 19.6h0m0.1-13.4h0m0 3.1h0m0 10.9h0m0 1.7h0m0.1-7.3h0m0.1 74.9h0m0 23.8h0m0.1-102.5h0m0 1.8h0m0 14.1h0m0 63.2h0m0.1-84.9h0m0 13.5h0m0 4.7h0m0.1-14.6h0m0 86.6h0m0.1-76.5h0m0 75.3h0m0.1-99.4h0m0 99.8h0m0.1-85.1h0m0 79.6h0m0 7.2h0m0.1-94.9h0m0 22.5h0m0 1.6h0m0 69.7h0m0.2-93.1h0m0 9.9h0m0 2h0m0 7h0m0 6.1h0m0 77.2h0m0.2-99.5h0m0 0.2h0m0 16.6h0m0 84.6h0m0.1-103.9h0m0 92.8h0m0.1-3.2h0m0 12.6h0m0.1-102.6h0m0 26.2h0m0 67.6h0m0.2-5.5h0m0 9.5h0m0.1-90.5h0m0 11.6h0m0.1-5.1h0m0.1-2.3h0m0.1 14.7h0m0 1.2h0m0.1-14.3h0m0 9.6h0m0 64.8h0m0.1-3h0m0.2-57.2h0m0.4-2.4h0m0.3 62.4h0m0.1-72h0m0.1 70.9h0m0.1 4.7h0m0.1-1.1h0m0.2-67.6h0m0.1 4.5h0m0.2 77h0m0.4-10.8h0m0.3-69.3h0m0 0.4h0m0.4 63.6h0m0.1-66.1h0m0 64.4h0m0.1 10.3h0m0.2-4.6h0m0.1-2.8h0m0.1-2.6h0m0.1 12.6h0m0.2-6.7h0m0.1-66h0m0 73.7h0m0 5.8h0m0.1-18.5h0m0.2-2.1h0m0 0.8h0m0.1 28h0m0.1-28.8h0m0.3 3.6h0m0 6.2h0m0.1-6.5h0m0.4-2.7h0m0 4.4h0m0.4-4.7h0m0 2.8h0m0.1-64.8h0m0 1.5h0m0.1-2.8h0m0 67.6h0m0.1-78.5h0m0.2 8.8h0m0 1.9h0m0.1-15.6h0m0.1 16.7h0m0.1-5.1h0m0 10.8h0m0 60.8h0m0.1-90.4h0m0 1.1h0m0 88.9h0m0.5-63.5h0m0 61.4h0m0.3-1.1h0m0.1-59.3h0m0.3 61.7h0m0.2-1h0m0 3.1h0m0 13.7h0m0.2-19.5h0m0 31.8h0m0.1-30.8h0m0 5.9h0m0 0.8h0m0 17.6h0m0.1-21.7h0m0.1-3.6h0m0 0h0m0.2 3.6h0m0.7-64.3h0m0.2 62.5h0m0.1-81.2h0m0.2 88.5h0m0 8.5h0m0.3-14.7h0m0 13.5h0m0.1-86.7h0m0 5.5h0m0 64.7h0m0 0.8h0m0.1 13.7h0m0.1-14h0m0.2-68.7h0m0 97.6h0m0.2-25.6h0m0 3.3h0m0.1-91.7h0m0 22.5h0m0.1 66.3h0m0.1 3.2h0m0.3-68.8h0m0 64.3h0m0.3 6.7h0m0.1-4.5h0m0.1-5.1h0m0.1 1.9h0m0.2-67.9h0m0 0.7h0m0.1-10.3h0m0 14.9h0m0.2 0.4h0m0.2 60.6h0m0 13.2h0m0.1-9.7h0m0.2-0.2h0m0.1-67.9h0m0 73.8h0m0.2-7.2h0m0 2.7h0m0 8.5h0m1-1.7h0m0.2-11h0m0.1 0.9h0m0.5-0.4h0m0.6-60.1h0m0 62h0m0.1-2.4h0m0 6.9h0m0.1-0.7h0m0.2-1h0m0.1-70.5h0m0 66.2h0m0.1-73.4h0m0 5.5h0m0.1 74.1h0m0.1-7.2h0m0.1 4.7h0m0.1-85.5h0m0 88.6h0m0.1-3.6h0m0.1-3.3h0m0.1 21.9h0m0.1-22.4h0m0 4.3h0m0.1-67.3h0m0 2.3h0m0 66.1h0m0 5.5h0m0.1-11.3h0m0 19.4h0m0 12.6h0m0.2-30.6h0m0.1-74.9h0m0 81.5h0m0.3 5h0m0.1-8.5h0m0 1.3h0m0.1-66h0m0 85.9h0m0.1-25.3h0m0 0.7h0m0 1h0m0 15.6h0m0.1-1.2h0m0 16.8h0m0.1-30.4h0m0.3 0.6h0m0.1 2.1h0m0 3.2h0m0.4-7.1h0m0 1.2h0m0 0h0m0.2-1.9h0m0 17.5h0m0.1-79.3h0m0.1 61.6h0m0.1-69.4h0m0.2 6.3h0m0.1 66h0m0.2-70.8h0m0.4 66.7h0m0.2-58.1h0m0 58h0m0.4-58.3h0m0.3 69.7h0m0 18.1h0m0.1-26.4h0m0 15.2h0m0.1-8.5h0m0.1-8.9h0m0.1 3.6h0m0.3-2.2h0m0.1-1.8h0m0.7 1.3h0m0.1 1.2h0m0.4-63.6h0m0 61.7h0m0 1.2h0m0.1-2h0m0 0.6h0m0 0.4h0m0.1 19.5h0m0 3.2h0m0.4-15.2h0m0.1-70.2h0m0 62.5h0m0 4.8h0m0 10.7h0m0.1-92.7h0m0 4.7h0m0 75.4h0m0.2-2h0m0.1 2.1h0m0.1-77.9h0m0 2.3h0m0.2-0.4h0m0.3-14.5h0m0.1 27.7h0m0.1-27.7h0m0.1 26.9h0m0 60.7h0m0 4.2h0m0 4h0m0.2-99.2h0m0 89.6h0m0 0.9h0m0 2.7h0m0.2 25.6h0m0.1-27.5h0m0.1-79.6h0m0 95h0m0.1-12.1h0m0.1 3.9h0m0 7.8h0m0 14.6h0m0.1-117.5h0m0 18.7h0m0 8.8h0m0 95.7h0m0.1-125h0m0 11h0m0 6h0m0 9.7h0m0 61.8h0m0.1-69.8h0m0 81.8h0m0.1-81.9h0m0 3.1h0m0 68.4h0m0 1.5h0m0.1-90h0m0 7.9h0m0 3.2h0m0 5.1h0m0 3h0m0 5.8h0m0 2.6h0m0 0.3h0m0.1-23.9h0m0 15.3h0m0 67.8h0m0 19h0m0 1.6h0m0 10.5h0m0.1-107.7h0m0 13.5h0m0 1.5h0m0 2.2h0m0 0.1h0m0 73.4h0m0.1-104.7h0m0 16.2h0m0 14.9h0m0 59h0m0 3.9h0m0.1-95.6h0m0 17.2h0m0 2.3h0m0 11.8h0m0 75.8h0m0.1-104.9h0m0 1h0m0 16h0m0 5.7h0m0 72.1h0m0.1-81.5h0m0 3.1h0m0 7.6h0m0 4h0m0.1-19.4h0m0 80.9h0m0 9.7h0m0.1-89.2h0m0 90.4h0m0.1-83.2h0m0.1-14.1h0m0 2.9h0m0 0.3h0m0 2.9h0m0 1.7h0m0 9.7h0m0 10.9h0m0.1-17.8h0m0.1-8h0m0 2.3h0m0 4.7h0m0 14.2h0m0 0.4h0m0 76.2h0m0.1-100.8h0m0 7.6h0m0 9.1h0m0 8.3h0m0 62.6h0m0 28.6h0m0.1-119h0m0 28.3h0m0.1 81.8h0m0 8.6h0m0.1-109.5h0m0 10.6h0m0 11.1h0m0 64.1h0m0.1-3.3h0m0.1 24.8h0m0.1-16.4h0m0 5.6h0m0.1-7h0m0.1-1.5h0m0.3 3.5h0m0.1 15.4h0m0.2-11.8h0m0 1.5h0m0.1-13.2h0m0 16.6h0m0.1-19.5h0m0.1 24.6h0m0.1-24.4h0m0 0.4h0m0 1.4h0m0 16h0m0.1-105.1h0m0 88h0m0.1-67.4h0m0.1 66.9h0m0 16.2h0m0 15.7h0m0.2-26.8h0m0 7.7h0m0.1 6.3h0m0 2.4h0m0.2-18.9h0m0.1-1.7h0m0 5.4h0m0.1-6.4h0m0.2 18.9h0m0.1-9.1h0m0.1 13.4h0m0.2-83.6h0m0 62h0m0 21.9h0m0.2-87.7h0m0.1 65.6h0m0 2.2h0m0 14.4h0m0.1-16.6h0m0 0.8h0m0 19.6h0m0 3.7h0m0.1-24.5h0m0.1 3.3h0m0 0.1h0m0 2.6h0m0 5.5h0m0.1-80.8h0m0 70.2h0m0 0h0m0.1 5.1h0m0.1-7.3h0m0 4.2h0m0 2.2h0m0 2.8h0m0 9.9h0m0 3.8h0m0 4.9h0m0.1-25.6h0m0.2-0.8h0m0 6.3h0m0.1 3h0m0 8.3h0m0.1-14.2h0m0 5.9h0m0 5.8h0m0 8.8h0m0.2-12.4h0m0 0.5h0m0 1.7h0m0 2.5h0m0.1-76h0m0 64.2h0m0.1 28.3h0m0.1-26h0m0.1-2.9h0m0 10.7h0m0 20.5h0m0.1-95.8h0m0 62.4h0m0 8.2h0m0 6.6h0m0.1-82.1h0m0 65.3h0m0.2 10h0m0.2-2.5h0m0.1-68.1h0m0 76h0m0 14.9h0m0.1-94.2h0m0 64.5h0m0 0.3h0m0.1 0.4h0m0 7.5h0m0 26.1h0m0.1-99.9h0m0 67h0m0.3 7.7h0m0.1-9.4h0m0.1 15.2h0m0.1-85.5h0m0 73h0m0.3-4h0m0.1-68.8h0m0 84.4h0m0 0.7h0m0.1-77.9h0m0.2 76.6h0m0.1-100.5h0m0 85.3h0m0 19.1h0m0.1-17.1h0m0 18.4h0m0.1-78.2h0m0 65h0m0 0.6h0m0 17.6h0m0.1-25.5h0m0 12.8h0m0 2.7h0m0.1-13.4h0m0.1-81.1h0m0 92.8h0m0.2-5.6h0m0.1-3.5h0m0 12.6h0m0.1-77h0m0.3-11.9h0m0.1 80.9h0m0.1 9.7h0m0.1-2.4h0m0.1-74.7h0m0 59.6h0m0 6.7h0m0.1-67.7h0m0.2 70.6h0m0 1.8h0m0.1-12.1h0m0.1 5.8h0m0.2-2.4h0m0 0.5h0m0.4-74.6h0m0.2-7.8h0m0 84.7h0m0 1.1h0m0 5.3h0m0 0.6h0m0.1-101.4h0m0 88h0m0.1-92.1h0m0 8.1h0m0 8h0m0 3.6h0m0 6.2h0m0 6h0m0.1-17.6h0m0 10.8h0m0 74.8h0m0 28.2h0m0.1-100h0m0 63.6h0m0 3.3h0m0 1.5h0m0.1-75.4h0m0 0.5h0m0.1-11.5h0m0 85.5h0m0 2.2h0m0.1 6.3h0m0 11h0m0.2-6.8h0m0.2-86.7h0m0.1 11.7h0m0 63.8h0m0.3-4.2h0m0 22.7h0m0.1-11.1h0m0.2-2.4h0m0 4.4h0m0.2-13h0m0 1.1h0m0 1.2h0m0 5.2h0m0.2 9.5h0m0.1-9.8h0m0.1-6.2h0m0 5.7h0m0.1 13.8h0m0.1-85h0m0.1 66.6h0m0 0.1h0m0.2 1.7h0m0 3.9h0m0 1h0m0.1 6.9h0m0 0.5h0m0.1-16.7h0m0 5.9h0m0.2-5.1h0m0.1 8.5h0m0.1-2.3h0m0 7.9h0m0 10.9h0m0 2.7h0m0.1-9.9h0m0 0.5h0m0 2.5h0m0.1-2.5h0m0.2-3.7h0m0.2-102.1h0m0 86.7h0m0 21.5h0m0 4.6h0m0 5.6h0m0 1.5h0m0.1-92.4h0m0 64.5h0m0 0.7h0m0 5.4h0m0 2h0m0 3.3h0m0 8.2h0m0.1-104.4h0m0 82.3h0m0 7.2h0m0.1-0.6h0m0 8.8h0m0.1-16.7h0m0 30.7h0m0.1-95.6h0m0 72.7h0m0 7.7h0m0 8.7h0m0 4h0m0.1-24.7h0m0 16.6h0m0.1-4.2h0m0.1-8.2h0m0 3.1h0m0 2.2h0m0 15.9h0m0.1-25.8h0m0 19.4h0m0 7h0m0.1-95h0m0 68h0m0 8h0m0 2.9h0m0.1-10.9h0m0.1 14.2h0m0 3.1h0m0.1-16.5h0m0 11.8h0m0.1-13.5h0m0 8.7h0m0.1-9.7h0m0.1 2h0m0 4.9h0m0.2 18h0m0.2-15.1h0m0.1-12.6h0m0 18.1h0m0.1-0.6h0m0.1-14.2h0m0 24.8h0m0.1-13.3h0m0.1-13.9h0m0 16.3h0m0.1-14.7h0m0 14.6h0m0.1-17.4h0m0.1 28.7h0m0.1-8.3h0m0.2-20.4h0m0 1.9h0m0 19.1h0m0.2-18h0m0 7.9h0m0 22.1h0m0 5.7h0m0.1-2.8h0m0.3-36.3h0m0.5 22.1h0m0.2-8.8h0m0.1 6.7h0m0.2-17.6h0m0.1 3.8h0m0.1-5.1h0m0 5h0m0.1-64h0m0.3 69.8h0m0.1-76.4h0m0 5.9h0m0 64.4h0m0 18.8h0m0.6-23.1h0m0.1 19.5h0m0.1-13.8h0m0.1 17.1h0m0.3-17h0m0.1 12.2h0m0.3 2.5h0m0.1-18.3h0m0 1.1h0m0.1 3.9h0m0.1-8.6h0m0 6.9h0m0.1 7.6h0m0.3-7.6h0m0.3-2.7h0m0 12.7h0m0.3-77h0m0 0.8h0m0.1 59.9h0m0 2.4h0m0.1-2.1h0m0.1-0.7h0m0 3.2h0m0 1.1h0m0 10.8h0m0.3-12.4h0m0.1 5.1h0m0 5.1h0m0.2 17.9h0m0.1-30.8h0m0 7.1h0m0 20.5h0m0.4-18.8h0m0 22.4h0m0.1-27.8h0m0 3.4h0m0.1 8.4h0m0.3-4.8h0m0.2 7.3h0m0.2-8.1h0m0 1.1h0m0.1 1.3h0m0 2.5h0m0 12.2h0m0.1-16.2h0m0 4h0m0 3.3h0m0.1-90.6h0m0 9.7h0m0 67.7h0m0 7.2h0m0.1-7.9h0m0 2.5h0m0.1 16.5h0m0 5.4h0m0.1-14h0m0 9.7h0m0 8.9h0m0.1-112.3h0m0 80.8h0m0 6.2h0m0 7.7h0m0.1-73.8h0m0 60.8h0m0 27.9h0m0.1-19.5h0m0 9h0m0.1-14.6h0m0 10.1h0m0.1-11.9h0m0 9.2h0m0 4.5h0m0.1-15h0m0 4.8h0m0.1-5.1h0m0 22.7h0m0.1-23h0m0 16.1h0m0 8.8h0m0.2-26h0m0 2.2h0m0.1-1.4h0m0 7.6h0m0 4.4h0m0 7.7h0m0.1-17.7h0m0 12.4h0m0 0.3h0m0.1 17.2h0m0.1-28.1h0m0 2.4h0m0.1-3.1h0m0.1 1.5h0m0.1-2h0m0 31.4h0m0.1-23.6h0m0 7.9h0m0 7.1h0m0 8.8h0m0.2-31.7h0m0.1 2.6h0m0.1 21.9h0m0.1-91.2h0m0 65.6h0m0 23.8h0m0.1-9.7h0m0.3-15.8h0m0.1-0.5h0m0 22h0m0.1-18.5h0m0 7.7h0m0 0h0m0 5.2h0m0.2-12.3h0m0.1 28.1h0m0.1-22.3h0m0.1-3.1h0m0.1-4.9h0m0.1-1.8h0m0 1.1h0m0.1 1.2h0m0.1-83.9h0m0.1-2.8h0m0 5.2h0m0.1-7.2h0m0 20h0m0 66.6h0m0.1-86.6h0m0 97.7h0m0 4.8h0m0.1-105.1h0m0 10.4h0m0 18.3h0m0 0.1h0m0 67.4h0m0.1-74h0m0 72.6h0m0 2.7h0m0 26h0m0.1-111.1h0m0 7.4h0m0 0h0m0 2.3h0m0.1-7.9h0m0 1.7h0m0 11.7h0m0 2.8h0m0.1-33.7h0m0 18h0m0 13.3h0m0.1-14.6h0m0 5.4h0m0 8.5h0m0 1.7h0m0 60.4h0m0 5.9h0m0 5.5h0m0.1-76.7h0m0.1-11.2h0m0 0.1h0m0 88.2h0m0.1-102.2h0m0 0.2h0m0 11.6h0m0 1.3h0m0 83.1h0m0.1-97.1h0m0 29.3h0m0.1-23.7h0m0 3.4h0m0 5.4h0m0 15.7h0m0.1-26.7h0m0 10.3h0m0 4.3h0m0 73.2h0m0 8.3h0m0 16.2h0m0.1-102.7h0m0 15.2h0m0 68.2h0m0.1-68h0m0 76.8h0m0 3.9h0m0 4.4h0m0 5.7h0m0 3h0m0.3-28h0m0 2h0m0.2-73h0m0 103.6h0m0.1-24.7h0m0.1-82.1h0m0 86.4h0m0 10.5h0m0.1-26h0m0 7.7h0m0.2 1.9h0m0.1 10.1h0m0.1-6.9h0m0.2-72.5h0m0 75.1h0m0.1-78.3h0m0.2 64.6h0m0 4.2h0m0.1 0h0m0.1 9.9h0m0.2-9h0m0.1-4.2h0m0.2-3.4h0m0.3-62.1h0m0 81h0m0.1-81.9h0m0 76.2h0m0.1-80.9h0m0 4.9h0m0 1.4h0m0 61.4h0m0.2 0.2h0m0 0.4h0m0 10.3h0m0.2 19h0m0.1-27.2h0m0 19.5h0m0.1-86.2h0m0.1 71h0m0.2-68h0m0 62.6h0m0.3 4.4h0m0.1 1.4h0m0 3.5h0m0.1-10.3h0m0.3 17.2h0m0.1-79.5h0m0 68.2h0m0 4.3h0m0.1-7.2h0m0 10.1h0m0.2-3h0m0 3.2h0m0.2-7.8h0m0 22.5h0m0.1-94.9h0m0 97.2h0m0.1-25.2h0m0.1 3.1h0m0 3.5h0m0.1-77.3h0m0.1 65.3h0m0 7.9h0m0 2.3h0m0.1-72.5h0m0 67.2h0m0 3.2h0m0 24.3h0m0.1-95.8h0m0 82.8h0m0 12h0m0.2-2.2h0m0.1-20.9h0m0.1 24.9h0m0.1-3.5h0m0.1-27.9h0m0.2 28.7h0m0 7.7h0m0.1-33.8h0m0 18.3h0m0.4 13.7h0m0 0.1h0m0.1-21.2h0m0 5.6h0m0.2 2.5h0m0.1-21.2h0m0.2-77.3h0m0 14.3h0m0 88.3h0m0.1-99.8h0m0.1 89.3h0m0.1-15.6h0m0 36.8h0m0.1-10.2h0m0 9.3h0m0.1-112.2h0m0 2.1h0m0 12h0m0.1-31h0m0 30.7h0m0.1-24.5h0m0 7.5h0m0 12.1h0m0 4.1h0m0 0.6h0m0.1-30h0m0 30.2h0m0.1-0.8h0m0 73.5h0m0.4-7.3h0m0.4-4.2h0m0.2 3.4h0m0.6 6h0m0.5-2.7h0m0 1.2h0m0 0.8h0m0.3-1.2h0m0.2-7.3h0m0.2-77h0m0.3 91.3h0m0.5-13.8h0m0 1.1h0m0.3 5.6h0m0.7-65.4h0m0.2 57.7h0m0 1h0m0 2.2h0m0.3-86.1h0m0 21.5h0m0.1 74h0m0.1-79h0m0.1 70.1h0m0.1-1.8h0m0.1 4.8h0m0 21.2h0m0.4-11.4h0m0.2-11.6h0m0.2 8.6h0m0 0.3h0m0 1.5h0m0.1-5.8h0m0 21.3h0m0.1-91.4h0m0 2.8h0m0 70.6h0m0.1-10.2h0m0 11.9h0m0.1-10.6h0m0 17.8h0m0.1-100.6h0m0 93.7h0m0 4.1h0m0.1-19h0m0 11.7h0m0 21.9h0m0.2-21.5h0m0.1-10.7h0m0 3.6h0m0 3.2h0m0 24.8h0m0.1-23.2h0m0.1 6.9h0m0.1 3.2h0m0 2.7h0m0 12.5h0m0.1-34.2h0m0 26.3h0m0.1-23.8h0m0 26.3h0m0 2.1h0m0 2.5h0m0.1-92.2h0m0 72.1h0m0 8.9h0m0.1-17.3h0m0 0.5h0m0 12.9h0m0 4.3h0m0 7.6h0m0.1-24.2h0m0 12.8h0m0.1-16.5h0m0 13.9h0m0 8.5h0m0.1-24.3h0m0 10.5h0m0 4.1h0m0 16.4h0m0.1-1h0m0.1-29h0m0 3.7h0m0.1-5.8h0m0 2.9h0m0 6h0m0 13.5h0m0 3.7h0m0 3.1h0m0.1-28.3h0m0 4.5h0m0 16.5h0m0 10.5h0m0 3.9h0m0.1-34.7h0m0 3h0m0 14.9h0m0.1-15.3h0m0 4.5h0m0.1-67.1h0m0 59.7h0m0 9.7h0m0 16.6h0m0 1.8h0m0.1-25.3h0m0 6.3h0m0 1.3h0m0 18.2h0m0.1 0.6h0m0.1-6.3h0m0 8.8h0m0 3.3h0m0.1-99.2h0m0 71.3h0m0 3.3h0m0.1-1h0m0 15.6h0m0.1-21.6h0m0.1-4.8h0m0 25.7h0m0 7.6h0m0 3.7h0m0.1-29.4h0m0 1.5h0m0 9.3h0m0.1-79.2h0m0 68.9h0m0 3.2h0m0 8.8h0m0 13.7h0m0.1-31.7h0m0.2 10.4h0m0 4.3h0m0 19.4h0m0.1-8.6h0m0 6.9h0m0.1-29.2h0m0 7.2h0m0 13.3h0m0.1-23.3h0m0 11.2h0m0.1-3.2h0m0 7.8h0m0.3-13.4h0m0.2 2.1h0m0 0.1h0m0 2.2h0m0 0.7h0m0 12.3h0m0.1-18.9h0m0 22.1h0m0 0.3h0m0.1-13.8h0m0 4.5h0m0.1-8.5h0m0 6.6h0m0 11.4h0m0 2.1h0m0.1-98.4h0m0 89.1h0m0 1.1h0m0 8.6h0m0.1-3.7h0m0.1-22.7h0m0 3.6h0m0.1-5.6h0m0.1 6.9h0m0 7.6h0m0 3.4h0m0.2-16.7h0m0 7.4h0m0 0.2h0m0 11.7h0m0.3-20.2h0m0.1-73.1h0m0 74.4h0m0 8.9h0m0.1-8.5h0m0 1.1h0m0.1-0.6h0m0.1 1.9h0m0.1-76.8h0m0.1 13.3h0m0 58.9h0m0 13h0m0 0.2h0m0.1-73.1h0m0.1 61.5h0m0.1 9.8h0m0.2-7.7h0m0.3-66.7h0m0 4.6h0m0 60.2h0m0.4 3.1h0m0.1-4.5h0m0 8.4h0m0 0.9h0m0.1 9.6h0m0 2.4h0m0.1-6.8h0m0.1-11.8h0m0.1 4.2h0m0 4.9h0m0 15.7h0m0.1-27.1h0m0 7.1h0m0 18h0m0.1-9.9h0m0.1-7.7h0m0 20.3h0m0.1-23.7h0m0 3.6h0m0 8.8h0m0 9.4h0m0.1-19.5h0m0 19.5h0m0.1-16.3h0m0 5.1h0m0 0.4h0m0.1-75.6h0m0.1-4.9h0m0 67.2h0m0 20.2h0m0.1-89.3h0m0 68.7h0m0 9.1h0m0 0.7h0m0 2.5h0m0.1-2.6h0m0.2-5.4h0m0 1.3h0m0 0.8h0m0 14.3h0m0.1-82.5h0m0 65.5h0m0 4.2h0m0.1 5.6h0m0.1-13.5h0m0 4.6h0m0 8.4h0m0.1-14.7h0m0 6.9h0m0 0.5h0m0 5.5h0m0.2-11h0m0 0.4h0m0 9.2h0m0 8.1h0m0 0.3h0m0 14.4h0m0.1-33.2h0m0 0.1h0m0 3.4h0m0 7.1h0m0 4.3h0m0 6.5h0m0.1-20.3h0m0 0.6h0m0 3.4h0m0 1h0m0 5.5h0m0.1-9.1h0m0 4.9h0m0 24.8h0m0.1-100.1h0m0 2.3h0m0 3.2h0m0 3.1h0m0 62.4h0m0 1.2h0m0 3.2h0m0 1.6h0m0 22.3h0m0.1-25.1h0m0 2.4h0m0.1-90.8h0m0 81.6h0m0 6.1h0m0 11.1h0m0 18.9h0m0.1-104.9h0m0 69.5h0m0 4.7h0m0 7.2h0m0 1.3h0m0 7.7h0m0 5.7h0m0 5.3h0m0.1-32.9h0m0 2.3h0m0 0.2h0m0 1.1h0m0 3.5h0m0 2h0m0 1.9h0m0 6h0m0 0.1h0m0.1-100.5h0m0 5.4h0m0 9.8h0m0 68.5h0m0 2.7h0m0 2.4h0m0 3.2h0m0 5.7h0m0.1-12.3h0m0 0.7h0m0 9.9h0m0 0.5h0m0 2.1h0m0 4.6h0m0 4.1h0m0 3.9h0m0.1-96.2h0m0 69.5h0m0 1.5h0m0 10.3h0m0 6.4h0m0 6.3h0m0 10.8h0m0 4.1h0m0.1-40.3h0m0 3.1h0m0 4h0m0 2.7h0m0 14.3h0m0 6.2h0m0.1-26.9h0m0 0.1h0m0 11h0m0 2.7h0m0 5.4h0m0 5.4h0m0 2.8h0m0 2.2h0m0 5.9h0m0.1-39.7h0m0 4.7h0m0 5.9h0m0 0.3h0m0.1-90.8h0m0 1.6h0m0 10.6h0m0 70.1h0m0 2.8h0m0 4.3h0m0 1.6h0m0 6.6h0m0 14.7h0m0 2.9h0m0.1-22.6h0m0 13.4h0m0 6.9h0m0 4h0m0.1-34.3h0m0 2.7h0m0 4.5h0m0 1.8h0m0 13.5h0m0 4.8h0m0 6.5h0m0.1-101.8h0m0 68.6h0m0 7.9h0m0 25.4h0m0.1-99.7h0m0 64.9h0m0 2.7h0m0 1.1h0m0 1.2h0m0 23.1h0m0.1-28.4h0m0 2.1h0m0 11.9h0m0.1-15.7h0m0 6.9h0m0 3.6h0m0 4.5h0m0.1 0.2h0m0 5.5h0m0 3.9h0m0.1-23.5h0m0 5h0m0 3.8h0m0 7.1h0m0 19.2h0m0.1-34.5h0m0 2.1h0m0 2.5h0m0 1.3h0m0 0.8h0m0 4.3h0m0 7.4h0m0 10.8h0m0.1-26.5h0m0 3.2h0m0 6h0m0 0.4h0m0 3.3h0m0 1.4h0m0 0.5h0m0.1-13.3h0m0 10.1h0m0 8.5h0m0 1.8h0m0 3.6h0m0.1-87.7h0m0 58.9h0m0 28.4h0m0.1-27.8h0m0 3.5h0m0.1 11.3h0m0 0.8h0m0 1.8h0m0 6.5h0m0.1-12.1h0m0 3.5h0m0 4.1h0m0 2.5h0m0.2-83.7h0m0 71h0m0 8.5h0m0.1-17.7h0m0 32.4h0m0 1.7h0m0.1-102.2h0m0 68.5h0m0 29.7h0m0.1-14.7h0m0 4.3h0m0.1-19.3h0m0 5h0m0.1-65.1h0m0 65.9h0m0 5h0m0 1.3h0m0 11.4h0m0.1-24h0m0 1.8h0m0 7.6h0m0.1-9.6h0m0 10.6h0m0 1.2h0m0 6.1h0m0.1-17.8h0m0 6h0m0 2.1h0m0.1-6.4h0m0 11.1h0m0.1-2.4h0m0.1-5.3h0m0 1.5h0m0 10.7h0m0.1-10.5h0m0 19.2h0m0.1-20.3h0m0 6.1h0m0 8.6h0m0.1-20.5h0m0.1-0.2h0m0 7.7h0m0 10.6h0m0.1-81h0m0 73.5h0m0 2.1h0m0 5.3h0m0 2.1h0m0.1-19.2h0m0 13h0m0 0.9h0m0.1-12.7h0m0 4.1h0m0 3h0m0.1-7.6h0m0 0.6h0m0 8.4h0m0 3.2h0m0 17.3h0m0.1-9.9h0m0.1-9.3h0m0 17h0m0.1-29.8h0m0 2.1h0m0 10.9h0m0 1.1h0m0.1-6.5h0m0 9.2h0m0.3-85.7h0m0 81.3h0m0.7-7h0m0.1-65.3h0m0.2 59.8h0m0 8.7h0m0.1-5.1h0m0.1-61.5h0m0.1 60.5h0m0.2-0.7h0m0 2.3h0m0.1-64h0m0.2-12.7h0m0 73.6h0m0.1-64.2h0m0.1 77.4h0m0.6-73.1h0m0.4-26.7h0m0 25.7h0m0.1-28.2h0m0 29.5h0m0.4-3.2h0m0.1-27.7h0m0.2 20.4h0m0.1-20.7h0m0 4.9h0m0 6.8h0m0.1 14.2h0m0 3.8h0m0 1.3h0m0 58.9h0m0.1-86.9h0m0 5.9h0m0 4.8h0m0 3h0m0 5.5h0m0.1 0.9h0m0 6.7h0m0.1-22.9h0m0 3.4h0m0 6.1h0m0 0.1h0m0 6.9h0m0 3.6h0m0 62.5h0m0.1-83.9h0m0 11.8h0m0 11.5h0m0.1-28h0m0 5.7h0m0 19.4h0m0 0.2h0m0 4.9h0m0 61.4h0m0.1-94.7h0m0 10.7h0m0 11.2h0m0 2.6h0m0 7.5h0m0.1-9.5h0m0 4.6h0m0 1.6h0m0.1-21.2h0m0 5.7h0m0 5.9h0m0 5.4h0m0.1 0.4h0m0 2.8h0m0 3.3h0m0.1-24.4h0m0 25.8h0m0.1-10.2h0m0.1-5.1h0m0 8.4h0m0.1-12.3h0m0.1-3.7h0m0.1 1.5h0m0 5.1h0m0 11.6h0m0.1-19.8h0m0.1 89.3h0m0.1-76.9h0m0 1.1h0m0 8.5h0m0 2.8h0m0.1-25.7h0m0 12.4h0m0 4.6h0m0 2.3h0m0 4h0m0.1-0.1h0m0 71.6h0m0.1-89.9h0m0 13.7h0m0.2-5h0m0.1 10.7h0m0.1 63.3h0m0.1-0.7h0m0.3 1.1h0m0 14.6h0m0.1-93.6h0m0.1 76.9h0m0 9.5h0m0.1-6.9h0m0.1 1.5h0m0 1.7h0m0.1-65.3h0m0 68h0m0 19.2h0m0.1-88.8h0m0.1 75.5h0m0 2.3h0m0.1-17.6h0m0 1.6h0m0 2.4h0m0 7h0m0.2-5.1h0m0.4-6.2h0m0 2h0m0.2-70.1h0m0 2.6h0m0.3-21.4h0m0.1 87.2h0m0.1 1.4h0m0.2 5h0m0.1-78h0m0 7.7h0m0.4 68.6h0m0 0.4h0m0.1 2h0m0.1-0.9h0m0.1-70.6h0m0.1 71.1h0m0 2.3h0m0 4h0m0 9.8h0m0.1-8.3h0m0.2-12h0m0.2-2.7h0m0 1.5h0m0.1-1.3h0m0 0.1h0m0 3.6h0m0.1-3.9h0m0 20.8h0m0 5.2h0m0.6-18.8h0m0.6-6.2h0m0.3-60.5h0m0.2-2h0m1.3 67.5h0m0.1-4.8h0m0 2.1h0m0 12.2h0m0 2.7h0m0.1-17.6h0m0.3 22.5h0m0 2.4h0m0.1-19.8h0m0 3.1h0m0.1-1.2h0m0 11.2h0m0.1-12.6h0m0.1-2.3h0m0 1.9h0m0 18.2h0m0.1-21.1h0m0.4 2h0m0.1 18.1h0m0.1-88.9h0m0 2h0m0.2-9.6h0m0 16.9h0m0 58.9h0m0 6.8h0m0.2-67.1h0m0.1-3h0m0.2-7.9h0m0 11h0m0.2-19.5h0m0 9.2h0m0 1h0m0.1 7.8h0m0 0.7h0m0.1-14.7h0m0 82.3h0m0.1-100.7h0m0 5.1h0m0 7h0m0 14.8h0m0 5.4h0m0 72.3h0m0.1-12.4h0m0 22.4h0m0 1.9h0m0.1-103.8h0m0 93.2h0m0.1-104.5h0m0 0.2h0m0 26.3h0m0.1 8.5h0m0.2-9.2h0m0 70.9h0m0 12.6h0m0.2-4.2h0m0.1-12.5h0m0.1 1.9h0m0 1.8h0m0.1 0.4h0m0 3.6h0m0.1 7.5h0m0.9-16h0m0.2-1h0m0.4 1h0m0.1-1h0m0.2-58.6h0m0 59.2h0m0.3-70.5h0m0.1 4.5h0m0.4-2.8h0m0.1-0.5h0m0.7 71.7h0m0 1.6h0m0.1-1.5h0m0 5.1h0m0.4-7.3h0m0 8.5h0m0.4-68h0m0 60.9h0m0 10.6h0m0 0.6h0m0.1-9.3h0m0 5.9h0m0 6h0m0.1-16.2h0m0 4.1h0m0 2.9h0m0 0.1h0m0 8h0m0.1-10h0m0 9.9h0m0.1-11.4h0m0 28.2h0m0.2-32.3h0m0 1h0m0 16.8h0m0.5-99.1h0m0.1 18.4h0m0.1-3.1h0m0.1-25.6h0m0 6.3h0m0 1h0m0 87.8h0m0.1-94.5h0m0 3h0m0 25h0m0 79.5h0m0.1-96.8h0m0 0.1h0m0.1 0.3h0m0 18.4h0m0 66.7h0m0 3.1h0m0.3-4.7h0m0.4 0.9h0m0.1-67.5h0m0.2 64.3h0m0.2-62h0m0.1 61.1h0m0.2 1.1h0m0.1-79.4h0m0 85.9h0m0 15.2h0m0.1 0.2h0m0.1-86.6h0m0.1 64.2h0m0.2-67.7h0m0.1 8.6h0m0.1-21.3h0m0.2 1.5h0m0.1 7.3h0m0 78.4h0m0.1 0.5h0m0 1.1h0m0.1-79.5h0m0 10.1h0m0 61h0m0.1-88.9h0m0 88.5h0m0.2 0.6h0m0.1 25.3h0m0.1-25.9h0m0.1 15.8h0m0.2-11.7h0m0 6.6h0m0.1-73.4h0m0.2 77.9h0m0.1-13.7h0m0.1-88.4h0m0 96.2h0m0 15.5h0m0.1-15.8h0m0.1-8.3h0m0 22.4h0m0.1-16.9h0m0.1-1.5h0m0.1-2h0m0 21.3h0m0.2-1.7h0m0.1-21.6h0m0 28.6h0m0.1-92.3h0m0.1 63.5h0m0 5.4h0m0.1-2.3h0m0 7.1h0m0.5-11.1h0m0 1.1h0m0 5.2h0m0 3.8h0m0 3.8h0m0 7.5h0m0.1-15.8h0m0.3-4.3h0m1.1-1h0m0.4 0.3h0m0.7 3.1h0m0.6-61.7h0m0 61.6h0m0.2 4.1h0m0 14.8h0m0.2-21h0m0 17.1h0m0.1 5.3h0m0.5-12.8h0m0.1-6.7h0m0.1-85h0m0.2 22.4h0m0 59.7h0m0.1-74.8h0m0.2 79.3h0m0.1-3.5h0m0.2-87h0m0.2 6.4h0m0 12.4h0m0.1-12.4h0m0.1-6.3h0m0 9.3h0m0 7.7h0m0 67.6h0m0.1-86.5h0m0 1.9h0m0 0.3h0m0.1-1h0m0 17.2h0m0 4.3h0m0 64.9h0m0 6.5h0m0.1-81.5h0m0 2.3h0m0 3.6h0m0 2.2h0m0 5.5h0m0.1-9.3h0m0 3.2h0m0 1.7h0m0 3.2h0m0.1-29.8h0m0 30.2h0m0.1-26.4h0m0 6.8h0m0 0.4h0m0 15.9h0m0 7.2h0m0 64.1h0m0.2-95.3h0m0 88.4h0m0.1-83.8h0m0 14.2h0m0 0.6h0m0 1.4h0m0 8.3h0m0.1-12.6h0m0 11.4h0m0 69h0m0.1-100.5h0m0 8.2h0m0 6.8h0m0 9.4h0m0 4.4h0m0.1-12.3h0m0 82.4h0m0 0.3h0m0.1-82.3h0m0 5.2h0m0 9.6h0m0 63.7h0m0.1-87.2h0m0.1 1.7h0m0 11.9h0m0.1-4.7h0m0 10.2h0m0 98.6h0m0.2-95.3h0m0 63.1h0m0.1-92.8h0m0 23.7h0m0 0.5h0m0 5.7h0m0.1-22.1h0m0 0.2h0m0 17.1h0m0.1 6.5h0m0 0.2h0m0 71.7h0m0.1-96.3h0m0 9.4h0m0 2.6h0m0 12.2h0m0 82.9h0m0.2-107.9h0m0 19.7h0m0 68.5h0m0 0.6h0m0.1-63.9h0m0 71.5h0m0.1-100.6h0m0 91.4h0m0.1 4.9h0m0 15.8h0m0.1-19.6h0m0 28.1h0m0.1-118.4h0m0 21.2h0m0 6.4h0m0 61.4h0m0.1-0.8h0m0 12.8h0m0.1-2.8h0m0 7.9h0m0.1-11.9h0m0.1-4h0m0 6.3h0m0 9.7h0m0.1-14.7h0m0 3.3h0m0 13h0m0.1-82h0m0.1 72.5h0m0.1-3.1h0m0.2-7.2h0m0.3 5.8h0m0.2-76.5h0m0.3 11.4h0m0 1.8h0m0 60.2h0m0.1 3.5h0m0 1.2h0m0.1-81.9h0m0 82.6h0m0.1-64.8h0m0 58h0m0 31.6h0m0.1-115.4h0m0 83.5h0m0 9.1h0m0.1-76h0m0 67.9h0m0.1-93.9h0m0.3 93.6h0m0.1-68h0m0 79.8h0m0.1-77.8h0m0 63.6h0m0 9.6h0m0 13.3h0m0.1-9.9h0m0.2-5.5h0m0.3-1.3h0m0 6.2h0m0.1-11.1h0m0.1-0.7h0m0 18.6h0m0.3-19.3h0m0 12.9h0m0 3.7h0m0.1-6.3h0m0.2 0.7h0m0.4-10.7h0m0.4 11.5h0m0.1 2.2h0m0.1-9.6h0m0.2-4.7h0m0.2 14.5h0m0.2-14.7h0m0.3 4.9h0m0.1-4.4h0m0.1-59.4h0m0.1-13.1h0m0.1 13.2h0m0 58.8h0m0 4h0m0.2 8.1h0m0.1 6.7h0m0.1-19.2h0m0 6.7h0m0 6h0m0.1-70.9h0m0 63.3h0m0 3.7h0m0.1 4.9h0m0.2-10.8h0m0 7.6h0m0 5.7h0m0.1 12.3h0m0.1-18.6h0m0.1 7.9h0m0 0.3h0m0.1-77h0m0 60h0m0.1 2.2h0m0.1-72.8h0m0 86.2h0m0.1-5.6h0m0.1-8h0m0 8.8h0m0 2.3h0m0.1-10.1h0m0.1-0.1h0m0.1-1.8h0m0.4 16.3h0m0.2-13.5h0m0 10h0m0.2-8.4h0m0.1 0h0m0.1-5.5h0m0.2 3.3h0m0 0.1h0m0.1-68.5h0m0 64.9h0m0.1-0.3h0m0 5.4h0m0.2-6.1h0m0.4 5.3h0m0.2-3.7h0m0.1-0.2h0m0.8-82.4h0m0.1 8.3h0m0 74.7h0m0 5.2h0m0.1-5.3h0m0 5.3h0m0.2-76h0m0 2.6h0m0 4.6h0m0.1 72.7h0m0 4.2h0m0.1-101.1h0m0 103.2h0m0.1-75.9h0m0.2 78.4h0m0.1-8h0m0.2-1.3h0m0.1-84.7h0m0 76.1h0m0 0.4h0m0.2 10.1h0m0.2-73.9h0m0.1 64.7h0m0 5.4h0m0 4h0m0.1-11.4h0m0 13.6h0m0.3 5.3h0m0.1-10.3h0m0 3.4h0m0 16h0m0.1-28.5h0m0 8.6h0m0 13.7h0m0.1-83.2h0m0 73h0m0 7.6h0m0 1.1h0m0 4.4h0m0.1-26h0m0 0.7h0m0 35.6h0m0.1-31.6h0m0 10.5h0m0.1-12.5h0m0 2.6h0m0 4.1h0m0.1-8.2h0m0 9.3h0m0.1-9h0m0.1 1.3h0m0 7.4h0m0 0.6h0m0 14.5h0m0.1-15.7h0m0.2-2.6h0m0.2 3.4h0m0.1-7.7h0m0.2 25.6h0m0.1-25.9h0m0.2 4.6h0m0.3 8.8h0m0.4-11.8h0m0 5.2h0m0.1-79.4h0m0.1 84.3h0m0.1-82h0m0 71.9h0m0 5.1h0m0.2-8.8h0m0 26.4h0m0 0.1h0m0.2-26.7h0m0 0h0m0 8.1h0m0.1-1h0m0 2.2h0m0 8.6h0m0.1-13h0m0 1.5h0m0 6.5h0m0.1-76.1h0m0 70.3h0m0 0.7h0m0.3-4.5h0m0 6.3h0m0 7h0m0 7.8h0m0.1-2.8h0m0.1-16h0m0 4.8h0m0 13.4h0m0.1-20.3h0m0.1-2.1h0m0 0.7h0m0.1-2h0m0 16.6h0m0.1-85.9h0m0 79.6h0m0 0.4h0m0 1.7h0m0 20.7h0m0.1-27.8h0m0.1-3.9h0m0.1 12.4h0m0.1-13.4h0m0 26.9h0m0.4-98.2h0m0.1 71h0m0 3h0m0.2-62.4h0m0.1-18.1h0m0 4.2h0m0 86.7h0m0.1-88.8h0m0.1 5.2h0m0 73.3h0m0.1-64.3h0m0 61.6h0m0 16h0m0.1-74.5h0m0.1-19.3h0m0 11.9h0m0.2 67h0m0 15h0m0.1-79.2h0m0.2 70.8h0m0 1.7h0m0.1 22.4h0m0.1-24.3h0m0.2-6.4h0m0.1 3h0m0.8 0.7h0m0 3.4h0m0.1-8.8h0m0.1-67.2h0m0 6.3h0m0.2 62.8h0m0.1 11.8h0m0.1-3.1h0m0.1 1.3h0m0.1-79.9h0m0 70.8h0m0.1 3.1h0m0.1 2.1h0m0 3.2h0m0.2-4.9h0m0 7h0m0 4.1h0m0.1-12h0m0.2-4.3h0m0 7.9h0m0.1-67.4h0m0 72.1h0m0.1 4.3h0m0.3-77.8h0m0 68.3h0m0 5.3h0m0.1-1.1h0m0.1-2.7h0m0 6.5h0m0 9.1h0m0.1-23.3h0m0.1 1.4h0m0 21.2h0m0.1-13.4h0m0 6.4h0m0.1-91.3h0m0 77.7h0m0 1.4h0m0.1-1h0m0 4.7h0m0 5.8h0m0 17.4h0m0.1-28.9h0m0 3h0m0 4.1h0m0.1-71.7h0m0 80.1h0m0.2-16.3h0m0 14.4h0m0.3-84.9h0m0.1 67.8h0m0 6.7h0m0.1-3.8h0m0.1-68.5h0m0 6.5h0m0.2-13.8h0m0 79.7h0m0 17.5h0m0.1-104.5h0m0 5.2h0m0 14.7h0m0 71.4h0m0.1-90.7h0m0.1 14.7h0m0 2h0m0 3.8h0m0.1-10.6h0m0 5h0m0.1-27.1h0m0 9.5h0m0 19h0m0.1-25.6h0m0 12h0m0 7.1h0m0 7.6h0m0 64.2h0m0.1-89.9h0m0 15.5h0m0 6.6h0m0.1-22.9h0m0 19.5h0m0 5.1h0m0 2h0m0.2-24.5h0m0.1 0.9h0m0 5.6h0m0 3.1h0m0 12.3h0m0.1-11.6h0m0.2-1.8h0m0 12.1h0m0 70.3h0m0.1-64.5h0m0 71.3h0m0.5 0.1h0m0 21.8h0m0.5-27.2h0m0.3-4.3h0m0.2-64.2h0m0.1 64.3h0m0 5.4h0m0 24.1h0m0.1-23.6h0m0 20.8h0m0.1-20.1h0m0 9.2h0m0.1-11.8h0m0 13.5h0m0 3.2h0m0.1-85.6h0m0 72.3h0m0.1-73.8h0m0.2 88h0m0 4.9h0m0.1-20.8h0m0 3.2h0m0 1.6h0m0 2.3h0m0.1-85.5h0m0 71h0m0 5.8h0m0 4h0m0 14.7h0m0.1-82.5h0m0 88.6h0m0.2-30.3h0m0.1 3.3h0m0 4.8h0m0 0.6h0m0.2 15.2h0m0.1-94.7h0m0 72.2h0m0.1-0.2h0m0 10.4h0m0.1-10.2h0m0 25.6h0m0.1-6.7h0m0.2-19h0m0.4 4.9h0m0.2-5.2h0m0.1 9.2h0m0.1 15.6h0m0.1-25h0m0 5.5h0m0 5.6h0m0 21.6h0m0.1-33.6h0m0 14.8h0m0 3h0m0.1-12.8h0m0 2.5h0m0 0.6h0m0.1-7.9h0m0 21.2h0m0 14.1h0m0.1-32.7h0m0 22.2h0m0.1-21h0m0 0.6h0m0 4h0m0.1 3.2h0m0 2.5h0m0 6.5h0m0 2.6h0m0.1-17.2h0m0 11.6h0m0 0.9h0m0 6.2h0m0 0.1h0m0.1-21.7h0m0 7.8h0m0 1.3h0m0 5.6h0m0 16h0m0.1-31.6h0m0.1 3.6h0m0 10.4h0m0.2-15.3h0m0 7.6h0m0.1-6.1h0m0 11h0m0.1-8.3h0m0 0.1h0m0 1.7h0m0.1-6.2h0m0 1.7h0m0 3.7h0m0 0h0m0.2-1.5h0m0 1.1h0m0.1-6.3h0m0.4 3.7h0m1.2-79.9h0m0.4 5.9h0m0.1 5.9h0m0.1-25h0m0 30.2h0m0.1-16h0m0 13.4h0m0.1-29h0m0 29.3h0m0.1-14.5h0m0 16.8h0m0.1-30.5h0m0.1 7.1h0m0 5.2h0m0 6.7h0m0 12.5h0m0.2-21.4h0m0.1 11.4h0m0.1-21.1h0m0 30h0m0 62.7h0m0.1-93h0m0 32h0m0 63.5h0m0 1.4h0m0.1-93.3h0m0 13.1h0m0 8.3h0m0 3.1h0m0 1.8h0m0 2h0m0.1-32.8h0m0 5.3h0m0 25.3h0m0.1-8.3h0m0 69.4h0m0 3.6h0m0.1-84.1h0m0 15.5h0m0.1-22.3h0m0 5h0m0 10.8h0m0 8.2h0m0 67.9h0m0.1-97.3h0m0 2.4h0m0 15.1h0m0 74.6h0m0 0.1h0m0 10.2h0m0.1-101.9h0m0 0.8h0m0 2.6h0m0.1 91.1h0m0 1.6h0m0.1-94.3h0m0 4.1h0m0 0.1h0m0 4.2h0m0 9.8h0m0 2h0m0 1.7h0m0 4h0m0 80.9h0m0.1-85.4h0m0 3.5h0m0 81.5h0m0.1-87.6h0m0 75h0m0 1.3h0m0.1-80.3h0m0 90.5h0m0.1-103h0m0 24h0m0 0.6h0m0 0.6h0m0 71.2h0m0 2.1h0m0.1-93.5h0m0 91h0m0.1-93.4h0m0 86.5h0m0.1-92.1h0m0 0.5h0m0.1 20.8h0m0 8.7h0m0.1-14.4h0m0 10.2h0m0 4.1h0m0.1-18.4h0m0 16h0m0 98.3h0m0.2-22.3h0m0.1-8.4h0m0.1-2.4h0m0 3.9h0m0 8.8h0m0.3-100.5h0m0 20.7h0m0 3.9h0m0.1-26.1h0m0.1 94.5h0m0.1 0.5h0m0.1-4h0m0.1 9.4h0m0.1-94.5h0m0.6 1h0m0.2 88.1h0m0.1 6.2h0m0.3-73h0m0.2 78.2h0m0.1-18.5h0m0.5 19.6h0m0.1 7.7h0m0.1-27.1h0m0.5 12.5h0m0.1 10.1h0m0.1-16.7h0m0.1-3.7h0m0 20.4h0m0.1-23.2h0m0 11.5h0m0.1-96.9h0m0.1 17.7h0m0 9.9h0m0 63.6h0m0 0.3h0m0.2-2.5h0m0 12.1h0m0.1-1.6h0m0 2.3h0m0.1-96.9h0m0 11.7h0m0 70.8h0m0.3 1.4h0m0.1-71.6h0m0.2-2.2h0m0.2 70h0m0.2 1.6h0m0.1-1.2h0m0.2 20.6h0m0.3-14.6h0m0.3-76.9h0m0 91.1h0m0.1-15.6h0m0.1-72.6h0m0 67.6h0m0 4.4h0m0.1-70.9h0m0 66.5h0m0 11.2h0m0.1-11.7h0m0 2.9h0m0.1-0.6h0m0.1-89.6h0m0.1 21h0m0 1.3h0m0.1 7.3h0m0.2 70.7h0m0.6-11.5h0m0 2.3h0m0.5 7h0m0 19.4h0m0.1-18.7h0m0 15h0m0 10.1h0m0.1-21.8h0m0.1-77.2h0m0 76.4h0m0 16.2h0m0.1-24.9h0m0 22.5h0m0.1-26.9h0m0 1.1h0m0 16.5h0m0 6.2h0m0.2-21.8h0m0 9h0m0 0.4h0m0 4.9h0m0.1 0.7h0m0 15h0m0.1-29.8h0m0 5.1h0m0 2.8h0m0 4h0m0.1-1.6h0m0 10.5h0m0.9-12.4h0m0.3-2.1h0m0.3-6.7h0m0 5.7h0m0.8-8h0m0.4-65h0m0.4 96.1h0m0.1-25.9h0m0 20.4h0m0.1-21h0m0.1-2.2h0m0 16.7h0m0.1-18.3h0m0.2 8.6h0m0.1-6.4h0m0.2-2.3h0m0 0.3h0m0 1.9h0m0.1 2.1h0m0.2 2.5h0m0.1-3.9h0m0 22.7h0m0.1-22h0m0 11.8h0m0 0.3h0m0 5h0m0.1-20.2h0m0.1-0.7h0m0 8.1h0m0.2-5.8h0m0 17.5h0m0.2-102h0m0.2 81.9h0m0.1 6.1h0m0.1-73.1h0m0.2 90h0m0.2-19.4h0m0.1 2.1h0m0 3.7h0m0.3-10.1h0m0.2-58.6h0m0 62.3h0m0.2-3.3h0m0.1-58.4h0m0 63.4h0m0.1-81.6h0m0 6.6h0m0 0.9h0m0.1-22.8h0m0 12h0m0.1 82.2h0m0.1-88.5h0m0 24.1h0m0 63.4h0m0.1-62.7h0m0.1-21.7h0m0 9.1h0m0 0.5h0m0.1 12.2h0m0 60.9h0m0 12.2h0m0.4-7.9h0m0.1 15.2h0m0 7.4h0m0.2-86.5h0m0 63.9h0m0.2-61.8h0m0.1 63.2h0m0.2 15.9h0m0.9-15.4h0m0.1-2.6h0m0.3 5.5h0m0.2-6.6h0m0.1-83.4h0m0 7.2h0m0.2 76.1h0m0 0.2h0m0.1 0.7h0m0.2 10.9h0m0.2-9.6h0m0 12.2h0m0.2-6.5h0m0.2-4.5h0m0 1.2h0m0.1-68.9h0m0 73.6h0m0 1.5h0m0.1-79.9h0m0 0.3h0m0 7.2h0m0 0.3h0m0 60h0m0 17.6h0m0.1-3.4h0m0.1-90.6h0m0 12.4h0m0.1 63.7h0m0.1 3.5h0m0.1 14.8h0m0.1-18.9h0m0 10.3h0m0.1-80.2h0m0.1 11.8h0m0.1 2.5h0m0.4 56.6h0m0 16.4h0m0.1-76h0m0.1 2.3h0m0.2-7h0m0 69.2h0m0.1-75.2h0m0.2 71.3h0m0 4.5h0m0 0.5h0m0.4 0.5h0m0.1-7h0m0 20.3h0m0.1-20.2h0m0.1 19.3h0m0.1-82.9h0m0 63.3h0m0 0h0m0 1.3h0m0 16.6h0m0.1-15.1h0m0 4.2h0m0 3.5h0m0.1-71h0m0 68.8h0m0.1-69.7h0m0 3.4h0m0.1 64.9h0m0.1-6.8h0m0 7.7h0m0 4.4h0m0.2-0.4h0m0 15.3h0m0.1-16.6h0m0 17.6h0m0.1-21.5h0m0 8.7h0m0 0.6h0m0 5.9h0m0.1 1.6h0m0.1-96.4h0m0 9.3h0m0.1 65.3h0m0 4.8h0m0.1 15.6h0m0.1-18.7h0m0 0.4h0m0.1-68.9h0m0 1.7h0m0 80.7h0m0.1-1.8h0m0 14.1h0m0.2-102h0m0 3h0m0.2 74.3h0m0 10.2h0m0.3-84.1h0m0.1 8.3h0m0.1 64.7h0m0.1-77.1h0m0 4.3h0m0 68.5h0m0 1.9h0m0.1-92h0m0 7.9h0m0.1 0.8h0m0 2.9h0m0 1.9h0m0 5.5h0m0 9.3h0m0 5.7h0m0 58.2h0m0 6h0m0.1-64.7h0m0.1-6.3h0m0 3.6h0m0 62.2h0m0.1-2.3h0m0 14h0m0.1-104.7h0m0 9.1h0m0 6.5h0m0 4.7h0m0 76.7h0m0.1-95h0m0 89.5h0m0.1-82.8h0m0 2.9h0m0 10.7h0m0 4h0m0 65.2h0m0 4h0m0.1-92.9h0m0 6.7h0m0 10.8h0m0 9.7h0m0 67.5h0m0 5h0m0 11.4h0m0.1-112.2h0m0 7.1h0m0 4.2h0m0 6h0m0 73h0m0 7.1h0m0.1-94.1h0m0 10.7h0m0 3.9h0m0.1-20.9h0m0 21.3h0m0 5.7h0m0 78.2h0m0.1-104h0m0 11.1h0m0.1-6.4h0m0 2.6h0m0 84.4h0m0 4.7h0m0 5.3h0m0.1-102.8h0m0 107.3h0m0 4.8h0m0 9h0m0.1-99h0m0 3.3h0m0 1h0m0 3.8h0m0 1.4h0m0 66.3h0m0.1-79.5h0m0 8.5h0m0 67.2h0m0.1-91.7h0m0 4.9h0m0 1.2h0m0 2.9h0m0.1-3.3h0m0 0.1h0m0 0.3h0m0 21.6h0m0 1.2h0m0.1-9.4h0m0 2.8h0m0 6.1h0m0 72.5h0m0.1-98.8h0m0 96.4h0m0 0.4h0m0 4h0m0.1-88.7h0m0 14.9h0m0.1 60.9h0m0.1-86h0m0 21.4h0m0.1-18.6h0m0.1 98.1h0m0 17.9h0m0.1-33.3h0m0.1-91.1h0m0 107.6h0m0.1 1.8h0m0.2-80.8h0m0 68.3h0m0 7.1h0m0.3-80.2h0m0.2 74.1h0m0.2 7.5h0m0.4-11.9h0m0.4-61.1h0m0.2 59h0m0.3 2h0m0.1-73.9h0m0 11.3h0m0.2-8.1h0m0.2 69.3h0m0.8 2.2h0m0.4-2.8h0m0 1.1h0m0 2.5h0m0.2 1h0m0.2-70.3h0m0.4 67.4h0m0.5 0.3h0m0.7-1h0m0.2 12.7h0m0.1-5.7h0m0.1 0.3h0m0.2-8.7h0m0 4.4h0m0.2 19.7h0m0.1-24.3h0m0.1 9.1h0m0.1 9.5h0m0 6.9h0m0.1-17.6h0m0.1-4.9h0m0.1 2h0m0 3.4h0m0.1 4.3h0m0 13.8h0m0.1-22.1h0m0.1-66.7h0m0.1 70.5h0m0.1-3.2h0m0.2 4.5h0m0 9h0m0.1-15.2h0m0 8.8h0m0.1-80.4h0m0 73.2h0m0 11.6h0m0.3-11.3h0m0.1 0.2h0m0 0.9h0m0.1 7.9h0m0.1-10.2h0m0 0.3h0m0 0.8h0m0 2.5h0m0.4-77.8h0m0.3 85.6h0m0 4.3h0m0.1-77.6h0m0 67.3h0m0 4.6h0m0.1-74.9h0m0.2 63.1h0m0 1.2h0m0.1-61.2h0m0 62.7h0m0 3.7h0m0 18h0m0.1-108.2h0m0 16.1h0m0 68.9h0m0 5.9h0m0 5.1h0m0 0.8h0m0.1-82.5h0m0 73.1h0m0.1-3.1h0m0.1-60h0m0 59.4h0m0.2-58.1h0m0.2-1.4h0m0 59.2h0m0.1 18h0m0.1-106.2h0m0 105.3h0m0.2-2.4h0m0.1-78.6h0m0 75.6h0m0.2-7.2h0m0.1-6.4h0m0.4 14.3h0m0.4 2.8h0m0.2 5.5h0m0.3-80.8h0m0 58.4h0m0 12.4h0m0.6-10.6h0m0.2-61.6h0m0.1 60h0m0 2.7h0m0.2-2.1h0m0.2 18.8h0m0.1-12.6h0m0.1-0.4h0m0.2-2h0m0 6.3h0m0.1-10.7h0m0.1 5.3h0m0 8.9h0m0 7.3h0m0.2-20.9h0m0.2-62.1h0m0.3 66.7h0m0.4-2.2h0m0 4.4h0m0.4-70.9h0m0.3 64.6h0m0 8h0m0.1-69.7h0m0 63.4h0m0 21.3h0m0.1-84.3h0m0 61.9h0m0.2 1.2h0m0.1 3.3h0m0.1-5.2h0m0 4.7h0m0 5.1h0m0.1-5.2h0m0 3.7h0m0 5.4h0m0.1-13.2h0m0.1 5.7h0m0.1-6.5h0m0 13.6h0m0.1-14.1h0m0 30.7h0m0.1-6.4h0m0.1-5.6h0m0.2-94.9h0m0.1 14.6h0m0 68.5h0m0 4h0m0 13h0m0.1-18h0m0.1-5.7h0m0 5.9h0m0 4.7h0m0 15.4h0m0.1-25.8h0m0.1-63.8h0m0 72.5h0m0 2.7h0m0 9h0m0.1-17.5h0m0 3h0m0 14.2h0m0 7h0m0.1-90.5h0m0.1 65.6h0m0 4.9h0m0.1-75.4h0m0 9.1h0m0 58.7h0m0 4h0m0.1-1.8h0m0 0.1h0m0 8.5h0m0.1-70h0m0 72.6h0m0 19.7h0m0.1-29.3h0m0 4.4h0m0 5.3h0m0.1-79h0m0 7.8h0m0 69.8h0m0.1-0.5h0m0 20.4h0m0.1-25.9h0m0.2-70.7h0m0 66h0m0.1-64.2h0m0 65.1h0m0.2-1.7h0m0.1-63.8h0m0.1 63.7h0m0.2-0.8h0m0.1 2.7h0m0.3 19.2h0m0.7-18.5h0m0.3-2.2h0m0.4-0.2h0m0.2-66.8h0m0.3 80.6h0m0.1-5.8h0m0.2-1.8h0m0.6-6.8h0m0.5-0.1h0m0 11.6h0m0.5-11.2h0m0 5.7h0m0.1-80.9h0m0 5.3h0m0 71.6h0m0.1 4h0m0.1-2.6h0m0.2-92.3h0m0 0.5h0m0 23.8h0m0.1-21.9h0m0 21.3h0m0.3-26h0m0 91.1h0m0.1-83.9h0m0 11.8h0m0 10.6h0m0.1-7h0m0.1-9.2h0m0 10.5h0m0.1-11h0m0 13.7h0m0.2-25h0m0 24.1h0m0.1-9.1h0m0 81.4h0m0.1-1.5h0m0.1-91.4h0m0 20.5h0m0 3.6h0m0.1-28.7h0m0 18.7h0m0 72.6h0m0 7h0m0.1-76.8h0m0.1-11.8h0m0 2.4h0m0 4.7h0m0 14.2h0m0.1-32.3h0m0 14.8h0m0 14.9h0m0 66h0m0.1-85.8h0m0 7.4h0m0 86.3h0m0.1-103.6h0m0 23.8h0m0 7.2h0m0 66.6h0m0.1-97.8h0m0 0h0m0 95.3h0m0.1-87.3h0m0 11.7h0m0 8.1h0m0 0.4h0m0 64.7h0m0 4h0m0.1-91.6h0m0 4.2h0m0 16.7h0m0.1-22.1h0m0 1.6h0m0 98.3h0m0.1-96.9h0m0 5.1h0m0 10.9h0m0 69h0m0 3.8h0m0.1-71.3h0m0 2.4h0m0.1-26.4h0m0 11.5h0m0 18.8h0m0.1-28.2h0m0 11.3h0m0.1-11.1h0m0 3.5h0m0 8.7h0m0.1-3.7h0m0 80.7h0m0.1 4.9h0m0 8.3h0m0 9.6h0m0.1-103h0m0 5.5h0m0 10h0m0 68.6h0m0 1.6h0m0.1-87.3h0m0 20h0m0.1 70.2h0m0 0.4h0m0 14.6h0m0.1-99.5h0m0 17.1h0m0 63.7h0m0 3.7h0m0 12.9h0m0.2-101.4h0m0 84.7h0m0 29h0m0.1-34.2h0m0 23.4h0m0.1-18.3h0m0.2-4.4h0m0 4.5h0m0.1-4.2h0m0 7.7h0m0.1-0.6h0m0 6.5h0m0.2-9.1h0m0.2-1.9h0m0.3 2.6h0m0 11.7h0m0.1-14.2h0m0 19.9h0m0.1-5.5h0m0.1-6.4h0m0.1-8.3h0m0 18.7h0m0 14.2h0m0.2-18.3h0m0.1-15.8h0m0 28.5h0m0.1-18.5h0m0.1-3.4h0m0 0h0m0.1-8.3h0m0 13.3h0m0 8.7h0m0 4.4h0m0.1-18.5h0m0.1-2.7h0m0.1 3.7h0m0.2-3.5h0m0 19h0m0.2-83.3h0m0 70.3h0m0 22.7h0m0.1-93.4h0m0.1 60.9h0m0 1h0m0 8.9h0m0.2-7.4h0m0 16.4h0m0.1-17.8h0m0 18.4h0m0 4.3h0m0.1-25.2h0m0.1 1.6h0m0.1 3.5h0m0.1 21.9h0m0.1-27.1h0m0 0.9h0m0 19.8h0m0.1-19.9h0m0.2-56.3h0m0 56.6h0m0 10.4h0m0.2-89.5h0m0 96.8h0m0.1-76.7h0m0 0.8h0m0 66.1h0m0.1-8.5h0m0 0.3h0m0.1 17.2h0m0.1-101.1h0m0 2.8h0m0.1-8.8h0m0 9.7h0m0 17h0m0 64.5h0m0 0h0m0 8.2h0m0.3-76.8h0m0.2 76.5h0m0.1-5.7h0m0 3.6h0m0.1-66.9h0m0 58.8h0m0 3.3h0m0.1-2.4h0m0 5.8h0m0.3 0.6h0m0.1-66.4h0m0 65.4h0m0.3-5.2h0m0 4.2h0m0 1.1h0m0 18.9h0m0.1-21.8h0m0.2-1.2h0m0 18.2h0m0.3-10.7h0m0.1-82.3h0m0 75.4h0m0.1-1h0m0.1-72.7h0m0 78.9h0m0.2-71.1h0m0.1-22.7h0m0.1 18.5h0m0.3-7h0m0.1 10.6h0m0 65.1h0m0 5.1h0m0.2-4.9h0m0.1 1h0m0.1 3.6h0m0 5.6h0m0 0.3h0m0.1 7.1h0m0.2-94.2h0m0.1 78.3h0m0 0.2h0m0 8.9h0m0.1-71.5h0m0 72.6h0m0 12.2h0m0.1-19.8h0m0 26.1h0m0.1-19.9h0m0.1-72.7h0m0 73.1h0m0.1-102.9h0m0 20h0m0 70.2h0m0 1.2h0m0.1-79.4h0m0 10.2h0m0 72.2h0m0.1-96h0m0 13h0m0 14.7h0m0 65.7h0m0.1-92.2h0m0 6h0m0 4h0m0.1 90.3h0m0.2-95.7h0m0.3 94.4h0m0.1-67.7h0m0 65.3h0m0.1-1.7h0m0 5.3h0m0.1-9.4h0m0 1.6h0m0 5.5h0m0.5-5.7h0m0.2 1.2h0m0.3-1.9h0m0.6 1h0m0.3-60.6h0m0.1 59.1h0m0 7.7h0m0.3-3.4h0m0.2-67.1h0m0.1 62.2h0m0 3.6h0m0.1-69.9h0m0.1 68.9h0m0.1-0.1h0m0 3.8h0m0 13.4h0m0.1-92.8h0m0 7.9h0m0 69.7h0m0.1-67.6h0m0 68.4h0m0.2 6.2h0m0.2 4.4h0m0.4-13.9h0m0.3 1.9h0m0 1.7h0m0 1.4h0m0 6.9h0m0 7.7h0m0.4-82.3h0m0 60.9h0m0.1 3.5h0m0.1-62.8h0m0.2 1.3h0m0 64.7h0m0.1-5.4h0m0.1 10.7h0m0.3 4.9h0m0.1-17.2h0m0.6 1.3h0m0.2 4.4h0m0.1 2.1h0m0.1 2.7h0m0.2-76.3h0m0 71h0m0.3-4.6h0m0.2 6.3h0m0.1-67.3h0m0 61h0m0.5-59.6h0m0.1 60.1h0m0 1.5h0m0.6-1.6h0m0.1-84.2h0m0.1 23.8h0m0.8 65.6h0m0.2 2.7h0m0 8.2h0m0.4-15.6h0m0.2 0h0m0.1-63.6h0m0.1 62.2h0m0.3 5.4h0m0 4.2h0m0.2-2.3h0m0.1-3.9h0m0 30.1h0m0.2-18.2h0m0.7-100.7h0m0.1 89.1h0m0 4.3h0m0.2-74.2h0m0.2 69.3h0m1.2 0.1h0m0.1-1.4h0m0.2-0.3h0m0.2 30.7h0m0.3-93.8h0m0.2-0.8h0m0.2-3h0m0.2 65.9h0m0 0h0m0 4.6h0m0 3.1h0m0 13.4h0m0.2-15.2h0m0.1 6.1h0m0 0.3h0m0.1-10.6h0m0.2 1.1h0m0.2 0.1h0m0 18.5h0m0.9-7.6h0m0.1-11.9h0m0 1.1h0m0 0.4h0m0 15.2h0m0.2-80.3h0m0.2 64.7h0m0 0h0m0.1-3h0m0 1.6h0m0 2.3h0m0.1-2.5h0m0.1-59.6h0m0 59.4h0m0.1-78.9h0m0 85.9h0m0.2-68.6h0m0 62.7h0m0.2-67.4h0m0.3 70.1h0m0.2 4.2h0m0.1-73.8h0m0.3 80.3h0m0.2-7.6h0m0 9.9h0m0.1-17.4h0m0 10.7h0m0.1-0.6h0m0.1-7.8h0m0.3 16.1h0m0.2-18.2h0m0.2 13.2h0m0.1-74.4h0m0.5 1.9h0m0.4 59h0m0.4-64.5h0m0 67.3h0m0 13h0m0.2-13.4h0m0 6.7h0m0.1 5.9h0m0.1-6.1h0m0.1-6.6h0m0.1-2.2h0m0 1.9h0m0.3 5.3h0m0 5.1h0m0.1 3h0m0.1 14.5h0m0.2-96.4h0m0.1-14.2h0m0 90.5h0m0 7.6h0m0 7.9h0m0.1-18.3h0m0 8.3h0m0 3.3h0m0.2-85.7h0m0 70h0m0 0.6h0m0 5h0m0 9.9h0m0 7.8h0m0.1-4.1h0m0.1-16h0m0.2-73.1h0m0 77.8h0m0.2 13.5h0m0.2-21.3h0m0.1-3h0m0 8.3h0m0.3-92h0m0 85.9h0m0.2 2h0m0.1-4.6h0m0 11.8h0m0.3-1.3h0m0.1-77.1h0m0 65.9h0m0 0.5h0m0 2.9h0m0.3 11.1h0m0.2-81.4h0m0 81.3h0m0.1-88.8h0m0 83.2h0m0 15.7h0m0.1-91.2h0m0.1 71.6h0m0.2-76.4h0m0 6.6h0m0.1 1.9h0m0.1-12.9h0m0 13.7h0m0 2.3h0m0 60.3h0m0 6.7h0m0 4.6h0m0.1-6.3h0m0 31.3h0m0.1-109.5h0m0 1.1h0m0 78.1h0m0.1-81h0m0 9.7h0m0 92.2h0m0.1-115.1h0m0 13.7h0m0 5.5h0m0 7.5h0m0 70.4h0m0.1-84.5h0m0 4.2h0m0 72.7h0m0.1-71.7h0m0.1-18.9h0m0 16.6h0m0 6.8h0m0 1.1h0m0 2.2h0m0 0.2h0m0.1 83.5h0m0.1-111.8h0m0 4.1h0m0 1.8h0m0 7.1h0m0 0.2h0m0 97.4h0m0.1-86.4h0m0.1-25.4h0m0 6.8h0m0.1 101.9h0m0.1-98.6h0m0 8.7h0m0 6.6h0m0 1.4h0m0 5.5h0m0.1-11.9h0m0 6.3h0m0 0.7h0m0 2.3h0m0 0.6h0m0 61.4h0m0 1.9h0m0.1-83.4h0m0 12.5h0m0 4.4h0m0.1-26.8h0m0 5.3h0m0 4.4h0m0 0.6h0m0 5.8h0m0 10.3h0m0 70.3h0m0.1-83.5h0m0 0.4h0m0 83h0m0 5.5h0m0.1-81.3h0m0.1 1.8h0m0.1-14.1h0m0.1 23.4h0m0 74.4h0m0.1-105.1h0m0 25.6h0m0 2.7h0m0.1-5.1h0m0 67h0m0 2.4h0m0.1-70.8h0m0 3.9h0m0.1-23.6h0m0.1 20.3h0m0 71.9h0m0.1-72.5h0m0 71.4h0m0.5 0.1h0m0 11.8h0m0.1-5.1h0m0 0.6h0m0.1-71.6h0m0 79.9h0m0.1-91.5h0m0 0.5h0m0 74.7h0m0.1-69.6h0m0.2-4h0m0 10.9h0m0.3 66.9h0m0 11.6h0m0.1-10.4h0m0.1 11.9h0m0.1-77.6h0m0.1 60.2h0m0 5.2h0m0 3.3h0m0 5h0m0.2-13.7h0m0.1 6.2h0m0.1-6.3h0m0 4.1h0m0.2 8h0m0.2-13h0m0 33.1h0m0.5-29.6h0m0.2-77.8h0m0 5.7h0m0 73.9h0m0 8.5h0m0.3-12.3h0m0 15.4h0m0.2-78.4h0m0 60.4h0m0 3.1h0m0.1-1.1h0m0 12.1h0m0 1.2h0m0 11h0m0.1-12h0m0.1-13.6h0m0 0.7h0m0 1.3h0m0.1-0.8h0m0 12.8h0m0 8.3h0m0.1 6.7h0m0.1-22.2h0m0 0.8h0m0.1-6.1h0m0 20.3h0m0 0.1h0m0.1-15h0m0 9.8h0m0.2-13.1h0m0 21.8h0m0.1-20.1h0m0.1-1.4h0m0.2 12.6h0m0.1-85.8h0m0 74.9h0m0 25.3h0m0.5-93.9h0m0 62.7h0m0.1-0.2h0m0 15.4h0m0.1-76.1h0m0 72.5h0m0.1 13.2h0m0.1-21h0m0.1-66.9h0m0 66.2h0m0 3.4h0m0 27.3h0m0.1-103.1h0m0.1 1.6h0m0 3.9h0m0.2 64.7h0m0 6.8h0m0.1-5.5h0m0 23.4h0m0.1-112.6h0m0 105.4h0m0.2-81.2h0m0 62.9h0m0 5.9h0m0 5.3h0m0 0h0m0.1-7.4h0m0 14.7h0m0.1-97.3h0m0.1 87.1h0m0 7.8h0m0.1-10.9h0m0 2.5h0m0.2-94.8h0m0 102.5h0m0 10.6h0m0.1-17.7h0m0.2-8.8h0m0 10.9h0m0 3.6h0m0.2-77.5h0m0 80.7h0m0.1-12.1h0m0 15.1h0m0.1-20.5h0m0 12.5h0m0 3.1h0m0.1 3.4h0m0.4-18.1h0m0.2 0.2h0m0.4 4.6h0m0.2-3.5h0m0 0.2h0m0.1 0.5h0m0.1-2.9h0m0 1.1h0m0.1 5.9h0m0.2-3.9h0m0.4-89.8h0m0.1 88.6h0m0 0.6h0m0 5.5h0m0.2-69.5h0m0.1-26.9h0m0 6.1h0m0.1-9.6h0m0 3.2h0m0 6.3h0m0.1 19.8h0m0 63.7h0m0 3h0m0.1-94.7h0m0 7.1h0m0 5.6h0m0 8.7h0m0 6.4h0m0.1 62.9h0m0.1 3.6h0m0 2.9h0m0 1h0m0 20.4h0m0.1-11.2h0m0.1-13.4h0m0 1.8h0m0 1.1h0m0.1 6.7h0m0 9.6h0m0.1-20.8h0m0 2.1h0m0 11.7h0m0.1-81.8h0m0 69.9h0m0 0.5h0m0.1-3.2h0m0 7.3h0m0 8.5h0m0.1-17h0m0 2.5h0m0 0.6h0m0 23.5h0m0.2-85h0m0 58.2h0m0 14.2h0m0.1-85.7h0m0 11.8h0m0 0.3h0m0.1-6h0m0 5.5h0m0.1-14h0m0.1-5.5h0m0 4.9h0m0.8 80.8h0m0.5-95h0m0.1 5.3h0m0.3 8.8h0m0.7-4h0m0 2.8h0m0.1 6.6h0m0.1 1.8h0m0.1 9.8h0m0.1 60.8h0m0.1-64.5h0m0 62.3h0m0.2-71.4h0m0.1 72.1h0m0.1-92.7h0m0 96.8h0m0.2 2.6h0m0.1-72.3h0m0 2.9h0m0.1-20.3h0m0 16.2h0m0 0h0m0 68.1h0m0.1-92h0m0 29.1h0m0 61.4h0m0 4.1h0m0.1-97.1h0m0 6.5h0m0 86.5h0m0.1-92.3h0m0 15h0m0 10.3h0m0.1 80.5h0m0.1-85.6h0m0 10.3h0m0.1-23.7h0m0 22.9h0m0 0.1h0m0.2-1.5h0m0.2 62.5h0m0.1-73h0m0.1 74.4h0m0.2-61h0m0 61h0m0.1-80.9h0m0 80.7h0m0.1-76h0m0.5 13.4h0m0 62.6h0m0.1 3.2h0m0.1-68.8h0m0.5 67.7h0m0.1-1.6h0m0.3-63.4h0m0.2 69.8h0m0.1-6.6h0m0.1 7.3h0m0.2-6.5h0m0 3h0m0 1.5h0m0.1 17.7h0m0.2-82.1h0m0.1 57.6h0m0.1 3h0m0.1-1.2h0m0.4 1.5h0m0.1 25.6h0m0 1.2h0m0.2-90.7h0m0.1 65.2h0m0.2-2h0m0.2-60.3h0m0 63.6h0m0.2 14.5h0m0.1-15.3h0m0 4.1h0m0.5-6.3h0m0.3-69.5h0m0.1-11.3h0m0 3.3h0m0.1 6.6h0m0.2-15.4h0m0 85.4h0m0.1-1.9h0m0.2-60.8h0m0 64.7h0m0.3-3.4h0m0.2 1.7h0m0.3-62.3h0m0 63.1h0m0.1 2.7h0m0.1-73.7h0m0.3 1.3h0m0.2-4h0m0.2-17.1h0m0 87.7h0m0 13.2h0m0 4.3h0m0.1-91.5h0m0.2-7.6h0m0 14.4h0m0.2-14.2h0m0 23.6h0m0.2-14.2h0m0.1-17.9h0m0 2.7h0m0 26.9h0m0 69.6h0m0.3-80.6h0m0 9h0m0 63h0m0.1-64.4h0m0.1-12.6h0m0 16.9h0m0 63.9h0m0 1.9h0m0.1-97.3h0m0 0.2h0m0 3.5h0m0 17.5h0m0 5.2h0m0.1 5.4h0m0.1-26.3h0m0.1-2.4h0m0 2.1h0m0 5.2h0m0 17.3h0m0.1-28.3h0m0 13.9h0m0 2.9h0m0 3.3h0m0 3.1h0m0 70.9h0m0.1-65.1h0m0 73.1h0m0.1-100.4h0m0 14.9h0m0 9.5h0m0.1-18.7h0m0 0.8h0m0 2.2h0m0 7.9h0m0.1-8.6h0m0 6.5h0m0 77.8h0m0 5.7h0m0.1-85h0m0 0.4h0m0 2.2h0m0 81.8h0m0.1-96.2h0m0 2.3h0m0 8h0m0 7.6h0m0 0.4h0m0 2.6h0m0 8.5h0m0.1-20.3h0m0 7.3h0m0 10.5h0m0 64h0m0.1-87.6h0m0 1.9h0m0.1 84.4h0m0.1-63.5h0m0 65.4h0m0.1-88.1h0m0 8.9h0m0 81.6h0m0.1-89.7h0m0.1 20.6h0m0 5.3h0m0.1 59.4h0m0.2-63h0m0 70.5h0m0.1-6.1h0m0 3.7h0m0.1-4h0m0.1-93.5h0m0 96h0m0.5-0.4h0m0.1-84.5h0m0.2 1.8h0m0 92.1h0m0 2.4h0m0.2-75.5h0m0.1-0.1h0m0.1 63.3h0m0.2-77.9h0m0 19.7h0m0.1-17.9h0m0.1 5.2h0m0.1 69.5h0m0 8.1h0m0.1 6.4h0m0.1-15.5h0m0.3-76.6h0m0.2 16.5h0m0.2 1h0m0 60.8h0m0.6-62.2h0m0.2 61.4h0m0.1-65.9h0m0 3h0m0.1 62h0m0.2 5h0m0.3-2.6h0m0.3-0.8h0m0.1-61.5h0m0 71.8h0m0.2-11h0m0.1 1.9h0m0 0.2h0m0.1 11.2h0m0.1-14.4h0m0.1-62.5h0m0.5-4.9h0m0.2-6.6h0m0.4 89.5h0m0.1-14.5h0m0.1-62.4h0m0 62.4h0m0.2 5h0m0.2-65.5h0m0 60.5h0m0.1 4.7h0m0.3-65.8h0m0.2 77.7h0m0 17h0m0.1-35.1h0m0.1 26.7h0m0.2-16.2h0m0.2 25.3h0m0.1-34.2h0m0 0.8h0m0 7.6h0m0 1.2h0m0 3.1h0m0.1-8.2h0m0 19.3h0m0.1-16.9h0m0 6.6h0m0.1-13.7h0m0 7.6h0m0.1-9.5h0m0 6.3h0m0 1h0m0 1.7h0m0.1-5h0m0 2.6h0m0 4.7h0m0 1.5h0m0 8.2h0m0.1-14.7h0m0 1.7h0m0 20.9h0m0.1-23.2h0m0.7-67.2h0m0.2-20.9h0m0 86h0m0 3.9h0m0.3-85.9h0m0 84.4h0m0 1.5h0m0.2-89.1h0m0.1 10.5h0m0 4h0m0.1-24.4h0m0 8.9h0m0.1 8h0m0 0.4h0m0.1-8.7h0m0 13.4h0m0.1-15.9h0m0 10.5h0m0 8.1h0m0.2 2.3h0m0.1-11.6h0m0 6.6h0m0.1 1.7h0m0.1-11.7h0m0 16.5h0m0 1.8h0m0 64.9h0m0.1-1.9h0m0 4.1h0m0.1-77.1h0m0 0.2h0m0.2 73.9h0m0 3.6h0m0.1 16h0m0.1-13.7h0m0.2-7.2h0m0 0.6h0m0 0h0m1.1-60.6h0m0.1 69.8h0m0.2-9.9h0m0.1-62.4h0m0 73.9h0m0.2-12.1h0m0.2-68.5h0m0 3.8h0m0 73.8h0m0.1-89.6h0m0.1 2.1h0m0 5.1h0m0 2.9h0m0.1 74.6h0m0.1-71.4h0m0 3h0m0 5.3h0m0.1-27.3h0m0 19.6h0m0.1-0.1h0m0.1-7.9h0m0.1 9.6h0m0.1 2.5h0m0 1.2h0m0.1-18.4h0m0.2 81.5h0m0 3.4h0m0 20.1h0m0.1-20.6h0m0.1-4.3h0m0 5.6h0m0.1 5.8h0m0.1 4.7h0m0 1.9h0m0.1-14h0m0.1-1.1h0m0 2.7h0m0 17.3h0m0.1-84h0m0 65.1h0m0 20.4h0m0.1-90.6h0m0.1 1.7h0m0 64.5h0m0.1 9.7h0m0.1-10.5h0m0 17.4h0m0 6.1h0m0.2-23.6h0m0 15.8h0m0.1-15.2h0m0.1-0.5h0m0 1.4h0m0 5.1h0m0 10.4h0m0 2.5h0m0 2.7h0m0.1-13.6h0m0.1-4.5h0m0.1 8.7h0m0.1 6.2h0m0.1-15.6h0m0.1 11.9h0m0 2.9h0m0.2-10.8h0m0.1 6.5h0m0 20.7h0m0.2-33.8h0m0.2 0h0m0 5.9h0m0 7.1h0m0.2-13.7h0m0 3h0m0.1 3.6h0m0.1 12.9h0m0.1-16.9h0m0 1.4h0m0 9.2h0m0.1-0.6h0m0 21h0m0.2-23.9h0m0.1 15.8h0m0.3-20.7h0m0 14.2h0m0.1-15.5h0m0.3 2.3h0m0 0.3h0m0.1-65.7h0m0 70.8h0m0.1 11.1h0m0.1-19.3h0m0.1 2.1h0m0 0.3h0m0.2 4.9h0m0 14.4h0m0.1-21h0m0 2.7h0m0 10.6h0m0 9.4h0m0.1-24.1h0m0 6.8h0m0 15.1h0m0.1-22.7h0m0.1 3.4h0m0 8.2h0m0 3.4h0m0 2.2h0m0.1-84.8h0m0 97.8h0m0.1-120.8h0m0 95.4h0m0 23h0m0.1-29.3h0m0 2.8h0m0 4h0m0 5.6h0m0 15.6h0m0.1-86.6h0m0 58.3h0m0 12.9h0m0 7.5h0m0 3.4h0m0.1-21.9h0m0 0.9h0m0 5.9h0m0 1.5h0m0 4.3h0m0 2.2h0m0 3.1h0m0 8.7h0m0.1-27.9h0m0 0.3h0m0 6.6h0m0 16.8h0m0 6.8h0m0.1-96.9h0m0 70.9h0m0 17.4h0m0 6.7h0m0.1-102.9h0m0 5.5h0m0 69.8h0m0 1.7h0m0 1.3h0m0 0.3h0m0 0.3h0m0 4.9h0m0 2.5h0m0 8.9h0m0 6.3h0m0.1-27.9h0m0 7.2h0m0 0.9h0m0 5.5h0m0 4.2h0m0 1.1h0m0 0.9h0m0.1-18.1h0m0 8.9h0m0 1.9h0m0 0.2h0m0 4h0m0 3h0m0 4.4h0m0.1-22.8h0m0 4.9h0m0.1-5h0m0 3.4h0m0 0.5h0m0 0.5h0m0 0.5h0m0 2.5h0m0 0.5h0m0 4.6h0m0 4.4h0m0 10.7h0m0.1-28.6h0m0 2.2h0m0 1h0m0 4.8h0m0 0.1h0m0 2.2h0m0 0h0m0 0.1h0m0 7h0m0 3.2h0m0 15.2h0m0.1-112.9h0m0 84.2h0m0 21.8h0m0 6.6h0m0.1-99.9h0m0 68.7h0m0 1.1h0m0 1.3h0m0 2.2h0m0 9.3h0m0 3.7h0m0 1.6h0m0 3.9h0m0 8.4h0m0.1-34.3h0m0 20.5h0m0 9.1h0m0.1-28.1h0m0 21.7h0m0.1-11.9h0m0.1-11h0m0 1.9h0m0 0.2h0m0.3-2.3h0m0 6.5h0m0.1-71.8h0m0.1 82.2h0m0.3 14.1h0m0.1-20.3h0m0.1-11.9h0m0 0.9h0m0 9.3h0m0 7.5h0m0.2-17.5h0m0 5.3h0m0 2.6h0m0.2 25.1h0m0.1-93.4h0m0 71.2h0m0.1-2.4h0m0 3.9h0m0 0h0m0 14.4h0m0.1-20.6h0m0 3h0m0.1 0.1h0m0 22.8h0m0.1-30.3h0m0 8.6h0m0 17h0m0.1-88.2h0m0.1 61.9h0m0.1 9.6h0m0 17.1h0m0.1-11.6h0m0.1-90.8h0m0 78.7h0m0 20.3h0m0 9.5h0m0.1-31h0m0.1-3h0m0.1 8.2h0m0 17.3h0m0.1-24.9h0m0 12.5h0m0 8.2h0m0 1.8h0m0.3-23.4h0m0 1.9h0m0 0.5h0m0.1 17.2h0m0.1 0.9h0m0.1-9.4h0m0 0.1h0m0 23.5h0m0.1-19.2h0m0 10.1h0m0 9.1h0m0.2-32.2h0m0 5.4h0m0.2-8.3h0m0 5.9h0m0 2h0m0 6.8h0m0.1 13.6h0m0.1-18.4h0m0.2-0.3h0m0.1 17.9h0m0.1-7.5h0m0.1-104h0m0.1 12.1h0m0 7.2h0m0 91.7h0m0.2-85.6h0m0 78.2h0m0.2-107.1h0m0 0.6h0m0 10.1h0m0.1-14.7h0m0.2 2.7h0m0 17.6h0m0.2-14.8h0m0 6.5h0m0.2 17.9h0m0.1-18.8h0m0.2 14.1h0m0.3 69.4h0m0.4 10.3h0m0.2-12.6h0m0 4h0m0.2-79.8h0m0 12.6h0m0.1 1.3h0m0.1 65.4h0m0.1-75.8h0m0 72.1h0m0.1-76.1h0m0 9.8h0m0.1 6.7h0m0.2-6.7h0m0.3 2.8h0m0.4-6.3h0m0 74.7h0m0.1-63.5h0m0 0.3h0m0.2-5.5h0m0.1 3.7h0m0 59.7h0m0.1-58.3h0m0 2.2h0m0 65.1h0m0.2-6.6h0m0.1-2.3h0m0.1-55.7h0m0 0.6h0m0 57.1h0m0.1-60h0m0 61.9h0m0.1-74.5h0m0.1 80.5h0m0 13.9h0m0.1-23.2h0m0.1 27.5h0m0.1-26.3h0m0.1-0.4h0m0 27.7h0m0.1-3h0m0.1-87h0m0.1 67.2h0m0 19.7h0m0.1-19.6h0m0 1.6h0m0 0.2h0m0 21.7h0m0.2-27.8h0m0 4.4h0m0 5.6h0m0 23.2h0m0.1-25.3h0m0 5.8h0m0 6.4h0m0 10.8h0m0.1-20.4h0m0 1h0m0 3.5h0m0.2-4.8h0m0.1-10.8h0m0 4.2h0m0 2.7h0m0 11.9h0m0 13.1h0m0.2-99.7h0m0 69.6h0m0 14.8h0m0 18.6h0m0.1-12.2h0m0 8.7h0m0.2-97.5h0m0 83.9h0m0.1-0.8h0m0.1-12.8h0m0 10.5h0m0.1-15h0m0.1-0.1h0m0.1 4.1h0m0.1-64.1h0m0.1 59.4h0m0 6.7h0m0.1-0.3h0m0.2-4.4h0m0 1.8h0m0 0.7h0m0 8.6h0m0 10.5h0m0.1-88.8h0m0 68h0m0 4.3h0m0.1-3.6h0m0.1-78h0m0 76h0m0.1-77.8h0m0.2 3.7h0m0 7.8h0m0 67.8h0m0 3.9h0m0.1-66.2h0m0.3 58.5h0m0 10h0m0.1-9.6h0m0 16.8h0m0.2-92.2h0m0 94.4h0m0.1-80.7h0m0 71.8h0m0.1 4.8h0m0.2 20.6h0m0.1-35.6h0m0 0.4h0m0 10.9h0m0 13h0m0.1-14.1h0m0 5.9h0m0.1-102.2h0m0.1 105.9h0m0.1-81.8h0m0.1-24h0m0 22.6h0m0 68.5h0m0.2-90.9h0m0 23.6h0m0 66.1h0m0 1.7h0m0.1-87.1h0m0 2.3h0m0 18.4h0m0 60.6h0m0 1.8h0m0.1-93.7h0m0 7.8h0m0 3.2h0m0 4.9h0m0 89h0m0.1-101.3h0m0 7.6h0m0 0.4h0m0 17.3h0m0 0.1h0m0.1 63.1h0m0 9.1h0m0.1-96.1h0m0 7.2h0m0 2.6h0m0 16.4h0m0 67.2h0m0 8.9h0m0.2-5.6h0m0.1-89.4h0m0.1 10.9h0m0.1-4.2h0m0.1-10.6h0m0 4.4h0m0 81.5h0m0.2 5.1h0m0 1.2h0m0 2.4h0m0 1.9h0m0.1-102.8h0m0 92.8h0m0 4h0m0.1-79.6h0m0 83.3h0m0.1-9.6h0m0 8.2h0m0.1-77.8h0m0 69.6h0m0.1 6.5h0m0.1-67.1h0m0 59.3h0m0 2.6h0m0 13.8h0m0 17.4h0m0.1-30.3h0m0 4.4h0m0.1-79.8h0m0 13.9h0m0 79.9h0m0.2-18.2h0m0.1-65.6h0m0 0.3h0m0 64.1h0m0.5-63.9h0m0.2 64.3h0m0.2-63.3h0m0 78h0m0.1-2.1h0m0.1-89.1h0m0.1 10.3h0m0.2-3.5h0m0 8.9h0m0.1-0.5h0m0 59.2h0m0.1-63.1h0m0.1-8.2h0m0 10.1h0m0.4 68.8h0m0 2.2h0m0 20.3h0m0.1-24.6h0m0 12.4h0m0 12.2h0m0.2-107.8h0m0 79.3h0m0 32.1h0m0.1-98.2h0m0 75.7h0m0.1 3.1h0m0 19.7h0m0.1-103.7h0m0 9.2h0m0 75.7h0m0 0.7h0m0.1-15.8h0m0 15.7h0m0.1-1.6h0m0.1 4.5h0m0 9.7h0m0.2-93.7h0m0.3 67.9h0m0.1-77.3h0m0.3 6.8h0m0 8.3h0m0.1-4.9h0m0.1 66.4h0m0 15.8h0m0.1-13.5h0m0.1-3h0m0 5.2h0m0.2-65.8h0m0 64.9h0m0.1-73.5h0m0 73.1h0m0.4-3.5h0m0.1 0.7h0m0 30.8h0m0.1-25.9h0m0.1 22.2h0m0.2-26.1h0m0 14.8h0m0.1-17.8h0m0.1-0.8h0m0 5.2h0m0.1-66.1h0m0 74.5h0m0.2-94.2h0m0 85.5h0m0.2 28.2h0m0.1-29.9h0m0.2-2h0m0.2-60.3h0m0 0h0m0.1-1.1h0m0 63.1h0m0.1-2.1h0m0.1 12.3h0m0 0.6h0m0.1-9.1h0m0 1.7h0m0 10.1h0m0 3.6h0m0.2-2.1h0m0.1-12.6h0m0.3 7.2h0m0.1-8.4h0m0.1 2.5h0m0 5.6h0m0 3.5h0m0 7.9h0m0.1-14.8h0m0.1 2.1h0m0 23h0m0.3-34.3h0m0 9h0m0 1.4h0m0.1 17.7h0m0.1-26.6h0m0 11.9h0m0.1-72.7h0m0 61.8h0m0 31.7h0m0.1-31.7h0m0 10.8h0m0 17.7h0m0.1 2.3h0m0.1-107.6h0m0 16.6h0m0.1 93.1h0m0.1-35.1h0m0.1 12h0m0.4-11.1h0m0 5.7h0m0 20.7h0m0.1-24.4h0m0 4.7h0m0.1-66.4h0m0 68.9h0m0.1-98.8h0m0 14.9h0m0 9.9h0m0 4.6h0m0 62.3h0m0 23.6h0m0.1-102.2h0m0 80.7h0m0.1-75.5h0m0 83.8h0m0.1-81.9h0m0 68.1h0m0 11.1h0m0.1-97.5h0m0 89h0m0 3.1h0m0.1-97.3h0m0 23.9h0m0 76.4h0m0.1-88.7h0m0 20.4h0m0 60.3h0m0 3.8h0m0 0.1h0m0 1.6h0m0.1-76.3h0m0 75.3h0m0 1.3h0m0 4.5h0m0.1-76h0m0 75.1h0m0.1-98.4h0m0 100.7h0m0 18.4h0m0.1-16.3h0m0.1-5.5h0m0.1 0.8h0m0.1-7.2h0m0.1-61.3h0m0 61.7h0m0 13.7h0m0.1 6.5h0m0.1-85.9h0m0 63h0m0 31.6h0m0.1-25.6h0m0 0.2h0m0 22.7h0m0.1-23.3h0m0.1 0h0m0.2-63.9h0m0 59.7h0m0.1-64.9h0m0.1-4.3h0m0 83h0m0.2-99.4h0m0.1 2.6h0m0 93.9h0m0.1-71.4h0m0 78.1h0m0 5.1h0m0.1-24.3h0m0.2 4h0m0.1-67.2h0m0.1 72.5h0m0.2-7.8h0m0 17.9h0m0.1-80.8h0m0 61.3h0m0 2h0m0 11.3h0m0 15.1h0m0.1-27.4h0m0 3.3h0m0.1-3.9h0m0 6.5h0m0 2.6h0m0.1-6.3h0m0 19h0m0.1-17.1h0m0 1.4h0m0 1.5h0m0 13.2h0m0 7.2h0m0.1-17.5h0m0 5.9h0m0.1-5.4h0m0.1-69.3h0m0.2 66.3h0m0.3-6.7h0m0 1.3h0m0.2 2.7h0m0.2 17.7h0m0 6.3h0m0.1-14.2h0m0.1-7.9h0m0.1-4.6h0m0 3.7h0m0 0.6h0m0 19.4h0m0.2-18.2h0m0.1-3.6h0m0 16.1h0m0.1-10.9h0m0.1-69.7h0m0.1 62.1h0m0.1 5.9h0m0 3.4h0m0.1-3.2h0m0.3-4h0m0.1-77.8h0m0 10.6h0m0.2-16.6h0m0 8.9h0m0 10h0m0 64.4h0m0.1-85.5h0m0 81.5h0m0 1.7h0m0.1-93.4h0m0 8.3h0m0.1-4.4h0m0 22.4h0m0.1-5.9h0m0 3.8h0m0.1 11.6h0m0 66.9h0m0.1-87.2h0m0.1 10.6h0m0.2 66.5h0m0 13.5h0m0.1-14h0m0.3 1.6h0m0 2h0m0 4h0m0 5.3h0m0 2.9h0m0.1-15.8h0m0 10.8h0m0.1 2.2h0m0.4-7.9h0m0.1-1.3h0m0 2.1h0m0.1 3.2h0m0 0.3h0m0.1 16.9h0m0.4-22.3h0m0 7.4h0m0.3-4.7h0m0.6-1.2h0m0.1-4.1h0m0 7.5h0m0.3-68.6h0m0 61h0m0.3 23.4h0m0.1-5.6h0m0.1 1.4h0m0.3-16.6h0m0.4 2.3h0m0 1.3h0m0 10.1h0m0.6-15.1h0m0.2-2.1h0m0.3-61.6h0m0.2 60.9h0m0 0.5h0m0.1-58.4h0m0.1-0.3h0m0.3 60.2h0m0.6 8.3h0m0.1-3.5h0m0.1-71.3h0m0.1 70.9h0m0 0.7h0m0.3-1.6h0m0.1-0.9h0m0.1-70.2h0m0 2.4h0m0 65.7h0m0 7.3h0m0.3-92.6h0m0.4-1.6h0m0 105.7h0m0.1-81.2h0m0 1.2h0m0.1-19.3h0m0 7.6h0m0 8.5h0m0.1-23.2h0m0 6.3h0m0 6.4h0m0 7h0m0 7.7h0m0.2-26.7h0m0.1-2.6h0m0 10.4h0m0 3h0m0 8.2h0m0 0.2h0m0 1.2h0m0 1.3h0m0 62.8h0m0.1-56.1h0m0 65.8h0m0.1-99.9h0m0.1 14.2h0m0.1-14.7h0m0 4.3h0m0.1 6.8h0m0 15h0m0 65.8h0m0.1-82.8h0m0.1-3.3h0m0 12h0m0 2.7h0m0 1.4h0m0.1-8.5h0m0 12.2h0m0 86.4h0m0 1.1h0m0.1-114.3h0m0 1.2h0m0 24h0m0 68.7h0m0.1-88.2h0m0 10.8h0m0 11.5h0m0 65.3h0m0 11.3h0m0 0.3h0m0 8.6h0m0.1-103.6h0m0 0h0m0 8.8h0m0 73.4h0m0 27.8h0m0.1-116.1h0m0 0.1h0m0 0.7h0m0 7.2h0m0 10.3h0m0 75.3h0m0.1-82.1h0m0.1-8h0m0 10h0m0 9.8h0m0.1-10.2h0m0 17h0m0.1-33.7h0m0 1.1h0m0 8h0m0 2.9h0m0 100.5h0m0.1-104.2h0m0 15.4h0m0 88.6h0m0.1-106.3h0m0 14.6h0m0.1 0.6h0m0 11.4h0m0 76.5h0m0.1-97.8h0m0 4.9h0m0 84.6h0m0.1-72.8h0m0 70.3h0m0.1-95.2h0m0 2.5h0m0 3.4h0m0 2.6h0m0 14.8h0m0 67.6h0m0.1 1.2h0m0.1-84.1h0m0 21.1h0m0.1-25.3h0m0.1-1.9h0m0 26.2h0m0.1 66.4h0m0.1-5.2h0m0 6.5h0m0 3.2h0m0.2-74.5h0m0.1 69.3h0m0.1-2.8h0m0 5.6h0m0.1-73h0m0 65.5h0m0.1-87.7h0m0 100.7h0m0.2-73.1h0m0 68.4h0m0.1 5.1h0m0 6.6h0m0 3h0m0.1-9.9h0m0.1-1.2h0m0 14.9h0m0 3.1h0m0.1-24.2h0m0.2 4.4h0m0.1-8.3h0m0 18.5h0m0.1-12.4h0m0.1-6.9h0m0 10.8h0m0.1-8.6h0m0 8.9h0m0 1.5h0m0.1 19.4h0m0.2-93.8h0m0 66.7h0m0.1-2.2h0m0.2 17h0m0.2-3.2h0m0.2-15.2h0m0 13.5h0m0.1-11.6h0m0 2h0m0 6h0m0.1-4.6h0m0 1.4h0m0 4h0m0.1-9.5h0m0 4.6h0m0.2 3.2h0m0.1 1.8h0m0 16.5h0m0.1-26.4h0m0 6.5h0m0 13.5h0m0.1-12.4h0m0.1-70.8h0m0 68.8h0m0 18.5h0m0.2-22.7h0m0.1-4.1h0m0.2 3.2h0m0.1 3.6h0m0.1-69.8h0m0.1 68.9h0m0 2.8h0m0.2-5.8h0m0 26.6h0m0.2-30.1h0m0 0.9h0m0 3.1h0m0 12.7h0m0.1-89.8h0m0 73.1h0m0 2.8h0m0 2.5h0m0 10h0m0 9.3h0m0.1-23.2h0m0 3.3h0m0.2-70.9h0m0 66.7h0m0 20.7h0m0.2 0.3h0m0.1-0.6h0m0.1-14.9h0m0 1.8h0m0 0.1h0m0 19.6h0m0.1-19.1h0m0 3.4h0m0 18.6h0m0.1-30h0m0.1 2.5h0m0 21.9h0m0.1-15.2h0m0.2-7.5h0m0.1 14h0m0.1-9.9h0m0 3.2h0m0 5.3h0m0.1-2.4h0m0 18h0m0.1-2.8h0m0.1-24h0m0 5.4h0m0 6.2h0m0 9.5h0m0 12.2h0m0.1-99h0m0 61.8h0m0 16.2h0m0 9.8h0m0.1-25.3h0m0 19.1h0m0.1-19.3h0m0 3.7h0m0 30.2h0m0.1-27.6h0m0 14.3h0m0.1-5.1h0m0 5.5h0m0.1-17.5h0m0 1.1h0m0 0.4h0m0.1-71.2h0m0 66.7h0m0 1.8h0m0.1-2.7h0m0 19.2h0m0 4.1h0m0.1-23.2h0m0 0.7h0m0 2.1h0m0 2.9h0m0 4.9h0m0 8.4h0m0 6.9h0m0 9.6h0m0.1-35.8h0m0.3 15.3h0m0.1-91.9h0m0 82.8h0m0 5h0m0.2-71.3h0m0 75.9h0m0.1 10.1h0m0.1 4.2h0m0.1-16.1h0m0.1-73.1h0m0 67.3h0m0.1 5h0m0.1-7h0m0 0.3h0m0 10.6h0m0 19.5h0m0.1-104.4h0m0 68.8h0m0 3.1h0m0.2-71.1h0m0 6.3h0m0 86.7h0m0.2-85.2h0m0 60.4h0m0.1 21.5h0m0.1-21.5h0m0 0.9h0m0.1 25h0m0.3-1.2h0m0.3-24.7h0m0.1-78.7h0m0.2-14.1h0m0 28.1h0m0 67.2h0m0 3.7h0m0.2-84.1h0m0 12.9h0m0.1-19.6h0m0.1 2.8h0m0 19.5h0m0.1-1.6h0m0 63.2h0m0.1-57.2h0m0 73.6h0m0.1-14.1h0m0.1 0.5h0m0 3.2h0m0.1-70.5h0m0.1 3.2h0m0 1.7h0m0.1 59.4h0m0.1 0.6h0m0.3-77.4h0m0.2 81.8h0m0.2-67.4h0m0.2 67.5h0m0.2-4.3h0m0.1 5h0m0.2 2.8h0m0.1-9.2h0m0.2-78.9h0m0.2 80.8h0m0.1 3.3h0m0.1-62.7h0m0 58.9h0m0.1-84.7h0m0 8h0m0 80.5h0m0.1-68.8h0m0.1 7.7h0m0 60.8h0m0.1-90.9h0m0.1 102.3h0m0.1-86.9h0m0 8.4h0m0.1-26.7h0m0 26.2h0m0 2.7h0m0 63.7h0m0 2.4h0m0.1-5.1h0m0 0.9h0m0 16.8h0m0.1-3.5h0m0.1-78.7h0m0 66.7h0m0 8.5h0m0.1 9.6h0m0 3.2h0m0.1-18.2h0m0 24h0m0.1-20.3h0m0 12.5h0m0.1-91.6h0m0 2.7h0m0 7.3h0m0 59.5h0m0.1-72.5h0m0 75.2h0m0.1 13.6h0m0.1-16h0m0.1 2.5h0m0 29.3h0m0.2-26.6h0m0.8-3.1h0m0 22.2h0m0.1-24.2h0m0 10.3h0m0.3-10h0m0.1 9.9h0m0.1-1.6h0m0.1-3.9h0m0 2.8h0m0.1 4.4h0" stroke="#000" stroke-width="3.6" style="stroke-linecap:round" fill="none"/><path d="M165.4 427.7h0m0.1 13.4h0m0.5 5h0m0.1 0.1h0m0 9h0m0.1-3.5h0m0.1-33.4h0m0 24.6h0m0 1h0m0 9h0m0.1-17.8h0m0 18h0m0.1-30.3h0m0 3.1h0m0.1-11.3h0m0 6.7h0m0 27.8h0m0.1-34.6h0m0 13.6h0m0 1.7h0m0 11.2h0m0 13.2h0m0.1-20.1h0m0 9h0m0 4.4h0m0 5.4h0m0 0.1h0m0.1-39h0m0 1h0m0 4.9h0m0 20h0m0.1-21h0m0.1 10.8h0m0.1 1.2h0m0 10.1h0m0.1 13.6h0m0.1-37.2h0m0.2 15h0m0 2.9h0m0.2 10.2h0m0 4.5h0m0.1 0.4h0m0.1-21h0m0 15.8h0m0.3 9.6h0m0.2-27.9h0m9.5-0.7h0m0 1.2h0m0.1-11.4h0m0.1 13.1h0m0.1 5h0m0.2 2.1h0m0.1 11.7h0m0.1-14.3h0m15.9 17.4h0m0.1-14.1h0m0.2-12.9h0m0 7.3h0m0 18.5h0m0 5.1h0m0.2-16.7h0m0.1-13.6h0m9.3 17.5h0m0 12.7h0m0.1-15.4h0m0.5-16.8h0m0.2 32.5h0m0.2-15.6h0m0 11.9h0m0.1-26.6h0m0 14.5h0m0 15.9h0m0.1-3.2h0m0 0.8h0m0.1-21.8h0m0 0.6h0m0.1 2.5h0m0 12h0m0.1-13.3h0m0.1 3.5h0m0 4.2h0m0 3.1h0m0.1-26.6h0m0 6.4h0m0 13.1h0m0 3.9h0m0 2.2h0m0 0.6h0m0.1-12.5h0m0 23.4h0m0 1.4h0m0.1-29.6h0m0 28.4h0m0.1-25h0m0 3.1h0m0 17.6h0m0.1-5.6h0m0 1.8h0m0 1.5h0m0.1-16.5h0m0.1-10.2h0m0 24.7h0m0 9.7h0m0.1-30.6h0m0 7.9h0m0.1 9.6h0m0.4 4.3h0m0.4-13.6h0m16.9 8.2h0m0.2-5.5h0m0.2 6.1h0m0 12.1h0m0.2-30.9h0m0 18h0m0 12.7h0m0.1-26.3h0m0 4.8h0m0 8.6h0m0 5.1h0m0.1-13.5h0m0 5.6h0m0 3.5h0m0.1 11.5h0m0.1-24.4h0m0.2 7.6h0m0.1 18.1h0m0 1.1h0m9.6-34.9h0m0 9.2h0m0.1 2.9h0m0.5-9h0m0.2 22.4h0m0.1-15.4h0m0 14.7h0m0.2-31.2h0m0 35.6h0m0.2-13.2h0m0.1-7.9h0m0 26.7h0m0.1-29.6h0m0 12.2h0m0 12.1h0m0.5-36.5h0m0 41.4h0m0.1-29h0m0 5h0m0.1-10.2h0m0 3.3h0m0 3.4h0m0.1-5.4h0m0 13.8h0m0 2.1h0m0 7h0m0.1-30h0m0 23.8h0m0.1-24.4h0m0 4.7h0m0 25.3h0m0 2.6h0m0.1-19.9h0m0 7.5h0m0 17.3h0m0 2.2h0m0 0.8h0m0.1-1.3h0m0.2-34.6h0m0 24.7h0m0 1.6h0m0.1-6.4h0m0 13.4h0m0.2-0.4h0m0.1-4.7h0m0.1-28.1h0m9.3 18h0m16.2-2.4h0m0.3-12.8h0m0.1 10.3h0m0.1-13.7h0m0 14h0m0 3.5h0m0.1-12.5h0m0 21.8h0m0 4.6h0m0.1-32.8h0m0 12.4h0m0.2-7h0m0.1-4.4h0m0 9.8h0m0.1 12.5h0m0 14.7h0m0.1-8.9h0m0.1-24.1h0m0 10.2h0m8.6 156.3h0m0.5-162.1h0m0.4 20.5h0m0.1-25h0m0 6.1h0m0.1 18.1h0m0.1-26.6h0m0 11.1h0m0.2-5.6h0m0 24.6h0m0.1-39.2h0m0 24.6h0m0 15.2h0m0 4.3h0m0.1-36.9h0m0 2.1h0m0 2.2h0m0 30.3h0m0 1.3h0m0.1-28.5h0m0 15.1h0m0 11.2h0m0 1.4h0m0.1-35.7h0m0 11.3h0m0 0.8h0m0 12.2h0m0 7.9h0m0 0.4h0m0.1-3.4h0m0.1-39.2h0m0 34.3h0m0.1 10.7h0m0.1-16.8h0m0 2.4h0m0 8h0m0.1-26.4h0m0 25.3h0m0 10.4h0m0.1-34.2h0m0.1-12.6h0m0 18h0m0 16.2h0m0.1-23.1h0m0.3 21.8h0m0.1-22.1h0m0.6 35h0m14.4 136.3h0m2.3-142.2h0m7 184.9h0m1.6-186.6h0m0.2-1.6h0m0 10.8h0m0.1-10.6h0m0.2-5.9h0m0.1-18.3h0m0 23.4h0m0 0.4h0m0.2-4.9h0m0 9.5h0m0 5h0m0.1-35h0m0 3.1h0m0 7.3h0m0 9.8h0m0 1.8h0m0.2 9.1h0m0 0.9h0m0 3.8h0m0.1-40.9h0m0 29.1h0m0 5.5h0m0 2h0m0.1-18.9h0m0 10.5h0m0 11.5h0m0 1h0m0.1-26h0m0 20.1h0m0.1-4.4h0m0 5.6h0m0 1.4h0m0.1-20.2h0m0 16.7h0m0 4.6h0m0.1-35.6h0m0 23.6h0m0 0.4h0m0.1-7.1h0m0.2-8h0m0.1-6.2h0m0 33.5h0m0.1 1h0m0.6 0h0m0.3-3.6h0m0.1 5h0m0.5 134.5h0m10.1-157h0m0.9 159h0m4.5-137.5h0m0.2-2.7h0m0 1h0m0.1-22.8h0m0 17.8h0m0.1 2h0m0.1-17.7h0m0.2-0.3h0m10.1 23.1h0m0.1-0.9h0m0.3 1.3h0m0.1-15.9h0m0 4.8h0m0.1-15.9h0m0 17.3h0m0.1-10.3h0m0 1.9h0m0.2-6.1h0m0 5.8h0m0 7.4h0m0 8.2h0m0.1-26.4h0m0 4.4h0m0 16.5h0m0.1-14.6h0m0.1 4.8h0m0.1 5.9h0m0 8.5h0m0.1-15.7h0m0 3.6h0m0 3.8h0m0.1-17.3h0m0 2.6h0m0 2.1h0m0.1 4.1h0m0 13.6h0m0.1-22.2h0m0 6.6h0m0 0.2h0m0 14.3h0m0 2.7h0m0 4.9h0m0.3-24h0m0.1 5h0m0 19.4h0m0.1-9.8h0m0.1 0.8h0m0 5.7h0m0 2.6h0m0.1-2.1h0m0.1-2.2h0m0.1-14.2h0m0.1-5.3h0m0.2 18.8h0m10.1 1.9h0m0 3.1h0m0.1-4.2h0m0.1-9h0m0.1-4.4h0m0.1 14.3h0m0 0.2h0m0.1 0.8h0m3.8 145.8h0m0.8 4.3h0m0.6 8.6h0m0.1-1.7h0m4.4 1.7h0m15.4-162.7h0m0.8 5.5h0m0.4-4h0m0 1.4h0m0 1.7h0m0.1-4.4h0m0 1.7h0m0.1-12.2h0m0.1 0h0m0 2.1h0m0 11.5h0m0.2-2.3h0m0 3.3h0m0 1.3h0m0.1-15h0m0.1-0.1h0m0 2h0m0.2-0.4h0m0 4.3h0m13.3-0.4h0m0.1-6.3h0m0 9.1h0m0 4.5h0m0.1 0.7h0m0.1-2.2h0m0.1-7.2h0m0.3 12.5h0m4.8-18.3h0m0.1 11.1h0m0.1-14.2h0m0 2.9h0m0 17.7h0m0 0.9h0m0.1-20.5h0m0.1 16h0m2.7 143.4h0m0.7 22.6h0m0 0.1h0m0.1-29.2h0m0.6 14.3h0m8.1-157.7h0m0.1 1.4h0m0.1-8.9h0m0 11.3h0m0.1-6.2h0m0 0.2h0m0 1.9h0m0.3 7.7h0m5.3 135.9h0m2.7 14.6h0m0 2.6h0m0 0.3h0m0.1-6.4h0m1.7-145.9h0m0.3 0.5h0m0.1-2h0m0 3h0m0 0.8h0m0.1-6.3h0m0.1 2h0m0.1 1.9h0m16.5-23.5h0m0.4 15.3h0m0 9.3h0m0.1-4h0m0.1-37.7h0m0 21.4h0m0 13.6h0m0.1-36.3h0m0 19.3h0m0 17.9h0m0.2-34h0m0 29.4h0m0 11.3h0m0.1-9.2h0m0.1-31.7h0m0 3.3h0m0 11.1h0m0.1 6.6h0m0.1-13.9h0m8.2-7.8h0m0 21.2h0m0.1-17h0m0.6 25.7h0m0 11.8h0m0.2-18.5h0m0.3-9.1h0m0 4.5h0m0 6.9h0m0 6.8h0m0.1-33.1h0m0 2.3h0m0 16.7h0m0.2-24.9h0m0 44.1h0m0 2.3h0m0 2h0m0.1-40h0m0 1.6h0m0 19.3h0m0.1 13.7h0m0.1-22.4h0m0.1-25.2h0m0 42.1h0m0 9.4h0m0.1-29.2h0m0 5.5h0m0.1-23.4h0m0 24.1h0m0.1 12.3h0m0 6.7h0m0.1-36.9h0m0 35.8h0m0.1-33.7h0m0 38.5h0m0.1-9.8h0m0.1-41.4h0m0 32.5h0m0 10.1h0m0 6.4h0m0.1-13.5h0m0.2-31.5h0m0.3-0.2h0m0 49.1h0m0.1 0.2h0m0.4-27.6h0m9.8 18.9h0m0 8.8h0m0.1-8.6h0m0 8.2h0m0.1-12.2h0m0.1-4.6h0m0 4.7h0m0.1 9.6h0m5.2-4.2h0m0.1-0.1h0m0.2-6h0m0 2.8h0m0 5.3h0m0 3.2h0m0.1 1.7h0m0.1-0.3h0m10.1-33.4h0m0.1 10h0m0 4.1h0m0.4 15.6h0m0.2-3.7h0m0.1-20.7h0m0 15.1h0m0 11.3h0m0.2-12.2h0m0 1h0m0.1-19.1h0m0 2.9h0m0 19.2h0m0.1 7.4h0m0.1-29h0m0 15.7h0m0 3.7h0m0 6.9h0m0.1-37h0m0 32.3h0m0.1-33.3h0m0 6h0m0 17.2h0m0 2h0m0 10.1h0m0.1 5.1h0m0.1-37.2h0m0 9h0m0.1-9h0m0 7.1h0m0 3h0m0 6.4h0m0 13.7h0m0 6.3h0m0 0.7h0m0 3.2h0m0.1-30.2h0m0 14.4h0m0.1-25.8h0m0 12h0m0 22.2h0m0 7.7h0m0.1-7.5h0m0.1-7.1h0m0.1 7.6h0m0.3 5.7h0m13.2 137.9h0m2.5 7.9h0m2.1-4.6h0m0.8 4.7h0m1.4-0.7h0m6.9-145.1h0m0.2-12.6h0m0.2-7.4h0m0 14.8h0m0.2-2.5h0m0 0.7h0m0.1-13.2h0m0 1.4h0m0 0.6h0m0 0h0m0 15.7h0m0.1-12.5h0m0.1 12.9h0m0.1-0.5h0m0 1.5h0m0.1-0.9h0m0.2 0.1h0m0.1-13.3h0m0 9.7h0m10.8 1.2h0m0 2h0m0.1 3.3h0m0.1-13.8h0m0 2.6h0m0.1 5.8h0m0 1.7h0m0 3.7h0m0.1-4.5h0m0.1-13.7h0m0.1 6.8h0m0 0.2h0m0.3 3.9h0m0 2.1h0m0 4.8h0m0.1-2.5h0m0.1-3.3h0m0.1-1.9h0m0.5 6h0m6.3 135.8h0m0.2 7.1h0m0.1 0.5h0m1.5 7.5h0m0.6 2h0m17.4-162h0m0.3 7.9h0m0.1-5.6h0m0.1-6.7h0m0.1-1h0m0.2-7.9h0m0 3.2h0m0 3.4h0m0 1h0m0 15.4h0m0.1-34.7h0m0 1.5h0m0 6.4h0m0 24.9h0m0.1-21.2h0m0 15.3h0m0.1-17.4h0m0.1 12.7h0m0 11.7h0m0.1-9.1h0m0.1-26.8h0m0 12.8h0m0 24.8h0m0.1-35.3h0m0 7h0m0 6h0m0 17h0m0.1-24.6h0m0 12.7h0m0 0.9h0m0.1-18.1h0m0 8.8h0m0 25.3h0m0.1-31.9h0m0 23.1h0m0.1-22.2h0m0 11.3h0m0.1 8.5h0m0 12.2h0m0.1-17.9h0m0.1-3h0m0 5.6h0m0.1 0.3h0m0.2 9.3h0m0.1-24.6h0m0.2 0.4h0m8.4 223.5h0m2-197.5h0m0.2 2.7h0m0.1-26.1h0m0.1 11h0m0.1-3.9h0m0 14.9h0m0 1h0m0.1-22.7h0m5 16.2h0m0.2-5.3h0m0 11.9h0m0.1-18.1h0m0 21h0m0.2-11.5h0m0.1 10.7h0m0 0.6h0m10.5-9.4h0m0.1 0.8h0m0.6-27.6h0m0 24.9h0m0.1-40.2h0m0 39.2h0m0 2.3h0m0 11.5h0m0.1-28.9h0m0.1-23.4h0m0 48.4h0m0 1.5h0m0 0.3h0m0.1-22.3h0m0 19.1h0m0.1-23.9h0m0.1-26.1h0m0 27.9h0m0 22.7h0m0.1-49.2h0m0 5.9h0m0 34h0m0 1.3h0m0 0.7h0m0.1-30h0m0 9.9h0m0 16.7h0m0.1-37h0m0 18h0m0 1.5h0m0.1 15.6h0m0.1-7.8h0m0 0.9h0m0.1 2.7h0m0.1-29.6h0m0 5.1h0m0 12.1h0m0 4.4h0m0 11.4h0m0.1-35.1h0m0.1 50.6h0m0.1-3.1h0m0 5.8h0m0.2-41.9h0m0.1 29.6h0m0.2 8.3h0m9.5-31.1h0m0 5.4h0m0.2-12.7h0m0 39.7h0m0.1-39.1h0m0 17.9h0m0 2.1h0m0 21.8h0m17.1-20.2h0m0.1-2h0m0 14.2h0m0.1-14.4h0m0 22.1h0m0.1-18.1h0m0 4.3h0m0.2 14.1h0m9.3-20.2h0m0.3 17.4h0m0 2.8h0m0.2-12.7h0m0 12.2h0m0.1-16.3h0m0 4.6h0m0.1 12.2h0m0.2 0.1h0m0.1-26.7h0m0 16.1h0m0.1-26.7h0m0 36.1h0m0.1-18.5h0m0 1.2h0m0.1-21.1h0m0 6.9h0m0 8.3h0m0 1.3h0m0.1-3.7h0m0 18.1h0m0 1.9h0m0 1.3h0m0.1-34.7h0m0 6.7h0m0 1.4h0m0 16.5h0m0 10h0m0.2-36.9h0m0 26h0m0 16.3h0m0.2-37.2h0m0.1 4.7h0m0.1 10.9h0m0 13.3h0m0.1-8.4h0m0 7.8h0m0.3-1.6h0m0.1 0.1h0m0.1-18.2h0m0 10.3h0m0 15.8h0m0 2.1h0m0.1-36.8h0m0 8.2h0m0.3 29h0m10.4-7.3h0m0.1 1.6h0m0 0.5h0m0.1-8.1h0m0 13.1h0m0.1 0.2h0m0.1-4.3h0m0 3.5h0m5.2-25h0m0.2-13.5h0m0 21.7h0m0.1-13.1h0m0.2 30.6h0m0.1-0.6h0m0.1-38.3h0m0 4.2h0m10.2 23.7h0m0.2-15.1h0m0.2-7.3h0m0 32.4h0m0 1.2h0m0.1-13.4h0m0.1-13.5h0m0 0.1h0m0 18.6h0m0 3.9h0m0.1-33h0m0 3h0m0 9.5h0m0 20.8h0m0.1-37.1h0m0 20.4h0m0 1h0m0 3.8h0m0 12.1h0m0 1.8h0m0 0.2h0m0.1-3.7h0m0.1-0.6h0m0 0.3h0m0.1-35.6h0m0 22.2h0m0.1-21.3h0m0 2.5h0m0.1 17h0m0 20.4h0m0.1-34.4h0m0 7.6h0m0 26.6h0m0.1-39.2h0m0 19.7h0m0 7.3h0m0 0.8h0m0.1-13.8h0m0 19.1h0m0 5h0m0.2-34.2h0m0 26.2h0m0 7.3h0m0.1-31h0m0 31.2h0m0.5 1.6h0m10-14.6h0m5.6 177.1h0m11.2-192.7h0m0.1 5.3h0m0 6.5h0m0.1 15.8h0m0 3.3h0m0.2-12.6h0m0.1-4.3h0m0 7.4h0m0 8.3h0m0.1-37.1h0m0 0.4h0m0 3h0m0 26.3h0m0.1 5.8h0m0.1-27.3h0m0 6.7h0m0 3.6h0m0 18.9h0m0.7-1.7h0m8.9-20.5h0m0 13.3h0m0.1-27.1h0m0 23.5h0m0.1-14.4h0m0 20.3h0m0.2-36.9h0m0 11h0m0.1 0.4h0m0 10.4h0m0 6.7h0m0.1-27.6h0m0 27.9h0m0.1 0.2h0m0 8.7h0m0 5h0m0.1-9.2h0m0 2.1h0m0.1-39.5h0m0 32.9h0m0 10h0m0 3.3h0m0.1-21.3h0m0 3.3h0m0 1h0m0.1-8.7h0m0.1-10.8h0m0 0.5h0m0 17.2h0m0 6.1h0m0 12.4h0m0.1-0.2h0m0.1-13.4h0m0 15h0m0.1-16.5h0m0 10.3h0m0 4.6h0m0 2.3h0m0.2-24.5h0m0 5.7h0m0 11.6h0m0 3.9h0m0.2 1.5h0m0.3-33.1h0m0.3 19.4h0m0.1 14.5h0m8.9 136h0m0.4-0.3h0m0.3-0.3h0m0.8 0.1h0m14.7-168h0m0.1 0.8h0m0.4 32.8h0m0.2-15.4h0m0.3-8.6h0m0 24.4h0m0.2-9.4h0m0.1-25.9h0m0.1 29.4h0m0 1.5h0m0.1-29.1h0m0 29.1h0m0 2.4h0m0 0.6h0m0.1-17.7h0m0 1.9h0m0 0.4h0m0.1 10.9h0m0.1-29.6h0m0 16.8h0m0 9.1h0m0 9.2h0m0.1-11.7h0m0.1-2.8h0m0.1-13.7h0m0 9.8h0m0 1.4h0m0 16.9h0m0.1-15.6h0m0.1-11.3h0m0 13.4h0m0 3.1h0m0.1-19.7h0m0 29h0m0 1.6h0m0.1-17.9h0m0 0.9h0m0 0.3h0m0.1 12.7h0m0 2.1h0m0.1-4.7h0m0.1-7.1h0m0.3 1.2h0m0.3 10.1h0m0.1 1h0m0.2-8.3h0m11.4 2.8h0m0 2.1h0m0.2-8.7h0m0 9.7h0m0.1 2.6h0m0 0.8h0m0.1 0.4h0m0.2-0.5h0m3.5-13.2h0m0 11.3h0m0 0.5h0m0.2 0.8h0m0.1-23.4h0m0.1 0.6h0m0.1 23.8h0m0.2-10.7h0m9.8-19h0m0.1 12.7h0m0.4-32.5h0m0.1 2.1h0m0.1 12.2h0m0 8.7h0m0.1-26.2h0m0 4.9h0m0 13.5h0m0 13.2h0m0.1-30.2h0m0 10.6h0m0 38.6h0m0.2-13.5h0m0.1-27.3h0m0 17.7h0m0 25.3h0m0.1-19.3h0m0.1-21.3h0m0 34.2h0m0.1-41.4h0m0.1 3.7h0m0 0.6h0m0 28.7h0m0.1-43.2h0m0 7.6h0m0 15.6h0m0 28.4h0m0 5.8h0m0.1-40.5h0m0 2.2h0m0 31h0m0.1-39.4h0m0 13.7h0m0.1-9.9h0m0.1 6.8h0m0 9.6h0m0 15.7h0m0.1-41.2h0m0 14.3h0m0.1-10.7h0m0.1 32.7h0m0.1-32.8h0m0.2 43.2h0m0.5-2.9h0m0.1 2.4h0m6.9 140.8h0m2-165.9h0m0 10h0m0.1 21.4h0m0.2-6.9h0m0.1-7.9h0m0.1-17.8h0m0 14.9h0m0 16.4h0m0.3-25.3h0m0.2-2.1h0m0 24.9h0m0.1-14.7h0m0 4.4h0m0 14h0m0.2-22.9h0m0 5.1h0m0 7.7h0m0.2-1.8h0m0 6.8h0m0 3.2h0m0.1-41.9h0m0 26.4h0m0 3.2h0m0.1 1.1h0m0 7.8h0m0 2.7h0m0 0.4h0m0.1-32.9h0m0.1-7.2h0m0 38.6h0m0.1-12.2h0m0.1-25.1h0m0 1.5h0m0 0.3h0m0 11.1h0m0.1 7.2h0m0 8.9h0m0 8.9h0m0 2.7h0m0.2-8.8h0m0.1-2.5h0m0 11.1h0m0.1-0.7h0m0.1-0.5h0m0.2-37.2h0m0.2 11.3h0m14 229.1h0m1.9-231.1h0m9.7 8h0m0.5-23.5h0m0 8.9h0m0.3 23h0m0 2.3h0m0.1-16.8h0m0.2-19.8h0m0 30.9h0m0.1-36.5h0m0 4.9h0m0 5.2h0m0 26.2h0m0.1-36h0m0 30.2h0m0 17.1h0m0 5h0m0.1-46.2h0m0 23.9h0m0.2-40.4h0m0 29.3h0m0 19.5h0m0 10.6h0m0.1-39.4h0m0 16.6h0m0 25.9h0m0.1-61.4h0m0.1 24.6h0m0 16.7h0m0.1 2h0m0 2.9h0m0.1-22.9h0m0 17h0m0 6.6h0m0 2.9h0m0 4.4h0m0.1 0.5h0m0 1.3h0m0 5.2h0m0.1-42h0m0 34h0m0.2-26.8h0m0 7.4h0m0.1 24.4h0m0.2-4h0m0.1-50.3h0m0.1 57.6h0m10.2-8.1h0m0.1-5.4h0m0 10.8h0m0 2.8h0m0 0.4h0m0.1-22.1h0m0 13.5h0m0 8h0m5.6-19.6h0m0 15.2h0m0.2-34h0m0.1-13.1h0m0 51.5h0m0.1-14.9h0m0.1-35.7h0m0 2.7h0m10 9h0m0.5 11.7h0m0.2-17.8h0m0.1 18.7h0m0 20.7h0m0 5.6h0m0.1-55.2h0m0 4h0m0.1 44.5h0m0.3-23.1h0m0 18.2h0m0.1-50.5h0m0 41.7h0m0 19.9h0m0 0h0m0 1.2h0m0.1-18h0m0 7.1h0m0.1-58.3h0m0 1.1h0m0 32.2h0m0.1-18.6h0m0 11.3h0m0 4.7h0m0 0h0m0 6.9h0m0 15.3h0m0.1-41.9h0m0 29.7h0m0.2 6.3h0m0 21.5h0m0.2-58.3h0m0 18.2h0m0 20.8h0m0 8.1h0m0.1 8h0m0 2.5h0m0.1-67.2h0m0 44.2h0m0.1-13.6h0m0.1-15.9h0m0.1 39.7h0m0.1-8.3h0m0.1 4.9h0m0.1 1.5h0m0.2-24.6h0m8.6-6h0m0.4 12.6h0m0 10.9h0m0.1-11h0m0 31.4h0m0.1-39.8h0m0 4.8h0m0.1-4.8h0m0.2 29.9h0m0.1-36.5h0m0 41.1h0m0.1-7.4h0m0 1.5h0m0.1 13.6h0m0.1-16.2h0m0.2 7.3h0m0 5.7h0m0 3.7h0m0.6-4.6h0m0.9 203.2h0m14.2-229.9h0m0.1-31.9h0m0 36.1h0m0.1 14.3h0m0.3-46.2h0m0 32h0m0.3 14.3h0m0.1-24.8h0m0 3.5h0m0 10.3h0m0 18.7h0m0.1-33.1h0m0 17.4h0m0 16.2h0m0.1-15.4h0m0 9.3h0m0 4.3h0m0 5.9h0m0.1-47.6h0m0.1 7.9h0m0 24.5h0m0 0.5h0m0 9.1h0m0 0.3h0m0.1-18.3h0m0.1-39.3h0m0 61h0m0 1.3h0m0.1-51.7h0m0 10.7h0m0 10h0m0 6.5h0m0 23.9h0m0.1-28.3h0m0 26.4h0m0.1-25.3h0m0 5.1h0m0.1-28.2h0m0.2 32.5h0m0 16.4h0m0.1-26.7h0m0.2-27.6h0m0 8.7h0m0.1 27.3h0m0 5.2h0m1.1 3.6h0m5.5 156.1h0m2.2-151.1h0m0.4-13.3h0m0.1-24.1h0m0 8.1h0m0 16.6h0m0.1-33.2h0m0.1 3.8h0m0 40.3h0m0 1.6h0m0.2-55.9h0m0 2.6h0m0 3.3h0m0 27.9h0m0 10.4h0m0.1-21.6h0m0 8.3h0m0 22.4h0m0.1-46.5h0m0.1 6.6h0m0 15.8h0m0 21.8h0m0.1-29.6h0m0 30.8h0m0.1-55.9h0m0 12.6h0m0 29.1h0m0.1 18.8h0m0 6.5h0m0.1-64.8h0m0 43.3h0m0 21.5h0m0.1-33.7h0m0.1-29.7h0m0 48.9h0m0 13.1h0m0.1-42.6h0m0 4.8h0m0.1 22.8h0m0.1-42.2h0m0.1 7.5h0m0.1 10.5h0m0 15.4h0m0.4 0.5h0m0.1-36.9h0m0 60.4h0m0 1.1h0m0.4 134.1h0m0 12h0m9.3-151h0m0.1-8.8h0m0 5.4h0m0 8.7h0m0.1-18.3h0m0 7.1h0m0 8h0m0.2-8.8h0m6.1-5.4h0m0.2 17.1h0m0.1-11.7h0m0 6h0m0.1-25.3h0m0.1 15.8h0m0 15.4h0m0.1-22.6h0m1-26.6h0m1 231.1h0m5.1-0.9h0m3.5-185.7h0m0 1.8h0m0.1-8h0m0.1-26.8h0m0 25.4h0m0.1 12.2h0m0.1-16.9h0m0.1 12.2h0m0.1-20.8h0m0.1-12.6h0m0 38.2h0m0.1-17.4h0m0 4.6h0m0.3-20.6h0m0 11.6h0m0.3 5.7h0m0.1-7h0m0.2 20.3h0m0.1-4.3h0m6.2 3.6h0m0.1-1.8h0m0 2h0m0.1-1.8h0m0.1-6.1h0m0 3.3h0m0.1 7.9h0m0.1-8.1h0m6.8 145h0m13-152.6h0m0.2 3.2h0m0 3.9h0m0.1 0.4h0m0.1 6.8h0m0.2-14.5h0m0 14.4h0m0 1.5h0m0.1-7.4h0m0 1.4h0m0.1-43.2h0m0 32h0m0 0.6h0m0 9.9h0m0 3.8h0m0.2-5h0m0 4h0m0.2-11.1h0m0.1 9.5h0m0.4-5.4h0m9.8-3h0m0.1-3.1h0m0.2 14.4h0m0.1-16.1h0m0.1-3.2h0m0 17.4h0m0 4.1h0m0.1-2.4h0m0.1 2.3h0m0.1-21.7h0m0 3.1h0m0 16.7h0m0.1-17.1h0m0 11.7h0m0.3 0.7h0m0.1 7.4h0m0.1-3.6h0m0 0.9h0m0.4-3.6h0m22.9 191.8h0m3.3-185.7h0m0.7-12.6h0m0.1-0.6h0m0.2 5.7h0m0 1.1h0m0 5h0m0.1-17.6h0m0 14.7h0m0.2-13.9h0m0 0.3h0m0 6.1h0m0 3.2h0m0.1-6.9h0m0 8.3h0m0 0.3h0m0 5.8h0m0.1-15.7h0m0 2.9h0m0 2.6h0m0 9.8h0m0 1.6h0m0.1-8.1h0m0 1.9h0m0.1-14.2h0m0 4.7h0m0 2.3h0m0 4.6h0m0 4.6h0m0.1-8.4h0m0 2.4h0m0.1-5.6h0m0 2.7h0m0 12.2h0m0.1-11.3h0m0 6.7h0m0.1-9.1h0m0.1 11.8h0m0 1.1h0m0.1-3.5h0m0.1-14.2h0m0 12.7h0m0 1.2h0m0.1-9h0m0.1-1.1h0m0.1 5.1h0m0.5-6.3h0m6.1 194.3h0m3.8-187.8h0m0.2 2.3h0m0.1 4.9h0m0.1-19.3h0m0 10.1h0m0.1 1h0m0.1-11.1h0m0.1 14.3h0m19 4.3h0m0.1-10.1h0m0 2.5h0m0 10.7h0m0.1-9h0m0.1-10.1h0m0.1-1.6h0m0 20.5h0m0.1-7.1h0m0 7h0m0.1-5.9h0m0 5.5h0m0.2-5.7h0m0 5.7h0m0 0.7h0m0.2-12.8h0m0 8.2h0m0.1 5.4h0m0.4-13.2h0m5.9 146.7h0m1.4 38h0m0.6-171.8h0m0.1-0.4h0m0.1-11.6h0m0.1-3.2h0m0.1 4.5h0m0.1-0.5h0m0 7.1h0m0 4h0m11 143.2h0m7.6-7h0m7.2-143.3h0m0.3-11h0m0 0.6h0m0 7h0m0.1-17.2h0m0 1.4h0m0 21.1h0m0 5h0m0.1-21.2h0m0 15.1h0m0 0.3h0m0.1 4.3h0m0.1-8.4h0m0 9.8h0m0.1-23.7h0m0 14.7h0m0.1-15.8h0m0 19.3h0m0 5.2h0m0.1-25.9h0m0.1 6h0m0 7.1h0m0 1.1h0m0 11.5h0m0.1-27.3h0m0 1.4h0m0 1.3h0m0 2.1h0m0 3.1h0m0 20.5h0m0.1-26.5h0m0.1 2.7h0m0 1.3h0m0 16.2h0m0 6.2h0m0.1-4.7h0m0 3.6h0m0.1-1.5h0m0.1-13.6h0m0 8.5h0m0 1.9h0m0.3-7h0m0 2.7h0m0 0.9h0m0.1 9.4h0m0.8-2.2h0m9.6 139.4h0m0.6-149.2h0m0 11.9h0m0 137.9h0m0.1-153.3h0m0 7.4h0m0 5.6h0m0.1-11h0m0 11.7h0m0.2-4.4h0m6.5-10.3h0m0 3.8h0m0.1-35.8h0m0 20.7h0m0.1-18h0m0 44.2h0m0.1-9.1h0m0.2-7h0m1.6 153.5h0m2.8 50.6h0m6.1-196h0m0.3 3.4h0m0 2.1h0m0.2-1.5h0m0.1 0.5h0m0.2-13.5h0m0.2-25h0m0 42.3h0m0.2-23.4h0m0 10.4h0m0 12.8h0m0.1-12.8h0m0 9.5h0m0.1-19.2h0m0 13.7h0m0.2-30.1h0m0 3.1h0m0 33.4h0m0 3.3h0m0.1-26.1h0m0.1-25.8h0m0 10.1h0m0 38.2h0m0 3.4h0m0.1-19.2h0m0 8.2h0m0 7.2h0m0.1-4.5h0m0.1-22.6h0m0 24.8h0m0 3.9h0m0 2.9h0m0.1-21.5h0m0 13.1h0m0.1-6.2h0m0.1-25h0m0 19.2h0m0 15.8h0m0.1 2.6h0m0.2-41.7h0m0 6.8h0m0 17.6h0m0.1 11.2h0m0.1-42.8h0m0 27.9h0m0 23.1h0m9.3-21.5h0m3.1-23h0m13.7 41.1h0m0.4 2.6h0m0.1-16h0m0 11.3h0m0.2-0.1h0m0.1-23.1h0m0 1.8h0m0 20.9h0m0.1-38h0m0 42.1h0m0.1-21.6h0m0 12.4h0m0.1-24.1h0m0 16.2h0m0 7.4h0m0.1 0.4h0m0.1 2.9h0m0.1 6.8h0m0.3-22.1h0m9.2 23.2h0m0.2-45.4h0m0 18.7h0m0 24.2h0m0.2-6.2h0m0.1-12.9h0m0 1.3h0m0 8.2h0m0 10.1h0m0.1-44.1h0m0.1 17.5h0m0 28.5h0m0.1-34.7h0m0 2.3h0m0.1 25.3h0m0 4.8h0m0.1-44.5h0m0.1 1.2h0m0 32.9h0m0.1-39.8h0m0 15.5h0m0 15.2h0m0 9.7h0m0 8.1h0m0 0.1h0m0.1-10.1h0m0 11h0m0.2-35.5h0m0 5h0m0 11.1h0m0.1-9h0m0 31.8h0m0.1-8.6h0m0 4.6h0m0.1-35h0m0 4h0m0 2.3h0m0.1 25.3h0m0.1-34.6h0m0 29h0m0 11.3h0m0.2-31.6h0m0.4-9.3h0m0 20.8h0m0.1 19.6h0m0.1-15.6h0m16.3 13.5h0m0.2-18h0m0.2-10.1h0m0 11.9h0m0 15.7h0m0 1.1h0m0.2-18h0m0.2 19.3h0m9.2-21.8h0m0.1 11.1h0m0.3 6.5h0m0.2 6.4h0m0.2 0.2h0m0.1-47.7h0m0 26.4h0m0 20.9h0m0.1-7.6h0m0.1 5.3h0m0.1-14.7h0m0.2-31.8h0m0 8.5h0m0.1-10.6h0m0 44.9h0m0.1-47.3h0m0 0.1h0m0 7.2h0m0 15.4h0m0 7.4h0m0.2-7.5h0m0 18.5h0m0 12.7h0m0.1-12.5h0m0 4.3h0m0 2h0m0.1-37.9h0m0 20.5h0m0 5.4h0m0 16.7h0m0 0.6h0m0 0.5h0m0.1-12.2h0m0 4.1h0m0.1-15.9h0m0 15h0m0.1-6.5h0m0.1 12.6h0m0 2.1h0m0.2-4.1h0m0.2-30.4h0m0 6.5h0m0 5.4h0m0.1-15.5h0m0.1 19.2h0m0.2-8.8h0m15.8 18.4h0m10.2 8.4h0m0.2-24.4h0m0.3-41.4h0m0 67h0m0.1-32.7h0m0 23.8h0m0 7.4h0m0 0.5h0m0.1-38h0m0.2 14h0m0.1-4.3h0m0 18.3h0m0.1 6.1h0m0.1-30h0m0 32.7h0m0.1-44.4h0m0 47.5h0m0.1-43.7h0m0 39.2h0m0 2.7h0m0.1-41.3h0m0 25.3h0m0 17h0m0.1-17.5h0m0 5.3h0m0 5.6h0m0.1-30.4h0m0 13.3h0m0.1-5.4h0m0 8.7h0m0 15.8h0m0 2.5h0m0 0.9h0m0 1.5h0m0.1-22.4h0m0 1.7h0m0 20.1h0m0.1-22.5h0m0.1-10.7h0m0.1 12.7h0m0 20h0m0.2-5.2h0m0.1-28.2h0m0 9.8h0m0 20.4h0m0.3-32.5h0m0.8-9h0m8.9 10.7h0m0 16.6h0m0 19h0m0.1-37h0m0.2 5.9h0m0.1 25.6h0m0.1-14.5h0m0.1 0.1h0m16.3 12.4h0m9.9 3.6h0m0.7-31.9h0m0 4.7h0m0.1-18h0m0 44.5h0m0.2-55.5h0m0 59.9h0m0.2-41.1h0m0 20.7h0m0 15.3h0m0.1-24.9h0m0.1 17.4h0m0.1-33.5h0m0.1 16.1h0m0 26.4h0m0.1-39.9h0m0 42.6h0m0.1-17h0m0 17.4h0m0.1-59.8h0m0 32.1h0m0 4.1h0m0.1-19.8h0m0 27.7h0m0.1-7.7h0m0 19.7h0m0 4.1h0m0.1-47h0m0 41.6h0m0.1-26.9h0m0.1 5.5h0m0 25.4h0m0 0.8h0m0.1-15.3h0m0 3.8h0m0.1-31.4h0m0 20.1h0m0 9.4h0m0 11.5h0m0 2.1h0m0.2-19.6h0m0.1-7.5h0m0.1-6.9h0m0 6.7h0m0 3.2h0m0.4 9.9h0m11 9.7h0m0.1 0.7h0m0 2.3h0m0.1-15.3h0m0.1 8h0m0 2.3h0m0.1-0.2h0m0 6.6h0m5.4-36.2h0m0 6.7h0m0 18.9h0m0 2h0m0 4.2h0m0.1-8.5h0m0 7.4h0m0.1-12.4h0m8.8 2.3h0m0 0.1h0m0.3-21.4h0m0.1 18.1h0m0.4-39.5h0m0 8.4h0m0.1-2.9h0m0 47.3h0m0.1-61.1h0m0 65.7h0m0.1-2.6h0m0.1-10h0m0.2-30.2h0m0 38.7h0m0.1-55.3h0m0 5.7h0m0 1h0m0 18.1h0m0 0.4h0m0 4.5h0m0.1 7.5h0m0 16h0m0 5.5h0m0 0.9h0m0.1-66.4h0m0 35.6h0m0.1 17.9h0m0.1-48.9h0m0 24.1h0m0 38.9h0m0.1-42.9h0m0 12.1h0m0 18.2h0m0.1-52.6h0m0.1 0.7h0m0 18.6h0m0.1 5h0m0 19h0m0 10.1h0m0 0.6h0m0.1 3h0m0.1-29.2h0m0.1 31.7h0m0.2 5.9h0m0.1-54.5h0m0.1 8.6h0m10.6 4.4h0m0.1 17.2h0m0.3-28.1h0m0 5.1h0m0 44.6h0m0.1-2.2h0m0 3.2h0m0.3-11.5h0m16.5-27h0m0.2 15.3h0m0 18.7h0m0 1h0m0.1-37.2h0m0 5.7h0m0 20.6h0m0.2-15.1h0m9.5 4.9h0m0 19.2h0m0.1-13.5h0m0.2-3.3h0m0.1 2.3h0m0 5.2h0m0.1-8.6h0m0 14.5h0m0.1-17.9h0m0 25.3h0m0.1 3.2h0m0.1-19.8h0m0 4.2h0m0 11.7h0m0.3-23.7h0m0 7.2h0m0.1 18.4h0m0.1-2.5h0m0.3-5.4h0m11.4 3.6h0m0.1 1.2h0m0 3.7h0m0.2-13.1h0m0 8.3h0m0.1 3.9h0m0 1.9h0m0.1-3.8h0m6-1.7h0m0.2-4.1h0m0.1-4.5h0m0 0.8h0m0.1 11.6h0m0 0.5h0m0.1-11.1h0m0.1-1.6h0m8.1-2.1h0m0.4 15h0m0.4-25.5h0m0.1 25.2h0m0.1-19.5h0m0.1-0.7h0m0.1-20.1h0m0 37h0m0.1-5.6h0m0.1-32.4h0m0 0.4h0m0 2.1h0m0 7.7h0m0.1-7.1h0m0 4.3h0m0 1.4h0m0 33.8h0m0.1-1.3h0m0.1-33.9h0m0.1-10.2h0m0 9.7h0m0 7h0m0 6h0m0.1-26.4h0m0 16.4h0m0.1-2.7h0m0 24.4h0m0 5.9h0m0.1-40.1h0m0 5.5h0m0 3.1h0m0 26.4h0m0.1-36.3h0m0 45.6h0m0 0.5h0m0.2-37.8h0m0 14.9h0m0.1 10.9h0m0.1-7.5h0m0 11.8h0m0.1-36.1h0m0.2 29.1h0m0 7.4h0m0 3.4h0m0.1 2.7h0m0.1-42.9h0m5.2 179.3h0m2.6 3.1h0m0.3 0.3h0m0.2-3.6h0m0.2 2.6h0" stroke="#ffa500" stroke-width="3.6" style="stroke-linecap:round" fill="none"/><path d="M215.7 381h1.6l2.4 5.6h-6.4zM220.2 381h1.6l2.4 5.6h-6.4zM568.4 381h1.6l2.4 5.6h-6.4zM576.8 381h1.6l2.4 5.6h-6.4zM581.1 381h1.6l2.4 5.6h-6.4zM585.3 381h1.6l2.4 5.6h-6.4zM589.5 381h1.6l2.4 5.6h-6.4zM593.1 381h1.6l2.4 5.6h-6.4zM599.3 381h1.6l2.4 5.6h-6.4zM603.5 381h1.6l2.4 5.6h-6.4zM607.7 381h1.6l2.4 5.6h-6.4zM611.1 381h1.6l2.4 5.6h-6.4zM614.8 381h1.6l2.4 5.6h-6.4zM621.8 381h1.6l2.4 5.6h-6.4zM626 381h1.6l2.4 5.6h-6.4zM638.6 381h1.6l2.4 5.6h-6.4zM658.3 381h1.6l2.4 5.6h-6.4zM665.3 381h1.6l2.4 5.6h-6.4zM672.3 381h1.6l2.4 5.6h-6.4zM679.4 381h1.6l2.4 5.6h-6.4zM694.3 381h1.6l2.4 5.6h-6.4zM707.5 381h1.6l2.4 5.6h-6.4zM742.7 381h1.6l2.4 5.6h-6.4zM751.1 381h1.6l2.4 5.6h-6.4zM753.9 381h1.6l2.4 5.6h-6.4zM780.3 381h1.6l2.4 5.6h-6.4zM828.4 381h1.6l2.4 5.6h-6.4zM850 381h1.6l2.4 5.6h-6.4zM859.3 381h1.6l2.4 5.6h-6.4zM901.1 381h1.6l2.4 5.6h-6.4zM916.6 381h1.6l2.4 5.6h-6.4zM925.3 381h1.6l2.4 5.6h-6.4zM931.4 381h1.6l2.4 5.6h-6.4zM941.3 381h1.6l2.4 5.6h-6.4zM945.5 381h1.6l2.4 5.6h-6.4zM949.7 381h1.6l2.4 5.6h-6.4zM953.9 381h1.6l2.4 5.6h-6.4zM958.1 381h1.6l2.4 5.6h-6.4zM962.3 381h1.6l2.4 5.6h-6.4zM966.5 381h1.6l2.4 5.6h-6.4zM970.8 381h1.6l2.4 5.6h-6.4zM979.2 381h1.6l2.4 5.6h-6.4zM983.4 381h1.6l2.4 5.6h-6.4zM987.6 381h1.6l2.4 5.6h-6.4zM991.8 381h1.6l2.4 5.6h-6.4zM1004.5 381h1.6l2.4 5.6h-6.4zM1008.7 381h1.6l2.4 5.6h-6.4zM1014.3 381h1.6l2.4 5.6h-6.4zM1030.4 381h1.6l2.4 5.6h-6.4zM1034.6 381h1.6l2.4 5.6h-6.4zM1038.9 381h1.6l2.4 5.6h-6.4zM1043.1 381h1.6l2.4 5.6h-6.4zM1047.3 381h1.6l2.4 5.6h-6.4zM1052.3 381h1.6l2.4 5.6h-6.4zM1062.7 381h1.6l2.4 5.6h-6.4zM1067 381h1.6l2.4 5.6h-6.4zM1071.2 381h1.6l2.4 5.6h-6.4zM1075.4 381h1.6l2.4 5.6h-6.4zM1079.6 381h1.6l2.4 5.6h-6.4zM1083.8 381h1.6l2.4 5.6h-6.4zM1088 381h1.6l2.4 5.6h-6.4zM1096.4 381h1.6l2.4 5.6h-6.4zM1102.1 381h1.6l2.4 5.6h-6.4zM1107.7 381h1.6l2.4 5.6h-6.4zM1113.3 381h1.6l2.4 5.6h-6.4zM1122.6 381h1.6l2.4 5.6h-6.4zM1212.5 381h1.6l2.4 5.6h-6.4zM1239.7 381h1.6l2.4 5.6h-6.4zM1243.9 381h1.6l2.4 5.6h-6.4zM1248.1 381h1.6l2.4 5.6h-6.4zM1251.8 381h1.6l2.4 5.6h-6.4z" fill="#ffa500"/><path d="M187.7 666h1.6l2.4-5.6h-6.4zM210.4 666h1.6l2.4-5.6h-6.4zM225.6 666h1.6l2.4-5.6h-6.4zM351.4 666h1.6l2.4-5.6h-6.4zM370.5 666h1.6l2.4-5.6h-6.4zM436.3 666h1.6l2.4-5.6h-6.4zM467.3 666h1.6l2.4-5.6h-6.4zM474.3 666h1.6l2.4-5.6h-6.4zM480.8 666h1.6l2.4-5.6h-6.4zM496.8 666h1.6l2.4-5.6h-6.4zM502.4 666h1.6l2.4-5.6h-6.4zM520.7 666h1.6l2.4-5.6h-6.4zM538.9 666h1.6l2.4-5.6h-6.4zM555.8 666h1.6l2.4-5.6h-6.4zM583.3 666h1.6l2.4-5.6h-6.4zM623.2 666h1.6l2.4-5.6h-6.4zM651.3 666h1.6l2.4-5.6h-6.4zM683.6 666h1.6l2.4-5.6h-6.4zM724.3 666h1.6l2.4-5.6h-6.4zM727.1 666h1.6l2.4-5.6h-6.4zM786.8 666h1.6l2.4-5.6h-6.4zM821.9 666h1.6l2.4-5.6h-6.4zM826.1 666h1.6l2.4-5.6h-6.4zM830.3 666h1.6l2.4-5.6h-6.4zM840.2 666h1.6l2.4-5.6h-6.4zM844.4 666h1.6l2.4-5.6h-6.4zM850 666h1.6l2.4-5.6h-6.4zM854.2 666h1.6l2.4-5.6h-6.4zM858.4 666h1.6l2.4-5.6h-6.4zM865.4 666h1.6l2.4-5.6h-6.4zM871.1 666h1.6l2.4-5.6h-6.4zM879.5 666h1.6l2.4-5.6h-6.4zM883.7 666h1.6l2.4-5.6h-6.4zM887.9 666h1.6l2.4-5.6h-6.4zM891.6 666h1.6l2.4-5.6h-6.4zM907 666h1.6l2.4-5.6h-6.4zM911.8 666h1.6l2.4-5.6h-6.4zM968 666h1.6l2.4-5.6h-6.4zM992.7 666h1.6l2.4-5.6h-6.4zM995.5 666h1.6l2.4-5.6h-6.4zM1007.3 666h1.6l2.4-5.6h-6.4zM1108.5 666h1.6l2.4-5.6h-6.4zM1145.6 666h1.6l2.4-5.6h-6.4zM1211.1 666h1.6l2.4-5.6h-6.4zM1213 666h1.6l2.4-5.6h-6.4zM1221.4 666h1.6l2.4-5.6h-6.4zM1236.9 666h1.6l2.4-5.6h-6.4zM1241.7 666h1.6l2.4-5.6h-6.4zM1300.1 666h1.6l2.4-5.6h-6.4z" fill="#ffa500"/><path d="M214 758.5h0M216.5 758.5h0M219 758.5h0M221.5 758.5h0M224.7 758.5h0M239.9 758.5h0M569.5 758.5h0M578 758.5h0M580.7 758.5h0M583 758.5h0M585.2 758.5h0M589.2 758.5h0M600.1 758.5h0M604.7 758.5h0M607.3 758.5h0M614.8 758.5h0M623.3 758.5h0M626 758.5h0M627.6 758.5h0M640.1 758.5h0M659.3 758.5h0M665.5 758.5h0M673.2 758.5h0M680.7 758.5h0M695.3 758.5h0M708.1 758.5h0M743.3 758.5h0M754.5 758.5h0M860.7 758.5h0M917.2 758.5h0M926 758.5h0M916.7 758.5h0M925.5 758.5h0M931.3 758.5h0M940.7 758.5h0M942.8 758.5h0M944.7 758.5h0M951.3 758.5h0M954.8 758.5h0M958 758.5h0M961.5 758.5h0M964.7 758.5h0M970 758.5h0M971.9 758.5h0M973.5 758.5h0M980.7 758.5h0M983.3 758.5h0M986 758.5h0M988.7 758.5h0M991.3 758.5h0M993.2 758.5h0M1005.5 758.5h0M1008.1 758.5h0M1010.8 758.5h0M1016.1 758.5h0M1028.7 758.5h0M1031.3 758.5h0M1035.3 758.5h0M1038 758.5h0M1044.7 758.5h0M1047.3 758.5h0M1064.1 758.5h0M1067.3 758.5h0M1070 758.5h0M1074 758.5h0M1078.8 758.5h0M1082 758.5h0M1084.7 758.5h0M1086.8 758.5h0M1090.8 758.5h0M1096.7 758.5h0M1099.3 758.5h0M1102.5 758.5h0M1114 758.5h0M1238.5 758.5h0M1241.2 758.5h0M1243.9 758.5h0M1246.5 758.5h0M1252.7 758.5h0M1255.3 758.5h0" stroke="#000" stroke-width="3" style="stroke-linecap:square" fill="none"/><path d="M176.1 791.5h0M186.5 791.5h0M214 791.5h0M219.9 791.5h0M227.3 791.5h0M256.1 791.5h0M276.4 791.5h0M286.3 791.5h0M325.2 791.5h0M345.2 791.5h0M355.1 791.5h0M385.2 791.5h0M394.8 791.5h0M414 791.5h0M424.1 791.5h0M454 791.5h0M464.1 791.5h0M484.1 791.5h0M494 791.5h0M513.2 791.5h0M523.3 791.5h0M563.3 791.5h0M582.8 791.5h0M592.7 791.5h0M610.8 791.5h0M622.5 791.5h0M632.1 791.5h0M652.1 791.5h0M661.5 791.5h0M684.1 791.5h0M691.3 791.5h0M721.2 791.5h0M731.3 791.5h0M751.3 791.5h0M760.9 791.5h0M800.4 791.5h0M820.1 791.5h0M830.3 791.5h0M869.5 791.5h0M889.5 791.5h0M899.3 791.5h0M901.5 791.5h0M919.3 791.5h0M919.3 791.5h0M929.2 791.5h0M945.5 791.5h0M950 791.5h0M958.5 791.5h0M970 791.5h0M988.1 791.5h0M998.5 791.5h0M1028.1 791.5h0M1053.2 791.5h0M1056.7 791.5h0M1060.7 791.5h0M1067.3 791.5h0M1078.5 791.5h0M1082 791.5h0M1097.5 791.5h0M1108.7 791.5h0M1136.1 791.5h0M1156.1 791.5h0M1166.5 791.5h0M1195.9 791.5h0M1225.5 791.5h0M1235.3 791.5h0M1239.9 791.5h0M1265.2 791.5h0M1275.3 791.5h0M1294 791.5h0" stroke="#000" stroke-width="3" style="stroke-linecap:square" fill="none"/><path d="M175.3 856.5h0M185.5 856.5h0M188.1 856.5h0M205.2 856.5h0M211.3 856.5h0M214 856.5h0M219.3 856.5h0M226 856.5h0M245.5 856.5h0M254.5 856.5h0M274.5 856.5h0M284.1 856.5h0M294.3 856.5h0M314.8 856.5h0M324.4 856.5h0M342.8 856.5h0M352.7 856.5h0M372.1 856.5h0M374 856.5h0M383.6 856.5h0M392.9 856.5h0M413.5 856.5h0M423.1 856.5h0M437.2 856.5h0M442.5 856.5h0M452.1 856.5h0M462.5 856.5h0M465.2 856.5h0M468.4 856.5h0M475.3 856.5h0M482 856.5h0M492.7 856.5h0M498.5 856.5h0M503.3 856.5h0M512.1 856.5h0M522.5 856.5h0M551.3 856.5h0M553.5 856.5h0M555.9 856.5h0M561.2 856.5h0M580.7 856.5h0M584.1 856.5h0M591.3 856.5h0M611.3 856.5h0M619.9 856.5h0M624.1 856.5h0M630.5 856.5h0M650.8 856.5h0M660.7 856.5h0M680.7 856.5h0M684.7 856.5h0M690.3 856.5h0M700.1 856.5h0M719.3 856.5h0M724.1 856.5h0M729.2 856.5h0M749.2 856.5h0M759.3 856.5h0M787.3 856.5h0M790 856.5h0M799.3 856.5h0M818 856.5h0M823.3 856.5h0M829.2 856.5h0M831.3 856.5h0M838 856.5h0M840.7 856.5h0M843.3 856.5h0M847.3 856.5h0M850 856.5h0M852.7 856.5h0M856.7 856.5h0M859.3 856.5h0M862 856.5h0M866 856.5h0M869.2 856.5h0M872.7 856.5h0M879.3 856.5h0M882 856.5h0M884.7 856.5h0M887.3 856.5h0M890 856.5h0M892.7 856.5h0M897.5 856.5h0M908.1 856.5h0M914 856.5h0M917.2 856.5h0M927.3 856.5h0M937.5 856.5h0M943.3 856.5h0M957.5 856.5h0M967.3 856.5h0M986.5 856.5h0M994 856.5h0M996.1 856.5h0M1016.7 856.5h0M1026 856.5h0M1036.1 856.5h0M1038.5 856.5h0M1055.9 856.5h0M1065.5 856.5h0M1085.2 856.5h0M1095.3 856.5h0M1106 856.5h0M1108.7 856.5h0M1126 856.5h0M1135.3 856.5h0M1146.5 856.5h0M1154.5 856.5h0M1164.7 856.5h0M1194 856.5h0M1204.7 856.5h0M1212.7 856.5h0M1223.3 856.5h0M1233.5 856.5h0M1236.7 856.5h0M1242 856.5h0M1252.7 856.5h0M1263.3 856.5h0M1273.2 856.5h0M1294 856.5h0M1301.5 856.5h0" stroke="#000" stroke-width="3" style="stroke-linecap:square" fill="none"/><path d="M175.3 889.5h0M185.5 889.5h0M188.1 889.5h0M205.2 889.5h0M211.3 889.5h0M214 889.5h0M219.3 889.5h0M226 889.5h0M239.3 889.5h0M245.5 889.5h0M254.5 889.5h0M263.3 889.5h0M274.5 889.5h0M284.1 889.5h0M294.3 889.5h0M314.8 889.5h0M324.4 889.5h0M342.8 889.5h0M352.7 889.5h0M372.1 889.5h0M374 889.5h0M383.6 889.5h0M392.9 889.5h0M413.5 889.5h0M423.1 889.5h0M437.2 889.5h0M442.5 889.5h0M452.1 889.5h0M462.5 889.5h0M465.2 889.5h0M468.4 889.5h0M475.3 889.5h0M482 889.5h0M492.7 889.5h0M498.5 889.5h0M503.3 889.5h0M512.1 889.5h0M522.5 889.5h0M551.3 889.5h0M553.5 889.5h0M555.9 889.5h0M561.2 889.5h0M568.1 889.5h0M574 889.5h0M576.7 889.5h0M580.7 889.5h0M583.3 889.5h0M591.3 889.5h0M597.5 889.5h0M603.3 889.5h0M611.3 889.5h0M612.7 889.5h0M616.7 889.5h0M619.3 889.5h0M624.1 889.5h0M629.5 889.5h0M631.3 889.5h0M639.3 889.5h0M650.8 889.5h0M660.7 889.5h0M663.3 889.5h0M671.3 889.5h0M678.5 889.5h0M680.7 889.5h0M684.7 889.5h0M690 889.5h0M691.9 889.5h0M700.1 889.5h0M708.1 889.5h0M715.3 889.5h0M719.3 889.5h0M724.1 889.5h0M729.2 889.5h0M749.2 889.5h0M759.3 889.5h0M785.5 889.5h0M787.3 889.5h0M790 889.5h0M799.3 889.5h0M818 889.5h0M823.3 889.5h0M829.2 889.5h0M831.3 889.5h0M838 889.5h0M840.7 889.5h0M843.3 889.5h0M847.3 889.5h0M850 889.5h0M852.7 889.5h0M856.7 889.5h0M859.3 889.5h0M862 889.5h0M866 889.5h0M869.2 889.5h0M872.7 889.5h0M878 889.5h0M880.7 889.5h0M883.3 889.5h0M886 889.5h0M888.7 889.5h0M891.3 889.5h0M894 889.5h0M897.5 889.5h0M903.3 889.5h0M908.1 889.5h0M912.7 889.5h0M915.3 889.5h0M918 889.5h0M927.3 889.5h0M937.5 889.5h0M943.3 889.5h0M946 889.5h0M957.5 889.5h0M967.3 889.5h0M975.3 889.5h0M978 889.5h0M983.3 889.5h0M986 889.5h0M988.7 889.5h0M991.3 889.5h0M994 889.5h0M996.7 889.5h0M999.3 889.5h0M1004.7 889.5h0M1007.3 889.5h0M1010.8 889.5h0M1016.7 889.5h0M1026 889.5h0M1028.7 889.5h0M1031.3 889.5h0M1034 889.5h0M1037.5 889.5h0M1040.1 889.5h0M1051.3 889.5h0M1055.3 889.5h0M1065.5 889.5h0M1069.5 889.5h0M1071.3 889.5h0M1073.2 889.5h0M1078.8 889.5h0M1084.7 889.5h0M1091.3 889.5h0M1096.7 889.5h0M1105.5 889.5h0M1108.7 889.5h0M1111.3 889.5h0M1118 889.5h0M1123.3 889.5h0M1126 889.5h0M1135.3 889.5h0M1146.5 889.5h0M1154.5 889.5h0M1164.7 889.5h0M1194 889.5h0M1204.7 889.5h0M1212.7 889.5h0M1223.3 889.5h0M1230 889.5h0M1232.7 889.5h0M1238 889.5h0M1241.2 889.5h0M1244.7 889.5h0M1248.7 889.5h0M1252.7 889.5h0M1256.1 889.5h0M1263.3 889.5h0M1273.2 889.5h0M1294 889.5h0M1301.5 889.5h0" stroke="#000" stroke-width="3" style="stroke-linecap:square" fill="none"/><path d="M175.3 856.5h0m0 33h0m0.8-98h0m9.4 65h0m0 33h0m1-98h0m1.6 65h0m0 33h0m17.1-33h0m0 33h0m6.1-33h0m0 33h0m2.7-131h0m0 33h0m0 65h0m0 33h0m2.5-131h0m2.5 0h0m0.3 98h0m0 33h0m0.6-98h0m1.6-33h0m3.2 0h0m1.3 98h0m0 33h0m1.3-98h0m12 98h0m0.6-131h0m5.6 98h0m0 33h0m9-33h0m0 33h0m1.6-98h0m7.2 98h0m11.2-33h0m0 33h0m1.9-98h0m7.7 65h0m0 33h0m2.2-98h0m8 65h0m0 33h0m20.5-33h0m0 33h0m9.6-33h0m0 33h0m0.8-98h0m17.6 65h0m0 33h0m2.4-98h0m7.5 65h0m0 33h0m2.4-98h0m17 65h0m0 33h0m1.9-33h0m0 33h0m9.6-33h0m0 33h0m1.6-98h0m7.7 65h0m0 33h0m1.9-98h0m18.7 65h0m0 33h0m0.5-98h0m9.1 65h0m0 33h0m1-98h0m13.1 65h0m0 33h0m5.3-33h0m0 33h0m9.6-33h0m0 33h0m1.9-98h0m8.5 65h0m0 33h0m1.6-98h0m1.1 65h0m0 33h0m3.2-33h0m0 33h0m6.9-33h0m0 33h0m6.7-33h0m0 33h0m2.1-98h0m8.6 65h0m0 33h0m1.3-98h0m4.5 65h0m0 33h0m4.8-33h0m0 33h0m8.8-33h0m0 33h0m1.1-98h0m9.3 65h0m0 33h0m0.8-98h0m28 65h0m0 33h0m2.2-33h0m0 33h0m2.4-33h0m0 33h0m5.3-33h0m0 33h0m2.1-98h0m4.8 98h0m1.4-131h0m4.5 131h0m2.7 0h0m1.3-131h0m2.7 0h0m0 98h0m0 33h0m2.1-98h0m0.2-33h0m0.3 131h0m0.8-33h0m1.1-98h0m4 0h0m2.1 98h0m0 33h0m1.4-98h0m4.8 98h0m2.6-131h0m3.2 131h0m1.4-131h0m2.6 0h0m3.5 33h0m0.5 65h0m0 33h0m1.4 0h0m2.1-131h0m1.9 131h0m2.6 0h0m0.6-33h0m2.6-65h0m0.8-33h0m0.8 98h0m0 33h0m1.9-131h0m1.6 0h0m1.9 131h0m1-33h0m0.8 33h0m0.8-98h0m7.2 98h0m0.8-131h0m10.7 98h0m0 33h0m1.3-98h0m7.2-33h0m1.4 98h0m0 33h0m0.8-98h0m1.8 98h0m2.2-131h0m5.8 131h0m1.9-131h0m5.3 131h0m2.2-131h0m0 98h0m0 33h0m3.4-98h0m0.6 65h0m0 33h0m5.3 0h0m0.3-33h0m1-65h0m0.6 98h0m3.4-131h0m4.8 98h0m0 33h0m8-131h0m0 131h0m7.2 0h0m4-33h0m0 33h0m1.9-98h0m2.9 65h0m0 33h0m5.1-33h0m0 33h0m2.1-98h0m12-33h0m5.9 98h0m0 33h0m2.1-98h0m3.2-33h0m4.8 98h0m0 33h0m1.6-98h0m24.6 98h0m1.8-33h0m0 33h0m2.7-33h0m0 33h0m9.3-33h0m0 33h0m1.1-98h0m17.6 65h0m0 33h0m2.1-98h0m3.2 65h0m0 33h0m5.9-33h0m0 33h0m1.1-98h0m1 65h0m0 33h0m6.7-33h0m0 33h0m2.7-33h0m0 33h0m2.6-33h0m0 33h0m4-33h0m0 33h0m2.7-33h0m0 33h0m2.7-33h0m0 33h0m4-33h0m0 33h0m2.6-33h0m0 33h0m1.4-131h0m1.3 98h0m0 33h0m4-33h0m0 33h0m3.2-33h0m0 33h0m0.3-98h0m3.2 65h0m0 33h0m5.3 0h0m1.3-33h0m1.4 33h0m1.3-33h0m1.3 33h0m1.4-33h0m1.3 33h0m1.3-33h0m1.4 33h0m0.8-98h0m0.5 65h0m1.3 33h0m1.4-33h0m1.3 33h0m3.5-33h0m0 33h0m1.8-98h0m2.2 0h0m1.8 98h0m4.8-33h0m0 33h0m4.6 0h0m1.3-33h0m1.3 33h0m1.4-131h0m0.5 0h0m0 98h0m0.8 33h0m1.3-98h0m0 0h0m6.2-33h0m0.5 0h0m1.3 98h0m0 33h0m1.9-98h0m2.1-33h0m6.2 98h0m0 33h0m3.2-131h0m2.1 0h0m0.5 98h0m0 33h0m1.4-131h0m0.8 33h0m0.5 98h0m4-98h0m1.3-33h0m3.5 0h0m2.7 98h0m0 33h0m0.5-131h0m0.5 33h0m3-33h0m3.2 0h0m2.6 98h0m0 33h0m2.7-131h0m0 33h0m1.9-33h0m1.6 0h0m1.8 131h0m2.7 0h0m2.7-131h0m2.6 0h0m0 131h0m2.7-131h0m0 131h0m0.5-33h0m1.6-65h0m0.6-33h0m0 131h0m2.6-131h0m0 131h0m1.9-131h0m0.8 98h0m0 33h0m2.1-33h0m0.6 33h0m1.8-98h0m0.8 98h0m5.4 0h0m0.8-131h0m1.8 131h0m0.8-131h0m2.7 0h0m0 131h0m5.3-131h0m0.6 98h0m0 33h0m9.3-33h0m0 33h0m2.1-98h0m0.6-33h0m0 131h0m2.6-131h0m0 131h0m2.7 0h0m1.3-131h0m0.8 98h0m1.4 33h0m0.5-131h0m0.5 98h0m1.6 33h0m4.6-131h0m2.6 0h0m4 131h0m1.9-98h0m2.1 98h0m0.6-33h0m0.8-65h0m4 0h0m3.4-33h0m1.4 98h0m0 33h0m1.8-131h0m0 33h0m2.2 98h0m0.5-131h0m1.3 131h0m1.9 0h0m0.8-131h0m4.5 33h0m0.3-33h0m0 131h0m3.2-131h0m0 33h0m2.7-33h0m0 131h0m0.5-33h0m1.6-98h0m4 0h0m0.5 131h0m4-33h0m1.4-98h0m0 131h0m0.8-98h0m1.8-33h0m3.2 0h0m3 131h0m0.5-33h0m2.7-65h0m0 65h0m0 33h0m2.6 0h0m2.7-131h0m4 131h0m5.3 0h0m2.7-33h0m0 33h0m9.3-33h0m0 33h0m0.8-98h0m10.4 65h0m0 33h0m8-33h0m0 33h0m1.6-98h0m8.6 65h0m0 33h0m1.8-98h0m27.5 65h0m0 33h0m1.9-98h0m8.8 65h0m0 33h0m8-33h0m0 33h0m10.6-33h0m0 33h0m2.2-98h0m4.5 98h0m2.7 0h0m0.8-33h0m1.8-65h0m1.4 65h0m1.3 33h0m0.5-131h0m1.4 33h0m1.3-33h0m0 131h0m0.8-33h0m1.9-98h0m0.8 131h0m1.8-131h0m2.2 131h0m4-131h0m0 98h0m0 33h0m2.6-131h0m0.8 131h0m7.2-33h0m0 33h0m1.9-98h0m8 65h0m0 33h0m2.1-98h0m18.7 0h0m0 65h0m0 33h0m7.5-33h0m0 33h0" stroke="#999" stroke-width="0.9" style="stroke-linecap:round" fill="none"/><path d="M175.9 955.4l2.2 4.3h-4.4zM186.5 955.4l2.2 4.3h-4.4zM205.2 955.4l2.2 4.3h-4.4zM211.9 955.4l2.2 4.3h-4.4zM214 955.4l2.2 4.3h-4.4zM216.1 955.4l2.2 4.3h-4.4zM218.3 955.4l2.2 4.3h-4.4zM220.4 955.4l2.2 4.3h-4.4zM222.5 955.4l2.2 4.3h-4.4zM224.7 955.4l2.2 4.3h-4.4zM227.3 955.4l2.2 4.3h-4.4zM239.3 955.4l2.2 4.3h-4.4zM245.5 955.4l2.2 4.3h-4.4zM255.9 955.4l2.2 4.3h-4.4zM263.3 955.4l2.2 4.3h-4.4zM275.3 955.4l2.2 4.3h-4.4zM285.5 955.4l2.2 4.3h-4.4zM294.3 955.4l2.2 4.3h-4.4zM314.8 955.4l2.2 4.3h-4.4zM324.9 955.4l2.2 4.3h-4.4zM344.7 955.4l2.2 4.3h-4.4zM354 955.4l2.2 4.3h-4.4zM372.7 955.4l2.2 4.3h-4.4zM384.7 955.4l2.2 4.3h-4.4zM394 955.4l2.2 4.3h-4.4zM414 955.4l2.2 4.3h-4.4zM424.1 955.4l2.2 4.3h-4.4zM437.2 955.4l2.2 4.3h-4.4zM442.5 955.4l2.2 4.3h-4.4zM453.5 955.4l2.2 4.3h-4.4zM463.3 955.4l2.2 4.3h-4.4zM467.9 955.4l2.2 4.3h-4.4zM475.3 955.4l2.2 4.3h-4.4zM482.8 955.4l2.2 4.3h-4.4zM494 955.4l2.2 4.3h-4.4zM498.5 955.4l2.2 4.3h-4.4zM503.3 955.4l2.2 4.3h-4.4zM513.2 955.4l2.2 4.3h-4.4zM523.3 955.4l2.2 4.3h-4.4zM540.5 955.4l2.2 4.3h-4.4zM552.8 955.4l2.2 4.3h-4.4zM556 955.4l2.2 4.3h-4.4zM562.7 955.4l2.2 4.3h-4.4zM568.8 955.4l2.2 4.3h-4.4zM576 955.4l2.2 4.3h-4.4zM578.7 955.4l2.2 4.3h-4.4zM581.3 955.4l2.2 4.3h-4.4zM584 955.4l2.2 4.3h-4.4zM591.2 955.4l2.2 4.3h-4.4zM593.9 955.4l2.2 4.3h-4.4zM600 955.4l2.2 4.3h-4.4zM603.5 955.4l2.2 4.3h-4.4zM606.7 955.4l2.2 4.3h-4.4zM609.9 955.4l2.2 4.3h-4.4zM613.3 955.4l2.2 4.3h-4.4zM616.8 955.4l2.2 4.3h-4.4zM620 955.4l2.2 4.3h-4.4zM623.2 955.4l2.2 4.3h-4.4zM626.7 955.4l2.2 4.3h-4.4zM630.1 955.4l2.2 4.3h-4.4zM632.8 955.4l2.2 4.3h-4.4zM640 955.4l2.2 4.3h-4.4zM652 955.4l2.2 4.3h-4.4zM660.8 955.4l2.2 4.3h-4.4zM663.5 955.4l2.2 4.3h-4.4zM672 955.4l2.2 4.3h-4.4zM679.2 955.4l2.2 4.3h-4.4zM682.7 955.4l2.2 4.3h-4.4zM690.7 955.4l2.2 4.3h-4.4zM693.3 955.4l2.2 4.3h-4.4zM700.5 955.4l2.2 4.3h-4.4zM708 955.4l2.2 4.3h-4.4zM716.5 955.4l2.2 4.3h-4.4zM720 955.4l2.2 4.3h-4.4zM723.5 955.4l2.2 4.3h-4.4zM729.9 955.4l2.2 4.3h-4.4zM743.2 955.4l2.2 4.3h-4.4zM750.7 955.4l2.2 4.3h-4.4zM753.3 955.4l2.2 4.3h-4.4zM760 955.4l2.2 4.3h-4.4zM786.7 955.4l2.2 4.3h-4.4zM790.1 955.4l2.2 4.3h-4.4zM800 955.4l2.2 4.3h-4.4zM819.5 955.4l2.2 4.3h-4.4zM822.7 955.4l2.2 4.3h-4.4zM829.9 955.4l2.2 4.3h-4.4zM838.1 955.4l2.2 4.3h-4.4zM841.3 955.4l2.2 4.3h-4.4zM848.8 955.4l2.2 4.3h-4.4zM852 955.4l2.2 4.3h-4.4zM858.7 955.4l2.2 4.3h-4.4zM868 955.4l2.2 4.3h-4.4zM871.2 955.4l2.2 4.3h-4.4zM880 955.4l2.2 4.3h-4.4zM883.5 955.4l2.2 4.3h-4.4zM886.7 955.4l2.2 4.3h-4.4zM889.9 955.4l2.2 4.3h-4.4zM893.3 955.4l2.2 4.3h-4.4zM896.8 955.4l2.2 4.3h-4.4zM901.4 955.4l2.2 4.3h-4.4zM905.5 955.4l2.2 4.3h-4.4zM908.7 955.4l2.2 4.3h-4.4zM912.3 955.4l2.2 4.3h-4.4zM916.4 955.4l2.2 4.3h-4.4zM920.5 955.4l2.2 4.3h-4.4zM926.8 955.4l2.2 4.3h-4.4zM930.1 955.4l2.2 4.3h-4.4zM932.3 955.4l2.2 4.3h-4.4zM938.3 955.4l2.2 4.3h-4.4zM941.5 955.4l2.2 4.3h-4.4zM944.6 955.4l2.2 4.3h-4.4zM947.8 955.4l2.2 4.3h-4.4zM950.8 955.4l2.2 4.3h-4.4zM954.1 955.4l2.2 4.3h-4.4zM957.4 955.4l2.2 4.3h-4.4zM960.7 955.4l2.2 4.3h-4.4zM963.7 955.4l2.2 4.3h-4.4zM967 955.4l2.2 4.3h-4.4zM970.2 955.4l2.2 4.3h-4.4zM973.3 955.4l2.2 4.3h-4.4zM976.5 955.4l2.2 4.3h-4.4zM979.3 955.4l2.2 4.3h-4.4zM985.6 955.4l2.2 4.3h-4.4zM988.8 955.4l2.2 4.3h-4.4zM992.4 955.4l2.2 4.3h-4.4zM1006.1 955.4l2.2 4.3h-4.4zM1009.3 955.4l2.2 4.3h-4.4zM1012.6 955.4l2.2 4.3h-4.4zM1016.2 955.4l2.2 4.3h-4.4zM1026.6 955.4l2.2 4.3h-4.4zM1029.8 955.4l2.2 4.3h-4.4zM1033.1 955.4l2.2 4.3h-4.4zM1036.7 955.4l2.2 4.3h-4.4zM1039.9 955.4l2.2 4.3h-4.4zM1043.5 955.4l2.2 4.3h-4.4zM1046.8 955.4l2.2 4.3h-4.4zM1050.3 955.4l2.2 4.3h-4.4zM1053.6 955.4l2.2 4.3h-4.4zM1057.2 955.4l2.2 4.3h-4.4zM1061.3 955.4l2.2 4.3h-4.4zM1064 955.4l2.2 4.3h-4.4zM1067.3 955.4l2.2 4.3h-4.4zM1070.8 955.4l2.2 4.3h-4.4zM1074.1 955.4l2.2 4.3h-4.4zM1077.7 955.4l2.2 4.3h-4.4zM1080.9 955.4l2.2 4.3h-4.4zM1084.5 955.4l2.2 4.3h-4.4zM1088.1 955.4l2.2 4.3h-4.4zM1091.3 955.4l2.2 4.3h-4.4zM1096.3 955.4l2.2 4.3h-4.4zM1099.5 955.4l2.2 4.3h-4.4zM1103.6 955.4l2.2 4.3h-4.4zM1106.9 955.4l2.2 4.3h-4.4zM1110.5 955.4l2.2 4.3h-4.4zM1113.7 955.4l2.2 4.3h-4.4zM1117.3 955.4l2.2 4.3h-4.4zM1124.7 955.4l2.2 4.3h-4.4zM1135.6 955.4l2.2 4.3h-4.4zM1146.5 955.4l2.2 4.3h-4.4zM1155.6 955.4l2.2 4.3h-4.4zM1165.1 955.4l2.2 4.3h-4.4zM1194.7 955.4l2.2 4.3h-4.4zM1204.8 955.4l2.2 4.3h-4.4zM1212.4 955.4l2.2 4.3h-4.4zM1223.9 955.4l2.2 4.3h-4.4zM1231.3 955.4l2.2 4.3h-4.4zM1234.8 955.4l2.2 4.3h-4.4zM1238.1 955.4l2.2 4.3h-4.4zM1241.7 955.4l2.2 4.3h-4.4zM1245 955.4l2.2 4.3h-4.4zM1248.5 955.4l2.2 4.3h-4.4zM1252.6 955.4l2.2 4.3h-4.4zM1255.3 955.4l2.2 4.3h-4.4zM1264.9 955.4l2.2 4.3h-4.4zM1274.5 955.4l2.2 4.3h-4.4zM1293.6 955.4l2.2 4.3h-4.4zM1301.8 955.4l2.2 4.3h-4.4z" fill="#f00" stroke="#f00" stroke-width="0.7"/><path d="M163.1 1004.1h0m0.1 0.8h0m0.2 2h0m0.1-3.8h0m0.7 2.8h0m0.2-0.1h0m0.7-1.6h0m0 3.3h0m0.3-9h0m0.2 7.5h0m0.5 0.3h0m0.2-4.9h0m0.4 2.1h0m0.1 0.8h0m0.5 1.7h0m0.1 0h0m0.4-3.6h0m0.2 2.5h0m0.4 2.5h0m0.1-6.1h0m0.3 1.9h0m0.1 0.6h0m0.6 2h0m0.4-3h0m0.1 2.3h0m0.3-0.3h0m0.6 0.1h0m0.2-2.3h0m0.1 1.8h0m0.1-0.9h0m0.5 1.8h0m0.3-1.3h0m0.6 2.4h0m0.1-6.5h0m0.1 2.5h0m0.2 4.3h0m0.7-5.2h0m0 0.9h0m0.6 4.3h0m0.1-3.5h0m0.7 3.5h0m0.1-1.3h0m0.2-2.1h0m0.1 3.3h0m0.5-2.4h0m0.3-1.5h0m0.5 2.9h0m0 1.6h0m0.2 0.2h0m0.1-3.3h0m0.6 2h0m0.3 0.1h0m0.5-2.5h0m0 0.7h0m0.5 1.4h0m0.4 1.6h0m0.1-0.3h0m0 0.4h0m0.6-0.9h0m0.5-3.7h0m0.3-0.8h0m0.2 1.6h0m0.2-1.3h0m0.1 2.3h0m0.5 2.3h0m0 0.6h0m0.8-4.8h0m0.2 2.9h0m0.3-4.2h0m0 3.3h0m0.6 2.1h0m0.1-2.9h0m0.3 3.3h0m0.5-2h0m0.1 0.1h0m0.2-3h0m0.7 5.3h0m0.2-4.4h0m0.1 1.4h0m0.5 0h0m0.2-4.1h0m0.4 6.3h0m0.1-3.9h0m0.3 0h0m0.5 4.4h0m0.1-1.6h0m0.7 1.4h0m0 0.5h0m0.5-4.4h0m0.1-0.1h0m0.5-0.3h0m0.3 0.8h0m0 3.1h0m0.5-8.3h0m0.5 6.4h0m0.2-1.2h0m0.3 1.6h0m0.1-3.6h0m0.3 0.8h0m0.5 1.2h0m0.1-1.3h0m0.2 4.8h0m0.5-5.9h0m0.3 1.9h0m0.2 1.5h0m0.1-3.5h0m0.5 5.4h0m0 0.7h0m0.6-1.8h0m0.3 2h0m0.6-1.2h0m0.2 1.1h0m0.4-8.7h0m0.1 7.6h0m0.2-4.4h0m0.2 1.4h0m0.3 2h0m0.1 1h0m0.7-8.5h0m0.2 4.5h0m0.4 4.2h0m0.2-0.7h0m0.4-2.5h0m0.1 3.4h0m0.4 0.2h0m0.4 0.9h0m0.3-6.5h0m0.2 1h0m0.6 0.2h0m0 1.6h0m0.4 1.6h0m0.3-3.4h0m0.6-1.2h0m0 1.2h0m0.4 2.5h0m0.2-2.6h0m0.2 3.6h0m0.3-1.3h0m0.3-2h0m0.3 1.2h0m0.3-0.3h0m0.3-0.2h0m0.4 0.9h0m0.2-1.6h0m0.6-1h0m0 1.6h0m0.4 3.1h0m0.4-3.5h0m0 1h0m0.4-1.5h0m0.6 3.2h0m0.2-4.6h0m0 5h0m0.4-3.7h0m0.7 4h0m0 1.4h0m0.2-2.6h0m0.2-0.4h0m0.4-2.9h0m0.5-0.1h0m0 2.2h0m0.2 3.1h0m0.8 0.9h0m0.2-2.4h0m0.4 0.7h0m0.1-3.6h0m0.3 4h0m0.4-5.1h0m0.1 3h0m0 2.8h0m0.8-8.3h0m0.1-0.7h0m0 7.9h0m0.3 0.2h0m0.1-2.8h0m0.5-0.6h0m0.3 2.7h0m0.5-0.4h0m0.1 1.7h0m6.4 0.7h0m0.2-1.6h0m0.3-4.9h0m0.3 6.2h0m0.4 0.1h0m0.2-2.3h0m0.4 0h0m0.4-3.8h0m0.4 2h0m0 1.2h0m0.3-3.3h0m0.3 2.2h0m0.8 1.1h0m0 2.6h0m0.2-4.6h0m0.1-0.2h0m0.3 4.6h0m0.6-1.8h0m0.4-2.3h0m0 2.3h0m0.4-2.9h0m0.3 5.2h0m0.4-0.4h0m0.1-3.6h0m0.5 4.4h0m0.2-7.7h0m0.2 6.6h0m0.4-1.9h0m0.2 0h0m0.3-2.8h0m0.2-2.2h0m0 2.7h0m0.6 1.4h0m0 1.2h0m1-3.7h0m0 1.7h0m0.3 2.4h0m0.2-2.9h0m0.5 2.7h0m0.2-3.4h0m0.2 2.8h0m0.2-1.8h0m0.8 2.7h0m0.2-1.7h0m0.1 1.5h0m0.4-1.7h0m0.6 1.4h0m0 1.7h0m0.2-2.3h0m0.4 1.8h0m0.3-2.5h0m0.1 0h0m0.5 1.9h0m0.2 0.3h0m0.2-1.3h0m0.2 1.3h0m0.4-2.8h0m0 4.3h0m0.8-5.8h0m0 1.6h0m0.6 2.3h0m0.4-2.8h0m0.3 0.2h0m0.1-1.3h0m0.4 0.1h0m0.1 2.8h0m0.3-2.4h0m0.2 5.6h0m0.7-3.9h0m0.2 3.5h0m0.2-6h0m0.2 3.3h0m0.4-2.8h0m0.3 3.3h0m0.8-7.3h0m0 6.1h0m0.1 2.9h0m0.3 0.6h0m0.3-1.9h0m0.5-3.9h0m0.1 6.1h0m0.4-2.1h0m0.6-4h0m0 1.6h0m0.2 3.6h0m0.5-5.2h0m0.1 1.9h0m0.3-2.3h0m0.4 3.3h0m0.1-2.2h0m0.5 0.3h0m0.2-0.4h0m0.3 3.5h0m0.4-5.5h0m0.2 1.8h0m0.4 5.8h0m0.2-4.7h0m0.2 1.9h0m0.6-3.5h0m0.2 5.2h0m0.5 1.1h0m0.2-4.8h0m0 3.7h0m0.2-0.7h0m0.6-1.5h0m0 0.6h0m0.5-1.3h0m0.1-2.1h0m0.5-1.8h0m0.3 5.5h0m0.7-0.8h0m0.1-6.4h0m0 0.6h0m0.3 2.3h0m0.3 2.9h0m0.1-2h0m0.8 2.1h0m0.2 0.2h0m0.4-3.2h0m0.1 2.1h0m0.3-0.7h0m0.2 4.7h0m0.4-3.5h0m0.4 0.6h0m0.3-3.4h0m0.4 5.7h0m0.2-3.7h0m0.3 0.7h0m0.1-1.5h0m0.2-0.6h0m0.7 0.5h0m0.1 5.3h0m0.5-6h0m0 0.6h0m0.4 3.6h0m0.5-1h0m0.2-1.1h0m0.3 4.2h0m0.3-3.4h0m0.1 2.4h0m0.5 0.1h0m0.4-3.2h0m0.1 0.8h0m0.2 0h0m0.6-3h0m0 1.3h0m0.8-0.3h0m0.1 1h0m0 1.4h0m0.4-2.2h0m0.4 1h0m0.1-1.2h0m0.4 2.2h0m0.4 2.7h0m0.1-5.1h0m0.1 2.9h0m1 1.5h0m0.1 1.2h0m0.1-4.2h0m0 1.2h0m0.7-3.5h0m0.3 0.8h0m0.5 2h0m0.2-1.5h0m0.1 1.3h0m0.2 1.8h0m0.3 0.5h0m0.2-4.4h0m0.4 4h0m0.5 2h0m0.1-3h0m0.3 0h0m0.4 1.5h0m0.2-0.4h0m0.3 0.6h0m0.1-3.7h0m0.7-0.8h0m0.3 4.7h0m0.2-2.1h0m0.2-2.9h0m0.6-1.4h0m0 6.3h0m0.4-3.1h0m0.4 0.9h0m0.1-3.1h0m0.5 3.9h0m0.3 1.3h0m0.2-4.8h0m0.4 3.8h0m0.2-0.7h0m0.3-0.5h0m0.1-1.5h0m0.9-0.8h0m0 5.2h0m0.4-1.2h0m0.3 0.3h0m0.1-5.4h0m0.1 0.4h0m0.7 5.1h0m0.1-3.7h0m0.4 0.4h0m0.3 0.5h0m0.4 1h0m0.1-0.3h0m0.4-2.8h0m0.4 3h0m0 2.5h0m0.4-4h0m0.5 3.3h0m0.1-3.6h0m0.4-1h0m0.3-0.5h0m0.1 4.2h0m0.1-2.4h0m0.6 1h0m0.1-2.5h0m0.5-1h0m0.3 2.6h0m0.4 2h0m0.1-6.9h0m0.4 2.2h0m0.1 2.3h0m0.7 0.5h0m0.1-0.1h0m0.2 1.7h0m0.1-3.7h0m0.8 1.8h0m0.3 3.4h0m0.3-0.9h0m0.2-3.6h0m0.5 4h0m0.2-0.1h0m0.3-1.9h0m0.1 2.5h0m0.6-2.4h0m0 1.4h0m0.3 0.2h0m0.1 0.9h0m0.5-0.5h0m0.4-2.6h0m0.3 2.7h0m0.1-4h0m0.3 3.1h0m0.3-3.1h0m0.5 3.2h0m0.1 2.4h0m0.3-1.3h0m0.5 0h0m0.1-7.9h0m0.2 5.3h0m0.5-2h0m0.2-3.3h0m0.6 6.9h0m0.2 2.2h0m0.1-4.9h0m0.5 3.2h0m0.4-1.9h0m0 2.5h0m0.7-2.9h0m0.1 2.7h0m0.6-3.5h0m0.1 2.8h0m0.6-6.8h0m0 7.7h0m0.2-3.7h0m0.3 0.2h0m0.2-1h0m0.1 5.2h0m0.5-2.3h0m0.3-2.3h0m0.7 1.5h0m0.1-0.1h0m0.1-2.1h0m0.5 0.3h0m0.2 0.7h0m0.3 3.8h0m0.1-5.4h0m0.2 4.4h0m0.5-0.9h0m0 0.7h0m0.6 1.2h0m0.4-2.5h0m0.3 1.7h0m0.3-4.4h0m0.2-0.1h0m0.1 2.1h0m0.5-4.7h0m0.2 3.3h0m0.4 5.3h0m0.4-2.1h0m0.1-0.9h0m0.4 0.6h0m0.5 2.3h0m0.1-0.8h0m0.6-7.5h0m0.2 3.8h0m0 3.2h0m0.3-1.4h0m0.5 1.2h0m0.3 0.7h0m0.3-4.1h0m0.3-0.4h0m0.4 1h0m0 2.3h0m0.5-0.6h0m0.1-1.1h0m0.6 1.3h0m0.2 1h0m0.3 0.4h0m0.1 1.1h0m0.7-0.5h0m0.2-0.7h0m0.2-7.1h0m0.4 4.4h0m0.3-1.4h0m0.1-0.6h0m0.2 4.3h0m0.6-2.1h0m0.2 3h0m0.2-5.2h0m0.3 4.6h0m0.3 0.9h0m0.2 0.8h0m0.5-4.2h0m0.2 0.2h0m0.4-2.6h0m0.3 5.1h0m0.4-2.1h0m0.2 2.3h0m0.3-4h0m0.3-2.7h0m0.2 3.1h0m0.3-0.2h0m0.2 1.1h0m0.5-1.9h0m0.2-0.4h0m0.3 2.3h0m0.3 3.6h0m0.3-5.2h0m0.1 5.5h0m0.7-6.4h0m0.1 6.2h0m0.3 0.2h0m0.4-1.5h0m0.6-3.4h0m0 4.3h0m0.3-3.6h0m0.2 2.5h0m0.3-1.1h0m0 0.4h0m0.6 0.7h0m0.3 1.5h0m0.3-6.2h0m0.5 6.7h0m0.4-6.8h0m0.1 0.7h0m0.2-0.1h0m0.4 0.2h0m0.4 5h0m0.3-1.7h0m0.1-4.6h0m0.3 1.8h0m0.2-0.5h0m0.4 1.6h0m0.4 0h0m0.2 4.3h0m0.4-6.6h0m0.2-0.1h0m0.6 0.3h0m0.2 5.1h0m0.1 0.3h0m0.3-3.2h0m0.6-1.9h0m0.1 3.9h0m0.5-4.3h0m0 4.2h0m0.3-2.1h0m0 1.4h0m0.8-1.4h0m0.3-0.6h0m0 1.1h0m0.5 0.5h0m0.3-0.5h0m0.3-1h0m0.5 2h0m0.1-0.3h0m0.4 1.5h0m0.2-2.6h0m0.1 0.5h0m0.6-0.6h0m0.2 0.7h0m0.1-1.9h0m0.7 3.3h0m0.1 0.1h0m0.3-3h0m0.1 2.8h0m0.4-1.8h0m0 2.6h0m0.7-4.5h0m0.2 1.6h0m0.6 3.5h0m0.2-1.4h0m0.1 0.4h0m0.3-1.9h0m0.4-3.6h0m0.2 1.1h0m0.3 3.2h0m0.3 2.3h0m0.3-1.2h0m0.4-7.8h0m0.4 4.2h0m0.2 0h0m0.4 0.1h0m0 5h0m0.4-6.1h0m0.1 3.4h0m0.4 1.3h0m0.1-3.9h0m0.6 4.8h0m0.4-3.3h0m0.3 3.6h0m0.3-0.6h0m0.4-0.7h0m0.1-1.2h0m0.3-2.7h0m0.3 4.9h0m0.4-1.7h0m0.2-1h0m0.6 3.3h0m0.1-1.5h0m0.4-0.4h0m0.2-2.1h0m0.6 1.2h0m0 3.2h0m0.3-0.8h0m0.4-5.5h0m0.2 3.2h0m0.4-4.6h0m0.5 3h0m0 4.4h0m0.1-4.7h0m0.2-1.5h0m0.7 2.4h0m0.2-0.7h0m0.3-0.2h0m0 5.1h0m0.5-1.1h0m0.5 0.7h0m0.3-4.1h0m0.1 2.6h0m0.2-2.8h0m0.4 2.2h0m0.3-2.3h0m0.1-0.2h0m0.6 3.7h0m0.3 0.9h0m0.4-2.7h0m0.1 0h0m0.2-0.3h0m0.1 1.9h0m0.7-4.2h0m0.1 3h0m0.5-3.3h0m0 1h0m0.6 3.8h0m0.1-2.2h0m0.3 2.6h0m0.4 0.8h0m0.3-6.4h0m0.1 3.9h0m0.4-1h0m0.2 1.6h0m0.6-2.4h0m0.2 1.3h0m0.6-3h0m0 4.4h0m0.2 1.4h0m0.2-3.6h0m0.8-2.3h0m0.1-1.2h0m0.5 4.3h0m0.1-0.6h0m0.5-2.4h0m0.1 5.3h0m0.2-4.3h0m0.2-0.2h0m0.5 5.2h0m0.2-3.5h0m0.7-2.2h0m0.1 1.1h0m0.2 3.8h0m0.2 0.4h0m0.3-4.1h0m0 3.5h0m0.6-5.4h0m0.1 3.7h0m0.5 0.9h0m0 0.2h0m0.6-4.5h0m0.5 2.9h0m0 0.4h0m0.5 1.8h0m0.2-4.4h0m0.1 1.1h0m0.6 3.4h0m0.3-0.5h0m0.4-2.6h0m0.1 1.1h0m0.7 0.7h0m0.1-0.5h0m0.5 2.2h0m0.1-6.6h0m0.2 5.4h0m0.2-4.5h0m0.6 5.3h0m0.2-5.5h0m0 1.4h0m0.5 1.3h0m0.2 3.1h0m0.5 0.4h0m0.2-4.5h0m0.2 1.2h0m0.2 0.5h0m0.1-1.6h0m0.5-0.3h0m0.5-4.3h0m0.1 8.8h0m0.3-4.9h0m0.4 0.4h0m0.3 2.8h0m0.4-3.7h0m0.3-0.6h0m0.1 5.5h0m0.4-3.8h0m0.4 0.5h0m0.1-1.4h0m0.3 0.9h0m0.4-1.1h0m0.2 4.4h0m0.3 1.2h0m0.4-2.5h0m0.2-0.7h0m0.6 0.1h0m0.3 2.9h0m0.5-1.3h0m0.1-2.2h0m0.1 2.6h0m0.2 1.3h0m0.7-0.7h0m0.1-1.4h0m0.3 0.1h0m0.3-0.8h0m0.6-3.7h0m0.1 0.4h0m0.4 2.6h0m0 2h0m0.3 0.9h0m0.1-9.3h0m0.6 6.1h0m0.1 3h0m0.6 0h0m0.1-2.6h0m0.7-0.1h0m0.1-2.6h0m0.2 2.1h0m0.2 2.3h0m0.3 0.8h0m0.3-4.8h0m0.6 5.4h0m0.2-1.3h0m0.2-0.6h0m0 0.1h0m0.4-1.9h0m0.5 0h0m0.1 0.1h0m0.2-0.4h0m0.4 0.2h0m0 4h0m0.9-0.3h0m0.1-5.6h0m0.5 3.5h0m0 1.1h0m0.3-6.4h0m0.1 2.6h0m0.7 4.6h0m0.2-2.6h0m0.6 2.6h0m0.1 0.4h0m0.4-3.6h0m0.3 1.6h0m0.2-4.6h0m0 3.8h0m0.5 2.1h0m0.1 0.2h0m0.6-4.8h0m0.3 1.2h0m0.4-0.7h0m0 0.2h0m0.4-3.9h0m0.3 8.2h0m0.2-4.3h0m0.4 1h0m0.4 3.3h0m0.4-5.7h0m0 2.6h0m0.1 3.4h0m0.7-5.4h0m0.3-0.1h0m0.2 0.5h0m0.1 1.4h0m0.4-1.1h0m0.2 2.1h0m0.7 2.3h0m0.2-0.9h0m0.1-3.2h0m0.5-1.4h0m0.2 1.2h0m0.4 0h0m0.1 1.4h0m0.1 3.2h0m0.5-2.9h0m0.1 0.9h0m0.5-2.3h0m0.4 3.8h0m0.4-4.1h0m0.2-1.7h0m0.3 2.6h0m0.4 0.6h0m0.1-4.7h0m0.1 7.3h0m0.7 0.8h0m0.1-6.3h0m0.5 3h0m0.1-3.4h0m0.3 0.9h0m0.1 2.9h0m0.6 2h0m0.1-3.3h0m0.6 3.5h0m0.3-3.6h0m0.5-1.2h0m0.2 3.7h0m0.1-0.5h0m0.5-3.9h0m0.2 4.5h0m0.3 1h0m0.2-7.2h0m0 4.9h0m0.7 1.1h0m0.4-0.9h0m0.1-3h0m0.5 0.1h0m0.2-0.2h0m0.1 4.8h0m0.5 1h0m0.4-0.9h0m0.4-3.2h0m0.2-2.4h0m0.2 3.7h0m0.3 2.4h0m0.2-2.2h0m0.4-2.1h0m0.3 0.5h0m0 1.6h0m0.4-3.3h0m0.4 3.9h0m0.6-5.4h0m0.1 0.8h0m0.3 2.6h0m0.1 2.2h0m0.4-3.6h0m0.5 5.3h0m0.1-0.1h0m0.2-5h0m0.4 2.1h0m0.2-3.5h0m0.4 2.4h0m0 1h0m0.8 2.8h0m0.3-5.5h0m0.1 2.6h0m0.2 2.9h0m0.4-4.8h0m0.5 4.3h0m0.1-2.7h0m0.3-2.1h0m0.4 3.3h0m0.2 2.4h0m0.3-5.6h0m0.1 4.8h0m0.4-1.4h0m0.3-4.4h0m0.7 6.4h0m0 0.2h0m0.5-4h0m0 3.4h0m0.4-0.7h0m0.4-5.2h0m0.2 1.2h0m0.5-4.3h0m0.1 6.2h0m0.3 0.8h0m0.4 2h0m0.1-6h0m0.7 5h0m0 1.5h0m0.6-5.4h0m0.2-1.3h0m0.1 0.8h0m0.2 3.7h0m0.3-2.3h0m0.1 4.4h0m0.6-6.5h0m0.3 2.6h0m0.4-1.7h0m0.4 1.5h0m0.3 0.9h0m0.1 1.3h0m0.7-4.1h0m0 5.7h0m0.3-1.7h0m0.4-2.9h0m0 0.4h0m0.4-1.7h0m0.7 0h0m0.1 2.1h0m0.4 0.9h0m0.1 2.2h0m0.3-3.3h0m0.2 3.7h0m0.2-6.5h0m0.4 6.3h0m0.4-5.3h0m0.2-3.8h0m0.3 4.1h0m0.3 2h0m0.4 2.5h0m0.1 1.1h0m0.4-2.3h0m0.1 1.8h0m0.9-5.6h0m0.1 5.1h0m0.2-7.6h0m0.3 5h0m0.4-1.5h0m0.2 4.2h0m0.4-3.2h0m0 1.6h0m0.5-3.6h0m0.1 1.8h0m0.7 3.5h0m0.1-0.7h0m0.4-0.1h0m0 1.9h0m0.7-4.7h0m0 0h0m0.4 2.7h0m0.2 0.6h0m0.3-3.9h0m0 0.4h0m0.6 0.4h0m0.1 4.3h0m0.6-3h0m0.4 3.2h0m0.4 0.1h0m0.1-4.2h0m0.2 1h0m0.4 0.3h0m0.4 1.6h0m0 1.1h0m0.4-5.1h0m0 4.7h0m0.5-6.6h0m0 2h0m0.9 4.5h0m0.3-6h0m0.3 3.3h0m0.3-0.6h0m0.5 0h0m0.1-2.2h0m0 5.4h0m0.6 0.6h0m0.3-5.2h0m0 2.5h0m0.5 0.7h0m0.4-7.4h0m0.1 3.4h0m0.3 1.3h0m0.4-4.6h0m0 6.5h0m0.4-3.3h0m0.2 2.7h0m0.6 0.8h0m0.3 1.3h0m0.4-2.9h0m0.2-1.1h0m0.4 1h0m0.2 2.8h0m0.1-0.6h0m0.3-2.8h0m0.8 3.2h0m0.1-4.6h0m0.2 1.7h0m0.1-0.6h0m0.4 2.9h0m0.4-2h0m0.2 3.1h0m0.2-5.9h0m0.7 4.8h0m0 0.8h0m0.3-8.5h0m0.1 4.4h0m0.6-0.6h0m0.3 4.1h0m0.2-1.3h0m0.4-1.8h0m0.3 0.4h0m0.3 2.1h0m0.3-3.7h0m0.2 2.2h0m0.3-0.4h0m0.3-5.1h0m0.7 3.9h0m0.1 4.8h0m0.3-3.3h0m0.2-1.6h0m0.3 5.9h0m0.4-3.9h0m0.1 3.4h0m0.4-1h0m0.2-0.7h0m0 1.2h0m0.6-1.1h0m0.2-3h0m0.5 5.3h0m0.3-0.3h0m0.2-4.6h0m0.3 3.9h0m0.5-4.9h0m0.2 5.3h0m0.2-5.4h0m0.2 2.6h0m0.6-3.1h0m0.1 0.3h0m0.5 1.2h0m0 4.4h0m0.5-1.4h0m0.2-1.6h0m0.2 2.1h0m0.5-0.3h0m0.4-1.4h0m0.2-2.7h0m0.1 4.9h0m0.4-1.2h0m0.2 1h0m0.4-3.2h0m0.4 1h0m0.3-1.6h0m0.4-4.2h0m0.2 3.9h0m0.1 2.5h0m0.1-2h0m0.5 3.9h0m0.1-0.6h0m0.7-2.8h0m0.1-1.9h0m0.6 6.3h0m0.3-1h0m0.4-0.3h0m0.1-4.9h0m0.3 5.9h0m0.1-5.3h0m0.8 4.5h0m0.1-5.3h0m0 2.4h0m0.1 2.5h0m1-4h0m0 4.5h0m0.1-0.8h0m0 1.4h0m0.8-3.4h0m0.4 1.2h0m0.1 1.1h0m0.3 1.5h0m0.6-1.4h0m0.2-0.1h0m0.3-7.8h0m0.1 6.5h0m0.4-1.3h0m0.1-1.5h0m0.4 5.4h0m0.1-3.7h0m0.6 1.4h0m0.2-5.9h0m0.6 6.7h0m0.1-4.5h0m0.4 3.3h0m0.3 1.4h0m0.1-1.3h0m0.3 2.5h0m0.4-6.5h0m0 0.7h0m0.8 4.2h0m0.1-2.6h0m0.2 1h0m0.2-1.4h0m0.5 4h0m0.1-2.6h0m0.4-6.7h0m0 4.5h0m0.8 2.6h0m0 0.9h0m0.4 0.9h0m0.1-5.5h0m0.9 1h0m0.1 1.8h0m0.3 2.5h0m0.3-5h0m0.1 4.3h0m0.5-3.5h0m0.2 5.2h0m0.3 0.1h0m0.2-2.9h0m0.2 2.6h0m0.5-3.1h0m0.2-2.1h0m0.3 0.1h0m0.5 4.4h0m0.3-0.7h0m0.3-0.5h0m0 0.2h0m0.3-6h0m0.5 5.5h0m0.1 0.6h0m0.5-0.9h0m0.3-3.2h0m0.1 4.1h0m0.2-7h0m0.2-4h0m0.5 9.4h0m0.1-1.7h0m0.5-0.8h0m0.2 0h0m0.6 1.9h0m0 4.1h0m0.3-4.5h0m0.1 4h0m0.4-2.6h0m0 2.5h0m0.9-4.2h0m0 4.6h0m0.2-4.5h0m0.5 3.5h0m0.1-3.8h0m0.3 2.3h0m0.4 1.3h0m0.1 1.1h0m0.5-2.7h0m0.3 0.7h0m0.3-3.3h0m0.2 4.5h0m0.5-4.1h0m0.1 3h0m0.6-1.7h0m0.1 0.8h0m0.6 3.2h0m0.1-5.7h0m0.3 3h0m0.2 0.5h0m0.4-1.2h0m0.1-0.2h0m0.4 2.1h0m0.3-3.5h0m0.4 5.2h0m0.3-2.6h0m0.3-7.2h0m0.4 3.6h0m0 6.2h0m0.5-5.2h0m0.1 3.4h0m0.6-2.8h0m0.4-1.4h0m0.2 0.1h0m0 2.1h0m0.2-3.8h0m0.5 4.5h0m0.1 2.8h0m0.4-4.8h0m0.4 3.6h0m0.5-4.9h0m0 0.1h0m0.4 4.3h0m0.3-3.6h0m0.6 3.8h0m0.1-1.1h0m0.7-3.5h0m0 1.4h0m0.1 3.9h0m0.2-3.3h0m0.7 2.7h0m0.1-2.9h0m0.2-3.8h0m0.1 7.2h0m0.7-1.5h0m0.3-1.4h0m0.2 3.9h0m0.3-5.6h0m0.1 0.2h0m0.2-3.1h0m0.5 6h0m0.2-3.7h0m0.3 0.4h0m0.5 1.2h0m0.3-1.3h0m0.1 1.4h0m0.5 1.1h0m0.3-1h0m0.4-1.6h0m0.3 1.8h0m0 2.6h0m0.5-2.7h0m0.1 4h0m0.2-5.2h0m0.4 3.3h0m0.1-1.1h0m0.6 3.5h0m0.3-8.9h0m0.4 2.2h0m0 3h0m0.7-6.2h0m0 5.5h0m0.8-0.9h0m0 2.4h0m0.4 3h0m0.2-4.6h0m0.4-4.8h0m0.3 6.5h0m0.4-1.8h0m0 1.2h0m0.5 2.8h0m0.1-4.3h0m0.2 4.3h0m0.5-5.8h0m0.2 2.3h0m0.2-2.2h0m0.3 0.5h0m0.1 2.9h0m0.8-0.4h0m0.1 0.7h0m0.6 2.5h0m0.1-4.7h0m0.2-1h0m0.1 2.9h0m0.6 0.5h0m0.2-0.9h0m0.5-1.9h0m0.1-1.2h0m0.4 6.2h0m0.3-4.5h0m0.2-2.9h0m0.1 5.4h0m0.3-8h0m0.1 4.5h0m0.1-2.9h0m0.5-1.6h0m0.4 7.3h0m0.2-3.3h0m0.4 0.6h0m0.1-2h0m0.2 6.8h0m0.2-4h0m0.7 2h0m0.2-0.2h0m0.2-3.1h0m0.1-0.1h0m0.6 4.4h0m0.2-0.5h0m0.3-0.8h0m0.3-1.9h0m0.3-0.3h0m0.2 1.8h0m0.4-0.6h0m0 1.4h0m0.7 1.4h0m0.2-4.9h0m0.3 0.4h0m0.2 4.5h0m0.6-4.1h0m0.1 2.2h0m0.2 2.7h0m0.3-4h0m0.3-3.7h0m0.2 2.8h0m0.7-0.5h0m0 2.6h0m0.2-2.9h0m0.1 1.4h0m0.5-1.2h0m0.4 5.5h0m0.3-4.5h0m0.4 3h0m0.4-2.9h0m0.1 2.9h0m0.3 0.7h0m0.1 1.3h0m0.8-0.4h0m0.2-6h0m0.2 3.9h0m0.4 2.2h0m0.4-3.7h0m0.1 1h0m0.3 1h0m0.2-1.6h0m0.3-1.2h0m0.5-0.2h0m0.3-6.6h0m0.2 5.2h0m0 4.3h0m0.5-2h0m0.2 1.6h0m0.3 2h0m0.2-0.2h0m0.6-4.8h0m0.1 1.8h0m0.3 0.9h0m0.2 0.9h0m0.4-3.7h0m0.1 1.6h0m0.4-1.5h0m0.2 1.6h0m0.5 2.8h0m0.2-2.2h0m0.3 2h0m0.2-6.9h0m0.2 6h0m0.1-1h0m1-0.8h0m0 2.8h0m0.2-2.6h0m0.1-2.5h0m0.6 3.3h0m0.1-4.3h0m0.3 4.2h0m0.3 2.4h0m0.4 0.5h0m0.5-6.2h0m0.4 3.5h0m0.1 2.2h0m0.1-4.5h0m0.3 1.2h0m0.4 1.7h0m0.3 1.2h0m0.3-5.5h0m0.4 3.3h0m0.1-2.5h0m0.4 1.2h0m0.4 3.5h0m0 1.1h0m0.5-6h0m0.4 2.5h0m0.6 3h0m0 0.5h0m0.1-2.3h0m0.6 0.8h0m0.4-3.9h0m0 4.1h0m0.4 1.1h0m0.1 0h0m0.3-3.9h0m0.3-1.2h0m0.4 2h0m0.5 2h0m0.3-2.7h0m0.3 0.4h0m0.1 2.7h0m0.4-6.7h0m0.2 3.1h0m0.2-1.7h0m0.8 0.7h0m0.1 4.5h0m0.2-5.7h0m0.4 0.4h0m0 2.1h0m0.4-2.5h0m0.5 3.2h0m0.1-2.6h0m0.4 1.7h0m0.4 1.2h0m0.1-0.8h0m0.5-1.8h0m0.2-3.3h0m0.3 2.7h0m0.2 4.1h0m0.2-2.4h0m0.6 1.1h0m0.1-0.4h0m0.4-2.9h0m0.2 5.1h0m0.4-3.4h0m0 4.1h0m0.5-1h0m0.3-1.9h0m0.6 4h0m0.1-2.6h0m0.6-1.1h0m0 2.2h0m0.2-1.8h0m0.3 1.7h0m0.2-2.7h0m0.4-0.1h0m0.7 0.3h0m0.1-2.5h0m0.1 0.2h0m0.3 1.4h0m0.3 0.8h0m0.1-0.8h0m0.6 0.5h0m0.4-2.1h0m0 0.1h0m0 5.4h0m0.8-3.7h0m0 4.5h0m0.5-2.1h0m0.3-1.3h0m0.4-1.5h0m0.1 4.6h0m0.6-1h0m0.2-0.2h0m0.5-4.2h0m0.2-0.4h0m0.1 5.3h0m0.3-0.1h0m0.3-0.1h0m0.4-4.9h0m0.2 3.8h0m0.2-1.6h0m0.3 0h0m0.6-0.8h0m0.3 1h0m0.1 2.3h0m0.4-2.7h0m0.2 4.3h0m0.4-4.5h0m0.2 0.6h0m0.4 2.1h0m0.4-3.5h0m0 3.2h0m0.5-0.4h0m0.3-0.9h0m0.2-5.4h0m0.4 6.6h0m0.3 1.9h0m0.3-6.6h0m0.3 0.7h0m0.4 4.4h0m0.3-1.6h0m0 2.9h0m0.6 0.3h0m0.5-5.2h0m0 2.8h0m0.5 0.9h0m0.1-3.8h0m0.5 1.6h0m0.1 0.2h0m0.1-3.1h0m0.2 2.1h0m0.7-1.1h0m0.1 5h0m0.4-2.6h0m0.3 2.3h0m0.6-2.4h0m0 2.3h0m0.4-4.5h0m0.3 5.6h0m0.1-2.6h0m0.1 1.4h0m0.2-12h0m0.4 9.9h0m0.3 3.2h0m0.4-3.6h0m0.1 0.8h0m0.4-1.6h0m0.1 3.5h0m0.6-0.2h0m0.3-4.1h0m0.1 0.2h0m0.4-0.8h0m0.2-0.6h0m0.2 3.8h0m0.3-3.2h0m0.5 2.5h0m0.5 0.2h0m0.2-3h0m0.6-0.1h0m0 0.6h0m0.4 0h0m0.1 1.5h0m0.4 1.6h0m0.3-2.1h0m0.2 1.4h0m0.1-1.7h0m0.6-1.3h0m0.1 2.8h0m0.5-2.5h0m0.2 1.2h0m0.2 2.4h0m0.5-3.1h0m0.1-0.6h0m0.2 5.9h0m0.8-4.7h0m0 1.6h0m0.4-2.6h0m0.2 2.6h0m0.1 1.3h0m0.3-3h0m0.4-8.2h0m0 11.4h0m0.3 0.6h0m0.6-2.6h0m0.1 2h0m0.1-3.5h0m0.2 5.4h0m0.8-1.2h0m0.1 0.7h0m0.2-2.4h0m0.1-1.5h0m0.6 0.6h0m0.1 2.4h0m0.7-2.5h0m0 3.4h0m0.4-2.2h0m0.4-1.5h0m0.4 1.7h0m0.1 1.5h0m0.4 0.3h0m0.2-3.9h0m0.4 1.1h0m0.2-0.8h0m0.2 1.3h0m0.3-0.5h0m0.3-1.1h0m0.1-0.2h0m0.8-1.6h0m0 6h0m0.4-3.6h0m0 2.9h0m0.8-4.9h0m0.1 3.4h0m0.2-2.6h0m0.2-1.3h0m0.3-6.8h0m0.2 12.3h0m0.2-4.7h0m0.7 2h0m0 2.8h0m0.6-5.9h0m0 0.1h0m0.2 4.3h0m0.2-1.8h0m0.5 4.2h0m0.3-6.2h0m0.1 0.3h0m0.1 4.4h0m0.7-4.2h0m0.4-0.2h0m0.1 4.6h0m0.1-3.5h0m0.7 1.1h0m0.2 2.5h0m0.1 0.4h0m0.3-1.4h0m0.4 1h0m0.3-1.9h0m0.4 0.7h0m0 1.9h0m0.4-0.9h0m0.4 0.1h0m0.5-2.4h0m0.1-1.1h0m0.4-0.2h0m0.4-1h0m0.1 4.2h0m0.5-0.3h0m0.1-1.4h0m0.2-0.1h0m0.5-1.4h0m0.3 4.4h0m0.4-4.5h0m0.1-2.9h0m0.2 2.3h0m0.6 4.7h0m0.1-2.4h0m0.2 1.1h0m0.5 0.4h0m0.4-2.4h0m0.1-0.2h0m0.2 2.6h0m0.4-0.9h0m0.5-1.1h0m0.1-0.5h0m0.2 3.6h0m0.6-1.6h0m0.2-0.5h0m0.1-2.9h0m0.1 2.4h0m0.9 0.9h0m0.2-1.5h0m0.1-2.8h0m0.2 0.7h0m0.5 3.2h0m0.2-0.4h0m0.3 2.7h0m0.4-0.3h0m0.2-0.3h0m0.4-5.2h0m0.1-1.6h0m0.2 2.4h0m0.5 2.3h0m0.4 0.9h0m0.1-4.2h0m0.2 6.1h0m0.5-1.4h0m0.1 0.5h0m0.7-0.2h0m0.2 0.2h0m0.4-4h0m0.1-1.4h0m0.4 3.3h0m0.2 1.2h0m0.6-2.2h0m0.1-1.7h0m0.2 2.4h0m0 0.2h0m0.5-0.6h0m0.2 0h0m0.6 1.7h0m0.1-1.9h0m0.3-2.3h0m0.1 6.1h0m0.8-3.3h0m0.3-1h0m0.5 2.2h0m0 2.5h0m0.3-4.1h0m0.3 2.1h0m0.2-5.8h0m0 5.8h0m0.6 0.1h0m0.5-4.3h0m0.3 1.9h0m0.1 3.9h0m0.2-5.4h0m0 5.3h0m0.9-2.2h0m0.2 1h0m0.3-0.1h0m0 1.1h0m0.6-5.4h0m0.1 4.7h0m0.4-4.6h0m0.2-0.3h0m0.4 5.6h0m0.2-1.4h0m0.7-3.9h0m0.1 0.2h0m0.3 4.1h0m0.2-1.3h0m0.4-2.4h0m0.4 3.6h0m0.1-3.9h0m0.4 2.8h0m0.1 1.2h0m0.5-0.2h0m0.2-2.6h0m0 3.8h0m0.6 0.6h0m0.4-4.9h0m0.2-2.9h0m0.2 6.3h0m0.5 1.4h0m0.2 0.3h0m0.5-0.1h0m0.3-1.6h0m0 1.3h0m0.6-8.8h0m0.2 8.4h0m0.3-1.6h0m0.1-1.7h0m0.2-1.4h0m0.9 3.5h0m0 0.1h0m0.3 0.6h0m0.3-2.9h0m0.2-1.4h0m0 3.3h0m0.8 0h0m0.2 0.9h0m0.4-8.2h0m0 3.6h0m0.4 5.3h0m0.1-4.8h0m0.5 0.3h0m0.1 3.5h0m0.5 0.1h0m0.3-0.6h0m0.2-1.9h0m0.3 3.5h0m0.6-1.9h0m0 0.6h0m0.6 0.4h0m0.3 1.5h0m0.2-6.5h0m0 3.7h0m0.7-1.9h0m0.1 3.5h0m0.5-2.7h0m0.2-0.7h0m0.3 2.2h0m0.1 1.1h0m0.5-4.8h0m0 5.9h0m0.7-2.9h0m0.2-3.1h0m0.3 3.9h0m0.2-3.5h0m0.2 0.8h0m0 0.5h0m0.6-4.1h0m0.3 2.2h0m0.6 0.9h0m0.1-0.2h0m0.2 2.1h0m0.2-1.1h0m0.6 3.2h0m0 0.9h0m0.7-2.7h0m0.1-3.1h0m0.4 0.6h0m0.3 3.6h0m0.4-2.4h0m0.2-5.3h0m0.5 5.9h0m0.2-0.1h0m0 0.9h0m0 0.1h0m0.1-6.6h0m0.9 6.5h0m0 1.2h0m0.3-3.8h0m0.2 5.6h0m0.5-7h0m0.2 3.5h0m0.3 3.1h0m0.1-4.2h0m0.5 3.6h0m0.1-3.1h0m0.8 2.1h0m0.1-0.1h0m0.6-4.1h0m0.1 1.7h0m0.5-5h0m0 3.9h0m0.3 0.7h0m0.2 4.5h0m0.4-4.1h0m0.3 0.9h0m0.2 3.6h0m0.1-3h0m0.4-1h0m0.3 2.9h0m0.5-6.1h0m0 1.8h0m0.8 5.5h0m0.1-3h0m0.4-1.7h0m0.2 1.3h0m0.5-1.2h0m0.1 0.6h0m0.2-2.6h0m0.3 5h0m0.2-0.5h0m0.2-3.5h0m0.8 0.2h0m0.2-0.4h0m0.2 1.1h0m0.2 0.7h0m0.4-0.4h0m0.2 0.3h0m0.2-0.6h0m0.6-1.7h0m0.2 4.8h0m0.4-0.8h0m0 1.1h0m0.1-2.8h0m0.6 3.4h0m0.1-2.5h0m0.7 1.8h0m0.2 1h0m0.5-3.5h0m0 0.1h0m0.3 2.1h0m0.4-4h0m0.6 1.8h0m0 3.4h0m0.2-0.8h0m0.5-0.1h0m0.2-2.7h0m0.3-4h0m0.2 8h0m0.5-2.7h0m0.2 0h0m0.4-0.1h0m0.2-3.5h0m0.2 2.2h0m0.3-3.9h0m0.4 6.3h0m0.5-1h0m0.1-2.6h0m0.2 3.8h0m0.2-4.5h0m0.6 5.9h0m0.2-1.3h0m0.1-4.6h0m0.1 1.6h0m0.6 0.1h0m0.5 2.8h0m0.4 0.7h0m0.2-3.1h0m0.1-0.2h0m0.4 3.8h0m0.1 0.4h0m0.4-5.2h0m0.4 1.4h0m0.1 3h0m0.5-1.8h0m0.2 2.3h0m0.5-5.6h0m0.1 0.1h0m0.4 5.2h0m0.2-2.3h0m0.7-0.9h0m0.1-0.9h0m0 3.2h0m0.2 1.2h0m0.5-4.1h0m0.2 1.1h0m0.4 3.3h0m0.3-5.4h0m0.5 2.5h0m0.1-5.8h0m0.6 6.9h0m0.2-4h0m0.1-0.1h0m0.1-3.7h0m0.6 4.9h0m0 2.5h0m0.6-0.4h0m0 0.1h0m0.5-2.3h0m0.2-1.6h0m0.4 4.2h0m0.3-3.4h0m0.3 3.3h0m0.3 0.4h0m0.4 0.3h0m0 1.8h0m0.5-5.5h0m0.2 3.9h0m0.4-1.7h0m0.5-3.4h0m0.1-2.1h0m0.2 8h0m0.5-4h0m0.1 1h0m0.6-1.8h0m0.1 1.4h0m0.6-1.2h0m0 4.9h0m0.4-6.3h0m0.4 3.7h0m0.1-1.3h0m0.2-1.8h0m0.5-8.1h0m0 13.2h0m0.1-1.8h0m0.4-3.4h0m0.2 0.4h0m0.5 3.3h0m0.1-3.6h0m0.3 0.6h0m0.1 4.4h0m0.7-3h0m0.3-6.1h0m0 6.2h0m0.3 1.4h0m0 2.4h0m0.6-2.1h0m0.3-0.8h0m0.2-2.9h0m0.3 1.1h0m0.2-0.1h0m0.2 3.4h0m0.4-3.1h0m0.3 1.1h0m0.6-0.2h0m0.1 2.4h0m0.3-7.4h0m0.2 6.3h0m0.5-0.5h0m0 0.6h0m0.6-4.2h0m0 6h0m0.6-9.5h0m0.3 6.5h0m0.5 2.3h0m0.1-0.6h0m0.5-0.5h0m0.2-4.1h0m0.1 4.1h0m0.3-0.3h0m0.5 0.4h0m0.1 0.8h0m0.7-3.6h0m0 3.3h0m0.3-0.3h0m0.2-4.5h0m0.2 3.7h0m0.2-1.7h0m0.5 1.5h0m0.2-3.4h0m0.5 3.3h0m0.1 2.1h0m0.5-3.6h0m0.4 4.5h0m0.2-1.4h0m0.1 1h0m0.6-4.1h0m0.3-0.8h0m0.5 5.3h0m0.1-4.6h0m0 3.2h0m0.1-3h0m0.7 0.8h0m0.2-1.4h0m0.5-1h0m0.2 2.1h0m0.5-1.5h0m0 3.8h0m0.3-3.1h0m0.5 0.5h0m0 2.7h0m0.3 0.2h0m0.4 1.4h0m0.4-2.6h0m0.2-1.7h0m0.2 2.5h0m0.3-4.1h0m0.1 5.6h0m0.7-4.1h0m0.3 3.1h0m0.1-3.3h0m0.3 0h0m0.3-0.4h0m0.4 2h0m0.4-0.2h0m0.3 0h0m0.1 1.7h0m0.3-3.4h0m0.7-2.9h0m0 7.4h0m0.3-6.1h0m0.4 1.5h0m0.4 2.3h0m0.1 2h0m0.5-0.7h0m0.2-4.7h0m0.2 2.9h0m0.2-2.2h0m0.5 1h0m0 0.1h0m0.4 3.4h0m0.3-2h0m0.7-1.5h0m0.2 4.5h0m0.3-0.3h0m0.2-3.2h0m0.4 2.2h0m0.2-4.8h0m0.2-0.3h0m0.1 2.4h0m0.6 2.4h0m0.3-3h0m0.2 1.1h0m0.4-0.8h0m0.1 3.9h0m0.1-1.4h0m0.6 1.7h0m0.2-3.1h0m0.3-2.8h0m0.2 3.1h0m0.8 0.6h0m0.2-0.4h0m0.2 0.6h0m0.1-1.3h0m0.7 0.9h0m0.1-2.7h0m0.6 4h0m0.1-5.1h0m0.2 0.4h0m0.4 5.1h0m0.1-4.8h0m0.2 1.2h0m0.4-1.9h0m0.5 2.1h0m0.1-1h0m0.4 4.8h0m0.3-3.5h0m0.1-0.5h0m0.4 2.9h0m0.5-4.6h0m0.1 4.3h0m0.1-8.4h0m0.5 4.2h0m0.1 4.2h0m0.8 0.2h0m0 0h0m0.2 1.5h0m0.1-2.3h0m0.7-3.2h0m0.2 1.5h0m0.5-1.3h0m0.1 0.6h0m0.2 1.5h0m0.2-0.1h0m0.5-3.2h0m0 4.9h0m0.8-3.6h0m0.1-1.2h0m0.2 1.3h0m0.1 4.2h0m0.8-0.2h0m0.1-2h0m0.3-4.5h0m0.1 3.1h0m0.7 2.8h0m0.1-1.1h0m0.5 1.1h0m0.2-3h0m0.1 4.3h0m0.3-2.6h0m0.4-3h0m0.3 2.7h0m0.4 1.8h0m0.2-3.4h0m0.3 1h0m0.2-2h0m0.4 2.1h0m0.3 1.2h0m0.5 0h0m0.2-0.9h0m0.5 1.9h0m0.1 0.9h0m0.3-0.2h0m0.3-3h0m0.2-2.5h0m0.4-0.2h0m0.2 6h0m0.4-4h0m0.5-1.3h0m0.1 3.2h0m0.2 0.6h0m0.4-3h0m0.3 2.5h0m0.3-3.6h0m0.4-2.3h0m0.2 6.6h0m0.1-0.5h0m0 2.3h0m0.7-6.5h0m0.4 1.1h0m0.2 5.3h0m0.4-6.1h0m0.1 0.2h0m0.3 2.3h0m0.3-1.4h0m0.6 4.4h0m0.2-3.5h0m0 0.9h0m0.7 2.6h0m0.2-2.3h0m0.4-1.2h0m0.2 1.6h0m0.2 1.4h0m0.4 1.2h0m0.2-5.2h0m0.4 2.4h0m0.3 2.1h0m0.2 0.8h0m0.7-9.2h0m0 0.6h0m0.7 2.9h0m0 4.4h0m0.1-0.6h0m0.3 1.6h0m0.5-5h0m0.3 4.6h0m0.3-3.6h0m0.2 1.3h0m0.4-0.3h0m0.2 2.4h0m0.3-3.6h0m0.3 4.1h0m0.2 0.2h0m0.4-3.8h0m0.4-2.2h0m0.1 2.4h0m0.2-2.1h0m0.4 0.5h0m0.8-0.1h0m0 5.4h0m0.1-5.8h0m0.1 1.4h0m0.7-0.3h0m0.1 0.7h0m0.5-1.2h0m0 2.8h0m0.5-0.4h0m0 1.4h0m0.5-1.6h0m0.3-1.5h0m0.2 3.7h0m0.4 1h0m0.3-0.3h0m0.2-3.2h0m0.4-1h0m0 4.3h0m0.6-0.5h0m0.4-2.8h0m0.3-2h0m0.2 4.7h0m0.4-5.9h0m0.1 5.7h0m0.6 0.9h0m0.1-2.8h0m0.4-3.4h0m0.4 3.8h0m0 0.2h0m0 1.9h0m0.7-0.9h0m0.1-4.5h0m0.6-0.6h0m0.2 5.9h0m0.2-3.3h0m0.3 0h0m0.6-0.2h0m0.1 0.3h0m0.5-0.1h0m0.2-2.4h0m0.2 1.2h0m0.3 1.1h0m0.5-5.6h0m0.1 3.7h0m0.3 2.3h0m0.3 0.5h0m0.4-0.2h0m0.1-2.5h0m0.3-0.5h0m0.6 3.4h0m0.2 0.8h0m0.3 1.5h0m0.1-4.2h0m0.2 1.9h0m0.7-3.8h0m0.3-1.5h0m0.2 7.4h0m0.2-1.8h0m0.6 1.3h0m0.1-3.3h0m0.3 1.1h0m0.3 2.1h0m0.2-5.1h0m0.1 1.6h0m0.7 0.9h0m0.1 1.2h0m0.3 2.4h0m0.3 0.2h0m0.4-3.7h0m0.2-2.8h0m0.2 4.1h0m0.1 0.1h0m0.5-4h0m0.5 4.9h0m0.5-5.9h0m0 0.4h0m0.2-1.1h0m0.1 2.5h0m0.7-0.5h0m0.3 5.7h0m0.1-9.2h0m0.1 1.1h0m0.6 3.8h0m0.2-1.2h0m0.4 0.6h0m0.3 1.9h0m0.7-1.8h0m0.1 1.9h0m0.1-0.5h0m0.1-4.4h0m0.6 5.5h0m0 1.7h0m0.4-1.9h0m0.6 0.6h0m0.1-4.2h0m0.2 1.8h0m0.5-0.2h0m0 4.4h0m0.6-0.7h0m0.2-3.7h0m0.5 0.9h0m0.2 1.1h0m0.2-5.5h0m0.1 8.1h0m0.4 0.1h0m0.2-6.2h0m0.8 5.8h0m0.1-6h0m0.1 1.3h0m0.5 0.3h0m0.3 3h0m0.2-2.3h0m0.3 2.9h0m0.1-3h0m0.7 1.1h0m0.3 0.4h0m0.1 1.9h0m0.3-4h0m0.5 0.5h0m0.1 0.7h0m0.2-3.4h0m0.6 1.3h0m0 0h0m0.5 2.1h0m0.4 0.8h0m0.3-3.5h0m0 5.5h0m0.6-4h0m0.2 4.3h0m0.2-5.4h0m0.4 0.7h0m0.2 3.2h0m0.4-1.8h0m0.3-0.8h0m0.2 4.1h0m0.3-2h0m0.4 0.5h0m0.1-3.3h0m0.4 3.8h0m0.1 0.4h0m0.5-5.3h0m0.1 0.9h0m0.3-4h0m0.3 6.8h0m0.2-2.8h0m0.2 2.5h0m0.3 2.7h0m0.8-1.7h0m0.1-4.3h0m0.3 0.2h0m0 6h0m0.8-2.4h0m0.1-2.1h0m0.1 2.4h0m0.2-2.8h0m0.3-0.7h0m0.3 4.3h0m0.6-0.5h0m0.3-12.4h0m0 8.5h0m0 0.2h0m0.1-0.7h0m0.6 2.2h0m0 0.6h0m0.6 1.6h0m0.3-7.6h0m0.3 8.3h0m0.2 0.5h0m0.5-3.8h0m0.2-1.7h0m0.5 6.4h0m0.2-1.5h0m0.4-2.9h0m0.1 1.3h0m0.3-3.3h0m0.4 3.8h0m0.1 1.5h0m0.6-5h0m0.1 2.7h0m0.2 1.6h0m0.6-1.1h0m0.3-7.3h0m0.1 7.4h0m0.4 2h0m0.2-0.5h0m0.3-3.1h0m0.6 3.8h0m0.1 0h0m0.4-0.3h0m0.1-2.3h0m0.5 3.2h0m0.1-0.6h0m0.2-13.9h0m0 8.2h0m0.3 0.9h0m0.6 3.4h0m0.1-2.1h0m0.4-0.7h0m0.2-0.2h0m0.6-4.9h0m0.1 4.3h0m0.4 3.2h0m0.3 1.6h0m0.2-4.5h0m0.4 4.8h0m0.3-5.3h0m0.1 2.2h0m0.5-1h0m0 0.8h0m0.4-2.8h0m0.4-2.8h0m0.1 8.8h0m0.3-5.9h0m0.5 1.1h0m0.3 4.9h0m0.6-2.4h0m0 2h0m0.2 1h0m0.4-3.2h0m0.2-3.1h0m0.1 0.4h0m0.4 0.8h0m0.1-0.4h0m0.5 4.3h0m0.5 1.1h0m0.2-3.2h0m0.5 0.7h0m0.2 1.7h0m0.1-5.3h0m0.4 3.5h0m0 1.3h0m1-0.7h0m0 1.9h0m0.4-1.9h0m0.2 0.1h0m0.5-3.5h0m0.1 3h0m0.3-2.6h0m0.1-4.7h0m0 6.5h0m0.3-0.9h0m0.5-0.2h0m0.6 0.1h0m0 1.4h0m0.5-2.8h0m0.2 3.5h0m0.1-3.2h0m0.3 0.7h0m0.4 0.2h0m0.2-2h0m0.6 2.3h0m0 0.2h0m0.6 0.7h0m0.1-2h0m0.3 2.3h0m0.3-0.4h0m0.3-1.8h0m0.3 4h0m0.3-1.7h0m0 1h0m0.6-0.9h0m0.2 1.7h0m0.2-1.1h0m0.4 0.3h0m0.4-2.2h0m0.1 3h0m0.7 0h0m0.1-4.4h0m0.3 4.1h0m0.1-4.8h0m0.6 4.3h0m0.1 0.8h0m0.3-1.3h0m0.4-1.6h0m0.6-5.6h0m0 3h0m0.5 4.5h0m0.2-1.7h0m0.1 2.3h0m0.2-1.2h0m0.7-0.5h0m0.1 0.2h0m0.3-0.6h0m0.2 3.1h0m0.3-5.3h0m0 0.8h0m0.5 4.1h0m0.1-1.9h0m0.8-1.1h0m0.1-1.4h0m0.2 1.2h0m0.2 3.6h0m0.7-1.9h0m0.2 2.4h0m0.1-4.3h0m0.4 1.4h0m0.3-2.5h0m0.2 4.3h0m0.4-3.8h0m0.2 4.2h0m0.5-3.1h0m0.3 2.1h0m0.1 0.4h0m0.2-5.1h0m0.5 3h0m0.1-2.6h0m0.5 5.7h0m0.2-2.1h0m0.6 0.1h0m0.2-0.5h0m0.3-3.6h0m0.3 2.3h0m0.5 0.2h0m0 2.9h0m0.4-4.9h0m0.3 1.8h0m0.4 3h0m0.1-1.2h0m0.2-3.4h0m0.5 0.8h0m0.4 3.8h0m0.3-0.5h0m0.1-1.6h0m0.1-2.8h0m0.6-6.5h0m0.4 8.6h0m0 0.5h0m0.4 1.1h0m0.1-3h0m0.2 1.1h0m0.2 1.8h0m0.5-4.2h0m0.3 1.5h0m0.6 4.9h0m0.1-4.5h0m0.4 2.4h0m0.1-1.3h0m0.2-1.6h0m0.3 2.7h0m0.3-2.7h0m0.3 2.3h0m0.5-2.3h0m0.3-1.1h0m0.5 3.5h0m0 0.6h0m0.2-3.4h0m0.1 2.4h0m0.5 0.7h0m0.5-3.8h0m0.3 5.1h0m0.1 1h0m0.3-2.4h0m0.5-2.6h0m0.3 2.6h0m0.1-3.3h0m0.4 5.5h0m0.2-2h0m0.4-2.8h0m0.4 1.1h0m0.1 0.7h0m0.2-0.6h0m0.3 3h0m0.3-1.5h0m0.8-3.2h0m0.1-0.8h0m0.5 3.7h0m0.1-3.6h0m0.2 2.7h0m0.3-1h0m0.3 2.6h0m0.3-2h0m0.3 1.8h0m0.3-1.6h0m0.1 0h0m0.2 3.6h0m0.4-0.2h0m0.5-0.6h0m0.5-4.6h0m0 5.3h0m0.3-0.6h0m0.3-1h0m0.2 1.3h0m0.1-1.1h0m0.8-1.7h0m0.3-2.1h0m0.1 3h0m0.1-6.5h0m0.1 3.4h0m0.7 1.2h0m0.1-2.1h0m0.3 3.3h0m0 1.4h0m0.6-3.7h0m0.1-0.1h0m0.3 0.9h0m0.1 3h0m0.7 0.8h0m0.1-5.3h0m0.6 2.3h0m0.3-0.7h0m0.4 0.4h0m0 2.4h0m0.2-1.8h0m0.4 2.9h0m0.4-2.4h0m0.2 2.1h0m0.3-2h0m0.3-2h0m0.3-3.3h0m0 4.9h0m0.5-0.7h0m0.4 2.1h0m0.5-3.4h0m0.1 0.9h0m0.8 0.8h0m0 0.5h0m0.2-3.3h0m0.1 2.8h0m0.6 2.8h0m0.1-2.5h0m0.5-0.4h0m0.3 2.5h0m0 0.6h0m0.1-0.2h0m0.8-2.6h0m0.1 2.1h0m0.4 0.2h0m0.4-5.3h0m0.4 1.4h0m0.2-0.1h0m0.3-2h0m0 3.5h0m0.7 0.9h0m0.1-1.7h0m0.5 2.8h0m0 0.2h0m0.4-3.9h0m0.1 1.6h0m0.6-1.1h0m0.1-1.1h0m0.3-0.1h0m0.1 5.2h0m0.7-0.8h0m0.3 1.4h0m0.2-4.2h0m0.1 4h0m0.4-0.6h0m0.1-7.2h0m0.4 5.7h0m0.3 2.2h0m0.7-3.4h0m0.1 1.9h0m0.3-2.6h0m0.4 3.1h0m0.3 0.3h0m0.1-0.8h0m0.4-4.1h0m0.1 5.5h0m0.3-0.2h0m0.6-3.7h0m0.1 0.1h0m0.3-1.2h0m0.3-1h0m0.4 4.1h0m0.2-0.9h0m0.5-3.2h0m0.2 1h0m0.2 5.6h0m0.2-2.5h0m0.5 1.7h0m0.4-5.1h0m0 0.7h0m0.7 0.1h0m0 3.9h0m0.3-0.9h0m0.5-1.9h0m0.3-0.7h0m0 2h0m0.7-3.4h0m0 5.9h0m0.4-5.3h0m0 0.2h0m0.6 3.9h0m0.3-2h0m0.5 0.4h0m0.1-3.5h0m0.1 5h0m0.4-1.4h0m0.3 2.4h0m0.2-1.8h0m0.5-3.1h0m0.2 1h0m0.2 2h0m0.1-4.3h0m0.6 0.8h0m0 2.9h0m0.5 2h0m0.3 0.3h0m0.4-4.7h0m0.2-1.1h0m0.4 0.7h0m0.4 2.9h0m0.1 2.2h0m0.2-5.4h0m0.7 0.8h0m0 2.9h0m0.5-3.7h0m0.3 5.7h0m0.2-3.6h0m0.3 2.8h0m0.3-4.4h0m0.3 5.3h0m0.5-0.9h0m0.2-0.9h0m0.2-9.2h0m0.1 5.1h0m0.3-0.3h0m0.2 5.4h0m0.4 1h0m0.3-7.3h0m0 5.8h0m0.6-6.7h0m0.1 2.6h0m0.4 2.2h0m0 1.9h0m0.6-3.9h0m0.5-4.3h0m0 4.3h0m0.5 0.1h0m0.3 0.1h0m0.1 2.8h0m0.5-4.3h0m0.1 5.4h0m0.7 0.5h0m0 0.1h0m0.6-0.8h0m0.2-8.5h0m0.2 5.2h0m0 3.2h0m0.8-1.6h0m0.1 0.4h0m0.4 0.6h0m0.3-2.3h0m0.3 1h0m0.3 0.1h0m0 2.7h0m0.1-2.5h0m0.6 1.7h0m0.2-0.4h0m0.3-2.7h0m0.1 0.5h0m0.6-2.3h0m0.2 2.9h0m0.4-0.7h0m0.4-2h0m0.1 6h0m0.1-9.7h0m0.6 3.6h0m0.5 5.5h0m0.2-3.6h0m0.4 2.1h0m0.1 1.6h0m0.2-4.9h0m0.5 1.4h0m0.3 3.2h0m0.4 0.9h0m0.1-7.1h0m0.2 5.2h0m0.6-0.7h0m0.2-1.5h0m0 2.5h0m0.4-4.7h0m0.5 4.6h0m0.4 0.3h0m0.2 0.7h0m0.1-2.6h0m0.4-0.3h0m0.2-2h0m0.6 0.9h0m0.2 3.1h0m0.2 0.5h0m0.4-3.9h0m0.1 2.2h0m0.3 2.5h0m0.4-3.4h0m0.4 1.2h0m0.2-8.6h0m0.2 2.7h0m0.3 6.1h0m0.3 1.3h0m0.1-5.4h0m0.3 5.2h0m0.5 0.6h0m0.1-3.2h0m0.3 0.6h0m0.4 2.3h0m0.5-2.2h0m0.2-3.1h0m0.5 4h0m0.1-1.3h0m0.1-2h0m0.3-0.4h0m0.3-4h0m0.1 5.7h0m0.6 4.3h0m0.1-5.9h0m0.4 2.5h0m0.3 1.6h0m0.5-0.7h0m0.1-1.6h0m0.2 0.9h0m0.1 2.2h0m1-3.2h0m0.1-1.9h0m0.1 1.8h0m0 4.1h0m0.9-1.5h0m0.2 1.8h0m0.2-2.3h0m0.2-1.6h0m0.6-2.9h0m0 4h0m0.3-3.8h0m0.1 3.2h0m0.4 0.7h0m0.3-1h0m0.6-0.7h0m0.2 0.3h0m0.1-1.6h0m0.5 2h0m0.4-2.3h0m0.3 3.6h0m0.3 0.3h0m0.1-1.6h0m0.4-0.4h0m0 1.4h0m0.6-0.2h0m0.4-0.4h0m0.2-2.4h0m0.3 4.5h0m0.6-5.2h0m0 0.5h0m0.4 0.1h0m0 0h0m0.4 5.3h0m0.4-9.4h0m0.3 5.4h0m0.1 3h0m0.7 0.4h0m0.1-0.3h0m0.3-4.4h0m0.3 1.4h0m0.2 2.8h0m0.2-4.4h0m0.6 0.4h0m0.2 0.1h0m0.3-1.1h0m0.1 4h0m0.5-2.6h0m0.2 2.2h0m0.5-1h0m0.1 1h0m0.5-2.1h0m0.2 1.3h0m0.3-2.3h0m0.2-0.2h0m0.6-3.7h0m0.1 2.1h0m0.4 1.9h0m0.3-0.7h0m0.5 2.8h0m0 0.9h0m0.3 1.1h0m0.3-4.6h0m0.3 3.7h0m0.2-1.8h0m0.4-0.8h0m0.3 1.3h0m0.1-2.5h0m0.5 5.9h0m0.2-3.2h0m0.4-2.4h0m0.1 5.5h0m0.4-4h0m0.4 4h0m0.3-3.7h0m0.5 3.3h0m0.1-2.1h0m0.5-1.3h0m0.1 0.6h0m0.3-0.7h0m0.4-0.1h0m0.1 0.7h0m0 0.6h0m1 0h0m0 0.8h0m0.5-2.9h0m0.2 3.1h0m0.2 0.7h0m0.1-4.5h0m0.5-0.5h0m0.4 5.3h0m0.1-2.1h0m0.1 2.3h0m0.5 0.1h0m0.5-0.8h0m0 1.3h0m0.3-4.8h0m0.4 4.3h0m0.1-4.7h0m0.9 2.8h0m0 0h0m0.6-2.4h0m0 0.8h0m0.2 2.3h0m0.4 2.1h0m0.4-2.7h0m0.1-5.7h0m0.4 5.9h0m0 2.1h0m0.5-5.8h0m0 1.6h0m0.5-0.8h0m0.6 0.2h0m0.3 5h0m0.1-3.4h0m0.4 2.3h0m0.3-2.5h0m0.1-2.2h0m0.4 4.3h0m0.2-3.1h0m0.1 0.4h0m0.8-2.1h0m0.1 5.6h0m0.3 0.4h0m0.2-2.5h0m0.5-1.9h0m0.2 4.1h0m0.5 0h0m0.3-4.7h0m0.2-4.5h0m0.3 3.4h0m0.5 3.8h0m0 2.2h0m0.4 0h0m0.2-4.4h0m0.3-0.7h0m0.1 0.9h0m0.6 4.1h0m0 0.2h0m0.5-2.7h0m0.1-1.7h0m0.5 4.9h0m0.5-2.3h0m0.2-0.4h0m0.2-3.4h0m0.3 3.9h0m0.4 0.1h0m0.3 0.2h0m0.2 0h0m0.2-5.2h0m0.4 7.1h0m0.3-3.5h0m0.5-1.6h0m0.1-0.9h0m0.4 5.4h0m0.3-2.5h0m0.1-1.4h0m0.5 1h0m0.2-2.2h0m0.5-2h0m0 6.4h0m0.6-0.8h0m0.3-2.1h0m0.4-0.1h0m0.2 3.7h0m0.2-0.1h0m0.2-1.3h0m0.6-0.7h0m0.1 0.5h0m0.3-0.4h0m0.1 2.6h0m0.4-1h0m0.1 0.9h0m0.7-3.1h0m0.3-0.1h0m0.1 3.3h0m0.1-0.7h0m0.5-5h0m0.2 1.4h0m0.7 0.7h0m0 1.8h0m0.7 0.6h0m0.1 0.6h0m0.1-5.5h0m0.3 4.4h0m0.4-4.4h0m0.1 1h0m0.5 2h0m0 2.5h0m0.8-4.8h0m0.1 5.3h0m0.1-6.3h0m0.1 3.1h0m0.8-2.9h0m0 0.6h0m0.4 0.4h0m0.1 2.3h0m0.5-1.5h0m0.1-5h0m0.9 4.1h0m0.1 3h0m0.3 0.4h0m0.2-0.3h0m0.2-2.8h0m0.2 4h0m0.6-0.8h0m0.3-1.6h0m0.4-1.1h0m0.1 2.2h0m0.2-2.5h0m0.5 4.3h0m0.3-0.3h0m0 0.4h0m0.3 0.5h0m0.2-3.6h0m0.6 2.6h0m0.1-4.6h0m0.6-0.1h0m0.2 3.1h0m0.2 0.9h0m0.1-3.3h0m0.8 2.9h0m0.1 0.9h0m0.2 0.8h0m0.4-4.4h0m0.3 1.1h0m0 1.4h0m0.7 0.5h0m0 1.9h0m0.6-10.1h0m0.2 3.7h0m0.3 0.4h0m0.2 6.1h0m0.5-4.4h0m0.1 0.2h0m0.7-2.2h0m0 2.4h0m0.3 0.7h0m0 3.1h0m0.4-4.7h0m0.6-0.5h0m0.2 4.7h0m0.2 0.2h0m0.5-1.8h0m0.3-2.6h0m0.5 0.9h0m0.1 2.5h0m0.3-2.1h0m0.1 0.8h0m0.2 0.1h0m0.3 0.7h0m0.8-1.6h0m0.1 2.6h0m0.1 0.3h0m0.3-4.7h0m0.2-0.1h0m0.5 3.2h0m0.1 0.5h0m0.2-3.9h0m0.4 0.9h0m0.3 3.5h0m0.5-3h0m0.3 2.3h0m0.2-6.9h0m0.1 3.3h0m0.8 5.4h0m0.1-3.8h0m0.2-0.2h0m0.5 4h0m0.2-0.3h0m0.3 0.2h0m0.1-9.5h0m0.1 4h0m0.8-0.6h0m0.2 4.6h0m0.3 0.5h0m0.4-7.3h0m0.2 6.4h0m0.2-2h0m0.3 0.6h0m0.3 1.9h0m0.3-2.8h0m0 1h0m0.7 0.6h0m0.2-3.9h0m0.3 1.4h0m0.4 1.8h0m0.3-0.7h0m0.1 2h0m0.5-2.1h0m0.1-3.3h0m0.4-1.8h0m0.4 7h0m0.1-5.7h0m0 4.3h0m0.8-1.1h0m0.2 3.1h0m0.2 1.5h0m0.2-2.7h0m0.6-3.6h0m0 6.3h0m0.7-3h0m0.3 2.2h0m0.1-2.3h0m0.1-0.2h0m0.5 1.6h0m0.4-1.2h0m0.4 1.7h0m0.2-3h0m0.3 0.4h0m0 1.9h0m0.8-4.2h0m0 1.5h0m0.5 4.5h0m0.1-3.4h0m0.4-6h0m0 7.4h0m0.6 0.9h0m0.1 0h0m0.3-0.1h0m0.6-3.9h0m0.4 0.5h0m0.1-0.4h0m0.1-0.9h0m0.4 1.2h0m0.4-1.1h0m0.2 3.7h0m0.4-2.2h0m0.3 2.4h0m0.3-1.8h0m0.2 3.8h0m0.7-2.8h0m0.1 2.9h0m0.1-1.4h0m0.1 0.7h0m0.5-0.9h0m0.2-2.6h0m0.4 2.7h0m0 0.6h0m0.7-2h0m0.1 3.1h0m0.4-5.2h0m0.4 1.6h0m0.5-1.5h0m0 2.4h0m0.4-0.8h0m0.1 3.6h0m0.5-2.3h0m0.3 0.8h0m0.4-1.8h0m0 0.4h0m0.4-1.5h0m0.3 1.4h0m0.2-0.9h0m0.5 1.4h0m0.1-2.7h0m0 3.1h0m1 0.6h0m0.2-2.2h0m0.4-2.5h0m0.1-0.3h0m0.5 1.4h0m0.1 4.1h0m0.1-5.4h0m0.1 2.3h0m0.9 1.9h0m0 0.1h0m0.3 0.8h0m0.3-6.6h0m0.3 6.3h0m0.1-2h0m0.5 1.2h0m0 1.1h0m0.6-4.3h0m0.2 5.2h0m0.8-5.7h0m0 3.7h0m0.1-3.2h0m0.6-1.1h0m0.5 0.6h0m0 1.7h0m0.1 2.9h0m0.5 0.5h0m0.1-2.7h0m0.2-5.8h0m0.5 9.1h0m0.1-5.5h0m0.5-3.8h0m0.3 5.3h0m0.4 0.4h0m0.4 0.6h0m0.4 1.3h0m0 0.8h0m0.4-5.4h0m0 4.4h0m0.5 1.7h0m0.1-3.6h0m0.7 0.1h0m0.1 2.1h0m0.5-2h0m0.2 1.1h0m0.4 0.3h0m0.1 1h0m0.4 0.1h0m0.1-0.7h0m0.5-0.5h0m0.2-1.9h0m0.5-1.8h0m0.2 3.7h0m0.3-0.8h0m0.3 2.1h0m0.1-4.5h0m0.5 4.5h0m0.4-4h0m0 5.2h0m0.6-6h0m0.1-0.5h0m0.2 0.3h0m0.1 6.2h0m0.5-0.7h0m0.6 0.8h0m0.2-3.7h0m0.2 1.4h0m0.3-3.2h0m0.2 1h0m0.4 4.3h0m0.2-3.6h0m0.5-1h0m0.1 2.7h0m0.3-1.6h0m0.2 3h0m0.7-2.9h0m0.2-0.1h0m0.4-2.1h0m0.2 0.1h0m0.3-0.5h0m0 2.2h0m0.6-1.9h0m0.2 1.9h0m0.2-1.6h0m0.4 2.8h0m0.7-2.7h0m0 0.3h0m0.4 0.4h0m0.1 3.8h0m0.2-3.7h0m0.4 2.7h0m0.3-2h0m0.3-0.2h0m0.5 0.6h0m0.2 2.6h0m0.4-5.4h0m0 2.2h0m0.3-2.5h0m0.6 6.1h0m0.1-3.5h0m0 4h0m1-4.5h0m0 2.7h0m0.1-2h0m0.1 2.7h0m0.6-2.8h0m0.4 2.9h0m0.4-13.4h0m0 9.4h0m0 0.3h0m0.7-5.1h0m0 5.4h0m0.4-0.2h0m0.4 1.5h0m0.3 2.2h0m0 0.4h0m0.7-1.3h0m0.1-2.6h0m0.3-2h0m0 1.4h0m0.4 3.7h0m0.1-4.1h0m0.6 4.1h0m0.3-4.8h0m0.4 0.7h0m0.4 1.8h0m0.3 0.1h0m0 1.2h0m0.7-4.3h0m0 2h0m0.3-0.9h0m0.1-0.3h0m0.5 1.2h0m0.4-1.1h0m0.4-0.5h0m0.2 4.6h0m0.3 1.7h0m0.2-1.4h0m0.2 0.3h0m0.3-0.4h0m0.3-0.2h0m0.5-2.3h0m0.1 0.4h0m0.3 3.2h0m0.4-4.4h0m0.3 3.1h0m0.6-3.1h0m0.2 4.8h0m0.4-1.1h0m0.2-4.7h0m0.2 5.5h0m0.4-2.5h0m0 2.7h0m0.3-0.4h0m0.6-4.1h0m0.1 0.8h0m0.4-0.5h0m0.3 3.3h0m0.3-5.1h0m0.3 0.8h0m0.4 5.1h0m0.3-1.2h0m0.2 1.4h0m0.1-2.8h0m0.5-4.1h0m0.2 2.6h0m0.5-2.1h0m0.1 5.8h0m0.6-1.8h0m0.1-2.4h0m0.3 2h0m0.3 0.8h0m0.3-1.6h0m0.1 0.4h0m0.3-2.9h0m0.2 2h0m0.6-0.4h0m0.3 2.9h0m0.3-2.9h0m0.2-2.2h0m0.6 1.3h0m0.2 3.4h0m0.1-2.5h0m0 3.4h0m0.6-4.3h0m0 5.2h0m0.7-0.3h0m0.3 0.4h0m0.3-1.9h0m0.1-3h0m0.3 1.3h0m0.3-2.2h0m0.5 4.7h0m0.1-0.2h0m0.5-4.4h0m0.1 0.1h0m0.3 0.1h0m0.5-3.5h0m0.1 1.6h0m0.5 4.1h0m0.2-0.5h0m0.4-3.8h0m0.5 4.9h0m0.2-5.9h0m0.3 8.6h0m0.2-1.2h0m0.4-0.2h0m0.2 0.1h0m0.5 1.4h0m0.1-5.1h0m0.5 1.5h0m0 1.5h0m0.5 1.5h0m0.2-2.4h0m0.5-3.8h0m0.1 1.4h0m0.1-0.8h0m0.4 2.7h0m0.5 3.4h0m0.2-3.4h0m0.3-2h0m0.4 5h0m0.3-5h0m0 1.7h0m0.4 3.1h0m0.5-4.3h0m0.1-1.6h0m0.4 0.8h0m0.2-1.1h0m0 0.2h0m0.7 5.6h0m0.1-5.2h0m0.3 3.6h0m0.2 0.4h0m0.6-2.3h0m0.2-0.6h0m0.3 4.3h0m0.5-0.8h0m0.1 1.1h0m0.4-4.7h0m0.6-0.4h0m0 1.4h0m0.1 3.4h0m0.5-5.2h0m0.5 0.9h0m0 2.4h0m0.5 0.2h0m0.1-6.7h0m0.5 7.5h0m0.2-2.5h0m0.5-0.8h0m0.2-1.2h0m0 1.7h0m0.1 3.1h0m0.7 1.1h0m0.4-8.9h0m0.2 6.9h0m0 1.5h0m0.5 0.2h0m0.5 0.5h0m0.2-3.9h0m0.3 0.9h0m0.3 2.3h0m0.2-3.7h0m0.5-1.2h0m0 2.2h0m0.5 0.4h0m0.1 2.1h0m0.6-3.6h0m0.3-2h0m0 6.6h0m0.4-7h0m0.3 3.2h0m0.5 3.6h0m0.1 0.3h0m0.3-2.6h0m0.5 2.1h0m0 0.5h0m0.5-6.3h0m0.2 1.3h0m0.3 1.9h0m0.3-1.5h0m0.5 2.3h0m0 2.3h0m0.5-1.7h0m0 0.2h0m0.4 0.1h0m0.3 0.3h0m0.4-4.6h0m0.3 0.2h0m0.6-0.9h0m0 3.9h0m0.6-4.1h0m0.2 0.5h0m0.5 5.4h0m0.1-2.3h0m0.1-2.9h0m0.4-0.3h0m0.7 1h0m0 5.1h0m0.4-4h0m0 0.8h0m0.2-2.4h0m0.2 2.2h0m0.6 2h0m0.1-3.3h0m0.3-2.7h0m0.5 4.9h0m0.1 1.5h0m0.3-0.3h0m0.5-1.3h0m0.4-2.5h0m0 5h0m0.3-6h0m0.8 5.6h0m0.1 0.4h0m0.1 0.1h0m0.1-3.3h0m0.5 0.3h0m0.1-0.9h0m0.6-0.8h0m0.3 2h0m0.1-0.7h0m0.2-1h0m0.5 0.7h0m0.3-1.5h0m0.3 5.4h0m0.2-5.3h0m0.6 0.1h0m0 1.8h0m0.4 2.9h0m0.1-2.5h0m0.9-2.8h0m0 0.1h0m0.4 2.3h0m0.1-1.9h0m0.3 4.7h0m0.2-2.8h0m0.5 0.3h0m0.3-2.8h0m0.5-0.9h0m0.1 1.2h0m0.3 1.1h0m0 0.5h0m0.6-1.8h0m0 1.4h0m0.6-0.5h0m0.1 1.2h0m0.4-2.5h0m0.1 5.2h0m0.8-3.7h0m0 2.3h0m0.7-3h0m0.1 2.6h0m0.3 1.3h0m0.1-3.4h0m0.5 0.4h0m0.2 4h0m0.3-3.9h0m0.3-2h0m0.3-2.9h0m0 5.7h0m0.6-5h0m0.3 8.2h0m0.3-3.5h0m0.1 3.6h0m0.4 0h0m0.2-2.7h0m0.6-0.1h0m0.3-3h0m0.2 5.7h0m0.1 0.1h0m0.3-3.8h0m0.1 0.6h0m0.9 0.4h0m0 1.9h0m0.6-3.4h0m0.1 3.6h0m0.3-6.7h0m0.3 1.2h0m0.5 4.7h0m0.1 1.1h0m0.3-4.7h0m0.3 0h0m0.3 0.3h0m0.2 2.3h0m0.5-1.7h0m0.2-0.1h0m0.5-2.1h0m0.1 3.2h0m0.2 0h0m0.1 2.3h0m0.6-6.1h0m0.3 7h0m0.7-2.1h0m0 0.5h0m0.1-3.7h0m0.1 2.6h0m0.9 2.9h0m0.1-2.2h0m0.4-4.4h0m0 5.4h0m0.2-7h0m0.6 2.1h0m0.3-0.3h0m0.2 5.5h0m0.5-0.2h0m0.1 0.3h0m0.1 0.8h0m0.1-3.3h0m0.7 0.6h0m0.3-3.7h0m0.4 0.7h0m0.2 3.4h0m0.2-2.4h0m0.2 3.4h0m0.6-4.6h0m0.2 2.1h0m0.5 3.5h0m0.2-4.9h0m0.2 1.3h0m0.3-2.3h0m0.3 5.9h0m0.2-4.2h0m0.4 3.7h0m0.1-1.7h0m0.5 0h0m0.4-1.5h0m0 0.3h0m0.5 1.3h0m0.2-1.3h0m0.5-0.3h0m0 0.4h0m0.1-0.3h0m0.6-2.6h0m0.1 1h0m0.7 0.9h0m0.1 1.4h0m0.5-1.5h0m0.3-1.5h0m0.2 4.6h0m0.2-4.7h0m0.3 1.4h0m0.4 3.4h0m0.2-0.4h0m0.5-0.6h0m0.1 0h0m0.4 0.9h0m0.3-3h0m0.1 1.3h0m0.4-0.9h0m0.4 1.5h0m0.5-2.7h0m0 1.1h0m0.3 1.2h0m0.3 0.3h0m0.7-1.6h0m0.1-1.6h0m0.2-0.1h0m0.3 2.4h0m0.2-0.9h0m0.2 4.6h0m0.6-5.1h0m0.2 0h0m0.4 4.2h0m0.2-2.1h0m0.2 0.5h0m0.4-1.6h0m0.3-2.1h0m0 1.1h0m0.5 4.5h0m0.5-5h0m0 3h0m0.2-3.1h0m0.4 3.1h0m0.3 1.9h0m0.6-1.7h0m0.2-1.5h0m0.2 2.7h0m0.4-2h0m0.1-3.2h0m0.4 2.9h0m0.4-2.1h0m0.4 1.4h0m0.3-1.5h0m0.3 2.9h0m0.1 1.4h0m0.5-7.7h0m0.2 7.9h0m0.4-8.5h0m0.3 9.1h0m0.1-2.3h0m0.7-1.5h0m0.1 3.3h0m0.5-4.9h0m0.1 0.6h0m0.1 0.9h0m0.2-1.8h0m0.6 2.6h0m0 2.5h0m0.4-7.7h0m0.2 5.6h0m0.5-2.1h0m0 4.7h0m0.5 0.4h0m0.2-2.8h0m0.7-1.9h0m0.1 0.6h0m0.5 1.6h0m0.1-2.2h0m0.3 3.1h0m0.3-2.9h0m0.3 4.1h0m0.3-0.5h0m0.3-5h0m0.3 3.4h0m0.1 0.3h0m0.1 0.4h0m0.6-1.7h0m0.5 2.2h0m0.1-2.2h0m0.1 1.1h0m0.5-0.7h0m0 0.5h0m0.6-3.4h0m0.4 1.6h0m0.4-0.8h0m0 4.4h0m0.4-2h0m0.2-2.7h0m0.5 2.3h0m0.4-2.4h0m0 0.9h0m0.5 4.4h0m0.2-10.6h0m0 6h0m0.2 5.2h0m0.4-2.2h0m0.3-2.5h0m0.5 1.2h0m0.2 0.8h0m0.3-4.7h0m0.3 7.2h0m0.3 0h0m0.2-4.9h0m0.5 4.1h0m0.2-5h0m0.6 2.1h0m0 1.4h0m0.2-1.9h0m0.3 2.5h0m0.6-6.3h0m0.1 3h0m0.5 0.7h0m0 4.3h0m0.7-5h0m0 1h0m0.4 0.5h0m0.2 1.4h0m0.2 0.5h0m0.5-4.5h0m0 1.8h0m0.6 0.3h0m0 3.7h0m0.4 0h0m0.6-0.9h0m0.2-2.5h0m0.4 1.3h0m0.2-3.5h0m0.3 2.4h0m0 2.6h0m0.3 0.6h0m0.2-0.2h0m0.6-2.6h0m0 3.1h0m0.7-2.5h0m0.2-2.5h0m0.2-0.7h0m0.4 2.3h0m0.2-0.5h0m0.1-0.3h0m0.5-1.7h0m0.2 1.7h0m0.6 0.8h0m0.2-0.1h0m0.1 3.4h0m0.2-2.9h0m0.6-3.4h0m0.1 1.9h0m0.7 0.9h0m0.2-1.3h0m0.2 0.4h0m0.3 3.6h0m0.3-0.4h0m0.1 0.1h0m0.3-1.8h0m0.1 0.1h0m0.7 1.4h0m0.4-1.2h0m0 0.8h0m0.3-3.3h0m0.4 3.8h0m0.4-0.5h0m0.6-4.3h0m0.1 0.2h0m0 4h0m0.3-3.6h0m0.4 4.8h0m0.3-2.1h0m0.3-0.8h0m0.3-0.8h0m0.3-0.9h0m0.3 4.3h0m0.4-6.4h0m0.3 5.4h0m0.2-0.3h0m0.3 1h0m0.5-4.9h0m0.2 5.3h0m0.4 0.8h0m0.3-2h0m0.3 1.1h0m0.1-3.7h0m0.2 0.3h0m0 1.6h0m0.7-1.5h0m0.4-2h0m0.2-2.2h0m0.5 3.3h0m0.2-0.1h0m0.3-0.4h0m0.6-1.9h0m0 1.8h0m0.3-0.6h0m0 3.8h0m0.5 0.3h0m0.5-3.4h0m0.1 5.8h0m0.3-5.6h0m0.6 4.8h0m0.1-1.2h0m0.6-3.3h0m0.1-1.2h0m0.1 5h0m0.1 0.7h0m0.4-0.6h0m0.4-4.1h0m0.3 3h0m0.3-5.5h0m0.4 5.6h0m0.1-1.5h0m0.5-0.6h0m0.2 3.9h0m0.4-2.4h0m0.3 0.6h0m0.2-1.7h0m0.2-1.2h0m0.6 4.2h0m0.1-0.5h0m0.3-2.9h0m0.3 0.9h0m0.3 1.2h0m0.4-4.4h0m0.5 0.9h0m0.1 4.5h0m0.3-4.5h0m0.1 4.6h0m0.4-2.6h0m0.3-2.7h0m0.3 1h0m0.2 1.2h0m0.4-0.4h0m0.3-1.6h0m0.2 4.5h0m0.5 1.1h0m0.5-5.6h0m0 4.2h0m0.5-3.8h0m0.1 4.1h0m0.4-0.5h0m0.3 2.7h0m0.4-1.5h0m0.1-2.4h0m0.3 0.7h0m0.4-3.2h0m0.1 4h0m0 1.7h0m0.6-0.4h0m0.3-3h0m0.5 0.5h0m0.2 1.5h0m0.4-4.1h0m0.2 1.6h0m0.5 1.5h0m0.3 1.5h0m0.1-4.8h0m0 4.2h0m0.8-1.7h0m0.1 0.8h0m0.4-0.3h0m0.3 1.9h0m0.3-1.1h0m0.3 2.5h0m0.5-6.6h0m0 1.7h0m0.4 0.2h0m0.1 3h0m0.5-0.1h0m0.1-4.3h0m0.6 5.5h0m0 0.4h0m0.5-5h0m0.3 2.3h0m0.2 1.5h0m0.1 1.3h0m0.5-5.9h0m0 4.7h0m0.6-1h0m0.1-1.8h0m0.8-0.6h0m0.1-4h0m0.4 4.6h0m0.2-0.9h0m0.3-0.1h0m0.2 2.5h0m0.3-2.4h0m0 0.4h0m0.7-1.1h0m0.1 2.8h0m0.4-6.8h0m0.3 4.2h0m0.5 4.7h0m0.1-4.3h0m0.3 2.6h0m0.4-4.1h0m0.5 6.2h0m0.1 0.3h0m0.2-3.1h0m0.1-1.6h0m0.5 1.4h0m0.3-1.5h0" stroke="#000" stroke-width="3.0" style="stroke-linecap:round" fill="none"/><path d="M211.3 990.5h0m2.7-8h0m5.3-3.2h0m0 8h0m278.7 1.4h0m71.3 3.4h0m10.7 0h0m4.3-0.8h0m21 0.8h0m75-6.9h0m73.8 8h0m69.9-2.7h0m4.8-7.2h0m0.5 8.8h0m8-9.6h0m1.9 7h0m2.9 4h0m9.4-8h0m0.5 4h0m1.3-9.4h0m29.4 5.4h0m1.8-3h0m7.5 9.6h0m16.2-2.5h0m4.9-1.3h0m43.5 3.2h0m4.9 0h0m21.9 0h0m2.7-2.4h0m3.6-1.7h0m26.5-16.1h0m19.9 20.2h0m0 1.7h0m27.1-6.8h0m2.2 5.1h0m2.7-3.2h0m34.2 0h0m7.1-1.9h0m3.8 6.8h0m2.2-4.9h0m98.1-3.6h0m9 5.8h0m15.9 1.9h0m16.9-10.1h0" stroke="#f00" stroke-width="3.0" style="stroke-linecap:round" fill="none"/></svg><svg id="fr" width="1500" height="1050" viewBox="0 0 1080 756" version="1.1"><defs><style type="text/css">#fr *{stroke-linejoin:round;stroke-linecap:butt}</style></defs><g id="figure_1"><g id="patch_1"><path d="M 0 756 L 1080 756 L 1080 0 L 0 0 L 0 756 z " style="fill: none; opacity: 0"/></g><g id="axes_1"><g id="patch_2"><path d="M 75.96 231.48 L 1069.56 231.48 L 1069.56 25.56 L 75.96 25.56 L 75.96 231.48 z " style="fill: none; opacity: 0"/></g><g id="matplotlib.axis_1"><g id="xtick_1"><g id="line2d_1"><defs><path id="m1504cfccaf" d="M 0 0 L 0 3.5 " style="stroke: #000000; stroke-width: 0.8"/></defs><g><use href="#m1504cfccaf" x="117" y="231.48" style="stroke: #000000; stroke-width: 0.8"/></g></g><g id="text_1"><!-- 0 --><g transform="translate(113.81875 246.078437) scale(0.1 -0.1)"><defs><path id="DejaVuSans-30" d="M 2034 4250 Q 1547 4250 1301 3770 Q 1056 3291 1056 2328 Q 1056 1369 1301 889 Q 1547 409 2034 409 Q 2525 409 2770 889 Q 3016 1369 3016 2328 Q 3016 3291 2770 3770 Q 2525 4250 2034 4250 z M 2034 4750 Q 2819 4750 3233 4129 Q 3647 3509 3647 2328 Q 3647 1150 3233 529 Q 2819 -91 2034 -91 Q 1250 -91 836 529 Q 422 1150 422 2328 Q 422 3509 836 4129 Q 1250 4750 2034 4750 z " transform="scale(0.015625)"/></defs><use href="#DejaVuSans-30"/></g></g></g><g id="xtick_2"><g id="line2d_2"><g><use href="#m1504cfccaf" x="322.38" y="231.48" style="stroke: #000000; stroke-width: 0.8"/></g></g><g id="text_2"><!-- 10000 --><g transform="translate(306.47375 246.078437) scale(0.1 -0.1)"><defs><path id="DejaVuSans-31" d="M 794 531 L 1825 531 L 1825 4091 L 703 3866 L 703 4441 L 1819 4666 L 2450 4666 L 2450 531 L 3481 531 L 3481 0 L 794 0 L 794 531 z " transform="scale(0.015625)"/></defs><use href="#DejaVuSans-31"/><use href="#DejaVuSans-30" transform="translate(63.623047 0)"/><use href="#DejaVuSans-30" transform="translate(127.246094 0)"/><use href="#DejaVuSans-30" transform="translate(190.869141 0)"/><use href="#DejaVuSans-30" transform="translate(254.492188 0)"/></g></g></g><g id="xtick_3"><g id="line2d_3"><g><use href="#m1504cfccaf" x="527.76" y="231.48" style="stroke: #000000; stroke-width: 0.8"/></g></g><g id="text_3"><!-- 20000 --><g transform="translate(511.85375 246.078437) scale(0.1 -0.1)"><defs><path id="DejaVuSans-32" d="M 1228 531 L 3431 531 L 3431 0 L 469 0 L 469 531 Q 828 903 1448 1529 Q 2069 2156 2228 2338 Q 2531 2678 2651 2914 Q 2772 3150 2772 3378 Q 2772 3750 2511 3984 Q 2250 4219 1831 4219 Q 1534 4219 1204 4116 Q 875 4013 500 3803 L 500 4441 Q 881 4594 1212 4672 Q 1544 4750 1819 4750 Q 2544 4750 2975 4387 Q 3406 4025 3406 3419 Q 3406 3131 3298 2873 Q 3191 2616 2906 2266 Q 2828 2175 2409 1742 Q 1991 1309 1228 531 z " transform="scale(0.015625)"/></defs><use href="#DejaVuSans-32"/><use href="#DejaVuSans-30" transform="translate(63.623047 0)"/><use href="#DejaVuSans-30" transform="translate(127.246094 0)"/><use href="#DejaVuSans-30" transform="translate(190.869141 0)"/><use href="#DejaVuSans-30" transform="translate(254.492188 0)"/></g></g></g><g id="xtick_4"><g id="line2d_4"><g><use href="#m1504cfccaf" x="733.14" y="231.48" style="stroke: #000000; stroke-width: 0.8"/></g></g><g id="text_4"><!-- 30000 --><g transform="translate(717.23375 246.078437) scale(0.1 -0.1)"><defs><path id="DejaVuSans-33" d="M 2597 2516 Q 3050 2419 3304 2112 Q 3559 1806 3559 1356 Q 3559 666 3084 287 Q 2609 -91 1734 -91 Q 1441 -91 1130 -33 Q 819 25 488 141 L 488 750 Q 750 597 1062 519 Q 1375 441 1716 441 Q 2309 441 2620 675 Q 2931 909 2931 1356 Q 2931 1769 2642 2001 Q 2353 2234 1838 2234 L 1294 2234 L 1294 2753 L 1863 2753 Q 2328 2753 2575 2939 Q 2822 3125 2822 3475 Q 2822 3834 2567 4026 Q 2313 4219 1838 4219 Q 1578 4219 1281 4162 Q 984 4106 628 3988 L 628 4550 Q 988 4650 1302 4700 Q 1616 4750 1894 4750 Q 2613 4750 3031 4423 Q 3450 4097 3450 3541 Q 3450 3153 3228 2886 Q 3006 2619 2597 2516 z " transform="scale(0.015625)"/></defs><use href="#DejaVuSans-33"/><use href="#DejaVuSans-30" transform="translate(63.623047 0)"/><use href="#DejaVuSans-30" transform="translate(127.246094 0)"/><use href="#DejaVuSans-30" transform="translate(190.869141 0)"/><use href="#DejaVuSans-30" transform="translate(254.492188 0)"/></g></g></g><g id="xtick_5"><g id="line2d_5"><g><use href="#m1504cfccaf" x="938.52" y="231.48" style="stroke: #000000; stroke-width: 0.8"/></g></g><g id="text_5"><!-- 40000 --><g transform="translate(922.61375 246.078437) scale(0.1 -0.1)"><defs><path id="DejaVuSans-34" d="M 2419 4116 L 825 1625 L 2419 1625 L 2419 4116 z M 2253 4666 L 3047 4666 L 3047 1625 L 3713 1625 L 3713 1100 L 3047 1100 L 3047 0 L 2419 0 L 2419 1100 L 313 1100 L 313 1709 L 2253 4666 z " transform="scale(0.015625)"/></defs><use href="#DejaVuSans-34"/><use href="#DejaVuSans-30" transform="translate(63.623047 0)"/><use href="#DejaVuSans-30" transform="translate(127.246094 0)"/><use href="#DejaVuSans-30" transform="translate(190.869141 0)"/><use href="#DejaVuSans-30" transform="translate(254.492188 0)"/></g></g></g></g><g id="matplotlib.axis_2"><g id="ytick_1"><g id="line2d_6"><defs><path id="m5d545ce8f8" d="M 0 0 L -3.5 0 " style="stroke: #000000; stroke-width: 0.8"/></defs><g><use href="#m5d545ce8f8" x="75.96" y="209.95084" style="stroke: #000000; stroke-width: 0.8"/></g></g><g id="text_6"><!-- 8.5 --><g transform="translate(53.056875 213.750059) scale(0.1 -0.1)"><defs><path id="DejaVuSans-38" d="M 2034 2216 Q 1584 2216 1326 1975 Q 1069 1734 1069 1313 Q 1069 891 1326 650 Q 1584 409 2034 409 Q 2484 409 2743 651 Q 3003 894 3003 1313 Q 3003 1734 2745 1975 Q 2488 2216 2034 2216 z M 1403 2484 Q 997 2584 770 2862 Q 544 3141 544 3541 Q 544 4100 942 4425 Q 1341 4750 2034 4750 Q 2731 4750 3128 4425 Q 3525 4100 3525 3541 Q 3525 3141 3298 2862 Q 3072 2584 2669 2484 Q 3125 2378 3379 2068 Q 3634 1759 3634 1313 Q 3634 634 3220 271 Q 2806 -91 2034 -91 Q 1263 -91 848 271 Q 434 634 434 1313 Q 434 1759 690 2068 Q 947 2378 1403 2484 z M 1172 3481 Q 1172 3119 1398 2916 Q 1625 2713 2034 2713 Q 2441 2713 2670 2916 Q 2900 3119 2900 3481 Q 2900 3844 2670 4047 Q 2441 4250 2034 4250 Q 1625 4250 1398 4047 Q 1172 3844 1172 3481 z " transform="scale(0.015625)"/><path id="DejaVuSans-2e" d="M 684 794 L 1344 794 L 1344 0 L 684 0 L 684 794 z " transform="scale(0.015625)"/><path id="DejaVuSans-35" d="M 691 4666 L 3169 4666 L 3169 4134 L 1269 4134 L 1269 2991 Q 1406 3038 1543 3061 Q 1681 3084 1819 3084 Q 2600 3084 3056 2656 Q 3513 2228 3513 1497 Q 3513 744 3044 326 Q 2575 -91 1722 -91 Q 1428 -91 1123 -41 Q 819 9 494 109 L 494 744 Q 775 591 1075 516 Q 1375 441 1709 441 Q 2250 441 2565 725 Q 2881 1009 2881 1497 Q 2881 1984 2565 2268 Q 2250 2553 1709 2553 Q 1456 2553 1204 2497 Q 953 2441 691 2322 L 691 4666 z " transform="scale(0.015625)"/></defs><use href="#DejaVuSans-38"/><use href="#DejaVuSans-2e" transform="translate(63.623047 0)"/><use href="#DejaVuSans-35" transform="translate(95.410156 0)"/></g></g></g><g id="ytick_2"><g id="line2d_7"><g><use href="#m5d545ce8f8" x="75.96" y="176.384954" style="stroke: #000000; stroke-width: 0.8"/></g></g><g id="text_7"><!-- 9.0 --><g transform="translate(53.056875 180.184173) scale(0.1 -0.1)"><defs><path id="DejaVuSans-39" d="M 703 97 L 703 672 Q 941 559 1184 500 Q 1428 441 1663 441 Q 2288 441 2617 861 Q 2947 1281 2994 2138 Q 2813 1869 2534 1725 Q 2256 1581 1919 1581 Q 1219 1581 811 2004 Q 403 2428 403 3163 Q 403 3881 828 4315 Q 1253 4750 1959 4750 Q 2769 4750 3195 4129 Q 3622 3509 3622 2328 Q 3622 1225 3098 567 Q 2575 -91 1691 -91 Q 1453 -91 1209 -44 Q 966 3 703 97 z M 1959 2075 Q 2384 2075 2632 2365 Q 2881 2656 2881 3163 Q 2881 3666 2632 3958 Q 2384 4250 1959 4250 Q 1534 4250 1286 3958 Q 1038 3666 1038 3163 Q 1038 2656 1286 2365 Q 1534 2075 1959 2075 z " transform="scale(0.015625)"/></defs><use href="#DejaVuSans-39"/><use href="#DejaVuSans-2e" transform="translate(63.623047 0)"/><use href="#DejaVuSans-30" transform="translate(95.410156 0)"/></g></g></g><g id="ytick_3"><g id="line2d_8"><g><use href="#m5d545ce8f8" x="75.96" y="142.819068" style="stroke: #000000; stroke-width: 0.8"/></g></g><g id="text_8"><!-- 9.5 --><g transform="translate(53.056875 146.618286) scale(0.1 -0.1)"><use href="#DejaVuSans-39"/><use href="#DejaVuSans-2e" transform="translate(63.623047 0)"/><use href="#DejaVuSans-35" transform="translate(95.410156 0)"/></g></g></g><g id="ytick_4"><g id="line2d_9"><g><use href="#m5d545ce8f8" x="75.96" y="109.253181" style="stroke: #000000; stroke-width: 0.8"/></g></g><g id="text_9"><!-- 10.0 --><g transform="translate(46.694375 113.0524) scale(0.1 -0.1)"><use href="#DejaVuSans-31"/><use href="#DejaVuSans-30" transform="translate(63.623047 0)"/><use href="#DejaVuSans-2e" transform="translate(127.246094 0)"/><use href="#DejaVuSans-30" transform="translate(159.033203 0)"/></g></g></g><g id="ytick_5"><g id="line2d_10"><g><use href="#m5d545ce8f8" x="75.96" y="75.687295" style="stroke: #000000; stroke-width: 0.8"/></g></g><g id="text_10"><!-- 10.5 --><g transform="translate(46.694375 79.486514) scale(0.1 -0.1)"><use href="#DejaVuSans-31"/><use href="#DejaVuSans-30" transform="translate(63.623047 0)"/><use href="#DejaVuSans-2e" transform="translate(127.246094 0)"/><use href="#DejaVuSans-35" transform="translate(159.033203 0)"/></g></g></g><g id="ytick_6"><g id="line2d_11"><g><use href="#m5d545ce8f8" x="75.96" y="42.121408" style="stroke: #000000; stroke-width: 0.8"/></g></g><g id="text_11"><!-- 11.0 --><g transform="translate(46.694375 45.920627) scale(0.1 -0.1)"><use href="#DejaVuSans-31"/><use href="#DejaVuSans-31" transform="translate(63.623047 0)"/><use href="#DejaVuSans-2e" transform="translate(127.246094 0)"/><use href="#DejaVuSans-30" transform="translate(159.033203 0)"/></g></g></g></g><g id="line2d_12"><path d="M 116.64 231.48 L 116.64 25.56 " clip-path="url(#pb078de38de)" style="fill: none; stroke-dasharray: 1.5,2.475; stroke-dashoffset: 0; stroke: #800080; stroke-width: 1.5"/></g><g id="line2d_13"><path d="M 938.16 231.48 L 938.16 25.56 " clip-path="url(#pb078de38de)" style="fill: none; stroke-dasharray: 1.5,2.475; stroke-dashoffset: 0; stroke: #800080; stroke-width: 1.5"/></g><g id="line2d_14"><path d="M 75.96 107.910546 L 979.632 107.910546 " clip-path="url(#pb078de38de)" style="fill: none; stroke: #008000; stroke-width: 1.5; stroke-linecap: square"/></g><g id="patch_3"><path d="M 75.96 231.48 L 75.96 25.56 " style="fill: none; stroke: #000000; stroke-width: 0.8; stroke-linejoin: miter; stroke-linecap: square"/></g><g id="patch_4"><path d="M 1069.56 231.48 L 1069.56 25.56 " style="fill: none; stroke: #000000; stroke-width: 0.8; stroke-linejoin: miter; stroke-linecap: square"/></g><g id="patch_5"><path d="M 75.96 231.48 L 1069.56 231.48 " style="fill: none; stroke: #000000; stroke-width: 0.8; stroke-linejoin: miter; stroke-linecap: square"/></g><g id="patch_6"><path d="M 75.96 25.56 L 1069.56 25.56 " style="fill: none; stroke: #000000; stroke-width: 0.8; stroke-linejoin: miter; stroke-linecap: square"/></g><g id="text_12"><!-- 3997 --><g transform="translate(514.459 224.721228) scale(0.1 -0.1)"><defs><path id="DejaVuSans-37" d="M 525 4666 L 3525 4666 L 3525 4397 L 1831 0 L 1172 0 L 2766 4134 L 525 4134 L 525 4666 z " transform="scale(0.015625)"/></defs><use href="#DejaVuSans-33"/><use href="#DejaVuSans-39" transform="translate(63.623047 0)"/><use href="#DejaVuSans-39" transform="translate(127.246094 0)"/><use href="#DejaVuSans-37" transform="translate(190.869141 0)"/></g></g><g id="text_13"><!-- AGASC ID 189405312 --><g transform="translate(507.447188 19.56) scale(0.12 -0.12)"><defs><path id="DejaVuSans-41" d="M 2188 4044 L 1331 1722 L 3047 1722 L 2188 4044 z M 1831 4666 L 2547 4666 L 4325 0 L 3669 0 L 3244 1197 L 1141 1197 L 716 0 L 50 0 L 1831 4666 z " transform="scale(0.015625)"/><path id="DejaVuSans-47" d="M 3809 666 L 3809 1919 L 2778 1919 L 2778 2438 L 4434 2438 L 4434 434 Q 4069 175 3628 42 Q 3188 -91 2688 -91 Q 1594 -91 976 548 Q 359 1188 359 2328 Q 359 3472 976 4111 Q 1594 4750 2688 4750 Q 3144 4750 3555 4637 Q 3966 4525 4313 4306 L 4313 3634 Q 3963 3931 3569 4081 Q 3175 4231 2741 4231 Q 1884 4231 1454 3753 Q 1025 3275 1025 2328 Q 1025 1384 1454 906 Q 1884 428 2741 428 Q 3075 428 3337 486 Q 3600 544 3809 666 z " transform="scale(0.015625)"/><path id="DejaVuSans-53" d="M 3425 4513 L 3425 3897 Q 3066 4069 2747 4153 Q 2428 4238 2131 4238 Q 1616 4238 1336 4038 Q 1056 3838 1056 3469 Q 1056 3159 1242 3001 Q 1428 2844 1947 2747 L 2328 2669 Q 3034 2534 3370 2195 Q 3706 1856 3706 1288 Q 3706 609 3251 259 Q 2797 -91 1919 -91 Q 1588 -91 1214 -16 Q 841 59 441 206 L 441 856 Q 825 641 1194 531 Q 1563 422 1919 422 Q 2459 422 2753 634 Q 3047 847 3047 1241 Q 3047 1584 2836 1778 Q 2625 1972 2144 2069 L 1759 2144 Q 1053 2284 737 2584 Q 422 2884 422 3419 Q 422 4038 858 4394 Q 1294 4750 2059 4750 Q 2388 4750 2728 4690 Q 3069 4631 3425 4513 z " transform="scale(0.015625)"/><path id="DejaVuSans-43" d="M 4122 4306 L 4122 3641 Q 3803 3938 3442 4084 Q 3081 4231 2675 4231 Q 1875 4231 1450 3742 Q 1025 3253 1025 2328 Q 1025 1406 1450 917 Q 1875 428 2675 428 Q 3081 428 3442 575 Q 3803 722 4122 1019 L 4122 359 Q 3791 134 3420 21 Q 3050 -91 2638 -91 Q 1578 -91 968 557 Q 359 1206 359 2328 Q 359 3453 968 4101 Q 1578 4750 2638 4750 Q 3056 4750 3426 4639 Q 3797 4528 4122 4306 z " transform="scale(0.015625)"/><path id="DejaVuSans-20" transform="scale(0.015625)"/><path id="DejaVuSans-49" d="M 628 4666 L 1259 4666 L 1259 0 L 628 0 L 628 4666 z " transform="scale(0.015625)"/><path id="DejaVuSans-44" d="M 1259 4147 L 1259 519 L 2022 519 Q 2988 519 3436 956 Q 3884 1394 3884 2338 Q 3884 3275 3436 3711 Q 2988 4147 2022 4147 L 1259 4147 z M 628 4666 L 1925 4666 Q 3281 4666 3915 4102 Q 4550 3538 4550 2338 Q 4550 1131 3912 565 Q 3275 0 1925 0 L 628 0 L 628 4666 z " transform="scale(0.015625)"/></defs><use href="#DejaVuSans-41"/><use href="#DejaVuSans-47" transform="translate(66.658203 0)"/><use href="#DejaVuSans-41" transform="translate(144.148438 0)"/><use href="#DejaVuSans-53" transform="translate(212.556641 0)"/><use href="#DejaVuSans-43" transform="translate(276.033203 0)"/><use href="#DejaVuSans-20" transform="translate(345.857422 0)"/><use href="#DejaVuSans-49" transform="translate(377.644531 0)"/><use href="#DejaVuSans-44" transform="translate(407.136719 0)"/><use href="#DejaVuSans-20" transform="translate(484.138672 0)"/><use href="#DejaVuSans-31" transform="translate(515.925781 0)"/><use href="#DejaVuSans-38" transform="translate(579.548828 0)"/><use href="#DejaVuSans-39" transform="translate(643.171875 0)"/><use href="#DejaVuSans-34" transform="translate(706.794922 0)"/><use href="#DejaVuSans-30" transform="translate(770.417969 0)"/><use href="#DejaVuSans-35" transform="translate(834.041016 0)"/><use href="#DejaVuSans-33" transform="translate(897.664062 0)"/><use href="#DejaVuSans-31" transform="translate(961.287109 0)"/><use href="#DejaVuSans-32" transform="translate(1024.910156 0)"/></g></g><g id="legend_1"><g id="patch_7"><path d="M 981.96 49.858437 L 1062.56 49.858437 Q 1064.56 49.858437 1064.56 47.858437 L 1064.56 32.56 Q 1064.56 30.56 1062.56 30.56 L 981.96 30.56 Q 979.96 30.56 979.96 32.56 L 979.96 47.858437 Q 979.96 49.858437 981.96 49.858437 z " style="fill: #ffffff; opacity: 0.8; stroke: #cccccc; stroke-linejoin: miter"/></g><g id="line2d_15"><path d="M 984.76 39.458437 L 994.76 39.458437 L 1004.76 39.458437 " style="fill: none; stroke: #008000; stroke-width: 1.5; stroke-linecap: square"/></g><g id="text_14"><!-- mag$_{AGASC}$ --><g transform="translate(1012.76 42.958437) scale(0.1 -0.1)"><defs><path id="DejaVuSans-6d" d="M 3328 2828 Q 3544 3216 3844 3400 Q 4144 3584 4550 3584 Q 5097 3584 5394 3201 Q 5691 2819 5691 2113 L 5691 0 L 5113 0 L 5113 2094 Q 5113 2597 4934 2840 Q 4756 3084 4391 3084 Q 3944 3084 3684 2787 Q 3425 2491 3425 1978 L 3425 0 L 2847 0 L 2847 2094 Q 2847 2600 2669 2842 Q 2491 3084 2119 3084 Q 1678 3084 1418 2786 Q 1159 2488 1159 1978 L 1159 0 L 581 0 L 581 3500 L 1159 3500 L 1159 2956 Q 1356 3278 1631 3431 Q 1906 3584 2284 3584 Q 2666 3584 2933 3390 Q 3200 3197 3328 2828 z " transform="scale(0.015625)"/><path id="DejaVuSans-61" d="M 2194 1759 Q 1497 1759 1228 1600 Q 959 1441 959 1056 Q 959 750 1161 570 Q 1363 391 1709 391 Q 2188 391 2477 730 Q 2766 1069 2766 1631 L 2766 1759 L 2194 1759 z M 3341 1997 L 3341 0 L 2766 0 L 2766 531 Q 2569 213 2275 61 Q 1981 -91 1556 -91 Q 1019 -91 701 211 Q 384 513 384 1019 Q 384 1609 779 1909 Q 1175 2209 1959 2209 L 2766 2209 L 2766 2266 Q 2766 2663 2505 2880 Q 2244 3097 1772 3097 Q 1472 3097 1187 3025 Q 903 2953 641 2809 L 641 3341 Q 956 3463 1253 3523 Q 1550 3584 1831 3584 Q 2591 3584 2966 3190 Q 3341 2797 3341 1997 z " transform="scale(0.015625)"/><path id="DejaVuSans-67" d="M 2906 1791 Q 2906 2416 2648 2759 Q 2391 3103 1925 3103 Q 1463 3103 1205 2759 Q 947 2416 947 1791 Q 947 1169 1205 825 Q 1463 481 1925 481 Q 2391 481 2648 825 Q 2906 1169 2906 1791 z M 3481 434 Q 3481 -459 3084 -895 Q 2688 -1331 1869 -1331 Q 1566 -1331 1297 -1286 Q 1028 -1241 775 -1147 L 775 -588 Q 1028 -725 1275 -790 Q 1522 -856 1778 -856 Q 2344 -856 2625 -561 Q 2906 -266 2906 331 L 2906 616 Q 2728 306 2450 153 Q 2172 0 1784 0 Q 1141 0 747 490 Q 353 981 353 1791 Q 353 2603 747 3093 Q 1141 3584 1784 3584 Q 2172 3584 2450 3431 Q 2728 3278 2906 2969 L 2906 3500 L 3481 3500 L 3481 434 z " transform="scale(0.015625)"/><path id="DejaVuSans-Oblique-41" d="M 2356 4666 L 3072 4666 L 3938 0 L 3278 0 L 3084 1197 L 984 1197 L 325 0 L -341 0 L 2356 4666 z M 2584 4044 L 1275 1722 L 2988 1722 L 2584 4044 z " transform="scale(0.015625)"/><path id="DejaVuSans-Oblique-47" d="M 3494 697 L 3738 1919 L 2700 1919 L 2797 2438 L 4453 2438 L 4050 384 Q 3634 156 3143 32 Q 2653 -91 2156 -91 Q 1278 -91 783 396 Q 288 884 288 1753 Q 288 2475 589 3126 Q 891 3778 1422 4213 Q 1756 4484 2153 4617 Q 2550 4750 3034 4750 Q 3472 4750 3873 4639 Q 4275 4528 4641 4306 L 4513 3634 Q 4231 3928 3853 4083 Q 3475 4238 3047 4238 Q 2550 4238 2172 4048 Q 1794 3859 1497 3463 Q 1244 3125 1098 2667 Q 953 2209 953 1734 Q 953 1081 1287 751 Q 1622 422 2284 422 Q 2616 422 2925 492 Q 3234 563 3494 697 z " transform="scale(0.015625)"/><path id="DejaVuSans-Oblique-53" d="M 3859 4513 L 3738 3897 Q 3422 4066 3111 4152 Q 2800 4238 2509 4238 Q 1944 4238 1609 3991 Q 1275 3744 1275 3334 Q 1275 3109 1398 2989 Q 1522 2869 2034 2731 L 2413 2638 Q 3053 2472 3303 2217 Q 3553 1963 3553 1503 Q 3553 797 2998 353 Q 2444 -91 1538 -91 Q 1166 -91 791 -17 Q 416 56 38 206 L 166 856 Q 513 641 861 531 Q 1209 422 1556 422 Q 2147 422 2503 684 Q 2859 947 2859 1369 Q 2859 1650 2717 1795 Q 2575 1941 2106 2059 L 1728 2156 Q 1081 2325 845 2545 Q 609 2766 609 3163 Q 609 3859 1145 4304 Q 1681 4750 2541 4750 Q 2875 4750 3203 4690 Q 3531 4631 3859 4513 z " transform="scale(0.015625)"/><path id="DejaVuSans-Oblique-43" d="M 4447 4306 L 4319 3641 Q 4019 3944 3683 4091 Q 3347 4238 2956 4238 Q 2422 4238 2017 3981 Q 1613 3725 1319 3200 Q 1131 2863 1032 2486 Q 934 2109 934 1728 Q 934 1091 1264 756 Q 1594 422 2222 422 Q 2656 422 3056 561 Q 3456 700 3834 978 L 3688 231 Q 3316 72 2936 -9 Q 2556 -91 2175 -91 Q 1278 -91 773 396 Q 269 884 269 1753 Q 269 2309 461 2846 Q 653 3384 1013 3828 Q 1394 4300 1883 4525 Q 2372 4750 3022 4750 Q 3422 4750 3780 4639 Q 4138 4528 4447 4306 z " transform="scale(0.015625)"/></defs><use href="#DejaVuSans-6d"/><use href="#DejaVuSans-61" transform="translate(97.412109 0)"/><use href="#DejaVuSans-67" transform="translate(158.691406 0)"/><use href="#DejaVuSans-Oblique-41" transform="translate(223.125 -16.40625) scale(0.7)"/><use href="#DejaVuSans-Oblique-47" transform="translate(271.010742 -16.40625) scale(0.7)"/><use href="#DejaVuSans-Oblique-41" transform="translate(325.253906 -16.40625) scale(0.7)"/><use href="#DejaVuSans-Oblique-53" transform="translate(373.139648 -16.40625) scale(0.7)"/><use href="#DejaVuSans-Oblique-43" transform="translate(417.573242 -16.40625) scale(0.7)"/></g></g></g><g id="legend_2"><g id="patch_8"><path d="M 972.911563 226.48 L 1062.56 226.48 Q 1064.56 226.48 1064.56 224.48 L 1064.56 180.505625 Q 1064.56 178.505625 1062.56 178.505625 L 972.911563 178.505625 Q 970.911563 178.505625 970.911563 180.505625 L 970.911563 224.48 Q 970.911563 226.48 972.911563 226.48 z " style="fill: #ffffff; opacity: 0.8; stroke: #cccccc; stroke-linejoin: miter"/></g><g id="line2d_16"/><g id="text_15"><!-- not OK --><g transform="translate(1002.911563 190.104062) scale(0.1 -0.1)"><defs><path id="DejaVuSans-6e" d="M 3513 2113 L 3513 0 L 2938 0 L 2938 2094 Q 2938 2591 2744 2837 Q 2550 3084 2163 3084 Q 1697 3084 1428 2787 Q 1159 2491 1159 1978 L 1159 0 L 581 0 L 581 3500 L 1159 3500 L 1159 2956 Q 1366 3272 1645 3428 Q 1925 3584 2291 3584 Q 2894 3584 3203 3211 Q 3513 2838 3513 2113 z " transform="scale(0.015625)"/><path id="DejaVuSans-6f" d="M 1959 3097 Q 1497 3097 1228 2736 Q 959 2375 959 1747 Q 959 1119 1226 758 Q 1494 397 1959 397 Q 2419 397 2687 759 Q 2956 1122 2956 1747 Q 2956 2369 2687 2733 Q 2419 3097 1959 3097 z M 1959 3584 Q 2709 3584 3137 3096 Q 3566 2609 3566 1747 Q 3566 888 3137 398 Q 2709 -91 1959 -91 Q 1206 -91 779 398 Q 353 888 353 1747 Q 353 2609 779 3096 Q 1206 3584 1959 3584 z " transform="scale(0.015625)"/><path id="DejaVuSans-74" d="M 1172 4494 L 1172 3500 L 2356 3500 L 2356 3053 L 1172 3053 L 1172 1153 Q 1172 725 1289 603 Q 1406 481 1766 481 L 2356 481 L 2356 0 L 1766 0 Q 1100 0 847 248 Q 594 497 594 1153 L 594 3053 L 172 3053 L 172 3500 L 594 3500 L 594 4494 L 1172 4494 z " transform="scale(0.015625)"/><path id="DejaVuSans-4f" d="M 2522 4238 Q 1834 4238 1429 3725 Q 1025 3213 1025 2328 Q 1025 1447 1429 934 Q 1834 422 2522 422 Q 3209 422 3611 934 Q 4013 1447 4013 2328 Q 4013 3213 3611 3725 Q 3209 4238 2522 4238 z M 2522 4750 Q 3503 4750 4090 4092 Q 4678 3434 4678 2328 Q 4678 1225 4090 567 Q 3503 -91 2522 -91 Q 1538 -91 948 565 Q 359 1222 359 2328 Q 359 3434 948 4092 Q 1538 4750 2522 4750 z " transform="scale(0.015625)"/><path id="DejaVuSans-4b" d="M 628 4666 L 1259 4666 L 1259 2694 L 3353 4666 L 4166 4666 L 1850 2491 L 4331 0 L 3500 0 L 1259 2247 L 1259 0 L 628 0 L 628 4666 z " transform="scale(0.015625)"/></defs><use href="#DejaVuSans-6e"/><use href="#DejaVuSans-6f" transform="translate(63.378906 0)"/><use href="#DejaVuSans-74" transform="translate(124.560547 0)"/><use href="#DejaVuSans-20" transform="translate(163.769531 0)"/><use href="#DejaVuSans-4f" transform="translate(195.556641 0)"/><use href="#DejaVuSans-4b" transform="translate(274.267578 0)"/></g></g><g id="line2d_17"/><g id="text_16"><!-- Highlighted --><g transform="translate(1002.911563 205.252187) scale(0.1 -0.1)"><defs><path id="DejaVuSans-48" d="M 628 4666 L 1259 4666 L 1259 2753 L 3553 2753 L 3553 4666 L 4184 4666 L 4184 0 L 3553 0 L 3553 2222 L 1259 2222 L 1259 0 L 628 0 L 628 4666 z " transform="scale(0.015625)"/><path id="DejaVuSans-69" d="M 603 3500 L 1178 3500 L 1178 0 L 603 0 L 603 3500 z M 603 4863 L 1178 4863 L 1178 4134 L 603 4134 L 603 4863 z " transform="scale(0.015625)"/><path id="DejaVuSans-68" d="M 3513 2113 L 3513 0 L 2938 0 L 2938 2094 Q 2938 2591 2744 2837 Q 2550 3084 2163 3084 Q 1697 3084 1428 2787 Q 1159 2491 1159 1978 L 1159 0 L 581 0 L 581 4863 L 1159 4863 L 1159 2956 Q 1366 3272 1645 3428 Q 1925 3584 2291 3584 Q 2894 3584 3203 3211 Q 3513 2838 3513 2113 z " transform="scale(0.015625)"/><path id="DejaVuSans-6c" d="M 603 4863 L 1178 4863 L 1178 0 L 603 0 L 603 4863 z " transform="scale(0.015625)"/><path id="DejaVuSans-65" d="M 3597 1894 L 3597 1613 L 953 1613 Q 991 1019 1311 708 Q 1631 397 2203 397 Q 2534 397 2845 478 Q 3156 559 3463 722 L 3463 178 Q 3153 47 2828 -22 Q 2503 -91 2169 -91 Q 1331 -91 842 396 Q 353 884 353 1716 Q 353 2575 817 3079 Q 1281 3584 2069 3584 Q 2775 3584 3186 3129 Q 3597 2675 3597 1894 z M 3022 2063 Q 3016 2534 2758 2815 Q 2500 3097 2075 3097 Q 1594 3097 1305 2825 Q 1016 2553 972 2059 L 3022 2063 z " transform="scale(0.015625)"/><path id="DejaVuSans-64" d="M 2906 2969 L 2906 4863 L 3481 4863 L 3481 0 L 2906 0 L 2906 525 Q 2725 213 2448 61 Q 2172 -91 1784 -91 Q 1150 -91 751 415 Q 353 922 353 1747 Q 353 2572 751 3078 Q 1150 3584 1784 3584 Q 2172 3584 2448 3432 Q 2725 3281 2906 2969 z M 947 1747 Q 947 1113 1208 752 Q 1469 391 1925 391 Q 2381 391 2643 752 Q 2906 1113 2906 1747 Q 2906 2381 2643 2742 Q 2381 3103 1925 3103 Q 1469 3103 1208 2742 Q 947 2381 947 1747 z " transform="scale(0.015625)"/></defs><use href="#DejaVuSans-48"/><use href="#DejaVuSans-69" transform="translate(75.195312 0)"/><use href="#DejaVuSans-67" transform="translate(102.978516 0)"/><use href="#DejaVuSans-68" transform="translate(166.455078 0)"/><use href="#DejaVuSans-6c" transform="translate(229.833984 0)"/><use href="#DejaVuSans-69" transform="translate(257.617188 0)"/><use href="#DejaVuSans-67" transform="translate(285.400391 0)"/><use href="#DejaVuSans-68" transform="translate(348.876953 0)"/><use href="#DejaVuSans-74" transform="translate(412.255859 0)"/><use href="#DejaVuSans-65" transform="translate(451.464844 0)"/><use href="#DejaVuSans-64" transform="translate(512.988281 0)"/></g></g><g id="line2d_18"/><g id="text_17"><!-- OK --><g transform="translate(1002.911563 220.400312) scale(0.1 -0.1)"><use href="#DejaVuSans-4f"/><use href="#DejaVuSans-4b" transform="translate(78.710938 0)"/></g></g></g></g><g id="axes_2"><g id="patch_9"><path d="M 75.96 479.88 L 1069.56 479.88 L 1069.56 273.96 L 75.96 273.96 L 75.96 479.88 z " style="fill: none; opacity: 0"/></g><g id="FillBetweenPolyCollection_1"><defs><path id="mf0e1832316" d="M 75.96 -396.701015 L 75.96 -361.561433 L 979.632 -361.561433 L 979.632 -396.701015 L 979.632 -396.701015 L 75.96 -396.701015 z "/></defs><g clip-path="url(#p513e1b9102)"><use href="#mf0e1832316" x="0" y="756" style="fill: #ff0000; fill-opacity: 0.1"/></g></g><g id="FillBetweenPolyCollection_2"><defs><path id="m304783d7d3" d="M 117 -403.76991 L 117 -360.229612 L 938.52 -360.229612 L 938.52 -403.76991 L 938.52 -403.76991 L 117 -403.76991 z "/></defs><g clip-path="url(#p513e1b9102)"><use href="#m304783d7d3" x="0" y="756" style="fill: #ffa500; fill-opacity: 0.1"/></g></g><g id="matplotlib.axis_3"><g id="xtick_6"><g id="line2d_19"><g><use href="#m1504cfccaf" x="117" y="479.88" style="stroke: #000000; stroke-width: 0.8"/></g></g><g id="text_18"><!-- 0 --><g transform="translate(113.81875 494.478437) scale(0.1 -0.1)"><use href="#DejaVuSans-30"/></g></g></g><g id="xtick_7"><g id="line2d_20"><g><use href="#m1504cfccaf" x="322.38" y="479.88" style="stroke: #000000; stroke-width: 0.8"/></g></g><g id="text_19"><!-- 10000 --><g transform="translate(306.47375 494.478437) scale(0.1 -0.1)"><use href="#DejaVuSans-31"/><use href="#DejaVuSans-30" transform="translate(63.623047 0)"/><use href="#DejaVuSans-30" transform="translate(127.246094 0)"/><use href="#DejaVuSans-30" transform="translate(190.869141 0)"/><use href="#DejaVuSans-30" transform="translate(254.492188 0)"/></g></g></g><g id="xtick_8"><g id="line2d_21"><g><use href="#m1504cfccaf" x="527.76" y="479.88" style="stroke: #000000; stroke-width: 0.8"/></g></g><g id="text_20"><!-- 20000 --><g transform="translate(511.85375 494.478437) scale(0.1 -0.1)"><use href="#DejaVuSans-32"/><use href="#DejaVuSans-30" transform="translate(63.623047 0)"/><use href="#DejaVuSans-30" transform="translate(127.246094 0)"/><use href="#DejaVuSans-30" transform="translate(190.869141 0)"/><use href="#DejaVuSans-30" transform="translate(254.492188 0)"/></g></g></g><g id="xtick_9"><g id="line2d_22"><g><use href="#m1504cfccaf" x="733.14" y="479.88" style="stroke: #000000; stroke-width: 0.8"/></g></g><g id="text_21"><!-- 30000 --><g transform="translate(717.23375 494.478437) scale(0.1 -0.1)"><use href="#DejaVuSans-33"/><use href="#DejaVuSans-30" transform="translate(63.623047 0)"/><use href="#DejaVuSans-30" transform="translate(127.246094 0)"/><use href="#DejaVuSans-30" transform="translate(190.869141 0)"/><use href="#DejaVuSans-30" transform="translate(254.492188 0)"/></g></g></g><g id="xtick_10"><g id="line2d_23"><g><use href="#m1504cfccaf" x="938.52" y="479.88" style="stroke: #000000; stroke-width: 0.8"/></g></g><g id="text_22"><!-- 40000 --><g transform="translate(922.61375 494.478437) scale(0.1 -0.1)"><use href="#DejaVuSans-34"/><use href="#DejaVuSans-30" transform="translate(63.623047 0)"/><use href="#DejaVuSans-30" transform="translate(127.246094 0)"/><use href="#DejaVuSans-30" transform="translate(190.869141 0)"/><use href="#DejaVuSans-30" transform="translate(254.492188 0)"/></g></g></g></g><g id="matplotlib.axis_4"><g id="ytick_7"><g id="line2d_24"><g><use href="#m5d545ce8f8" x="75.96" y="469.020537" style="stroke: #000000; stroke-width: 0.8"/></g></g><g id="text_23"><!-- 9.750 --><g transform="translate(40.331875 472.819756) scale(0.1 -0.1)"><use href="#DejaVuSans-39"/><use href="#DejaVuSans-2e" transform="translate(63.623047 0)"/><use href="#DejaVuSans-37" transform="translate(95.410156 0)"/><use href="#DejaVuSans-35" transform="translate(159.033203 0)"/><use href="#DejaVuSans-30" transform="translate(222.65625 0)"/></g></g></g><g id="ytick_8"><g id="line2d_25"><g><use href="#m5d545ce8f8" x="75.96" y="443.408597" style="stroke: #000000; stroke-width: 0.8"/></g></g><g id="text_24"><!-- 9.775 --><g transform="translate(40.331875 447.207816) scale(0.1 -0.1)"><use href="#DejaVuSans-39"/><use href="#DejaVuSans-2e" transform="translate(63.623047 0)"/><use href="#DejaVuSans-37" transform="translate(95.410156 0)"/><use href="#DejaVuSans-37" transform="translate(159.033203 0)"/><use href="#DejaVuSans-35" transform="translate(222.65625 0)"/></g></g></g><g id="ytick_9"><g id="line2d_26"><g><use href="#m5d545ce8f8" x="75.96" y="417.796657" style="stroke: #000000; stroke-width: 0.8"/></g></g><g id="text_25"><!-- 9.800 --><g transform="translate(40.331875 421.595875) scale(0.1 -0.1)"><use href="#DejaVuSans-39"/><use href="#DejaVuSans-2e" transform="translate(63.623047 0)"/><use href="#DejaVuSans-38" transform="translate(95.410156 0)"/><use href="#DejaVuSans-30" transform="translate(159.033203 0)"/><use href="#DejaVuSans-30" transform="translate(222.65625 0)"/></g></g></g><g id="ytick_10"><g id="line2d_27"><g><use href="#m5d545ce8f8" x="75.96" y="392.184716" style="stroke: #000000; stroke-width: 0.8"/></g></g><g id="text_26"><!-- 9.825 --><g transform="translate(40.331875 395.983935) scale(0.1 -0.1)"><use href="#DejaVuSans-39"/><use href="#DejaVuSans-2e" transform="translate(63.623047 0)"/><use href="#DejaVuSans-38" transform="translate(95.410156 0)"/><use href="#DejaVuSans-32" transform="translate(159.033203 0)"/><use href="#DejaVuSans-35" transform="translate(222.65625 0)"/></g></g></g><g id="ytick_11"><g id="line2d_28"><g><use href="#m5d545ce8f8" x="75.96" y="366.572776" style="stroke: #000000; stroke-width: 0.8"/></g></g><g id="text_27"><!-- 9.850 --><g transform="translate(40.331875 370.371995) scale(0.1 -0.1)"><use href="#DejaVuSans-39"/><use href="#DejaVuSans-2e" transform="translate(63.623047 0)"/><use href="#DejaVuSans-38" transform="translate(95.410156 0)"/><use href="#DejaVuSans-35" transform="translate(159.033203 0)"/><use href="#DejaVuSans-30" transform="translate(222.65625 0)"/></g></g></g><g id="ytick_12"><g id="line2d_29"><g><use href="#m5d545ce8f8" x="75.96" y="340.960836" style="stroke: #000000; stroke-width: 0.8"/></g></g><g id="text_28"><!-- 9.875 --><g transform="translate(40.331875 344.760055) scale(0.1 -0.1)"><use href="#DejaVuSans-39"/><use href="#DejaVuSans-2e" transform="translate(63.623047 0)"/><use href="#DejaVuSans-38" transform="translate(95.410156 0)"/><use href="#DejaVuSans-37" transform="translate(159.033203 0)"/><use href="#DejaVuSans-35" transform="translate(222.65625 0)"/></g></g></g><g id="ytick_13"><g id="line2d_30"><g><use href="#m5d545ce8f8" x="75.96" y="315.348896" style="stroke: #000000; stroke-width: 0.8"/></g></g><g id="text_29"><!-- 9.900 --><g transform="translate(40.331875 319.148114) scale(0.1 -0.1)"><use href="#DejaVuSans-39"/><use href="#DejaVuSans-2e" transform="translate(63.623047 0)"/><use href="#DejaVuSans-39" transform="translate(95.410156 0)"/><use href="#DejaVuSans-30" transform="translate(159.033203 0)"/><use href="#DejaVuSans-30" transform="translate(222.65625 0)"/></g></g></g><g id="ytick_14"><g id="line2d_31"><g><use href="#m5d545ce8f8" x="75.96" y="289.736955" style="stroke: #000000; stroke-width: 0.8"/></g></g><g id="text_30"><!-- 9.925 --><g transform="translate(40.331875 293.536174) scale(0.1 -0.1)"><use href="#DejaVuSans-39"/><use href="#DejaVuSans-2e" transform="translate(63.623047 0)"/><use href="#DejaVuSans-39" transform="translate(95.410156 0)"/><use href="#DejaVuSans-32" transform="translate(159.033203 0)"/><use href="#DejaVuSans-35" transform="translate(222.65625 0)"/></g></g></g></g><g id="line2d_32"><path d="M 116.64 479.88 L 116.64 273.96 " clip-path="url(#p513e1b9102)" style="fill: none; stroke-dasharray: 1.5,2.475; stroke-dashoffset: 0; stroke: #800080; stroke-width: 1.5"/></g><g id="line2d_33"><path d="M 938.16 479.88 L 938.16 273.96 " clip-path="url(#p513e1b9102)" style="fill: none; stroke-dasharray: 1.5,2.475; stroke-dashoffset: 0; stroke: #800080; stroke-width: 1.5"/></g><g id="line2d_34"><path d="M 117 373.949015 L 938.52 373.949015 " clip-path="url(#p513e1b9102)" style="fill: none; stroke: #ffa500; stroke-width: 2; stroke-linecap: square"/></g><g id="line2d_35"><path d="M 75.96 376.407761 L 979.632 376.407761 " clip-path="url(#p513e1b9102)" style="fill: none; stroke: #ff0000; stroke-width: 1.5; stroke-linecap: square"/></g><g id="patch_10"><path d="M 75.96 479.88 L 75.96 273.96 " style="fill: none; stroke: #000000; stroke-width: 0.8; stroke-linejoin: miter; stroke-linecap: square"/></g><g id="patch_11"><path d="M 1069.56 479.88 L 1069.56 273.96 " style="fill: none; stroke: #000000; stroke-width: 0.8; stroke-linejoin: miter; stroke-linecap: square"/></g><g id="patch_12"><path d="M 75.96 479.88 L 1069.56 479.88 " style="fill: none; stroke: #000000; stroke-width: 0.8; stroke-linejoin: miter; stroke-linecap: square"/></g><g id="patch_13"><path d="M 75.96 273.96 L 1069.56 273.96 " style="fill: none; stroke: #000000; stroke-width: 0.8; stroke-linejoin: miter; stroke-linecap: square"/></g><g id="text_31"><!-- 3997 --><g transform="translate(514.459 472.063238) scale(0.1 -0.1)"><use href="#DejaVuSans-33"/><use href="#DejaVuSans-39" transform="translate(63.623047 0)"/><use href="#DejaVuSans-39" transform="translate(127.246094 0)"/><use href="#DejaVuSans-37" transform="translate(190.869141 0)"/></g></g><g id="text_32"><!-- Magnitude Estimates --><g transform="translate(509.438438 267.96) scale(0.12 -0.12)"><defs><path id="DejaVuSans-4d" d="M 628 4666 L 1569 4666 L 2759 1491 L 3956 4666 L 4897 4666 L 4897 0 L 4281 0 L 4281 4097 L 3078 897 L 2444 897 L 1241 4097 L 1241 0 L 628 0 L 628 4666 z " transform="scale(0.015625)"/><path id="DejaVuSans-75" d="M 544 1381 L 544 3500 L 1119 3500 L 1119 1403 Q 1119 906 1312 657 Q 1506 409 1894 409 Q 2359 409 2629 706 Q 2900 1003 2900 1516 L 2900 3500 L 3475 3500 L 3475 0 L 2900 0 L 2900 538 Q 2691 219 2414 64 Q 2138 -91 1772 -91 Q 1169 -91 856 284 Q 544 659 544 1381 z M 1991 3584 L 1991 3584 z " transform="scale(0.015625)"/><path id="DejaVuSans-45" d="M 628 4666 L 3578 4666 L 3578 4134 L 1259 4134 L 1259 2753 L 3481 2753 L 3481 2222 L 1259 2222 L 1259 531 L 3634 531 L 3634 0 L 628 0 L 628 4666 z " transform="scale(0.015625)"/><path id="DejaVuSans-73" d="M 2834 3397 L 2834 2853 Q 2591 2978 2328 3040 Q 2066 3103 1784 3103 Q 1356 3103 1142 2972 Q 928 2841 928 2578 Q 928 2378 1081 2264 Q 1234 2150 1697 2047 L 1894 2003 Q 2506 1872 2764 1633 Q 3022 1394 3022 966 Q 3022 478 2636 193 Q 2250 -91 1575 -91 Q 1294 -91 989 -36 Q 684 19 347 128 L 347 722 Q 666 556 975 473 Q 1284 391 1588 391 Q 1994 391 2212 530 Q 2431 669 2431 922 Q 2431 1156 2273 1281 Q 2116 1406 1581 1522 L 1381 1569 Q 847 1681 609 1914 Q 372 2147 372 2553 Q 372 3047 722 3315 Q 1072 3584 1716 3584 Q 2034 3584 2315 3537 Q 2597 3491 2834 3397 z " transform="scale(0.015625)"/></defs><use href="#DejaVuSans-4d"/><use href="#DejaVuSans-61" transform="translate(86.279297 0)"/><use href="#DejaVuSans-67" transform="translate(147.558594 0)"/><use href="#DejaVuSans-6e" transform="translate(211.035156 0)"/><use href="#DejaVuSans-69" transform="translate(274.414062 0)"/><use href="#DejaVuSans-74" transform="translate(302.197266 0)"/><use href="#DejaVuSans-75" transform="translate(341.40625 0)"/><use href="#DejaVuSans-64" transform="translate(404.785156 0)"/><use href="#DejaVuSans-65" transform="translate(468.261719 0)"/><use href="#DejaVuSans-20" transform="translate(529.785156 0)"/><use href="#DejaVuSans-45" transform="translate(561.572266 0)"/><use href="#DejaVuSans-73" transform="translate(624.755859 0)"/><use href="#DejaVuSans-74" transform="translate(676.855469 0)"/><use href="#DejaVuSans-69" transform="translate(716.064453 0)"/><use href="#DejaVuSans-6d" transform="translate(743.847656 0)"/><use href="#DejaVuSans-61" transform="translate(841.259766 0)"/><use href="#DejaVuSans-74" transform="translate(902.539062 0)"/><use href="#DejaVuSans-65" transform="translate(941.748047 0)"/><use href="#DejaVuSans-73" transform="translate(1003.271484 0)"/></g></g><g id="legend_3"><g id="patch_14"><path d="M 985.76 312.776562 L 1062.56 312.776562 Q 1064.56 312.776562 1064.56 310.776562 L 1064.56 280.96 Q 1064.56 278.96 1062.56 278.96 L 985.76 278.96 Q 983.76 278.96 983.76 280.96 L 983.76 310.776562 Q 983.76 312.776562 985.76 312.776562 z " style="fill: #ffffff; opacity: 0.8; stroke: #cccccc; stroke-linejoin: miter"/></g><g id="line2d_36"><path d="M 987.76 287.058437 L 997.76 287.058437 L 1007.76 287.058437 " style="fill: none; stroke: #ffa500; stroke-width: 2; stroke-linecap: square"/></g><g id="text_33"><!-- mag$_{OBSID}$ --><g transform="translate(1015.76 290.558437) scale(0.1 -0.1)"><defs><path id="DejaVuSans-Oblique-4f" d="M 2919 4238 Q 2400 4238 2003 3986 Q 1606 3734 1313 3219 Q 1125 2891 1026 2522 Q 928 2153 928 1778 Q 928 1128 1239 775 Q 1550 422 2119 422 Q 2631 422 3032 676 Q 3434 931 3719 1434 Q 3909 1772 4009 2142 Q 4109 2513 4109 2881 Q 4109 3528 3796 3883 Q 3484 4238 2919 4238 z M 2100 -91 Q 1241 -91 748 418 Q 256 928 256 1813 Q 256 2319 448 2847 Q 641 3375 978 3788 Q 1375 4272 1862 4511 Q 2350 4750 2938 4750 Q 3794 4750 4287 4245 Q 4781 3741 4781 2869 Q 4781 2331 4593 1812 Q 4406 1294 4056 872 Q 3656 384 3173 146 Q 2691 -91 2100 -91 z " transform="scale(0.015625)"/><path id="DejaVuSans-Oblique-42" d="M 1081 4666 L 2694 4666 Q 3350 4666 3675 4422 Q 4000 4178 4000 3688 Q 4000 3238 3720 2911 Q 3441 2584 2988 2516 Q 3375 2428 3569 2181 Q 3763 1934 3763 1522 Q 3763 819 3242 409 Q 2722 0 1819 0 L 172 0 L 1081 4666 z M 1234 2228 L 903 519 L 1919 519 Q 2491 519 2800 781 Q 3109 1044 3109 1522 Q 3109 1891 2904 2059 Q 2700 2228 2247 2228 L 1234 2228 z M 1606 4147 L 1331 2741 L 2272 2741 Q 2775 2741 3058 2959 Q 3341 3178 3341 3566 Q 3341 3869 3150 4008 Q 2959 4147 2541 4147 L 1606 4147 z " transform="scale(0.015625)"/><path id="DejaVuSans-Oblique-49" d="M 1081 4666 L 1716 4666 L 806 0 L 172 0 L 1081 4666 z " transform="scale(0.015625)"/><path id="DejaVuSans-Oblique-44" d="M 1081 4666 L 2438 4666 Q 3519 4666 4070 4208 Q 4622 3750 4622 2847 Q 4622 2250 4412 1698 Q 4203 1147 3834 769 Q 3463 381 2891 190 Q 2319 0 1538 0 L 172 0 L 1081 4666 z M 1613 4147 L 909 519 L 1734 519 Q 2794 519 3375 1128 Q 3956 1738 3956 2847 Q 3956 3519 3581 3833 Q 3206 4147 2406 4147 L 1613 4147 z " transform="scale(0.015625)"/></defs><use href="#DejaVuSans-6d"/><use href="#DejaVuSans-61" transform="translate(97.412109 0)"/><use href="#DejaVuSans-67" transform="translate(158.691406 0)"/><use href="#DejaVuSans-Oblique-4f" transform="translate(223.125 -16.40625) scale(0.7)"/><use href="#DejaVuSans-Oblique-42" transform="translate(278.222656 -16.40625) scale(0.7)"/><use href="#DejaVuSans-Oblique-53" transform="translate(326.245117 -16.40625) scale(0.7)"/><use href="#DejaVuSans-Oblique-49" transform="translate(370.678711 -16.40625) scale(0.7)"/><use href="#DejaVuSans-Oblique-44" transform="translate(391.323242 -16.40625) scale(0.7)"/></g></g><g id="line2d_37"><path d="M 987.76 303.196875 L 997.76 303.196875 L 1007.76 303.196875 " style="fill: none; stroke: #ff0000; stroke-width: 1.5; stroke-linecap: square"/></g><g id="text_34"><!-- mag --><g transform="translate(1015.76 306.696875) scale(0.1 -0.1)"><use href="#DejaVuSans-6d"/><use href="#DejaVuSans-61" transform="translate(97.412109 0)"/><use href="#DejaVuSans-67" transform="translate(158.691406 0)"/></g></g></g><g id="legend_4"><g id="patch_15"><path d="M 972.911563 474.88 L 1062.56 474.88 Q 1064.56 474.88 1064.56 472.88 L 1064.56 444.05375 Q 1064.56 442.05375 1062.56 442.05375 L 972.911563 442.05375 Q 970.911563 442.05375 970.911563 444.05375 L 970.911563 472.88 Q 970.911563 474.88 972.911563 474.88 z " style="fill: #ffffff; opacity: 0.8; stroke: #cccccc; stroke-linejoin: miter"/></g><g id="line2d_38"/><g id="text_35"><!-- Highlighted --><g transform="translate(1002.911563 453.652187) scale(0.1 -0.1)"><use href="#DejaVuSans-48"/><use href="#DejaVuSans-69" transform="translate(75.195312 0)"/><use href="#DejaVuSans-67" transform="translate(102.978516 0)"/><use href="#DejaVuSans-68" transform="translate(166.455078 0)"/><use href="#DejaVuSans-6c" transform="translate(229.833984 0)"/><use href="#DejaVuSans-69" transform="translate(257.617188 0)"/><use href="#DejaVuSans-67" transform="translate(285.400391 0)"/><use href="#DejaVuSans-68" transform="translate(348.876953 0)"/><use href="#DejaVuSans-74" transform="translate(412.255859 0)"/><use href="#DejaVuSans-65" transform="translate(451.464844 0)"/><use href="#DejaVuSans-64" transform="translate(512.988281 0)"/></g></g><g id="line2d_39"/><g id="text_36"><!-- OK --><g transform="translate(1002.911563 468.800312) scale(0.1 -0.1)"><use href="#DejaVuSans-4f"/><use href="#DejaVuSans-4b" transform="translate(78.710938 0)"/></g></g></g></g><g id="axes_3"><g id="patch_16"><path d="M 75.96 728.28 L 1069.56 728.28 L 1069.56 522.36 L 75.96 522.36 L 75.96 728.28 z " style="fill: none; opacity: 0"/></g><g id="matplotlib.axis_5"><g id="xtick_11"><g id="line2d_40"><g><use href="#m1504cfccaf" x="117" y="728.28" style="stroke: #000000; stroke-width: 0.8"/></g></g><g id="text_37"><!-- 0 --><g transform="translate(113.81875 742.878438) scale(0.1 -0.1)"><use href="#DejaVuSans-30"/></g></g></g><g id="xtick_12"><g id="line2d_41"><g><use href="#m1504cfccaf" x="322.38" y="728.28" style="stroke: #000000; stroke-width: 0.8"/></g></g><g id="text_38"><!-- 10000 --><g transform="translate(306.47375 742.878438) scale(0.1 -0.1)"><use href="#DejaVuSans-31"/><use href="#DejaVuSans-30" transform="translate(63.623047 0)"/><use href="#DejaVuSans-30" transform="translate(127.246094 0)"/><use href="#DejaVuSans-30" transform="translate(190.869141 0)"/><use href="#DejaVuSans-30" transform="translate(254.492188 0)"/></g></g></g><g id="xtick_13"><g id="line2d_42"><g><use href="#m1504cfccaf" x="527.76" y="728.28" style="stroke: #000000; stroke-width: 0.8"/></g></g><g id="text_39"><!-- 20000 --><g transform="translate(511.85375 742.878438) scale(0.1 -0.1)"><use href="#DejaVuSans-32"/><use href="#DejaVuSans-30" transform="translate(63.623047 0)"/><use href="#DejaVuSans-30" transform="translate(127.246094 0)"/><use href="#DejaVuSans-30" transform="translate(190.869141 0)"/><use href="#DejaVuSans-30" transform="translate(254.492188 0)"/></g></g></g><g id="xtick_14"><g id="line2d_43"><g><use href="#m1504cfccaf" x="733.14" y="728.28" style="stroke: #000000; stroke-width: 0.8"/></g></g><g id="text_40"><!-- 30000 --><g transform="translate(717.23375 742.878438) scale(0.1 -0.1)"><use href="#DejaVuSans-33"/><use href="#DejaVuSans-30" transform="translate(63.623047 0)"/><use href="#DejaVuSans-30" transform="translate(127.246094 0)"/><use href="#DejaVuSans-30" transform="translate(190.869141 0)"/><use href="#DejaVuSans-30" transform="translate(254.492188 0)"/></g></g></g><g id="xtick_15"><g id="line2d_44"><g><use href="#m1504cfccaf" x="938.52" y="728.28" style="stroke: #000000; stroke-width: 0.8"/></g></g><g id="text_41"><!-- 40000 --><g transform="translate(922.61375 742.878438) scale(0.1 -0.1)"><use href="#DejaVuSans-34"/><use href="#DejaVuSans-30" transform="translate(63.623047 0)"/><use href="#DejaVuSans-30" transform="translate(127.246094 0)"/><use href="#DejaVuSans-30" transform="translate(190.869141 0)"/><use href="#DejaVuSans-30" transform="translate(254.492188 0)"/></g></g></g></g><g id="matplotlib.axis_6"><g id="ytick_15"><g id="line2d_45"><path d="M 75.96 726.84 L 1069.56 726.84 " clip-path="url(#pd9330b2442)" style="fill: none; stroke-dasharray: 0.8,1.32; stroke-dashoffset: 0; stroke: #b0b0b0; stroke-width: 0.8"/></g><g id="line2d_46"><g><use href="#m5d545ce8f8" x="75.96" y="726.84" style="stroke: #000000; stroke-width: 0.8"/></g></g><g id="text_42"><!-- 0 --><g transform="translate(62.5975 730.639219) scale(0.1 -0.1)"><use href="#DejaVuSans-30"/></g></g></g><g id="ytick_16"><g id="line2d_47"><path d="M 75.96 708.12 L 1069.56 708.12 " clip-path="url(#pd9330b2442)" style="fill: none; stroke-dasharray: 0.8,1.32; stroke-dashoffset: 0; stroke: #b0b0b0; stroke-width: 0.8"/></g><g id="line2d_48"><g><use href="#m5d545ce8f8" x="75.96" y="708.12" style="stroke: #000000; stroke-width: 0.8"/></g></g><g id="text_43"><!-- 5 --><g transform="translate(62.5975 711.919219) scale(0.1 -0.1)"><use href="#DejaVuSans-35"/></g></g></g><g id="ytick_17"><g id="line2d_49"><path d="M 75.96 689.4 L 1069.56 689.4 " clip-path="url(#pd9330b2442)" style="fill: none; stroke-dasharray: 0.8,1.32; stroke-dashoffset: 0; stroke: #b0b0b0; stroke-width: 0.8"/></g><g id="line2d_50"><g><use href="#m5d545ce8f8" x="75.96" y="689.4" style="stroke: #000000; stroke-width: 0.8"/></g></g><g id="text_44"><!-- 10 --><g transform="translate(56.235 693.199219) scale(0.1 -0.1)"><use href="#DejaVuSans-31"/><use href="#DejaVuSans-30" transform="translate(63.623047 0)"/></g></g></g><g id="ytick_18"><g id="line2d_51"><path d="M 75.96 546.12 L 1069.56 546.12 " clip-path="url(#pd9330b2442)" style="fill: none; stroke-dasharray: 0.8,1.32; stroke-dashoffset: 0; stroke: #b0b0b0; stroke-width: 0.8"/></g><g id="line2d_52"><g><use href="#m5d545ce8f8" x="75.96" y="546.12" style="stroke: #000000; stroke-width: 0.8"/></g></g><g id="text_45"><!-- not Kalman --><g transform="translate(11.91 549.919219) scale(0.1 -0.1)"><use href="#DejaVuSans-6e"/><use href="#DejaVuSans-6f" transform="translate(63.378906 0)"/><use href="#DejaVuSans-74" transform="translate(124.560547 0)"/><use href="#DejaVuSans-20" transform="translate(163.769531 0)"/><use href="#DejaVuSans-4b" transform="translate(195.556641 0)"/><use href="#DejaVuSans-61" transform="translate(259.382812 0)"/><use href="#DejaVuSans-6c" transform="translate(320.662109 0)"/><use href="#DejaVuSans-6d" transform="translate(348.445312 0)"/><use href="#DejaVuSans-61" transform="translate(445.857422 0)"/><use href="#DejaVuSans-6e" transform="translate(507.136719 0)"/></g></g></g><g id="ytick_19"><g id="line2d_53"><path d="M 75.96 569.88 L 1069.56 569.88 " clip-path="url(#pd9330b2442)" style="fill: none; stroke-dasharray: 0.8,1.32; stroke-dashoffset: 0; stroke: #b0b0b0; stroke-width: 0.8"/></g><g id="line2d_54"><g><use href="#m5d545ce8f8" x="75.96" y="569.88" style="stroke: #000000; stroke-width: 0.8"/></g></g><g id="text_46"><!-- not track --><g transform="translate(23.956875 573.679219) scale(0.1 -0.1)"><defs><path id="DejaVuSans-72" d="M 2631 2963 Q 2534 3019 2420 3045 Q 2306 3072 2169 3072 Q 1681 3072 1420 2755 Q 1159 2438 1159 1844 L 1159 0 L 581 0 L 581 3500 L 1159 3500 L 1159 2956 Q 1341 3275 1631 3429 Q 1922 3584 2338 3584 Q 2397 3584 2469 3576 Q 2541 3569 2628 3553 L 2631 2963 z " transform="scale(0.015625)"/><path id="DejaVuSans-63" d="M 3122 3366 L 3122 2828 Q 2878 2963 2633 3030 Q 2388 3097 2138 3097 Q 1578 3097 1268 2742 Q 959 2388 959 1747 Q 959 1106 1268 751 Q 1578 397 2138 397 Q 2388 397 2633 464 Q 2878 531 3122 666 L 3122 134 Q 2881 22 2623 -34 Q 2366 -91 2075 -91 Q 1284 -91 818 406 Q 353 903 353 1747 Q 353 2603 823 3093 Q 1294 3584 2113 3584 Q 2378 3584 2631 3529 Q 2884 3475 3122 3366 z " transform="scale(0.015625)"/><path id="DejaVuSans-6b" d="M 581 4863 L 1159 4863 L 1159 1991 L 2875 3500 L 3609 3500 L 1753 1863 L 3688 0 L 2938 0 L 1159 1709 L 1159 0 L 581 0 L 581 4863 z " transform="scale(0.015625)"/></defs><use href="#DejaVuSans-6e"/><use href="#DejaVuSans-6f" transform="translate(63.378906 0)"/><use href="#DejaVuSans-74" transform="translate(124.560547 0)"/><use href="#DejaVuSans-20" transform="translate(163.769531 0)"/><use href="#DejaVuSans-74" transform="translate(195.556641 0)"/><use href="#DejaVuSans-72" transform="translate(234.765625 0)"/><use href="#DejaVuSans-61" transform="translate(275.878906 0)"/><use href="#DejaVuSans-63" transform="translate(337.158203 0)"/><use href="#DejaVuSans-6b" transform="translate(392.138672 0)"/></g></g></g><g id="ytick_20"><g id="line2d_55"><path d="M 75.96 592.92 L 1069.56 592.92 " clip-path="url(#pd9330b2442)" style="fill: none; stroke-dasharray: 0.8,1.32; stroke-dashoffset: 0; stroke: #b0b0b0; stroke-width: 0.8"/></g><g id="line2d_56"><g><use href="#m5d545ce8f8" x="75.96" y="592.92" style="stroke: #000000; stroke-width: 0.8"/></g></g><g id="text_47"><!-- Sat. pixel. --><g transform="translate(19.364687 596.719219) scale(0.1 -0.1)"><defs><path id="DejaVuSans-70" d="M 1159 525 L 1159 -1331 L 581 -1331 L 581 3500 L 1159 3500 L 1159 2969 Q 1341 3281 1617 3432 Q 1894 3584 2278 3584 Q 2916 3584 3314 3078 Q 3713 2572 3713 1747 Q 3713 922 3314 415 Q 2916 -91 2278 -91 Q 1894 -91 1617 61 Q 1341 213 1159 525 z M 3116 1747 Q 3116 2381 2855 2742 Q 2594 3103 2138 3103 Q 1681 3103 1420 2742 Q 1159 2381 1159 1747 Q 1159 1113 1420 752 Q 1681 391 2138 391 Q 2594 391 2855 752 Q 3116 1113 3116 1747 z " transform="scale(0.015625)"/><path id="DejaVuSans-78" d="M 3513 3500 L 2247 1797 L 3578 0 L 2900 0 L 1881 1375 L 863 0 L 184 0 L 1544 1831 L 300 3500 L 978 3500 L 1906 2253 L 2834 3500 L 3513 3500 z " transform="scale(0.015625)"/></defs><use href="#DejaVuSans-53"/><use href="#DejaVuSans-61" transform="translate(63.476562 0)"/><use href="#DejaVuSans-74" transform="translate(124.755859 0)"/><use href="#DejaVuSans-2e" transform="translate(163.964844 0)"/><use href="#DejaVuSans-20" transform="translate(195.751953 0)"/><use href="#DejaVuSans-70" transform="translate(227.539062 0)"/><use href="#DejaVuSans-69" transform="translate(291.015625 0)"/><use href="#DejaVuSans-78" transform="translate(318.798828 0)"/><use href="#DejaVuSans-65" transform="translate(374.853516 0)"/><use href="#DejaVuSans-6c" transform="translate(436.376953 0)"/><use href="#DejaVuSans-2e" transform="translate(464.160156 0)"/></g></g></g><g id="ytick_21"><g id="line2d_57"><path d="M 75.96 616.68 L 1069.56 616.68 " clip-path="url(#pd9330b2442)" style="fill: none; stroke-dasharray: 0.8,1.32; stroke-dashoffset: 0; stroke: #b0b0b0; stroke-width: 0.8"/></g><g id="line2d_58"><g><use href="#m5d545ce8f8" x="75.96" y="616.68" style="stroke: #000000; stroke-width: 0.8"/></g></g><g id="text_48"><!-- Ion. rad. --><g transform="translate(27.431875 620.479219) scale(0.1 -0.1)"><use href="#DejaVuSans-49"/><use href="#DejaVuSans-6f" transform="translate(29.492188 0)"/><use href="#DejaVuSans-6e" transform="translate(90.673828 0)"/><use href="#DejaVuSans-2e" transform="translate(154.052734 0)"/><use href="#DejaVuSans-20" transform="translate(185.839844 0)"/><use href="#DejaVuSans-72" transform="translate(217.626953 0)"/><use href="#DejaVuSans-61" transform="translate(258.740234 0)"/><use href="#DejaVuSans-64" transform="translate(320.019531 0)"/><use href="#DejaVuSans-2e" transform="translate(383.496094 0)"/></g></g></g><g id="ytick_22"><g id="line2d_59"><path d="M 75.96 640.44 L 1069.56 640.44 " clip-path="url(#pd9330b2442)" style="fill: none; stroke-dasharray: 0.8,1.32; stroke-dashoffset: 0; stroke: #b0b0b0; stroke-width: 0.8"/></g><g id="line2d_60"><g><use href="#m5d545ce8f8" x="75.96" y="640.44" style="stroke: #000000; stroke-width: 0.8"/></g></g><g id="text_49"><!-- dr &gt; 5 --><g transform="translate(37.402187 644.239219) scale(0.1 -0.1)"><defs><path id="DejaVuSans-3e" d="M 678 3150 L 678 3719 L 4684 2266 L 4684 1747 L 678 294 L 678 863 L 3897 2003 L 678 3150 z " transform="scale(0.015625)"/></defs><use href="#DejaVuSans-64"/><use href="#DejaVuSans-72" transform="translate(63.476562 0)"/><use href="#DejaVuSans-20" transform="translate(104.589844 0)"/><use href="#DejaVuSans-3e" transform="translate(136.376953 0)"/><use href="#DejaVuSans-20" transform="translate(220.166016 0)"/><use href="#DejaVuSans-35" transform="translate(251.953125 0)"/></g></g></g><g id="ytick_23"><g id="line2d_61"><path d="M 75.96 663.48 L 1069.56 663.48 " clip-path="url(#pd9330b2442)" style="fill: none; stroke-dasharray: 0.8,1.32; stroke-dashoffset: 0; stroke: #b0b0b0; stroke-width: 0.8"/></g><g id="line2d_62"><g><use href="#m5d545ce8f8" x="75.96" y="663.48" style="stroke: #000000; stroke-width: 0.8"/></g></g><g id="text_50"><!-- OBS not OK --><g transform="translate(10.89125 667.279219) scale(0.1 -0.1)"><defs><path id="DejaVuSans-42" d="M 1259 2228 L 1259 519 L 2272 519 Q 2781 519 3026 730 Q 3272 941 3272 1375 Q 3272 1813 3026 2020 Q 2781 2228 2272 2228 L 1259 2228 z M 1259 4147 L 1259 2741 L 2194 2741 Q 2656 2741 2882 2914 Q 3109 3088 3109 3444 Q 3109 3797 2882 3972 Q 2656 4147 2194 4147 L 1259 4147 z M 628 4666 L 2241 4666 Q 2963 4666 3353 4366 Q 3744 4066 3744 3513 Q 3744 3084 3544 2831 Q 3344 2578 2956 2516 Q 3422 2416 3680 2098 Q 3938 1781 3938 1306 Q 3938 681 3513 340 Q 3088 0 2303 0 L 628 0 L 628 4666 z " transform="scale(0.015625)"/></defs><use href="#DejaVuSans-4f"/><use href="#DejaVuSans-42" transform="translate(78.710938 0)"/><use href="#DejaVuSans-53" transform="translate(145.564453 0)"/><use href="#DejaVuSans-20" transform="translate(209.041016 0)"/><use href="#DejaVuSans-6e" transform="translate(240.828125 0)"/><use href="#DejaVuSans-6f" transform="translate(304.207031 0)"/><use href="#DejaVuSans-74" transform="translate(365.388672 0)"/><use href="#DejaVuSans-20" transform="translate(404.597656 0)"/><use href="#DejaVuSans-4f" transform="translate(436.384766 0)"/><use href="#DejaVuSans-4b" transform="translate(515.095703 0)"/></g></g></g><g id="ytick_24"><g id="line2d_63"><defs><path id="mc3d89a154a" d="M 0 0 L -2 0 " style="stroke: #000000; stroke-width: 0.6"/></defs><g><use href="#mc3d89a154a" x="75.96" y="717.48" style="stroke: #000000; stroke-width: 0.6"/></g></g></g><g id="ytick_25"><g id="line2d_64"><g><use href="#mc3d89a154a" x="75.96" y="698.76" style="stroke: #000000; stroke-width: 0.6"/></g></g></g></g><g id="line2d_65"><path d="M 75.96 687.24 L 1069.56 687.24 " clip-path="url(#pd9330b2442)" style="fill: none; stroke: #000000; stroke-linecap: square"/></g><g id="line2d_66"><path d="M 116.64 728.28 L 116.64 522.36 " clip-path="url(#pd9330b2442)" style="fill: none; stroke-dasharray: 1.5,2.475; stroke-dashoffset: 0; stroke: #800080; stroke-width: 1.5"/></g><g id="line2d_67"><path d="M 938.16 728.28 L 938.16 522.36 " clip-path="url(#pd9330b2442)" style="fill: none; stroke-dasharray: 1.5,2.475; stroke-dashoffset: 0; stroke: #800080; stroke-width: 1.5"/></g><g id="patch_17"><path d="M 75.96 728.28 L 75.96 522.36 " style="fill: none; stroke: #000000; stroke-width: 0.8; stroke-linejoin: miter; stroke-linecap: square"/></g><g id="patch_18"><path d="M 1069.56 728.28 L 1069.56 522.36 " style="fill: none; stroke: #000000; stroke-width: 0.8; stroke-linejoin: miter; stroke-linecap: square"/></g><g id="patch_19"><path d="M 75.96 728.28 L 1069.56 728.28 " style="fill: none; stroke: #000000; stroke-width: 0.8; stroke-linejoin: miter; stroke-linecap: square"/></g><g id="patch_20"><path d="M 75.96 522.36 L 1069.56 522.36 " style="fill: none; stroke: #000000; stroke-width: 0.8; stroke-linejoin: miter; stroke-linecap: square"/></g><g id="text_51"><!-- dr --><g transform="translate(49.46756 713.649207) rotate(-90) scale(0.1 -0.1)"><use href="#DejaVuSans-64"/><use href="#DejaVuSans-72" transform="translate(63.476562 0)"/></g></g></g></g><defs><clipPath id="pb078de38de"><rect x="75.96" y="25.56" width="993.6" height="205.92"/></clipPath><clipPath id="p513e1b9102"><rect x="75.96" y="273.96" width="993.6" height="205.92"/></clipPath><clipPath id="pd9330b2442"><rect x="75.96" y="522.36" width="993.6" height="205.92"/></clipPath></defs></svg> <svg width="1500" height="1050" viewBox="0 0 1500 1050"><path d="M1367.5 260.5h0" stroke="#f00" stroke-width="4.0" style="stroke-linecap:round" fill="none"/><path d="M1367.5 281.5h0m0 345h0" stroke="#ffa500" stroke-width="4.0" style="stroke-linecap:round" fill="none"/><path d="M1367.5 302.5h0m0 345h0" stroke="#000" stroke-width="4.0" style="stroke-linecap:round" fill="none"/></svg></div></body></html>
